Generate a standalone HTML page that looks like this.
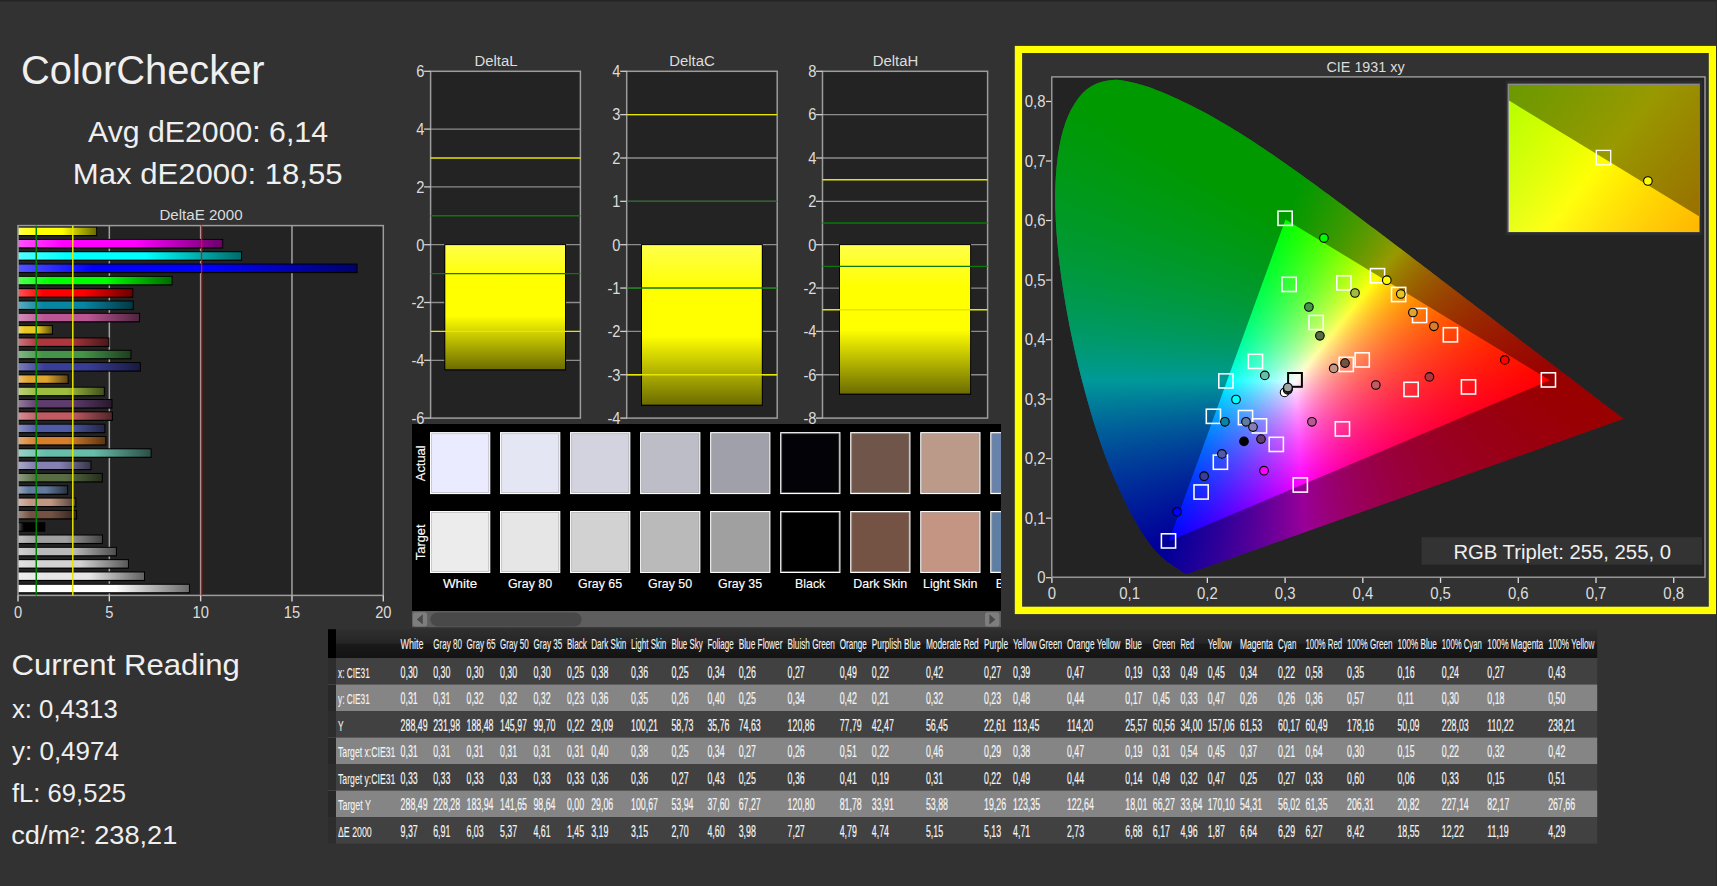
<!DOCTYPE html><html><head><meta charset="utf-8"><title>ColorChecker</title><style>
html,body{margin:0;padding:0;background:#323232;overflow:hidden}
body{width:1717px;height:886px;position:relative;font-family:"Liberation Sans",sans-serif}
svg{position:absolute;left:0;top:0;font-family:"Liberation Sans",sans-serif}
#cie{position:absolute;left:1052px;top:78px;width:653px;height:500px;clip-path:polygon(135.63px 495.82px,135.55px 495.82px,135.39px 495.88px,135.24px 495.88px,135.01px 495.94px,134.77px 495.94px,134.46px 495.94px,134.07px 495.94px,133.53px 495.76px,132.67px 495.35px,131.59px 494.69px,130.03px 493.68px,128.09px 492.31px,125.52px 490.58px,122.03px 488.26px,117.67px 485.28px,115.09px 483.39px,112.23px 481.11px,110.2px 479.4px,108.04px 477.47px,105.62px 475.04px,104.03px 473.3px,102.36px 471.42px,100.59px 469.33px,98.73px 467px,96.76px 464.37px,95.06px 461.99px,93.29px 459.48px,91.46px 456.78px,89.56px 453.85px,87.57px 450.64px,85.49px 447.1px,83.33px 443.28px,81.09px 439.22px,78.77px 434.88px,76.37px 430.22px,73.87px 425.2px,71.27px 419.76px,68.54px 413.96px,65.68px 407.82px,62.73px 401.32px,59.72px 394.41px,56.7px 387.07px,53.7px 379.26px,50.7px 370.97px,47.66px 362.22px,44.61px 353.03px,41.57px 343.43px,38.55px 333.45px,35.59px 323.1px,32.63px 312.28px,29.64px 300.94px,26.69px 289.22px,23.82px 277.23px,21.09px 265.12px,18.57px 253px,16.19px 240.73px,13.91px 228.19px,11.77px 215.51px,9.81px 202.85px,8.1px 190.34px,6.67px 178.13px,5.49px 166.11px,4.51px 154.15px,3.77px 142.34px,3.31px 130.78px,3.15px 119.57px,3.33px 108.8px,3.85px 98.38px,4.67px 88.19px,5.79px 78.36px,7.24px 68.98px,9.01px 60.15px,11.1px 51.98px,13.57px 44.41px,16.42px 37.35px,19.59px 30.84px,23.03px 24.94px,26.7px 19.7px,30.54px 15.17px,34.61px 11.43px,38.98px 8.43px,43.57px 6.1px,48.32px 4.34px,53.17px 3.06px,58.05px 2.19px,63.01px 1.84px,68.12px 2.12px,73.31px 2.88px,78.57px 4px,83.83px 5.32px,89.07px 6.72px,94.31px 8.27px,99.59px 10.1px,104.89px 12.14px,110.17px 14.32px,115.4px 16.57px,120.55px 18.81px,125.61px 21.06px,130.62px 23.39px,135.58px 25.78px,140.5px 28.23px,145.38px 30.74px,150.24px 33.28px,155.07px 35.87px,159.85px 38.51px,164.6px 41.2px,169.33px 43.93px,174.05px 46.72px,178.77px 49.54px,183.48px 52.41px,188.19px 55.33px,192.88px 58.3px,197.56px 61.3px,202.24px 64.34px,206.91px 67.41px,211.56px 70.5px,216.21px 73.64px,220.84px 76.81px,225.48px 80.01px,230.1px 83.23px,234.73px 86.47px,239.36px 89.73px,243.99px 93.01px,248.61px 96.32px,253.23px 99.65px,257.85px 103px,262.48px 106.36px,267.12px 109.74px,271.76px 113.13px,276.4px 116.55px,281.04px 119.97px,285.68px 123.41px,290.31px 126.85px,294.93px 130.29px,299.55px 133.75px,304.17px 137.22px,308.78px 140.69px,313.38px 144.17px,317.98px 147.63px,322.58px 151.1px,327.19px 154.57px,331.78px 158.04px,336.37px 161.51px,340.95px 164.97px,345.5px 168.42px,350.03px 171.87px,354.56px 175.31px,359.07px 178.74px,363.56px 182.17px,368.03px 185.58px,372.47px 188.97px,376.89px 192.34px,381.3px 195.71px,385.69px 199.06px,390.04px 202.39px,394.37px 205.7px,398.67px 208.98px,402.93px 212.24px,407.17px 215.48px,411.38px 218.7px,415.55px 221.89px,419.69px 225.04px,423.77px 228.16px,427.82px 231.24px,431.84px 234.3px,435.81px 237.32px,439.74px 240.31px,443.6px 243.25px,447.4px 246.15px,451.15px 249.01px,454.84px 251.84px,458.47px 254.63px,462.04px 257.36px,465.53px 260.04px,468.93px 262.64px,472.24px 265.17px,475.47px 267.64px,478.62px 270.04px,481.69px 272.38px,484.71px 274.68px,487.67px 276.94px,490.58px 279.16px,493.43px 281.34px,496.22px 283.47px,498.94px 285.54px,501.59px 287.56px,504.15px 289.51px,506.62px 291.38px,509.01px 293.19px,511.32px 294.94px,513.56px 296.63px,515.73px 298.27px,517.83px 299.87px,520.25px 301.72px,522.57px 303.49px,524.78px 305.19px,526.9px 306.82px,528.94px 308.39px,531.36px 310.24px,533.62px 311.98px,535.77px 313.62px,537.8px 315.18px,540.35px 317.11px,542.69px 318.88px,544.88px 320.54px,547.86px 322.82px,550.55px 324.88px,553.03px 326.79px,555.29px 328.52px,559.18px 331.5px,562.29px 333.82px,564.62px 335.61px,566.41px 336.98px,567.73px 337.99px,568.58px 338.64px,569.28px 339.18px,569.83px 339.6px,570.37px 340.01px,570.84px 340.37px,571.15px 340.61px,571.3px 340.73px,571.38px 340.79px)}#cie i{display:block;height:2px}#ins{position:absolute;left:1509px;top:85px;width:190px;height:147px;overflow:hidden}#ins i{display:block;height:3px}
</style></head><body>
<svg width="1717" height="886" viewBox="0 0 1717 886"><defs><linearGradient id="b0"><stop offset="0" stop-color="#ffff54"/><stop offset=".22" stop-color="#ffff00"/><stop offset=".57" stop-color="#ffff00"/><stop offset="1" stop-color="#6b6b00"/></linearGradient><linearGradient id="b1"><stop offset="0" stop-color="#ff54ff"/><stop offset=".22" stop-color="#ff00ff"/><stop offset=".57" stop-color="#ff00ff"/><stop offset="1" stop-color="#6b006b"/></linearGradient><linearGradient id="b2"><stop offset="0" stop-color="#54ffff"/><stop offset=".22" stop-color="#00ffff"/><stop offset=".57" stop-color="#00ffff"/><stop offset="1" stop-color="#006b6b"/></linearGradient><linearGradient id="b3"><stop offset="0" stop-color="#5454ff"/><stop offset=".22" stop-color="#0000ff"/><stop offset=".57" stop-color="#0000ff"/><stop offset="1" stop-color="#00006b"/></linearGradient><linearGradient id="b4"><stop offset="0" stop-color="#54ff54"/><stop offset=".22" stop-color="#00ff00"/><stop offset=".57" stop-color="#00ff00"/><stop offset="1" stop-color="#006b00"/></linearGradient><linearGradient id="b5"><stop offset="0" stop-color="#ff5454"/><stop offset=".22" stop-color="#ff0000"/><stop offset=".57" stop-color="#ff0000"/><stop offset="1" stop-color="#6b0000"/></linearGradient><linearGradient id="b6"><stop offset="0" stop-color="#5aadc0"/><stop offset=".22" stop-color="#0885a1"/><stop offset=".57" stop-color="#0885a1"/><stop offset="1" stop-color="#033844"/></linearGradient><linearGradient id="b7"><stop offset="0" stop-color="#d18eb8"/><stop offset=".22" stop-color="#bb5695"/><stop offset=".57" stop-color="#bb5695"/><stop offset="1" stop-color="#4f243f"/></linearGradient><linearGradient id="b8"><stop offset="0" stop-color="#efd969"/><stop offset=".22" stop-color="#e7c71f"/><stop offset=".57" stop-color="#e7c71f"/><stop offset="1" stop-color="#61540d"/></linearGradient><linearGradient id="b9"><stop offset="0" stop-color="#c9787c"/><stop offset=".22" stop-color="#af363c"/><stop offset=".57" stop-color="#af363c"/><stop offset="1" stop-color="#4a1719"/></linearGradient><linearGradient id="b10"><stop offset="0" stop-color="#83b785"/><stop offset=".22" stop-color="#469449"/><stop offset=".57" stop-color="#469449"/><stop offset="1" stop-color="#1d3e1f"/></linearGradient><linearGradient id="b11"><stop offset="0" stop-color="#7a7db9"/><stop offset=".22" stop-color="#383d96"/><stop offset=".57" stop-color="#383d96"/><stop offset="1" stop-color="#181a3f"/></linearGradient><linearGradient id="b12"><stop offset="0" stop-color="#eac173"/><stop offset=".22" stop-color="#e0a32e"/><stop offset=".57" stop-color="#e0a32e"/><stop offset="1" stop-color="#5e4413"/></linearGradient><linearGradient id="b13"><stop offset="0" stop-color="#bdd27f"/><stop offset=".22" stop-color="#9dbc40"/><stop offset=".57" stop-color="#9dbc40"/><stop offset="1" stop-color="#424f1b"/></linearGradient><linearGradient id="b14"><stop offset="0" stop-color="#937c9d"/><stop offset=".22" stop-color="#5e3c6c"/><stop offset=".57" stop-color="#5e3c6c"/><stop offset="1" stop-color="#27192d"/></linearGradient><linearGradient id="b15"><stop offset="0" stop-color="#d59096"/><stop offset=".22" stop-color="#c15a63"/><stop offset=".57" stop-color="#c15a63"/><stop offset="1" stop-color="#51262a"/></linearGradient><linearGradient id="b16"><stop offset="0" stop-color="#8a91c3"/><stop offset=".22" stop-color="#505ba6"/><stop offset=".57" stop-color="#505ba6"/><stop offset="1" stop-color="#222646"/></linearGradient><linearGradient id="b17"><stop offset="0" stop-color="#e4a972"/><stop offset=".22" stop-color="#d67e2c"/><stop offset=".57" stop-color="#d67e2c"/><stop offset="1" stop-color="#5a3512"/></linearGradient><linearGradient id="b18"><stop offset="0" stop-color="#99d3c6"/><stop offset=".22" stop-color="#67bdaa"/><stop offset=".57" stop-color="#67bdaa"/><stop offset="1" stop-color="#2b4f47"/></linearGradient><linearGradient id="b19"><stop offset="0" stop-color="#adaacb"/><stop offset=".22" stop-color="#8580b1"/><stop offset=".57" stop-color="#8580b1"/><stop offset="1" stop-color="#38364a"/></linearGradient><linearGradient id="b20"><stop offset="0" stop-color="#8e9d81"/><stop offset=".22" stop-color="#576c43"/><stop offset=".57" stop-color="#576c43"/><stop offset="1" stop-color="#252d1c"/></linearGradient><linearGradient id="b21"><stop offset="0" stop-color="#96a6bd"/><stop offset=".22" stop-color="#627a9d"/><stop offset=".57" stop-color="#627a9d"/><stop offset="1" stop-color="#293342"/></linearGradient><linearGradient id="b22"><stop offset="0" stop-color="#d6b9ab"/><stop offset=".22" stop-color="#c29682"/><stop offset=".57" stop-color="#c29682"/><stop offset="1" stop-color="#513f37"/></linearGradient><linearGradient id="b23"><stop offset="0" stop-color="#a18b82"/><stop offset=".22" stop-color="#735244"/><stop offset=".57" stop-color="#735244"/><stop offset="1" stop-color="#30221d"/></linearGradient><linearGradient id="b24"><stop offset="0" stop-color="#545454"/><stop offset=".22" stop-color="#000000"/><stop offset=".57" stop-color="#000000"/><stop offset="1" stop-color="#000000"/></linearGradient><linearGradient id="b25"><stop offset="0" stop-color="#bfbfbf"/><stop offset=".22" stop-color="#a0a0a0"/><stop offset=".57" stop-color="#a0a0a0"/><stop offset="1" stop-color="#434343"/></linearGradient><linearGradient id="b26"><stop offset="0" stop-color="#d1d1d1"/><stop offset=".22" stop-color="#bababa"/><stop offset=".57" stop-color="#bababa"/><stop offset="1" stop-color="#4e4e4e"/></linearGradient><linearGradient id="b27"><stop offset="0" stop-color="#e1e1e1"/><stop offset=".22" stop-color="#d2d2d2"/><stop offset=".57" stop-color="#d2d2d2"/><stop offset="1" stop-color="#585858"/></linearGradient><linearGradient id="b28"><stop offset="0" stop-color="#eeeeee"/><stop offset=".22" stop-color="#e6e6e6"/><stop offset=".57" stop-color="#e6e6e6"/><stop offset="1" stop-color="#616161"/></linearGradient><linearGradient id="b29"><stop offset="0" stop-color="#ffffff"/><stop offset=".22" stop-color="#ffffff"/><stop offset=".57" stop-color="#ffffff"/><stop offset="1" stop-color="#6b6b6b"/></linearGradient><linearGradient id="yb" x1="0" y1="0" x2="0" y2="1"><stop offset="0" stop-color="#ffff4a"/><stop offset=".28" stop-color="#ffff00"/><stop offset=".57" stop-color="#ffff00"/><stop offset="1" stop-color="#6c6c00"/></linearGradient><clipPath id="swc"><rect x="412" y="424" width="589" height="203.5"/></clipPath><linearGradient id="th" x1="0" y1="0" x2="0" y2="1"><stop offset="0" stop-color="#2f2f2f"/><stop offset=".48" stop-color="#252525"/><stop offset=".52" stop-color="#1a1a1a"/><stop offset="1" stop-color="#131313"/></linearGradient></defs>
<rect x="0" y="0" width="1717" height="1.5" fill="#242424"/>
<text x="21" y="84.1" font-size="40.12" fill="#efefef" textLength="243.6" lengthAdjust="spacingAndGlyphs">ColorChecker</text>
<text x="88" y="141.8" font-size="29.51" fill="#efefef" textLength="240" lengthAdjust="spacingAndGlyphs">Avg dE2000: 6,14</text>
<text x="72.8" y="183.8" font-size="29.51" fill="#efefef" textLength="269.8" lengthAdjust="spacingAndGlyphs">Max dE2000: 18,55</text>
<text x="159.4" y="219.9" font-size="15.12" fill="#dcdcdc" textLength="83.2" lengthAdjust="spacingAndGlyphs">DeltaE 2000</text>
<text x="11.6" y="674.8" font-size="29.94" fill="#efefef" textLength="228.2" lengthAdjust="spacingAndGlyphs">Current Reading</text>
<text x="12" y="718.2" font-size="25.29" fill="#efefef" textLength="105.7" lengthAdjust="spacingAndGlyphs">x: 0,4313</text>
<text x="12" y="760.2" font-size="25.29" fill="#efefef" textLength="106.9" lengthAdjust="spacingAndGlyphs">y: 0,4974</text>
<text x="12" y="802" font-size="25.29" fill="#efefef" textLength="114" lengthAdjust="spacingAndGlyphs">fL: 69,525</text>
<text x="11.2" y="844" font-size="25.29" fill="#efefef" textLength="166.1" lengthAdjust="spacingAndGlyphs">cd/m²: 238,21</text>
<rect x="18" y="225.6" width="365.3" height="369.8" fill="#232323"/>
<line x1="109.33" y1="225.6" x2="109.33" y2="595.4" stroke="#a2a2a2" stroke-width="1.5"/>
<line x1="200.65" y1="225.6" x2="200.65" y2="595.4" stroke="#a2a2a2" stroke-width="1.5"/>
<line x1="291.98" y1="225.6" x2="291.98" y2="595.4" stroke="#a2a2a2" stroke-width="1.5"/>
<rect x="18" y="226.6" width="79.16" height="9.6" fill="#000"/>
<rect x="18" y="227.6" width="78.16" height="7.4" fill="url(#b0)"/>
<rect x="18" y="238.92" width="205.19" height="9.6" fill="#000"/>
<rect x="18" y="239.92" width="204.19" height="7.4" fill="url(#b1)"/>
<rect x="18" y="251.23" width="224" height="9.6" fill="#000"/>
<rect x="18" y="252.23" width="223" height="7.4" fill="url(#b2)"/>
<rect x="18" y="263.55" width="339.62" height="9.6" fill="#000"/>
<rect x="18" y="264.55" width="338.62" height="7.4" fill="url(#b3)"/>
<rect x="18" y="275.87" width="154.59" height="9.6" fill="#000"/>
<rect x="18" y="276.87" width="153.59" height="7.4" fill="url(#b4)"/>
<rect x="18" y="288.19" width="115.32" height="9.6" fill="#000"/>
<rect x="18" y="289.19" width="114.32" height="7.4" fill="url(#b5)"/>
<rect x="18" y="300.5" width="115.69" height="9.6" fill="#000"/>
<rect x="18" y="301.5" width="114.69" height="7.4" fill="url(#b6)"/>
<rect x="18" y="312.82" width="122.08" height="9.6" fill="#000"/>
<rect x="18" y="313.82" width="121.08" height="7.4" fill="url(#b7)"/>
<rect x="18" y="325.14" width="34.96" height="9.6" fill="#000"/>
<rect x="18" y="326.14" width="33.96" height="7.4" fill="url(#b8)"/>
<rect x="18" y="337.45" width="91.39" height="9.6" fill="#000"/>
<rect x="18" y="338.45" width="90.39" height="7.4" fill="url(#b9)"/>
<rect x="18" y="349.77" width="113.5" height="9.6" fill="#000"/>
<rect x="18" y="350.77" width="112.5" height="7.4" fill="url(#b10)"/>
<rect x="18" y="362.09" width="122.81" height="9.6" fill="#000"/>
<rect x="18" y="363.09" width="121.81" height="7.4" fill="url(#b11)"/>
<rect x="18" y="374.4" width="50.66" height="9.6" fill="#000"/>
<rect x="18" y="375.4" width="49.66" height="7.4" fill="url(#b12)"/>
<rect x="18" y="386.72" width="86.83" height="9.6" fill="#000"/>
<rect x="18" y="387.72" width="85.83" height="7.4" fill="url(#b13)"/>
<rect x="18" y="399.04" width="94.5" height="9.6" fill="#000"/>
<rect x="18" y="400.04" width="93.5" height="7.4" fill="url(#b14)"/>
<rect x="18" y="411.36" width="94.86" height="9.6" fill="#000"/>
<rect x="18" y="412.36" width="93.86" height="7.4" fill="url(#b15)"/>
<rect x="18" y="423.67" width="87.38" height="9.6" fill="#000"/>
<rect x="18" y="424.67" width="86.38" height="7.4" fill="url(#b16)"/>
<rect x="18" y="435.99" width="88.29" height="9.6" fill="#000"/>
<rect x="18" y="436.99" width="87.29" height="7.4" fill="url(#b17)"/>
<rect x="18" y="448.31" width="133.59" height="9.6" fill="#000"/>
<rect x="18" y="449.31" width="132.59" height="7.4" fill="url(#b18)"/>
<rect x="18" y="460.62" width="73.49" height="9.6" fill="#000"/>
<rect x="18" y="461.62" width="72.49" height="7.4" fill="url(#b19)"/>
<rect x="18" y="472.94" width="84.82" height="9.6" fill="#000"/>
<rect x="18" y="473.94" width="83.82" height="7.4" fill="url(#b20)"/>
<rect x="18" y="485.26" width="50.12" height="9.6" fill="#000"/>
<rect x="18" y="486.26" width="49.12" height="7.4" fill="url(#b21)"/>
<rect x="18" y="497.57" width="58.33" height="9.6" fill="#000"/>
<rect x="18" y="498.57" width="57.33" height="7.4" fill="url(#b22)"/>
<rect x="18" y="509.89" width="59.07" height="9.6" fill="#000"/>
<rect x="18" y="510.89" width="58.07" height="7.4" fill="url(#b23)"/>
<rect x="18" y="522.21" width="27.28" height="9.6" fill="#000"/>
<rect x="18" y="523.21" width="26.28" height="7.4" fill="url(#b24)"/>
<rect x="18" y="534.52" width="85" height="9.6" fill="#000"/>
<rect x="18" y="535.52" width="84" height="7.4" fill="url(#b25)"/>
<rect x="18" y="546.84" width="98.88" height="9.6" fill="#000"/>
<rect x="18" y="547.84" width="97.88" height="7.4" fill="url(#b26)"/>
<rect x="18" y="559.16" width="110.94" height="9.6" fill="#000"/>
<rect x="18" y="560.16" width="109.94" height="7.4" fill="url(#b27)"/>
<rect x="18" y="571.48" width="127.01" height="9.6" fill="#000"/>
<rect x="18" y="572.48" width="126.01" height="7.4" fill="url(#b28)"/>
<rect x="18" y="583.79" width="171.94" height="9.6" fill="#000"/>
<rect x="18" y="584.79" width="170.94" height="7.4" fill="url(#b29)"/>
<rect x="18" y="225.6" width="365.3" height="369.8" fill="none" stroke="#9c9c9c" stroke-width="1.5"/>
<line x1="36.27" y1="225.6" x2="36.27" y2="595.4" stroke="#008000" stroke-width="1.5"/>
<line x1="72.8" y1="225.6" x2="72.8" y2="595.4" stroke="#e6e600" stroke-width="1.5"/>
<line x1="201.55" y1="225.6" x2="201.55" y2="595.4" stroke="#ff0000" stroke-width="1.3"/>
<line x1="18" y1="595.4" x2="18" y2="601.4" stroke="#d0d0d0" stroke-width="1.4"/>
<text x="18" y="618.2" font-size="15.8" fill="#dcdcdc" text-anchor="middle" textLength="8.17" lengthAdjust="spacingAndGlyphs">0</text>
<line x1="109.33" y1="595.4" x2="109.33" y2="601.4" stroke="#d0d0d0" stroke-width="1.4"/>
<text x="109.33" y="618.2" font-size="15.8" fill="#dcdcdc" text-anchor="middle" textLength="8.17" lengthAdjust="spacingAndGlyphs">5</text>
<line x1="200.65" y1="595.4" x2="200.65" y2="601.4" stroke="#d0d0d0" stroke-width="1.4"/>
<text x="200.65" y="618.2" font-size="15.8" fill="#dcdcdc" text-anchor="middle" textLength="16.34" lengthAdjust="spacingAndGlyphs">10</text>
<line x1="291.98" y1="595.4" x2="291.98" y2="601.4" stroke="#d0d0d0" stroke-width="1.4"/>
<text x="291.98" y="618.2" font-size="15.8" fill="#dcdcdc" text-anchor="middle" textLength="16.34" lengthAdjust="spacingAndGlyphs">15</text>
<line x1="383.3" y1="595.4" x2="383.3" y2="601.4" stroke="#d0d0d0" stroke-width="1.4"/>
<text x="383.3" y="618.2" font-size="15.8" fill="#dcdcdc" text-anchor="middle" textLength="16.34" lengthAdjust="spacingAndGlyphs">20</text>
<rect x="430.6" y="71.3" width="149.8" height="346.8" fill="#232323"/>
<line x1="430.6" y1="360.3" x2="580.4" y2="360.3" stroke="#8c8c8c" stroke-width="1.3"/>
<line x1="430.6" y1="302.5" x2="580.4" y2="302.5" stroke="#8c8c8c" stroke-width="1.3"/>
<line x1="430.6" y1="244.7" x2="580.4" y2="244.7" stroke="#8c8c8c" stroke-width="1.3"/>
<line x1="430.6" y1="186.9" x2="580.4" y2="186.9" stroke="#8c8c8c" stroke-width="1.3"/>
<line x1="430.6" y1="129.1" x2="580.4" y2="129.1" stroke="#8c8c8c" stroke-width="1.3"/>
<rect x="444.3" y="244.1" width="121.7" height="126.36" fill="#000"/>
<rect x="445.3" y="245.1" width="119.7" height="124.16" fill="url(#yb)"/>
<rect x="430.6" y="71.3" width="149.8" height="346.8" fill="none" stroke="#9c9c9c" stroke-width="1.5"/>
<line x1="430.6" y1="215.8" x2="580.4" y2="215.8" stroke="#0a7a0a" stroke-width="1.4"/>
<line x1="430.6" y1="273.6" x2="580.4" y2="273.6" stroke="#0a7a0a" stroke-width="1.4"/>
<line x1="430.6" y1="158" x2="580.4" y2="158" stroke="#e6e600" stroke-width="1.4"/>
<line x1="430.6" y1="331.4" x2="580.4" y2="331.4" stroke="#e6e600" stroke-width="1.4"/>
<line x1="424.1" y1="418.1" x2="430.6" y2="418.1" stroke="#d0d0d0" stroke-width="1.3"/>
<text x="424.5" y="423.9" font-size="15.8" fill="#dcdcdc" text-anchor="end" textLength="13.07" lengthAdjust="spacingAndGlyphs">-6</text>
<line x1="424.1" y1="360.3" x2="430.6" y2="360.3" stroke="#d0d0d0" stroke-width="1.3"/>
<text x="424.5" y="366.1" font-size="15.8" fill="#dcdcdc" text-anchor="end" textLength="13.07" lengthAdjust="spacingAndGlyphs">-4</text>
<line x1="424.1" y1="302.5" x2="430.6" y2="302.5" stroke="#d0d0d0" stroke-width="1.3"/>
<text x="424.5" y="308.3" font-size="15.8" fill="#dcdcdc" text-anchor="end" textLength="13.07" lengthAdjust="spacingAndGlyphs">-2</text>
<line x1="424.1" y1="244.7" x2="430.6" y2="244.7" stroke="#d0d0d0" stroke-width="1.3"/>
<text x="424.5" y="250.5" font-size="15.8" fill="#dcdcdc" text-anchor="end" textLength="8.17" lengthAdjust="spacingAndGlyphs">0</text>
<line x1="424.1" y1="186.9" x2="430.6" y2="186.9" stroke="#d0d0d0" stroke-width="1.3"/>
<text x="424.5" y="192.7" font-size="15.8" fill="#dcdcdc" text-anchor="end" textLength="8.17" lengthAdjust="spacingAndGlyphs">2</text>
<line x1="424.1" y1="129.1" x2="430.6" y2="129.1" stroke="#d0d0d0" stroke-width="1.3"/>
<text x="424.5" y="134.9" font-size="15.8" fill="#dcdcdc" text-anchor="end" textLength="8.17" lengthAdjust="spacingAndGlyphs">4</text>
<line x1="424.1" y1="71.3" x2="430.6" y2="71.3" stroke="#d0d0d0" stroke-width="1.3"/>
<text x="424.5" y="77.1" font-size="15.8" fill="#dcdcdc" text-anchor="end" textLength="8.17" lengthAdjust="spacingAndGlyphs">6</text>
<text x="496" y="66.2" font-size="14.9" fill="#dcdcdc" text-anchor="middle">DeltaL</text>
<rect x="626.7" y="71.3" width="150.5" height="346.8" fill="#232323"/>
<line x1="626.7" y1="374.75" x2="777.2" y2="374.75" stroke="#8c8c8c" stroke-width="1.3"/>
<line x1="626.7" y1="331.4" x2="777.2" y2="331.4" stroke="#8c8c8c" stroke-width="1.3"/>
<line x1="626.7" y1="288.05" x2="777.2" y2="288.05" stroke="#8c8c8c" stroke-width="1.3"/>
<line x1="626.7" y1="244.7" x2="777.2" y2="244.7" stroke="#8c8c8c" stroke-width="1.3"/>
<line x1="626.7" y1="201.35" x2="777.2" y2="201.35" stroke="#8c8c8c" stroke-width="1.3"/>
<line x1="626.7" y1="158" x2="777.2" y2="158" stroke="#8c8c8c" stroke-width="1.3"/>
<line x1="626.7" y1="114.65" x2="777.2" y2="114.65" stroke="#8c8c8c" stroke-width="1.3"/>
<rect x="641" y="244.1" width="121.8" height="161.76" fill="#000"/>
<rect x="642" y="245.1" width="119.8" height="159.56" fill="url(#yb)"/>
<rect x="626.7" y="71.3" width="150.5" height="346.8" fill="none" stroke="#9c9c9c" stroke-width="1.5"/>
<line x1="626.7" y1="201.35" x2="777.2" y2="201.35" stroke="#0a7a0a" stroke-width="1.4"/>
<line x1="626.7" y1="288.05" x2="777.2" y2="288.05" stroke="#0a7a0a" stroke-width="1.4"/>
<line x1="626.7" y1="114.65" x2="777.2" y2="114.65" stroke="#e6e600" stroke-width="1.4"/>
<line x1="626.7" y1="374.75" x2="777.2" y2="374.75" stroke="#e6e600" stroke-width="1.4"/>
<line x1="620.2" y1="418.1" x2="626.7" y2="418.1" stroke="#d0d0d0" stroke-width="1.3"/>
<text x="620.5" y="423.9" font-size="15.8" fill="#dcdcdc" text-anchor="end" textLength="13.07" lengthAdjust="spacingAndGlyphs">-4</text>
<line x1="620.2" y1="374.75" x2="626.7" y2="374.75" stroke="#d0d0d0" stroke-width="1.3"/>
<text x="620.5" y="380.55" font-size="15.8" fill="#dcdcdc" text-anchor="end" textLength="13.07" lengthAdjust="spacingAndGlyphs">-3</text>
<line x1="620.2" y1="331.4" x2="626.7" y2="331.4" stroke="#d0d0d0" stroke-width="1.3"/>
<text x="620.5" y="337.2" font-size="15.8" fill="#dcdcdc" text-anchor="end" textLength="13.07" lengthAdjust="spacingAndGlyphs">-2</text>
<line x1="620.2" y1="288.05" x2="626.7" y2="288.05" stroke="#d0d0d0" stroke-width="1.3"/>
<text x="620.5" y="293.85" font-size="15.8" fill="#dcdcdc" text-anchor="end" textLength="13.07" lengthAdjust="spacingAndGlyphs">-1</text>
<line x1="620.2" y1="244.7" x2="626.7" y2="244.7" stroke="#d0d0d0" stroke-width="1.3"/>
<text x="620.5" y="250.5" font-size="15.8" fill="#dcdcdc" text-anchor="end" textLength="8.17" lengthAdjust="spacingAndGlyphs">0</text>
<line x1="620.2" y1="201.35" x2="626.7" y2="201.35" stroke="#d0d0d0" stroke-width="1.3"/>
<text x="620.5" y="207.15" font-size="15.8" fill="#dcdcdc" text-anchor="end" textLength="8.17" lengthAdjust="spacingAndGlyphs">1</text>
<line x1="620.2" y1="158" x2="626.7" y2="158" stroke="#d0d0d0" stroke-width="1.3"/>
<text x="620.5" y="163.8" font-size="15.8" fill="#dcdcdc" text-anchor="end" textLength="8.17" lengthAdjust="spacingAndGlyphs">2</text>
<line x1="620.2" y1="114.65" x2="626.7" y2="114.65" stroke="#d0d0d0" stroke-width="1.3"/>
<text x="620.5" y="120.45" font-size="15.8" fill="#dcdcdc" text-anchor="end" textLength="8.17" lengthAdjust="spacingAndGlyphs">3</text>
<line x1="620.2" y1="71.3" x2="626.7" y2="71.3" stroke="#d0d0d0" stroke-width="1.3"/>
<text x="620.5" y="77.1" font-size="15.8" fill="#dcdcdc" text-anchor="end" textLength="8.17" lengthAdjust="spacingAndGlyphs">4</text>
<text x="692" y="66.2" font-size="14.9" fill="#dcdcdc" text-anchor="middle">DeltaC</text>
<rect x="822.5" y="71.3" width="165.1" height="346.8" fill="#232323"/>
<line x1="822.5" y1="374.75" x2="987.6" y2="374.75" stroke="#8c8c8c" stroke-width="1.3"/>
<line x1="822.5" y1="331.4" x2="987.6" y2="331.4" stroke="#8c8c8c" stroke-width="1.3"/>
<line x1="822.5" y1="288.05" x2="987.6" y2="288.05" stroke="#8c8c8c" stroke-width="1.3"/>
<line x1="822.5" y1="244.7" x2="987.6" y2="244.7" stroke="#8c8c8c" stroke-width="1.3"/>
<line x1="822.5" y1="201.35" x2="987.6" y2="201.35" stroke="#8c8c8c" stroke-width="1.3"/>
<line x1="822.5" y1="158" x2="987.6" y2="158" stroke="#8c8c8c" stroke-width="1.3"/>
<line x1="822.5" y1="114.65" x2="987.6" y2="114.65" stroke="#8c8c8c" stroke-width="1.3"/>
<rect x="839" y="244.1" width="132.1" height="150.71" fill="#000"/>
<rect x="840" y="245.1" width="130.1" height="148.51" fill="url(#yb)"/>
<rect x="822.5" y="71.3" width="165.1" height="346.8" fill="none" stroke="#9c9c9c" stroke-width="1.5"/>
<line x1="822.5" y1="223.03" x2="987.6" y2="223.03" stroke="#0a7a0a" stroke-width="1.4"/>
<line x1="822.5" y1="266.38" x2="987.6" y2="266.38" stroke="#0a7a0a" stroke-width="1.4"/>
<line x1="822.5" y1="179.68" x2="987.6" y2="179.68" stroke="#e6e600" stroke-width="1.4"/>
<line x1="822.5" y1="309.73" x2="987.6" y2="309.73" stroke="#e6e600" stroke-width="1.4"/>
<line x1="816" y1="418.1" x2="822.5" y2="418.1" stroke="#d0d0d0" stroke-width="1.3"/>
<text x="816.5" y="423.9" font-size="15.8" fill="#dcdcdc" text-anchor="end" textLength="13.07" lengthAdjust="spacingAndGlyphs">-8</text>
<line x1="816" y1="374.75" x2="822.5" y2="374.75" stroke="#d0d0d0" stroke-width="1.3"/>
<text x="816.5" y="380.55" font-size="15.8" fill="#dcdcdc" text-anchor="end" textLength="13.07" lengthAdjust="spacingAndGlyphs">-6</text>
<line x1="816" y1="331.4" x2="822.5" y2="331.4" stroke="#d0d0d0" stroke-width="1.3"/>
<text x="816.5" y="337.2" font-size="15.8" fill="#dcdcdc" text-anchor="end" textLength="13.07" lengthAdjust="spacingAndGlyphs">-4</text>
<line x1="816" y1="288.05" x2="822.5" y2="288.05" stroke="#d0d0d0" stroke-width="1.3"/>
<text x="816.5" y="293.85" font-size="15.8" fill="#dcdcdc" text-anchor="end" textLength="13.07" lengthAdjust="spacingAndGlyphs">-2</text>
<line x1="816" y1="244.7" x2="822.5" y2="244.7" stroke="#d0d0d0" stroke-width="1.3"/>
<text x="816.5" y="250.5" font-size="15.8" fill="#dcdcdc" text-anchor="end" textLength="8.17" lengthAdjust="spacingAndGlyphs">0</text>
<line x1="816" y1="201.35" x2="822.5" y2="201.35" stroke="#d0d0d0" stroke-width="1.3"/>
<text x="816.5" y="207.15" font-size="15.8" fill="#dcdcdc" text-anchor="end" textLength="8.17" lengthAdjust="spacingAndGlyphs">2</text>
<line x1="816" y1="158" x2="822.5" y2="158" stroke="#d0d0d0" stroke-width="1.3"/>
<text x="816.5" y="163.8" font-size="15.8" fill="#dcdcdc" text-anchor="end" textLength="8.17" lengthAdjust="spacingAndGlyphs">4</text>
<line x1="816" y1="114.65" x2="822.5" y2="114.65" stroke="#d0d0d0" stroke-width="1.3"/>
<text x="816.5" y="120.45" font-size="15.8" fill="#dcdcdc" text-anchor="end" textLength="8.17" lengthAdjust="spacingAndGlyphs">6</text>
<line x1="816" y1="71.3" x2="822.5" y2="71.3" stroke="#d0d0d0" stroke-width="1.3"/>
<text x="816.5" y="77.1" font-size="15.8" fill="#dcdcdc" text-anchor="end" textLength="8.17" lengthAdjust="spacingAndGlyphs">8</text>
<text x="895.5" y="66.2" font-size="14.9" fill="#dcdcdc" text-anchor="middle">DeltaH</text>
<rect x="412" y="424" width="589" height="203.5" fill="#000"/>
<g clip-path="url(#swc)">
<rect x="430.6" y="432.7" width="59.1" height="60.8" fill="#ebebff" stroke="#fff" stroke-width="1.2"/>
<rect x="431.6" y="433.7" width="57.1" height="58.8" fill="none" stroke="#9a9a9a" stroke-opacity=".55" stroke-width=".8"/>
<rect x="430.6" y="511.6" width="59.1" height="60.8" fill="#ececec" stroke="#fff" stroke-width="1.2"/>
<rect x="431.6" y="512.6" width="57.1" height="58.8" fill="none" stroke="#9a9a9a" stroke-opacity=".55" stroke-width=".8"/>
<text x="460" y="587.8" font-size="13.4" fill="#fff" text-anchor="middle" textLength="34.25" lengthAdjust="spacingAndGlyphs" stroke="#fff" stroke-width=".15">White</text>
<rect x="500.63" y="432.7" width="59.1" height="60.8" fill="#e5e6f4" stroke="#fff" stroke-width="1.2"/>
<rect x="501.63" y="433.7" width="57.1" height="58.8" fill="none" stroke="#9a9a9a" stroke-opacity=".55" stroke-width=".8"/>
<rect x="500.63" y="511.6" width="59.1" height="60.8" fill="#e6e6e6" stroke="#fff" stroke-width="1.2"/>
<rect x="501.63" y="512.6" width="57.1" height="58.8" fill="none" stroke="#9a9a9a" stroke-opacity=".55" stroke-width=".8"/>
<text x="530.03" y="587.8" font-size="13.4" fill="#fff" text-anchor="middle" textLength="44.09" lengthAdjust="spacingAndGlyphs" stroke="#fff" stroke-width=".15">Gray 80</text>
<rect x="570.66" y="432.7" width="59.1" height="60.8" fill="#d3d3e0" stroke="#fff" stroke-width="1.2"/>
<rect x="571.66" y="433.7" width="57.1" height="58.8" fill="none" stroke="#9a9a9a" stroke-opacity=".55" stroke-width=".8"/>
<rect x="570.66" y="511.6" width="59.1" height="60.8" fill="#d2d2d2" stroke="#fff" stroke-width="1.2"/>
<rect x="571.66" y="512.6" width="57.1" height="58.8" fill="none" stroke="#9a9a9a" stroke-opacity=".55" stroke-width=".8"/>
<text x="600.06" y="587.8" font-size="13.4" fill="#fff" text-anchor="middle" textLength="44.09" lengthAdjust="spacingAndGlyphs" stroke="#fff" stroke-width=".15">Gray 65</text>
<rect x="640.69" y="432.7" width="59.1" height="60.8" fill="#bdbdc8" stroke="#fff" stroke-width="1.2"/>
<rect x="641.69" y="433.7" width="57.1" height="58.8" fill="none" stroke="#9a9a9a" stroke-opacity=".55" stroke-width=".8"/>
<rect x="640.69" y="511.6" width="59.1" height="60.8" fill="#bababa" stroke="#fff" stroke-width="1.2"/>
<rect x="641.69" y="512.6" width="57.1" height="58.8" fill="none" stroke="#9a9a9a" stroke-opacity=".55" stroke-width=".8"/>
<text x="670.09" y="587.8" font-size="13.4" fill="#fff" text-anchor="middle" textLength="44.09" lengthAdjust="spacingAndGlyphs" stroke="#fff" stroke-width=".15">Gray 50</text>
<rect x="710.72" y="432.7" width="59.1" height="60.8" fill="#a0a0aa" stroke="#fff" stroke-width="1.2"/>
<rect x="711.72" y="433.7" width="57.1" height="58.8" fill="none" stroke="#9a9a9a" stroke-opacity=".55" stroke-width=".8"/>
<rect x="710.72" y="511.6" width="59.1" height="60.8" fill="#a0a0a0" stroke="#fff" stroke-width="1.2"/>
<rect x="711.72" y="512.6" width="57.1" height="58.8" fill="none" stroke="#9a9a9a" stroke-opacity=".55" stroke-width=".8"/>
<text x="740.12" y="587.8" font-size="13.4" fill="#fff" text-anchor="middle" textLength="44.09" lengthAdjust="spacingAndGlyphs" stroke="#fff" stroke-width=".15">Gray 35</text>
<rect x="780.75" y="432.7" width="59.1" height="60.8" fill="#030307" stroke="#fff" stroke-width="1.2"/>
<rect x="781.75" y="433.7" width="57.1" height="58.8" fill="none" stroke="#9a9a9a" stroke-opacity=".55" stroke-width=".8"/>
<rect x="780.75" y="511.6" width="59.1" height="60.8" fill="#000000" stroke="#fff" stroke-width="1.2"/>
<rect x="781.75" y="512.6" width="57.1" height="58.8" fill="none" stroke="#9a9a9a" stroke-opacity=".55" stroke-width=".8"/>
<text x="810.15" y="587.8" font-size="13.4" fill="#fff" text-anchor="middle" textLength="30.31" lengthAdjust="spacingAndGlyphs" stroke="#fff" stroke-width=".15">Black</text>
<rect x="850.78" y="432.7" width="59.1" height="60.8" fill="#70554a" stroke="#fff" stroke-width="1.2"/>
<rect x="851.78" y="433.7" width="57.1" height="58.8" fill="none" stroke="#9a9a9a" stroke-opacity=".55" stroke-width=".8"/>
<rect x="850.78" y="511.6" width="59.1" height="60.8" fill="#755344" stroke="#fff" stroke-width="1.2"/>
<rect x="851.78" y="512.6" width="57.1" height="58.8" fill="none" stroke="#9a9a9a" stroke-opacity=".55" stroke-width=".8"/>
<text x="880.18" y="587.8" font-size="13.4" fill="#fff" text-anchor="middle" textLength="53.73" lengthAdjust="spacingAndGlyphs" stroke="#fff" stroke-width=".15">Dark Skin</text>
<rect x="920.81" y="432.7" width="59.1" height="60.8" fill="#bc9a8a" stroke="#fff" stroke-width="1.2"/>
<rect x="921.81" y="433.7" width="57.1" height="58.8" fill="none" stroke="#9a9a9a" stroke-opacity=".55" stroke-width=".8"/>
<rect x="920.81" y="511.6" width="59.1" height="60.8" fill="#c49583" stroke="#fff" stroke-width="1.2"/>
<rect x="921.81" y="512.6" width="57.1" height="58.8" fill="none" stroke="#9a9a9a" stroke-opacity=".55" stroke-width=".8"/>
<text x="950.21" y="587.8" font-size="13.4" fill="#fff" text-anchor="middle" textLength="54.43" lengthAdjust="spacingAndGlyphs" stroke="#fff" stroke-width=".15">Light Skin</text>
<rect x="990.84" y="432.7" width="59.1" height="60.8" fill="#6982ab" stroke="#fff" stroke-width="1.2"/>
<rect x="991.84" y="433.7" width="57.1" height="58.8" fill="none" stroke="#9a9a9a" stroke-opacity=".55" stroke-width=".8"/>
<rect x="990.84" y="511.6" width="59.1" height="60.8" fill="#5f7ea3" stroke="#fff" stroke-width="1.2"/>
<rect x="991.84" y="512.6" width="57.1" height="58.8" fill="none" stroke="#9a9a9a" stroke-opacity=".55" stroke-width=".8"/>
<text x="1020.24" y="587.8" font-size="13.4" fill="#fff" text-anchor="middle" textLength="48.91" lengthAdjust="spacingAndGlyphs" stroke="#fff" stroke-width=".15">Blue Sky</text>
<text transform="translate(424.5,463.3) rotate(-90)" text-anchor="middle" font-size="12.9" fill="#fff" stroke="#fff" stroke-width=".15">Actual</text>
<text transform="translate(424.5,542.3) rotate(-90)" text-anchor="middle" font-size="12.9" fill="#fff" stroke="#fff" stroke-width=".15">Target</text>
</g>
<rect x="412" y="611" width="589" height="16.5" fill="#5e5e5e"/>
<rect x="430.4" y="612.4" width="151.2" height="14" fill="#494949" rx="7" ry="7"/>
<rect x="412.8" y="612.3" width="14.4" height="14.2" fill="#7e7e7e" rx="2.5" ry="2.5"/>
<path d="M416.8 619.4 L422.8 614.2 L422.8 624.6 Z" fill="#4a4a4a"/>
<rect x="985" y="612.3" width="14.4" height="14.2" fill="#7e7e7e" rx="2.5" ry="2.5"/>
<path d="M995.4 619.4 L989.4 614.2 L989.4 624.6 Z" fill="#4a4a4a"/>
<rect x="328" y="629.2" width="1269.2" height="28.8" fill="url(#th)"/>
<rect x="328" y="629.2" width="8" height="28.8" fill="#000"/>
<rect x="328" y="658" width="1269.2" height="26.57" fill="#414141"/>
<rect x="328" y="658" width="8" height="26.57" fill="#2d2d2d"/>
<rect x="328" y="684.52" width="1269.2" height="26.57" fill="#858585"/>
<rect x="328" y="684.52" width="8" height="26.57" fill="#282828"/>
<rect x="328" y="711.04" width="1269.2" height="26.57" fill="#414141"/>
<rect x="328" y="711.04" width="8" height="26.57" fill="#2d2d2d"/>
<rect x="328" y="737.56" width="1269.2" height="26.57" fill="#858585"/>
<rect x="328" y="737.56" width="8" height="26.57" fill="#282828"/>
<rect x="328" y="764.08" width="1269.2" height="26.57" fill="#414141"/>
<rect x="328" y="764.08" width="8" height="26.57" fill="#2d2d2d"/>
<rect x="328" y="790.6" width="1269.2" height="26.57" fill="#858585"/>
<rect x="328" y="790.6" width="8" height="26.57" fill="#282828"/>
<rect x="328" y="817.12" width="1269.2" height="26.57" fill="#414141"/>
<rect x="328" y="817.12" width="8" height="26.57" fill="#2d2d2d"/>
<g font-size="15" fill="#f4f4f4" stroke="#f4f4f4" stroke-width=".12"><text x="400.6" y="648.8" textLength="23" lengthAdjust="spacingAndGlyphs">White</text><text x="433.2" y="648.8" textLength="28.8" lengthAdjust="spacingAndGlyphs">Gray 80</text><text x="466.5" y="648.8" textLength="29" lengthAdjust="spacingAndGlyphs">Gray 65</text><text x="500" y="648.8" textLength="28.8" lengthAdjust="spacingAndGlyphs">Gray 50</text><text x="533.4" y="648.8" textLength="28.8" lengthAdjust="spacingAndGlyphs">Gray 35</text><text x="566.9" y="648.8" textLength="20" lengthAdjust="spacingAndGlyphs">Black</text><text x="591.2" y="648.8" textLength="35.1" lengthAdjust="spacingAndGlyphs">Dark Skin</text><text x="631" y="648.8" textLength="35.3" lengthAdjust="spacingAndGlyphs">Light Skin</text><text x="671.4" y="648.8" textLength="31.3" lengthAdjust="spacingAndGlyphs">Blue Sky</text><text x="707.4" y="648.8" textLength="26.3" lengthAdjust="spacingAndGlyphs">Foliage</text><text x="738.7" y="648.8" textLength="43.8" lengthAdjust="spacingAndGlyphs">Blue Flower</text><text x="787.6" y="648.8" textLength="47.3" lengthAdjust="spacingAndGlyphs">Bluish Green</text><text x="839.7" y="648.8" textLength="27" lengthAdjust="spacingAndGlyphs">Orange</text><text x="871.8" y="648.8" textLength="48.8" lengthAdjust="spacingAndGlyphs">Purplish Blue</text><text x="925.9" y="648.8" textLength="52.8" lengthAdjust="spacingAndGlyphs">Moderate Red</text><text x="984" y="648.8" textLength="24" lengthAdjust="spacingAndGlyphs">Purple</text><text x="1013.1" y="648.8" textLength="49.1" lengthAdjust="spacingAndGlyphs">Yellow Green</text><text x="1066.9" y="648.8" textLength="53.4" lengthAdjust="spacingAndGlyphs">Orange Yellow</text><text x="1125.3" y="648.8" textLength="16.5" lengthAdjust="spacingAndGlyphs">Blue</text><text x="1152.8" y="648.8" textLength="22.6" lengthAdjust="spacingAndGlyphs">Green</text><text x="1180.4" y="648.8" textLength="13.7" lengthAdjust="spacingAndGlyphs">Red</text><text x="1207.7" y="648.8" textLength="24" lengthAdjust="spacingAndGlyphs">Yellow</text><text x="1240" y="648.8" textLength="33" lengthAdjust="spacingAndGlyphs">Magenta</text><text x="1278" y="648.8" textLength="18.3" lengthAdjust="spacingAndGlyphs">Cyan</text><text x="1305.5" y="648.8" textLength="36.6" lengthAdjust="spacingAndGlyphs">100% Red</text><text x="1347" y="648.8" textLength="45.6" lengthAdjust="spacingAndGlyphs">100% Green</text><text x="1397.4" y="648.8" textLength="39.4" lengthAdjust="spacingAndGlyphs">100% Blue</text><text x="1441.8" y="648.8" textLength="40" lengthAdjust="spacingAndGlyphs">100% Cyan</text><text x="1487.3" y="648.8" textLength="55.9" lengthAdjust="spacingAndGlyphs">100% Magenta</text><text x="1548.2" y="648.8" textLength="46.3" lengthAdjust="spacingAndGlyphs">100% Yellow</text><text x="338" y="677.5" textLength="31.8" lengthAdjust="spacingAndGlyphs">x: CIE31</text><text x="338" y="704.02" textLength="31.8" lengthAdjust="spacingAndGlyphs">y: CIE31</text><text x="338" y="730.54" textLength="5.6" lengthAdjust="spacingAndGlyphs">Y</text><text x="338" y="757.06" textLength="57.4" lengthAdjust="spacingAndGlyphs">Target x:CIE31</text><text x="338" y="783.58" textLength="57.4" lengthAdjust="spacingAndGlyphs">Target y:CIE31</text><text x="338" y="810.1" textLength="32.9" lengthAdjust="spacingAndGlyphs">Target Y</text><text x="338" y="836.62" textLength="33.7" lengthAdjust="spacingAndGlyphs">ΔE 2000</text></g>
<g transform="translate(0,677.5) scale(0.5515,1)" font-size="16" fill="#f4f4f4" stroke="#f4f4f4" stroke-width=".22"><text x="726.38">0,30</text><text x="785.49">0,30</text><text x="845.87">0,30</text><text x="906.62">0,30</text><text x="967.18">0,30</text><text x="1027.92">0,25</text><text x="1071.99">0,38</text><text x="1144.15">0,36</text><text x="1217.41">0,25</text><text x="1282.68">0,34</text><text x="1339.44">0,26</text><text x="1428.11">0,27</text><text x="1522.57">0,49</text><text x="1580.78">0,22</text><text x="1678.88">0,42</text><text x="1784.22">0,27</text><text x="1836.99">0,39</text><text x="1934.54">0,47</text><text x="2040.44">0,19</text><text x="2090.3">0,33</text><text x="2140.34">0,49</text><text x="2189.85">0,45</text><text x="2248.41">0,34</text><text x="2317.32">0,22</text><text x="2367.18">0,58</text><text x="2442.43">0,35</text><text x="2533.82">0,16</text><text x="2614.32">0,24</text><text x="2696.83">0,27</text><text x="2807.25">0,43</text></g>
<g transform="translate(0,704.02) scale(0.5515,1)" font-size="16" fill="#f4f4f4" stroke="#f4f4f4" stroke-width=".22"><text x="726.38">0,31</text><text x="785.49">0,31</text><text x="845.87">0,32</text><text x="906.62">0,32</text><text x="967.18">0,32</text><text x="1027.92">0,23</text><text x="1071.99">0,36</text><text x="1144.15">0,35</text><text x="1217.41">0,26</text><text x="1282.68">0,40</text><text x="1339.44">0,25</text><text x="1428.11">0,34</text><text x="1522.57">0,42</text><text x="1580.78">0,21</text><text x="1678.88">0,32</text><text x="1784.22">0,23</text><text x="1836.99">0,48</text><text x="1934.54">0,44</text><text x="2040.44">0,17</text><text x="2090.3">0,45</text><text x="2140.34">0,33</text><text x="2189.85">0,47</text><text x="2248.41">0,26</text><text x="2317.32">0,26</text><text x="2367.18">0,36</text><text x="2442.43">0,57</text><text x="2533.82">0,11</text><text x="2614.32">0,30</text><text x="2696.83">0,18</text><text x="2807.25">0,50</text></g>
<g transform="translate(0,730.54) scale(0.5515,1)" font-size="16" fill="#f4f4f4" stroke="#f4f4f4" stroke-width=".22"><text x="726.38">288,49</text><text x="785.49">231,98</text><text x="845.87">188,48</text><text x="906.62">145,97</text><text x="967.18">99,70</text><text x="1027.92">0,22</text><text x="1071.99">29,09</text><text x="1144.15">100,21</text><text x="1217.41">58,73</text><text x="1282.68">35,76</text><text x="1339.44">74,63</text><text x="1428.11">120,86</text><text x="1522.57">77,79</text><text x="1580.78">42,47</text><text x="1678.88">56,45</text><text x="1784.22">22,61</text><text x="1836.99">113,45</text><text x="1934.54">114,20</text><text x="2040.44">25,57</text><text x="2090.3">60,56</text><text x="2140.34">34,00</text><text x="2189.85">157,06</text><text x="2248.41">61,53</text><text x="2317.32">60,17</text><text x="2367.18">60,49</text><text x="2442.43">178,16</text><text x="2533.82">50,09</text><text x="2614.32">228,03</text><text x="2696.83">110,22</text><text x="2807.25">238,21</text></g>
<g transform="translate(0,757.06) scale(0.5515,1)" font-size="16" fill="#f4f4f4" stroke="#f4f4f4" stroke-width=".22"><text x="726.38">0,31</text><text x="785.49">0,31</text><text x="845.87">0,31</text><text x="906.62">0,31</text><text x="967.18">0,31</text><text x="1027.92">0,31</text><text x="1071.99">0,40</text><text x="1144.15">0,38</text><text x="1217.41">0,25</text><text x="1282.68">0,34</text><text x="1339.44">0,27</text><text x="1428.11">0,26</text><text x="1522.57">0,51</text><text x="1580.78">0,22</text><text x="1678.88">0,46</text><text x="1784.22">0,29</text><text x="1836.99">0,38</text><text x="1934.54">0,47</text><text x="2040.44">0,19</text><text x="2090.3">0,31</text><text x="2140.34">0,54</text><text x="2189.85">0,45</text><text x="2248.41">0,37</text><text x="2317.32">0,21</text><text x="2367.18">0,64</text><text x="2442.43">0,30</text><text x="2533.82">0,15</text><text x="2614.32">0,22</text><text x="2696.83">0,32</text><text x="2807.25">0,42</text></g>
<g transform="translate(0,783.58) scale(0.5515,1)" font-size="16" fill="#f4f4f4" stroke="#f4f4f4" stroke-width=".22"><text x="726.38">0,33</text><text x="785.49">0,33</text><text x="845.87">0,33</text><text x="906.62">0,33</text><text x="967.18">0,33</text><text x="1027.92">0,33</text><text x="1071.99">0,36</text><text x="1144.15">0,36</text><text x="1217.41">0,27</text><text x="1282.68">0,43</text><text x="1339.44">0,25</text><text x="1428.11">0,36</text><text x="1522.57">0,41</text><text x="1580.78">0,19</text><text x="1678.88">0,31</text><text x="1784.22">0,22</text><text x="1836.99">0,49</text><text x="1934.54">0,44</text><text x="2040.44">0,14</text><text x="2090.3">0,49</text><text x="2140.34">0,32</text><text x="2189.85">0,47</text><text x="2248.41">0,25</text><text x="2317.32">0,27</text><text x="2367.18">0,33</text><text x="2442.43">0,60</text><text x="2533.82">0,06</text><text x="2614.32">0,33</text><text x="2696.83">0,15</text><text x="2807.25">0,51</text></g>
<g transform="translate(0,810.1) scale(0.5515,1)" font-size="16" fill="#f4f4f4" stroke="#f4f4f4" stroke-width=".22"><text x="726.38">288,49</text><text x="785.49">228,28</text><text x="845.87">183,94</text><text x="906.62">141,65</text><text x="967.18">98,64</text><text x="1027.92">0,00</text><text x="1071.99">29,06</text><text x="1144.15">100,67</text><text x="1217.41">53,94</text><text x="1282.68">37,60</text><text x="1339.44">67,27</text><text x="1428.11">120,80</text><text x="1522.57">81,78</text><text x="1580.78">33,91</text><text x="1678.88">53,88</text><text x="1784.22">19,26</text><text x="1836.99">123,35</text><text x="1934.54">122,64</text><text x="2040.44">18,01</text><text x="2090.3">66,27</text><text x="2140.34">33,64</text><text x="2189.85">170,10</text><text x="2248.41">54,31</text><text x="2317.32">56,02</text><text x="2367.18">61,35</text><text x="2442.43">206,31</text><text x="2533.82">20,82</text><text x="2614.32">227,14</text><text x="2696.83">82,17</text><text x="2807.25">267,66</text></g>
<g transform="translate(0,836.62) scale(0.5515,1)" font-size="16" fill="#f4f4f4" stroke="#f4f4f4" stroke-width=".22"><text x="726.38">9,37</text><text x="785.49">6,91</text><text x="845.87">6,03</text><text x="906.62">5,37</text><text x="967.18">4,61</text><text x="1027.92">1,45</text><text x="1071.99">3,19</text><text x="1144.15">3,15</text><text x="1217.41">2,70</text><text x="1282.68">4,60</text><text x="1339.44">3,98</text><text x="1428.11">7,27</text><text x="1522.57">4,79</text><text x="1580.78">4,74</text><text x="1678.88">5,15</text><text x="1784.22">5,13</text><text x="1836.99">4,71</text><text x="1934.54">2,73</text><text x="2040.44">6,68</text><text x="2090.3">6,17</text><text x="2140.34">4,96</text><text x="2189.85">1,87</text><text x="2248.41">6,64</text><text x="2317.32">6,29</text><text x="2367.18">6,27</text><text x="2442.43">8,42</text><text x="2533.82">18,55</text><text x="2614.32">12,22</text><text x="2696.83">11,19</text><text x="2807.25">4,29</text></g>
<rect x="1014.8" y="45.9" width="701.3" height="568.2" fill="#ffff00"/>
<rect x="1716.1" y="0" width="1" height="886" fill="#2c2c2c"/>
<rect x="1022.1" y="53" width="686.7" height="553.7" fill="#323232"/>
<rect x="1051.8" y="76.9" width="653.2" height="500.3" fill="#232323"/>
<rect x="1505.6" y="80.6" width="196.7" height="154.6" fill="#2c2c2c"/>
<rect x="1507.6" y="83.6" width="192.2" height="148.6" fill="#8a8a8a"/>
</svg>
<div id="cie"><i style="margin-left:58px;width:10px;background:linear-gradient(90deg,#0f0,#0f0,#0f0,#0f0)"></i><i style="margin-left:47px;width:34px;background:linear-gradient(90deg,#0f0,#0f0,#0f0,#0f0,#0f0,#0f0,#0f0,#0f0,#0f0,#0f0)"></i><i style="margin-left:41px;width:48px;background:linear-gradient(90deg,#0f0,#0f0,#0f0,#0f0,#0f0,#0f0,#0f0,#0f0,#0f0,#0f0,#0f0,#0f0,#0f0)"></i><i style="margin-left:37px;width:59px;background:linear-gradient(90deg,#0f0,#0f0,#0f0,#0f0,#0f0,#0f0,#0f0,#0f0,#0f0,#0f0,#0f0,#0f0,#0f0,#0f0,#0f0,#0f0)"></i><i style="margin-left:34px;width:68px;background:linear-gradient(90deg,#0f0,#0f0,#0f0,#0f0,#0f0,#0f0,#0f0,#0f0,#0f0,#0f0,#0f0,#0f0,#0f0,#0f0,#0f0,#0f0,#0f0,#0f0)"></i><i style="margin-left:31px;width:76px;background:linear-gradient(90deg,#0f0,#0f0,#0f0,#0f0,#0f0,#0f0,#0f0,#0f0,#0f0,#0f0,#0f0,#0f0,#0f0,#0f0,#0f0,#0f0,#0f0,#0f0,#0f0,#0f0)"></i><i style="margin-left:29px;width:83px;background:linear-gradient(90deg,#0f0,#0f0,#0f0,#0f0,#0f0,#0f0,#0f0,#0f0,#0f0,#0f0,#0f0,#0f0,#0f0,#0f0,#0f0,#0f0,#0f0,#0f0,#0f0,#0f0,#0f0,#0f0)"></i><i style="margin-left:27px;width:90px;background:linear-gradient(90deg,#0f0,#0f0,#0f0,#0f0,#0f0,#0f0,#0f0,#0f0,#0f0,#0f0,#0f0,#0f0,#0f0,#0f0,#0f0,#0f0,#0f0,#0f0,#0f0,#0f0,#0f0,#0f0,#0f0,#0f0)"></i><i style="margin-left:26px;width:95px;background:linear-gradient(90deg,#00ff01,#0f0,#0f0,#0f0,#0f0,#0f0,#0f0,#0f0,#0f0,#0f0,#0f0,#0f0,#0f0,#0f0,#0f0,#0f0,#0f0,#0f0,#0f0,#0f0,#0f0,#0f0,#0f0,#0f0,#0f0)"></i><i style="margin-left:24px;width:102px;background:linear-gradient(90deg,#00ff02,#00ff01,#0f0,#0f0,#0f0,#0f0,#0f0,#0f0,#0f0,#0f0,#0f0,#0f0,#0f0,#0f0,#0f0,#0f0,#0f0,#0f0,#0f0,#0f0,#0f0,#0f0,#0f0,#0f0,#0f0,#0f0,#0f0)"></i><i style="margin-left:23px;width:107px;background:linear-gradient(90deg,#00ff03,#00ff02,#00ff01,#0f0,#0f0,#0f0,#0f0,#0f0,#0f0,#0f0,#0f0,#0f0,#0f0,#0f0,#0f0,#0f0,#0f0,#0f0,#0f0,#0f0,#0f0,#0f0,#0f0,#0f0,#0f0,#0f0,#0f0,#0f0)"></i><i style="margin-left:21px;width:113px;background:linear-gradient(90deg,#00ff04,#00ff03,#00ff02,#00ff01,#00ff01,#0f0,#0f0,#0f0,#0f0,#0f0,#0f0,#0f0,#0f0,#0f0,#0f0,#0f0,#0f0,#0f0,#0f0,#0f0,#0f0,#0f0,#0f0,#0f0,#0f0,#0f0,#0f0,#0f0,#0f0,#0f0)"></i><i style="margin-left:20px;width:119px;background:linear-gradient(90deg,#00ff05,#00ff04,#00ff03,#00ff02,#00ff01,#00ff01,#0f0,#0f0,#0f0,#0f0,#0f0,#0f0,#0f0,#0f0,#0f0,#0f0,#0f0,#0f0,#0f0,#0f0,#0f0,#0f0,#0f0,#0f0,#0f0,#0f0,#0f0,#0f0,#0f0,#0f0,#0f0)"></i><i style="margin-left:19px;width:124px;background:linear-gradient(90deg,#00ff06,#00ff05,#00ff04,#00ff03,#00ff02,#00ff01,#00ff01,#0f0,#0f0,#0f0,#0f0,#0f0,#0f0,#0f0,#0f0,#0f0,#0f0,#0f0,#0f0,#0f0,#0f0,#0f0,#0f0,#0f0,#0f0,#0f0,#0f0,#0f0,#0f0,#0f0,#0f0,#0f0)"></i><i style="margin-left:18px;width:128px;background:linear-gradient(90deg,#00ff07,#00ff06,#00ff05,#00ff04,#00ff03,#00ff02,#00ff02,#00ff01,#0f0,#0f0,#0f0,#0f0,#0f0,#0f0,#0f0,#0f0,#0f0,#0f0,#0f0,#0f0,#0f0,#0f0,#0f0,#0f0,#0f0,#0f0,#0f0,#0f0,#0f0,#0f0,#0f0,#0f0,#0f0)"></i><i style="margin-left:17px;width:133px;background:linear-gradient(90deg,#00ff08,#00ff07,#00ff06,#00ff05,#00ff04,#00ff04,#00ff03,#00ff02,#00ff01,#0f0,#0f0,#0f0,#0f0,#0f0,#0f0,#0f0,#0f0,#0f0,#0f0,#0f0,#0f0,#0f0,#0f0,#0f0,#0f0,#0f0,#0f0,#0f0,#0f0,#0f0,#0f0,#0f0,#0f0,#0f0,#0f0)"></i><i style="margin-left:16px;width:138px;background:linear-gradient(90deg,#00ff09,#00ff08,#00ff07,#00ff06,#00ff05,#00ff04,#00ff04,#00ff03,#00ff02,#00ff01,#0f0,#0f0,#0f0,#0f0,#0f0,#0f0,#0f0,#0f0,#0f0,#0f0,#0f0,#0f0,#0f0,#0f0,#0f0,#0f0,#0f0,#0f0,#0f0,#0f0,#0f0,#0f0,#0f0,#0f0,#0f0,#0f0)"></i><i style="margin-left:15px;width:143px;background:linear-gradient(90deg,#00ff0a,#00ff09,#00ff08,#00ff07,#00ff06,#00ff05,#00ff05,#00ff04,#00ff03,#00ff02,#00ff01,#0f0,#0f0,#0f0,#0f0,#0f0,#0f0,#0f0,#0f0,#0f0,#0f0,#0f0,#0f0,#0f0,#0f0,#0f0,#0f0,#0f0,#0f0,#0f0,#0f0,#0f0,#0f0,#0f0,#0f0,#0f0,#0f0)"></i><i style="margin-left:14px;width:147px;background:linear-gradient(90deg,#00ff0b,#00ff0a,#00ff09,#00ff08,#00ff07,#00ff06,#00ff06,#00ff05,#00ff04,#00ff03,#00ff02,#00ff01,#0f0,#0f0,#0f0,#0f0,#0f0,#0f0,#0f0,#0f0,#0f0,#0f0,#0f0,#0f0,#0f0,#0f0,#0f0,#0f0,#0f0,#0f0,#0f0,#0f0,#0f0,#0f0,#0f0,#0f0,#0f0,#0f0)"></i><i style="margin-left:13px;width:152px;background:linear-gradient(90deg,#00ff0c,#00ff0b,#00ff0a,#00ff09,#00ff08,#00ff07,#00ff07,#00ff06,#00ff05,#00ff04,#00ff03,#00ff02,#00ff01,#0f0,#0f0,#0f0,#0f0,#0f0,#0f0,#0f0,#0f0,#0f0,#0f0,#0f0,#0f0,#0f0,#0f0,#0f0,#0f0,#0f0,#0f0,#0f0,#0f0,#0f0,#0f0,#0f0,#0f0,#0f0,#0f0)"></i><i style="margin-left:12px;width:156px;background:linear-gradient(90deg,#00ff0d,#00ff0c,#00ff0b,#00ff0a,#00ff09,#00ff08,#00ff08,#00ff07,#00ff06,#00ff05,#00ff04,#00ff03,#00ff02,#00ff01,#0f0,#0f0,#0f0,#0f0,#0f0,#0f0,#0f0,#0f0,#0f0,#0f0,#0f0,#0f0,#0f0,#0f0,#0f0,#0f0,#0f0,#0f0,#0f0,#0f0,#0f0,#0f0,#0f0,#0f0,#0f0,#0f0)"></i><i style="margin-left:11px;width:161px;background:linear-gradient(90deg,#00ff0e,#00ff0d,#00ff0c,#00ff0b,#00ff0a,#00ff0a,#00ff09,#00ff08,#00ff07,#00ff06,#00ff05,#00ff04,#00ff03,#00ff02,#00ff01,#0f0,#0f0,#0f0,#0f0,#0f0,#0f0,#0f0,#0f0,#0f0,#0f0,#0f0,#0f0,#0f0,#0f0,#0f0,#0f0,#0f0,#0f0,#0f0,#0f0,#0f0,#0f0,#0f0,#0f0,#0f0,#0f0,#0f0)"></i><i style="margin-left:11px;width:164px;background:linear-gradient(90deg,#00ff0f,#00ff0e,#00ff0d,#00ff0c,#00ff0b,#00ff0a,#00ff09,#00ff09,#00ff08,#00ff07,#00ff06,#00ff05,#00ff04,#00ff03,#00ff02,#00ff01,#0f0,#0f0,#0f0,#0f0,#0f0,#0f0,#0f0,#0f0,#0f0,#0f0,#0f0,#0f0,#0f0,#0f0,#0f0,#0f0,#0f0,#0f0,#0f0,#0f0,#0f0,#0f0,#0f0,#0f0,#0f0,#0f0)"></i><i style="margin-left:10px;width:169px;background:linear-gradient(90deg,#00ff10,#00ff0f,#00ff0e,#00ff0d,#00ff0c,#00ff0b,#00ff0b,#00ff0a,#00ff09,#00ff08,#00ff07,#00ff06,#00ff05,#00ff04,#00ff03,#00ff02,#00ff01,#0f0,#0f0,#0f0,#0f0,#0f0,#0f0,#0f0,#0f0,#0f0,#0f0,#0f0,#0f0,#0f0,#0f0,#0f0,#0f0,#0f0,#0f0,#0f0,#0f0,#0f0,#0f0,#0f0,#0f0,#0f0,#0f0,#0f0)"></i><i style="margin-left:9px;width:173px;background:linear-gradient(90deg,#0f1,#00ff10,#00ff0f,#00ff0e,#00ff0d,#00ff0d,#00ff0c,#00ff0b,#00ff0a,#00ff09,#00ff08,#00ff07,#00ff06,#00ff05,#00ff04,#00ff03,#00ff02,#00ff01,#0f0,#0f0,#0f0,#0f0,#0f0,#0f0,#0f0,#0f0,#0f0,#0f0,#0f0,#0f0,#0f0,#0f0,#0f0,#0f0,#0f0,#0f0,#0f0,#0f0,#0f0,#0f0,#0f0,#0f0,#0f0,#0f0,#0f0)"></i><i style="margin-left:9px;width:176px;background:linear-gradient(90deg,#00ff12,#0f1,#00ff10,#00ff0f,#00ff0e,#00ff0d,#00ff0c,#00ff0b,#00ff0b,#00ff0a,#00ff09,#00ff08,#00ff07,#00ff06,#00ff05,#00ff04,#00ff03,#00ff02,#00ff01,#0f0,#0f0,#0f0,#0f0,#0f0,#0f0,#0f0,#0f0,#0f0,#0f0,#0f0,#0f0,#0f0,#0f0,#0f0,#0f0,#0f0,#0f0,#0f0,#0f0,#0f0,#0f0,#0f0,#0f0,#0f0,#0f0)"></i><i style="margin-left:8px;width:181px;background:linear-gradient(90deg,#00ff13,#00ff12,#0f1,#00ff10,#00ff0f,#00ff0e,#00ff0e,#00ff0d,#00ff0c,#00ff0b,#00ff0a,#00ff09,#00ff08,#00ff07,#00ff06,#00ff05,#00ff04,#00ff03,#00ff02,#00ff01,#0f0,#0f0,#0f0,#0f0,#0f0,#0f0,#0f0,#0f0,#0f0,#0f0,#0f0,#0f0,#0f0,#0f0,#0f0,#0f0,#0f0,#0f0,#0f0,#0f0,#0f0,#0f0,#0f0,#0f0,#0f0,#0f0,#0f0)"></i><i style="margin-left:8px;width:184px;background:linear-gradient(90deg,#00ff14,#00ff13,#00ff12,#0f1,#00ff10,#00ff0f,#00ff0e,#00ff0d,#00ff0c,#00ff0c,#00ff0b,#00ff0a,#00ff09,#00ff08,#00ff07,#00ff06,#00ff05,#00ff04,#00ff03,#00ff02,#00ff01,#0f0,#0f0,#0f0,#0f0,#0f0,#0f0,#0f0,#0f0,#0f0,#0f0,#0f0,#0f0,#0f0,#0f0,#0f0,#0f0,#0f0,#0f0,#0f0,#0f0,#0f0,#0f0,#0f0,#0f0,#0f0,#0f0)"></i><i style="margin-left:7px;width:188px;background:linear-gradient(90deg,#00ff15,#00ff14,#00ff13,#00ff12,#0f1,#00ff10,#00ff0f,#00ff0e,#00ff0e,#00ff0d,#00ff0c,#00ff0b,#00ff0a,#00ff09,#00ff08,#00ff07,#00ff06,#00ff05,#00ff04,#00ff03,#00ff02,#00ff01,#0f0,#0f0,#0f0,#0f0,#0f0,#0f0,#0f0,#0f0,#0f0,#0f0,#0f0,#0f0,#0f0,#0f0,#0f0,#0f0,#0f0,#0f0,#0f0,#0f0,#0f0,#0f0,#0f0,#0f0,#0f0,#0f0)"></i><i style="margin-left:7px;width:191px;background:linear-gradient(90deg,#00ff16,#00ff15,#00ff14,#00ff13,#00ff12,#0f1,#00ff10,#00ff0f,#00ff0e,#00ff0e,#00ff0d,#00ff0c,#00ff0b,#00ff0a,#00ff09,#00ff08,#00ff07,#00ff06,#00ff05,#00ff04,#00ff03,#00ff02,#00ff01,#0f0,#0f0,#0f0,#0f0,#0f0,#0f0,#0f0,#0f0,#0f0,#0f0,#0f0,#0f0,#0f0,#0f0,#0f0,#0f0,#0f0,#0f0,#0f0,#0f0,#0f0,#0f0,#0f0,#0f0,#0f0,#0f0)"></i><i style="margin-left:6px;width:195px;background:linear-gradient(90deg,#00ff17,#00ff16,#00ff15,#00ff14,#00ff13,#00ff12,#0f1,#00ff10,#00ff10,#00ff0f,#00ff0e,#00ff0d,#00ff0c,#00ff0b,#00ff0a,#00ff09,#00ff08,#00ff07,#00ff06,#00ff05,#00ff04,#00ff03,#00ff02,#00ff01,#0f0,#0f0,#0f0,#0f0,#0f0,#0f0,#0f0,#0f0,#0f0,#0f0,#0f0,#0f0,#0f0,#0f0,#0f0,#0f0,#0f0,#0f0,#0f0,#0f0,#0f0,#0f0,#0f0,#0f0,#0f0,#0f0)"></i><i style="margin-left:6px;width:198px;background:linear-gradient(90deg,#00ff18,#00ff17,#00ff16,#00ff15,#00ff14,#00ff13,#00ff12,#0f1,#00ff10,#00ff10,#00ff0f,#00ff0e,#00ff0d,#00ff0c,#00ff0b,#00ff0a,#00ff09,#00ff08,#00ff07,#00ff06,#00ff05,#00ff04,#00ff03,#00ff02,#00ff01,#0f0,#0f0,#0f0,#0f0,#0f0,#0f0,#0f0,#0f0,#0f0,#0f0,#0f0,#0f0,#0f0,#0f0,#0f0,#0f0,#0f0,#0f0,#0f0,#0f0,#0f0,#0f0,#0f0,#0f0,#0f0,#0f0)"></i><i style="margin-left:5px;width:202px;background:linear-gradient(90deg,#00ff19,#00ff18,#00ff17,#00ff16,#00ff15,#00ff14,#00ff13,#00ff12,#00ff12,#0f1,#00ff10,#00ff0f,#00ff0e,#00ff0d,#00ff0c,#00ff0b,#00ff0a,#00ff09,#00ff08,#00ff07,#00ff06,#00ff05,#00ff04,#00ff03,#00ff02,#00ff01,#0f0,#0f0,#0f0,#0f0,#0f0,#0f0,#0f0,#0f0,#0f0,#0f0,#0f0,#0f0,#0f0,#0f0,#0f0,#0f0,#0f0,#0f0,#0f0,#0f0,#0f0,#0f0,#0f0,#0f0,#0f0,#0f0)"></i><i style="margin-left:5px;width:205px;background:linear-gradient(90deg,#00ff1a,#00ff19,#00ff18,#00ff17,#00ff16,#00ff15,#00ff14,#00ff13,#00ff13,#00ff12,#0f1,#00ff10,#00ff0f,#00ff0e,#00ff0d,#00ff0c,#00ff0b,#00ff0a,#00ff09,#00ff08,#00ff07,#00ff06,#00ff05,#00ff04,#00ff03,#00ff02,#00ff01,#0f0,#0f0,#0f0,#0f0,#0f0,#0f0,#0f0,#0f0,#0f0,#0f0,#0f0,#0f0,#0f0,#0f0,#0f0,#0f0,#0f0,#0f0,#0f0,#0f0,#0f0,#0f0,#0f0,#0f0,#0f0,#0f0)"></i><i style="margin-left:5px;width:208px;background:linear-gradient(90deg,#00ff1a,#00ff1a,#00ff19,#00ff18,#00ff17,#00ff16,#00ff15,#00ff14,#00ff13,#00ff12,#0f1,#0f1,#00ff10,#00ff0f,#00ff0e,#00ff0d,#00ff0c,#00ff0b,#00ff0a,#00ff09,#00ff08,#00ff07,#00ff06,#00ff05,#00ff04,#00ff03,#00ff01,#0f0,#0f0,#0f0,#0f0,#0f0,#0f0,#0f0,#0f0,#0f0,#0f0,#0f0,#0f0,#0f0,#0f0,#0f0,#0f0,#0f0,#0f0,#0f0,#0f0,#0f0,#0f0,#0f0,#0f0,#0f0,#0f0)"></i><i style="margin-left:4px;width:212px;background:linear-gradient(90deg,#00ff1c,#00ff1b,#00ff1a,#00ff19,#00ff18,#00ff17,#00ff16,#00ff15,#00ff14,#00ff14,#00ff13,#00ff12,#0f1,#00ff10,#00ff0f,#00ff0e,#00ff0d,#00ff0c,#00ff0b,#00ff0a,#00ff09,#00ff08,#00ff07,#00ff06,#00ff05,#00ff04,#00ff03,#00ff02,#0f0,#0f0,#0f0,#0f0,#0f0,#0f0,#0f0,#0f0,#0f0,#0f0,#0f0,#0f0,#0f0,#0f0,#0f0,#0f0,#0f0,#0f0,#0f0,#0f0,#0f0,#0f0,#0f0,#0f0,#0f0,#0f0)"></i><i style="margin-left:4px;width:215px;background:linear-gradient(90deg,#00ff1d,#00ff1c,#00ff1b,#00ff1a,#00ff19,#00ff18,#00ff17,#00ff16,#00ff15,#00ff14,#00ff14,#00ff13,#00ff12,#0f1,#00ff10,#00ff0f,#00ff0e,#00ff0d,#00ff0c,#00ff0b,#00ff0a,#00ff09,#00ff08,#00ff07,#00ff06,#00ff05,#00ff04,#00ff03,#00ff02,#0f0,#0f0,#0f0,#0f0,#0f0,#0f0,#0f0,#0f0,#0f0,#0f0,#0f0,#0f0,#0f0,#0f0,#0f0,#0f0,#0f0,#0f0,#0f0,#0f0,#0f0,#0f0,#0f0,#0f0,#0f0,#0f0)"></i><i style="margin-left:4px;width:218px;background:linear-gradient(90deg,#00ff1d,#00ff1d,#00ff1c,#00ff1b,#00ff1a,#00ff19,#00ff18,#00ff17,#00ff16,#00ff15,#00ff15,#00ff14,#00ff13,#00ff12,#0f1,#00ff10,#00ff0f,#00ff0e,#00ff0d,#00ff0c,#00ff0b,#00ff0a,#00ff09,#00ff08,#00ff07,#00ff06,#00ff05,#00ff04,#00ff03,#00ff01,#0f0,#0f0,#0f0,#0f0,#0f0,#0f0,#0f0,#0f0,#0f0,#0f0,#0f0,#0f0,#0f0,#0f0,#0f0,#0f0,#0f0,#0f0,#0f0,#0f0,#0f0,#0f0,#0f0,#0f0,#0f0,#0f0)"></i><i style="margin-left:3px;width:222px;background:linear-gradient(90deg,#00ff1f,#00ff1e,#00ff1d,#00ff1c,#00ff1b,#00ff1a,#00ff19,#00ff18,#00ff18,#00ff17,#00ff16,#00ff15,#00ff14,#00ff13,#00ff12,#0f1,#00ff10,#00ff0f,#00ff0e,#00ff0d,#00ff0c,#00ff0b,#00ff0a,#00ff09,#00ff08,#00ff07,#00ff06,#00ff05,#00ff04,#00ff03,#00ff02,#0f0,#0f0,#0f0,#0f0,#0f0,#0f0,#0f0,#0f0,#0f0,#0f0,#0f0,#0f0,#0f0,#0f0,#0f0,#0f0,#0f0,#0f0,#0f0,#0f0,#0f0,#0f0,#0f0,#0f0,#0f0,#0f0)"></i><i style="margin-left:3px;width:225px;background:linear-gradient(90deg,#00ff20,#00ff1f,#00ff1e,#00ff1d,#00ff1c,#00ff1b,#00ff1a,#00ff19,#00ff19,#00ff18,#00ff17,#00ff16,#00ff15,#00ff14,#00ff13,#00ff12,#0f1,#00ff10,#00ff0f,#00ff0e,#00ff0d,#00ff0c,#00ff0b,#00ff0a,#00ff09,#00ff08,#00ff07,#00ff06,#00ff05,#00ff04,#00ff03,#00ff02,#0f0,#0f0,#0f0,#0f0,#0f0,#0f0,#0f0,#0f0,#0f0,#0f0,#0f0,#0f0,#0f0,#0f0,#0f0,#0f0,#0f0,#0f0,#0f0,#0f0,#0f0,#0f0,#0f0,#0f0,#0f0,#0f0)"></i><i style="margin-left:3px;width:228px;background:linear-gradient(90deg,#00ff21,#00ff20,#00ff1f,#00ff1e,#00ff1d,#00ff1c,#00ff1b,#00ff1a,#00ff19,#00ff18,#00ff18,#00ff17,#00ff16,#00ff15,#00ff14,#00ff13,#00ff12,#0f1,#00ff10,#00ff0f,#00ff0e,#00ff0d,#00ff0c,#00ff0b,#00ff0a,#00ff09,#00ff08,#00ff06,#00ff05,#00ff04,#00ff03,#00ff02,#00ff01,#0f0,#0f0,#0f0,#0f0,#0f0,#0f0,#0f0,#0f0,#0f0,#0f0,#0f0,#0f0,#0f0,#0f0,#0f0,#0f0,#0f0,#0f0,#0f0,#0f0,#0f0,#0f0,#0f0,#0f0,#0f0)"></i><i style="margin-left:3px;width:231px;background:linear-gradient(90deg,#00ff21,#00ff21,#00ff20,#00ff1f,#00ff1e,#00ff1d,#00ff1c,#00ff1b,#00ff1a,#00ff19,#00ff19,#00ff18,#00ff17,#00ff16,#00ff15,#00ff14,#00ff13,#00ff12,#0f1,#00ff10,#00ff0f,#00ff0e,#00ff0d,#00ff0c,#00ff0b,#00ff0a,#00ff09,#00ff08,#00ff06,#00ff05,#00ff04,#00ff03,#00ff02,#00ff01,#0f0,#0f0,#0f0,#0f0,#0f0,#0f0,#0f0,#0f0,#0f0,#0f0,#0f0,#0f0,#0f0,#0f0,#0f0,#0f0,#0f0,#0f0,#0f0,#0f0,#0f0,#0f0,#0f0,#0f0,#0f0)"></i><i style="margin-left:2px;width:235px;background:linear-gradient(90deg,#00ff23,#0f2,#00ff21,#00ff20,#00ff1f,#00ff1e,#00ff1d,#00ff1d,#00ff1c,#00ff1b,#00ff1a,#00ff19,#00ff18,#00ff17,#00ff16,#00ff15,#00ff14,#00ff13,#00ff12,#0f1,#00ff10,#00ff0f,#00ff0e,#00ff0d,#00ff0c,#00ff0b,#00ff0a,#00ff09,#00ff08,#00ff07,#00ff05,#00ff04,#00ff03,#00ff02,#00ff01,#0f0,#0f0,#0f0,#0f0,#0f0,#0f0,#0f0,#0f0,#0f0,#0f0,#0f0,#0f0,#0f0,#0f0,#0f0,#0f0,#0f0,#0f0,#0f0,#0f0,#0f0,#0f0,#0f0,#0f0,#0f0)"></i><i style="margin-left:2px;width:237px;background:linear-gradient(90deg,#00ff24,#00ff23,#0f2,#00ff21,#00ff20,#00ff1f,#00ff1e,#00ff1e,#00ff1d,#00ff1c,#00ff1b,#00ff1a,#00ff19,#00ff18,#00ff17,#00ff16,#00ff15,#00ff14,#00ff13,#00ff12,#0f1,#00ff10,#00ff0f,#00ff0e,#00ff0d,#00ff0c,#00ff0b,#00ff0a,#00ff09,#00ff08,#00ff07,#00ff06,#00ff04,#00ff03,#00ff02,#00ff01,#0f0,#0f0,#0f0,#0f0,#0f0,#0f0,#0f0,#0f0,#0f0,#0f0,#0f0,#0f0,#0f0,#0f0,#0f0,#0f0,#0f0,#0f0,#0f0,#0f0,#0f0,#0f0,#0f0,#0f0,#0f0)"></i><i style="margin-left:2px;width:240px;background:linear-gradient(90deg,#00ff25,#00ff24,#00ff23,#0f2,#00ff21,#00ff20,#00ff1f,#00ff1e,#00ff1e,#00ff1d,#00ff1c,#00ff1b,#00ff1a,#00ff19,#00ff18,#00ff17,#00ff16,#00ff15,#00ff14,#00ff13,#00ff12,#0f1,#00ff10,#00ff0f,#00ff0e,#00ff0d,#00ff0c,#00ff0b,#00ff09,#00ff08,#00ff07,#00ff06,#00ff05,#00ff04,#00ff03,#00ff02,#0f0,#0f0,#0f0,#0f0,#0f0,#0f0,#0f0,#0f0,#0f0,#0f0,#0f0,#0f0,#0f0,#0f0,#0f0,#0f0,#0f0,#0f0,#0f0,#0f0,#0f0,#0f0,#0f0,#0f0,#0f0)"></i><i style="margin-left:2px;width:243px;background:linear-gradient(90deg,#00ff26,#00ff25,#00ff24,#00ff23,#0f2,#00ff21,#00ff20,#00ff1f,#00ff1f,#00ff1e,#00ff1d,#00ff1c,#00ff1b,#00ff1a,#00ff19,#00ff18,#00ff17,#00ff16,#00ff15,#00ff14,#00ff13,#00ff12,#0f1,#00ff10,#00ff0f,#00ff0e,#00ff0d,#00ff0c,#00ff0b,#00ff09,#00ff08,#00ff07,#00ff06,#00ff05,#00ff04,#00ff03,#00ff02,#0f0,#0f0,#0f0,#0f0,#0f0,#0f0,#0f0,#0f0,#0f0,#0f0,#0f0,#0f0,#0f0,#0f0,#0f0,#0f0,#0f0,#0f0,#0f0,#0f0,#0f0,#0f0,#0f0,#0f0,#0f0)"></i><i style="margin-left:2px;width:246px;background:linear-gradient(90deg,#00ff27,#00ff26,#00ff25,#00ff24,#00ff23,#0f2,#00ff21,#00ff21,#00ff20,#00ff1f,#00ff1e,#00ff1d,#00ff1c,#00ff1b,#00ff1a,#00ff19,#00ff18,#00ff17,#00ff16,#00ff15,#00ff14,#00ff13,#00ff12,#0f1,#00ff10,#00ff0f,#00ff0e,#00ff0d,#00ff0c,#00ff0b,#00ff0a,#00ff08,#00ff07,#00ff06,#00ff05,#00ff04,#00ff03,#00ff02,#0f0,#0f0,#0f0,#0f0,#0f0,#0f0,#0f0,#0f0,#0f0,#0f0,#0f0,#0f0,#0f0,#0f0,#0f0,#0f0,#0f0,#0f0,#0f0,#0f0,#0f0,#0f0,#0f0,#0f0,#0f0)"></i><i style="margin-left:2px;width:249px;background:linear-gradient(90deg,#00ff28,#00ff27,#00ff26,#00ff25,#00ff24,#00ff23,#0f2,#0f2,#00ff21,#00ff20,#00ff1f,#00ff1e,#00ff1d,#00ff1c,#00ff1b,#00ff1a,#00ff19,#00ff18,#00ff17,#00ff16,#00ff15,#00ff14,#00ff13,#00ff12,#0f1,#00ff10,#00ff0f,#00ff0e,#00ff0d,#00ff0c,#00ff0b,#00ff0a,#00ff08,#00ff07,#00ff06,#00ff05,#00ff04,#00ff03,#00ff02,#0f0,#0f0,#0f0,#0f0,#0f0,#0f0,#0f0,#0f0,#0f0,#0f0,#0f0,#0f0,#0f0,#0f0,#0f0,#0f0,#0f0,#0f0,#0f0,#0f0,#0f0,#0f0,#0f0,#0f0,#01ff00)"></i><i style="margin-left:1px;width:252px;background:linear-gradient(90deg,#00ff29,#00ff28,#00ff27,#00ff26,#00ff25,#00ff25,#00ff24,#00ff23,#0f2,#00ff21,#00ff20,#00ff1f,#00ff1e,#00ff1d,#00ff1c,#00ff1b,#00ff1a,#00ff19,#00ff18,#00ff17,#00ff16,#00ff15,#00ff14,#00ff13,#00ff12,#0f1,#00ff10,#00ff0f,#00ff0e,#00ff0d,#00ff0c,#00ff0a,#00ff09,#00ff08,#00ff07,#00ff06,#00ff05,#00ff03,#00ff02,#00ff01,#0f0,#0f0,#0f0,#0f0,#0f0,#0f0,#0f0,#0f0,#0f0,#0f0,#0f0,#0f0,#0f0,#0f0,#0f0,#0f0,#0f0,#0f0,#0f0,#0f0,#0f0,#0f0,#0f0,#04ff00)"></i><i style="margin-left:1px;width:255px;background:linear-gradient(90deg,#00ff2a,#00ff29,#00ff28,#00ff27,#00ff27,#00ff26,#00ff25,#00ff24,#00ff23,#0f2,#00ff21,#00ff20,#00ff1f,#00ff1e,#00ff1d,#00ff1c,#00ff1b,#00ff1a,#00ff19,#00ff18,#00ff17,#00ff16,#00ff15,#00ff14,#00ff13,#00ff12,#0f1,#00ff10,#00ff0f,#00ff0e,#00ff0d,#00ff0c,#00ff0a,#00ff09,#00ff08,#00ff07,#00ff06,#00ff05,#00ff03,#00ff02,#00ff01,#0f0,#0f0,#0f0,#0f0,#0f0,#0f0,#0f0,#0f0,#0f0,#0f0,#0f0,#0f0,#0f0,#0f0,#0f0,#0f0,#0f0,#0f0,#0f0,#0f0,#0f0,#0f0,#04ff00,#09ff00)"></i><i style="margin-left:1px;width:258px;background:linear-gradient(90deg,#00ff2b,#00ff2a,#00ff29,#00ff28,#00ff28,#00ff27,#00ff26,#00ff25,#00ff24,#00ff23,#0f2,#00ff21,#00ff20,#00ff1f,#00ff1e,#00ff1d,#00ff1c,#00ff1b,#00ff1a,#00ff19,#00ff18,#00ff17,#00ff16,#00ff15,#00ff14,#00ff13,#00ff12,#0f1,#00ff10,#00ff0f,#00ff0e,#00ff0d,#00ff0c,#00ff0b,#00ff09,#00ff08,#00ff07,#00ff06,#00ff05,#00ff03,#00ff02,#00ff01,#0f0,#0f0,#0f0,#0f0,#0f0,#0f0,#0f0,#0f0,#0f0,#0f0,#0f0,#0f0,#0f0,#0f0,#0f0,#0f0,#0f0,#0f0,#0f0,#0f0,#0f0,#04ff00,#09ff00,#0eff00)"></i><i style="margin-left:1px;width:261px;background:linear-gradient(90deg,#00ff2c,#00ff2b,#00ff2a,#00ff2a,#00ff29,#00ff28,#00ff27,#00ff26,#00ff25,#00ff24,#00ff23,#0f2,#00ff21,#00ff20,#00ff20,#00ff1f,#00ff1e,#00ff1d,#00ff1c,#00ff1b,#00ff1a,#00ff19,#00ff18,#00ff17,#00ff16,#00ff14,#00ff13,#00ff12,#0f1,#00ff10,#00ff0f,#00ff0e,#00ff0d,#00ff0c,#00ff0b,#00ff09,#00ff08,#00ff07,#00ff06,#00ff05,#00ff03,#00ff02,#00ff01,#0f0,#0f0,#0f0,#0f0,#0f0,#0f0,#0f0,#0f0,#0f0,#0f0,#0f0,#0f0,#0f0,#0f0,#0f0,#0f0,#0f0,#0f0,#0f0,#0f0,#04ff00,#09ff00,#0eff00,#13ff00)"></i><i style="margin-left:1px;width:263px;background:linear-gradient(90deg,#00ff2d,#00ff2c,#00ff2c,#00ff2b,#00ff2a,#00ff29,#00ff28,#00ff27,#00ff26,#00ff25,#00ff24,#00ff23,#0f2,#00ff21,#00ff20,#00ff20,#00ff1f,#00ff1e,#00ff1d,#00ff1c,#00ff1b,#00ff1a,#00ff18,#00ff17,#00ff16,#00ff15,#00ff14,#00ff13,#00ff12,#0f1,#00ff10,#00ff0f,#00ff0e,#00ff0c,#00ff0b,#00ff0a,#00ff09,#00ff08,#00ff07,#00ff05,#00ff04,#00ff03,#00ff02,#0f0,#0f0,#0f0,#0f0,#0f0,#0f0,#0f0,#0f0,#0f0,#0f0,#0f0,#0f0,#0f0,#0f0,#0f0,#0f0,#0f0,#0f0,#0f0,#02ff00,#07ff00,#0cff00,#12ff00,#17ff00)"></i><i style="margin-left:1px;width:266px;background:linear-gradient(90deg,#00ff2e,#00ff2d,#00ff2d,#00ff2c,#00ff2b,#00ff2a,#00ff29,#00ff28,#00ff27,#00ff26,#00ff25,#00ff24,#00ff24,#00ff23,#0f2,#00ff21,#00ff20,#00ff1f,#00ff1e,#00ff1d,#00ff1c,#00ff1b,#00ff1a,#00ff19,#00ff18,#00ff17,#00ff15,#00ff14,#00ff13,#00ff12,#0f1,#00ff10,#00ff0f,#00ff0e,#00ff0d,#00ff0b,#00ff0a,#00ff09,#00ff08,#00ff07,#00ff05,#00ff04,#00ff03,#00ff02,#0f0,#0f0,#0f0,#0f0,#0f0,#0f0,#0f0,#0f0,#0f0,#0f0,#0f0,#0f0,#0f0,#0f0,#0f0,#0f0,#0f0,#0f0,#02ff00,#07ff00,#0cff00,#12ff00,#17ff00,#1dff00)"></i><i style="margin-left:1px;width:269px;background:linear-gradient(90deg,#00ff2f,#00ff2f,#00ff2e,#00ff2d,#00ff2c,#00ff2b,#00ff2a,#00ff29,#00ff28,#00ff27,#00ff27,#00ff26,#00ff25,#00ff24,#00ff23,#0f2,#00ff21,#00ff20,#00ff1f,#00ff1e,#00ff1d,#00ff1c,#00ff1b,#00ff1a,#00ff19,#00ff18,#00ff17,#00ff16,#00ff14,#00ff13,#00ff12,#0f1,#00ff10,#00ff0f,#00ff0e,#00ff0d,#00ff0b,#00ff0a,#00ff09,#00ff08,#00ff07,#00ff05,#00ff04,#00ff03,#00ff02,#0f0,#0f0,#0f0,#0f0,#0f0,#0f0,#0f0,#0f0,#0f0,#0f0,#0f0,#0f0,#0f0,#0f0,#0f0,#0f0,#0f0,#01ff00,#07ff00,#0cff00,#1f0,#17ff00,#1cff00,#2f0)"></i><i style="margin-left:1px;width:272px;background:linear-gradient(90deg,#00ff31,#00ff30,#00ff2f,#00ff2e,#00ff2d,#00ff2c,#00ff2b,#00ff2a,#00ff29,#00ff28,#00ff28,#00ff27,#00ff26,#00ff25,#00ff24,#00ff23,#0f2,#00ff21,#00ff20,#00ff1f,#00ff1e,#00ff1d,#00ff1c,#00ff1b,#00ff1a,#00ff19,#00ff17,#00ff16,#00ff15,#00ff14,#00ff13,#00ff12,#0f1,#00ff10,#00ff0e,#00ff0d,#00ff0c,#00ff0b,#00ff0a,#00ff08,#00ff07,#00ff06,#00ff05,#00ff03,#00ff02,#00ff01,#0f0,#0f0,#0f0,#0f0,#0f0,#0f0,#0f0,#0f0,#0f0,#0f0,#0f0,#0f0,#0f0,#0f0,#0f0,#01ff00,#06ff00,#0bff00,#1f0,#17ff00,#1cff00,#2f0,#28ff00)"></i><i style="margin-left:1px;width:274px;background:linear-gradient(90deg,#00ff32,#00ff31,#00ff30,#00ff2f,#00ff2e,#00ff2d,#00ff2c,#00ff2c,#00ff2b,#00ff2a,#00ff29,#00ff28,#00ff27,#00ff26,#00ff25,#00ff24,#00ff23,#0f2,#00ff21,#00ff20,#00ff1f,#00ff1e,#00ff1d,#00ff1c,#00ff1b,#00ff1a,#00ff19,#00ff18,#00ff17,#00ff15,#00ff14,#00ff13,#00ff12,#0f1,#00ff10,#00ff0f,#00ff0d,#00ff0c,#00ff0b,#00ff0a,#00ff09,#00ff07,#00ff06,#00ff05,#00ff04,#00ff02,#00ff01,#0f0,#0f0,#0f0,#0f0,#0f0,#0f0,#0f0,#0f0,#0f0,#0f0,#0f0,#0f0,#0f0,#0f0,#0f0,#05ff00,#0aff00,#0fff00,#15ff00,#1bff00,#20ff00,#26ff00,#2cff00)"></i><i style="margin-left:1px;width:277px;background:linear-gradient(90deg,#0f3,#00ff32,#00ff31,#00ff30,#00ff2f,#00ff2e,#00ff2e,#00ff2d,#00ff2c,#00ff2b,#00ff2a,#00ff29,#00ff28,#00ff27,#00ff26,#00ff25,#00ff24,#00ff23,#0f2,#00ff21,#00ff20,#00ff1f,#00ff1e,#00ff1d,#00ff1c,#00ff1b,#00ff1a,#00ff19,#00ff18,#00ff17,#00ff16,#00ff15,#00ff13,#00ff12,#0f1,#00ff10,#00ff0f,#00ff0e,#00ff0c,#00ff0b,#00ff0a,#00ff09,#00ff07,#00ff06,#00ff05,#00ff04,#00ff02,#00ff01,#0f0,#0f0,#0f0,#0f0,#0f0,#0f0,#0f0,#0f0,#0f0,#0f0,#0f0,#0f0,#0f0,#0f0,#04ff00,#0aff00,#0fff00,#15ff00,#1bff00,#20ff00,#26ff00,#2cff00,#32ff00)"></i><i style="margin-left:1px;width:280px;background:linear-gradient(90deg,#00ff34,#0f3,#00ff32,#00ff31,#00ff30,#00ff30,#00ff2f,#00ff2e,#00ff2d,#00ff2c,#00ff2b,#00ff2a,#00ff29,#00ff28,#00ff27,#00ff26,#00ff25,#00ff24,#00ff23,#0f2,#00ff21,#00ff20,#00ff1f,#00ff1e,#00ff1d,#00ff1c,#00ff1b,#00ff1a,#00ff19,#00ff18,#00ff16,#00ff15,#00ff14,#00ff13,#00ff12,#0f1,#00ff0f,#00ff0e,#00ff0d,#00ff0c,#00ff0b,#00ff09,#00ff08,#00ff07,#00ff05,#00ff04,#00ff03,#00ff01,#0f0,#0f0,#0f0,#0f0,#0f0,#0f0,#0f0,#0f0,#0f0,#0f0,#0f0,#0f0,#0f0,#04ff00,#09ff00,#0fff00,#14ff00,#1aff00,#20ff00,#26ff00,#2cff00,#32ff00,#38ff00)"></i><i style="margin-left:1px;width:283px;background:linear-gradient(90deg,#00ff35,#00ff34,#0f3,#00ff32,#00ff32,#00ff31,#00ff30,#00ff2f,#00ff2e,#00ff2d,#00ff2c,#00ff2b,#00ff2a,#00ff29,#00ff28,#00ff27,#00ff26,#00ff25,#00ff24,#00ff23,#0f2,#00ff21,#00ff20,#00ff1f,#00ff1e,#00ff1d,#00ff1c,#00ff1b,#00ff1a,#00ff19,#00ff18,#00ff17,#00ff15,#00ff14,#00ff13,#00ff12,#0f1,#00ff10,#00ff0e,#00ff0d,#00ff0c,#00ff0b,#00ff09,#00ff08,#00ff07,#00ff05,#00ff04,#00ff03,#00ff01,#0f0,#0f0,#0f0,#0f0,#0f0,#0f0,#0f0,#0f0,#0f0,#0f0,#0f0,#0f0,#03ff00,#09ff00,#0fff00,#14ff00,#1aff00,#20ff00,#26ff00,#2bff00,#31ff00,#38ff00,#3eff00)"></i><i style="margin-left:1px;width:285px;background:linear-gradient(90deg,#00ff36,#00ff35,#00ff35,#00ff34,#0f3,#00ff32,#00ff31,#00ff30,#00ff2f,#00ff2e,#00ff2d,#00ff2c,#00ff2c,#00ff2b,#00ff2a,#00ff29,#00ff28,#00ff27,#00ff26,#00ff25,#00ff24,#00ff23,#0f2,#00ff21,#00ff20,#00ff1f,#00ff1d,#00ff1c,#00ff1b,#00ff1a,#00ff19,#00ff18,#00ff17,#00ff16,#00ff15,#00ff13,#00ff12,#0f1,#00ff10,#00ff0f,#00ff0d,#00ff0c,#00ff0b,#00ff0a,#00ff08,#00ff07,#00ff06,#00ff04,#00ff03,#00ff02,#0f0,#0f0,#0f0,#0f0,#0f0,#0f0,#0f0,#0f0,#0f0,#0f0,#0f0,#02ff00,#08ff00,#0dff00,#13ff00,#19ff00,#1eff00,#24ff00,#2aff00,#30ff00,#36ff00,#3cff00,#42ff00)"></i><i style="margin-left:1px;width:288px;background:linear-gradient(90deg,#00ff37,#00ff37,#00ff36,#00ff35,#00ff34,#0f3,#00ff32,#00ff31,#00ff30,#00ff2f,#00ff2e,#00ff2e,#00ff2d,#00ff2c,#00ff2b,#00ff2a,#00ff29,#00ff28,#00ff27,#00ff26,#00ff25,#00ff24,#00ff23,#0f2,#00ff21,#00ff1f,#00ff1e,#00ff1d,#00ff1c,#00ff1b,#00ff1a,#00ff19,#00ff18,#00ff16,#00ff15,#00ff14,#00ff13,#00ff12,#00ff10,#00ff0f,#00ff0e,#00ff0d,#00ff0b,#00ff0a,#00ff09,#00ff08,#00ff06,#00ff05,#00ff04,#00ff02,#00ff01,#0f0,#0f0,#0f0,#0f0,#0f0,#0f0,#0f0,#0f0,#0f0,#01ff00,#07ff00,#0cff00,#12ff00,#18ff00,#1eff00,#24ff00,#2aff00,#30ff00,#36ff00,#3cff00,#42ff00,#49ff00)"></i><i style="margin-left:1px;width:291px;background:linear-gradient(90deg,#00ff39,#00ff38,#00ff37,#00ff36,#00ff35,#00ff34,#0f3,#00ff32,#00ff32,#00ff31,#00ff30,#00ff2f,#00ff2e,#00ff2d,#00ff2c,#00ff2b,#00ff2a,#00ff29,#00ff28,#00ff27,#00ff26,#00ff25,#00ff24,#00ff23,#0f2,#00ff21,#00ff20,#00ff1f,#00ff1d,#00ff1c,#00ff1b,#00ff1a,#00ff19,#00ff18,#00ff17,#00ff15,#00ff14,#00ff13,#00ff12,#0f1,#00ff0f,#00ff0e,#00ff0d,#00ff0c,#00ff0a,#00ff09,#00ff08,#00ff06,#00ff05,#00ff04,#00ff02,#00ff01,#0f0,#0f0,#0f0,#0f0,#0f0,#0f0,#0f0,#0f0,#01ff00,#07ff00,#0cff00,#12ff00,#18ff00,#1eff00,#24ff00,#2aff00,#30ff00,#36ff00,#3cff00,#42ff00,#49ff00,#4fff00)"></i><i style="margin-left:1px;width:293px;background:linear-gradient(90deg,#00ff3a,#00ff39,#00ff38,#00ff37,#00ff36,#00ff36,#00ff35,#00ff34,#0f3,#00ff32,#00ff31,#00ff30,#00ff2f,#00ff2e,#00ff2d,#00ff2c,#00ff2b,#00ff2a,#00ff29,#00ff28,#00ff27,#00ff26,#00ff25,#00ff24,#00ff23,#0f2,#00ff21,#00ff20,#00ff1f,#00ff1e,#00ff1d,#00ff1c,#00ff1a,#00ff19,#00ff18,#00ff17,#00ff16,#00ff15,#00ff13,#00ff12,#0f1,#00ff10,#00ff0e,#00ff0d,#00ff0c,#00ff0b,#00ff09,#00ff08,#00ff07,#00ff05,#00ff04,#00ff02,#00ff01,#0f0,#0f0,#0f0,#0f0,#0f0,#0f0,#0f0,#0f0,#05ff00,#0bff00,#1f0,#16ff00,#1cff00,#2f0,#28ff00,#2eff00,#34ff00,#3bff00,#41ff00,#47ff00,#4eff00,#54ff00)"></i><i style="margin-left:1px;width:296px;background:linear-gradient(90deg,#00ff3b,#00ff3a,#00ff39,#00ff38,#00ff38,#00ff37,#00ff36,#00ff35,#00ff34,#0f3,#00ff32,#00ff31,#00ff30,#00ff2f,#00ff2e,#00ff2d,#00ff2c,#00ff2b,#00ff2a,#00ff29,#00ff28,#00ff27,#00ff26,#00ff25,#00ff24,#00ff23,#0f2,#00ff21,#00ff20,#00ff1f,#00ff1e,#00ff1c,#00ff1b,#00ff1a,#00ff19,#00ff18,#00ff17,#00ff15,#00ff14,#00ff13,#00ff12,#00ff10,#00ff0f,#00ff0e,#00ff0c,#00ff0b,#00ff0a,#00ff08,#00ff07,#00ff06,#00ff04,#00ff03,#00ff01,#0f0,#0f0,#0f0,#0f0,#0f0,#0f0,#0f0,#04ff00,#0aff00,#10ff00,#16ff00,#1cff00,#2f0,#28ff00,#2eff00,#34ff00,#3aff00,#41ff00,#47ff00,#4eff00,#54ff00,#5bff00)"></i><i style="margin-left:1px;width:299px;background:linear-gradient(90deg,#00ff3c,#00ff3b,#00ff3b,#00ff3a,#00ff39,#00ff38,#00ff37,#00ff36,#00ff35,#00ff34,#0f3,#00ff32,#00ff32,#00ff31,#00ff30,#00ff2f,#00ff2e,#00ff2d,#00ff2c,#00ff2b,#00ff2a,#00ff29,#00ff28,#00ff27,#00ff25,#00ff24,#00ff23,#0f2,#00ff21,#00ff20,#00ff1f,#00ff1e,#00ff1d,#00ff1b,#00ff1a,#00ff19,#00ff18,#00ff17,#00ff15,#00ff14,#00ff13,#00ff12,#00ff10,#00ff0f,#00ff0e,#00ff0d,#00ff0b,#00ff0a,#00ff09,#00ff07,#00ff06,#00ff04,#00ff03,#00ff01,#0f0,#0f0,#0f0,#0f0,#0f0,#0f0,#04ff00,#0aff00,#10ff00,#16ff00,#1cff00,#2f0,#28ff00,#2eff00,#34ff00,#3aff00,#41ff00,#47ff00,#4eff00,#54ff00,#5bff00,#62ff00)"></i><i style="margin-left:1px;width:301px;background:linear-gradient(90deg,#00ff3e,#00ff3d,#00ff3c,#00ff3b,#00ff3a,#00ff39,#00ff38,#00ff37,#00ff37,#00ff36,#00ff35,#00ff34,#0f3,#00ff32,#00ff31,#00ff30,#00ff2f,#00ff2e,#00ff2d,#00ff2c,#00ff2b,#00ff2a,#00ff29,#00ff28,#00ff27,#00ff26,#00ff25,#00ff24,#00ff23,#00ff21,#00ff20,#00ff1f,#00ff1e,#00ff1d,#00ff1c,#00ff1b,#00ff19,#00ff18,#00ff17,#00ff16,#00ff15,#00ff13,#00ff12,#0f1,#00ff0f,#00ff0e,#00ff0d,#00ff0c,#00ff0a,#00ff09,#00ff07,#00ff06,#00ff05,#00ff03,#00ff02,#0f0,#0f0,#0f0,#0f0,#0f0,#03ff00,#09ff00,#0eff00,#14ff00,#1aff00,#20ff00,#26ff00,#2cff00,#3f0,#39ff00,#3fff00,#46ff00,#4cff00,#53ff00,#5aff00,#61ff00,#67ff00)"></i><i style="margin-left:1px;width:304px;background:linear-gradient(90deg,#00ff3f,#00ff3e,#00ff3d,#00ff3c,#00ff3b,#00ff3a,#00ff3a,#00ff39,#00ff38,#00ff37,#00ff36,#00ff35,#00ff34,#0f3,#00ff32,#00ff31,#00ff30,#00ff2f,#00ff2e,#00ff2d,#00ff2c,#00ff2b,#00ff2a,#00ff29,#00ff28,#00ff27,#00ff26,#00ff25,#00ff24,#0f2,#00ff21,#00ff20,#00ff1f,#00ff1e,#00ff1d,#00ff1b,#00ff1a,#00ff19,#00ff18,#00ff17,#00ff15,#00ff14,#00ff13,#0f1,#00ff10,#00ff0f,#00ff0e,#00ff0c,#00ff0b,#00ff09,#00ff08,#00ff07,#00ff05,#00ff04,#00ff02,#00ff01,#0f0,#0f0,#0f0,#02ff00,#07ff00,#0dff00,#13ff00,#19ff00,#1fff00,#26ff00,#2cff00,#32ff00,#38ff00,#3fff00,#46ff00,#4cff00,#53ff00,#5aff00,#61ff00,#68ff00,#6fff00)"></i><i style="margin-left:1px;width:307px;background:linear-gradient(90deg,#00ff40,#00ff3f,#00ff3e,#00ff3d,#00ff3d,#00ff3c,#00ff3b,#00ff3a,#00ff39,#00ff38,#00ff37,#00ff36,#00ff35,#00ff34,#0f3,#00ff32,#00ff31,#00ff30,#00ff2f,#00ff2e,#00ff2d,#00ff2c,#00ff2b,#00ff2a,#00ff29,#00ff28,#00ff27,#00ff26,#00ff25,#00ff24,#00ff23,#0f2,#00ff20,#00ff1f,#00ff1e,#00ff1d,#00ff1c,#00ff1a,#00ff19,#00ff18,#00ff17,#00ff16,#00ff14,#00ff13,#00ff12,#00ff10,#00ff0f,#00ff0e,#00ff0c,#00ff0b,#00ff09,#00ff08,#00ff07,#00ff05,#00ff04,#00ff02,#00ff01,#0f0,#0f0,#02ff00,#07ff00,#0dff00,#13ff00,#19ff00,#1fff00,#26ff00,#2cff00,#32ff00,#39ff00,#3fff00,#46ff00,#4cff00,#53ff00,#5aff00,#61ff00,#68ff00,#6fff00,#76ff00)"></i><i style="margin-left:1px;width:309px;background:linear-gradient(90deg,#00ff41,#00ff40,#00ff40,#00ff3f,#00ff3e,#00ff3d,#00ff3c,#00ff3b,#00ff3a,#00ff39,#00ff39,#00ff38,#00ff37,#00ff36,#00ff35,#00ff34,#0f3,#00ff32,#00ff31,#00ff30,#00ff2f,#00ff2e,#00ff2d,#00ff2c,#00ff2b,#00ff2a,#00ff29,#00ff28,#00ff26,#00ff25,#00ff24,#00ff23,#0f2,#00ff21,#00ff20,#00ff1e,#00ff1d,#00ff1c,#00ff1b,#00ff1a,#00ff18,#00ff17,#00ff16,#00ff15,#00ff13,#00ff12,#0f1,#00ff0f,#00ff0e,#00ff0d,#00ff0b,#00ff0a,#00ff08,#00ff07,#00ff05,#00ff04,#00ff03,#00ff01,#0f0,#01ff00,#06ff00,#0cff00,#12ff00,#18ff00,#1eff00,#24ff00,#2bff00,#31ff00,#37ff00,#3eff00,#4f0,#4bff00,#52ff00,#59ff00,#60ff00,#67ff00,#6eff00,#75ff00,#7cff00)"></i><i style="margin-left:1px;width:312px;background:linear-gradient(90deg,#00ff43,#00ff42,#00ff41,#00ff40,#00ff3f,#00ff3e,#00ff3d,#00ff3d,#00ff3c,#00ff3b,#00ff3a,#00ff39,#00ff38,#00ff37,#00ff36,#00ff35,#00ff34,#0f3,#00ff32,#00ff31,#00ff30,#00ff2f,#00ff2e,#00ff2d,#00ff2c,#00ff2b,#00ff2a,#00ff29,#00ff27,#00ff26,#00ff25,#00ff24,#00ff23,#0f2,#00ff21,#00ff1f,#00ff1e,#00ff1d,#00ff1c,#00ff1a,#00ff19,#00ff18,#00ff17,#00ff15,#00ff14,#00ff13,#0f1,#00ff10,#00ff0f,#00ff0d,#00ff0c,#00ff0a,#00ff09,#00ff07,#00ff06,#00ff05,#00ff03,#00ff01,#0f0,#05ff00,#0bff00,#1f0,#17ff00,#1dff00,#23ff00,#2aff00,#30ff00,#37ff00,#3dff00,#4f0,#4bff00,#51ff00,#58ff00,#5fff00,#67ff00,#6eff00,#75ff00,#7dff00,#84ff00)"></i><i style="margin-left:1px;width:315px;background:linear-gradient(90deg,#0f4,#00ff43,#00ff42,#00ff41,#00ff41,#00ff40,#00ff3f,#00ff3e,#00ff3d,#00ff3c,#00ff3b,#00ff3a,#00ff39,#00ff38,#00ff37,#00ff36,#00ff35,#00ff34,#0f3,#00ff32,#00ff31,#00ff30,#00ff2f,#00ff2e,#00ff2d,#00ff2c,#00ff2b,#00ff2a,#00ff29,#00ff28,#00ff27,#00ff26,#00ff24,#00ff23,#0f2,#00ff21,#00ff20,#00ff1e,#00ff1d,#00ff1c,#00ff1b,#00ff19,#00ff18,#00ff17,#00ff16,#00ff14,#00ff13,#00ff12,#00ff10,#00ff0f,#00ff0d,#00ff0c,#00ff0b,#00ff09,#00ff08,#00ff06,#00ff05,#00ff03,#00ff01,#05ff00,#0bff00,#1f0,#17ff00,#1dff00,#23ff00,#2aff00,#30ff00,#37ff00,#3dff00,#4f0,#4bff00,#52ff00,#59ff00,#60ff00,#67ff00,#6eff00,#75ff00,#7dff00,#85ff00,#8cff00)"></i><i style="margin-left:1px;width:317px;background:linear-gradient(90deg,#00ff45,#0f4,#0f4,#00ff43,#00ff42,#00ff41,#00ff40,#00ff3f,#00ff3e,#00ff3d,#00ff3d,#00ff3c,#00ff3b,#00ff3a,#00ff39,#00ff38,#00ff37,#00ff36,#00ff35,#00ff34,#0f3,#00ff32,#00ff31,#00ff30,#00ff2f,#00ff2e,#00ff2d,#00ff2c,#00ff2a,#00ff29,#00ff28,#00ff27,#00ff26,#00ff25,#00ff24,#0f2,#00ff21,#00ff20,#00ff1f,#00ff1e,#00ff1c,#00ff1b,#00ff1a,#00ff19,#00ff17,#00ff16,#00ff15,#00ff13,#00ff12,#0f1,#00ff0f,#00ff0e,#00ff0c,#00ff0b,#00ff09,#00ff08,#00ff06,#00ff05,#00ff03,#04ff02,#0aff00,#10ff00,#16ff00,#1cff00,#2f0,#29ff00,#2fff00,#36ff00,#3cff00,#43ff00,#4aff00,#50ff00,#57ff00,#5eff00,#6f0,#6dff00,#74ff00,#7cff00,#83ff00,#8bff00,#93ff00)"></i><i style="margin-left:2px;width:319px;background:linear-gradient(90deg,#00ff46,#00ff46,#00ff45,#0f4,#00ff43,#00ff42,#00ff41,#00ff40,#00ff3f,#00ff3f,#00ff3e,#00ff3d,#00ff3c,#00ff3b,#00ff3a,#00ff39,#00ff38,#00ff37,#00ff36,#00ff35,#00ff34,#0f3,#00ff32,#00ff31,#00ff30,#00ff2f,#00ff2e,#00ff2c,#00ff2b,#00ff2a,#00ff29,#00ff28,#00ff27,#00ff26,#00ff24,#00ff23,#0f2,#00ff21,#00ff20,#00ff1e,#00ff1d,#00ff1c,#00ff1b,#00ff19,#00ff18,#00ff17,#00ff15,#00ff14,#00ff13,#0f1,#00ff10,#00ff0e,#00ff0d,#00ff0b,#00ff0a,#00ff08,#00ff07,#00ff05,#03ff04,#09ff02,#0fff01,#15ff00,#1bff00,#21ff00,#28ff00,#2eff00,#35ff00,#3cff00,#42ff00,#49ff00,#50ff00,#57ff00,#5eff00,#6f0,#6dff00,#74ff00,#7cff00,#83ff00,#8bff00,#93ff00,#9bff00)"></i><i style="margin-left:2px;width:322px;background:linear-gradient(90deg,#00ff48,#00ff47,#00ff46,#00ff45,#0f4,#00ff43,#00ff43,#00ff42,#00ff41,#00ff40,#00ff3f,#00ff3e,#00ff3d,#00ff3c,#00ff3b,#00ff3a,#00ff39,#00ff38,#00ff37,#00ff36,#00ff35,#00ff34,#0f3,#00ff32,#00ff31,#00ff30,#00ff2f,#00ff2e,#00ff2d,#00ff2c,#00ff2b,#00ff29,#00ff28,#00ff27,#00ff26,#00ff25,#00ff24,#0f2,#00ff21,#00ff20,#00ff1f,#00ff1d,#00ff1c,#00ff1b,#00ff19,#00ff18,#00ff17,#00ff15,#00ff14,#00ff13,#0f1,#00ff10,#00ff0e,#00ff0d,#00ff0b,#00ff0a,#00ff08,#00ff07,#03ff05,#09ff04,#0fff02,#15ff01,#1bff00,#2f0,#28ff00,#2fff00,#35ff00,#3cff00,#43ff00,#4aff00,#50ff00,#58ff00,#5fff00,#6f0,#6dff00,#75ff00,#7cff00,#84ff00,#8cff00,#94ff00,#9cff00,#a4ff00)"></i><i style="margin-left:2px;width:324px;background:linear-gradient(90deg,#00ff49,#00ff48,#00ff47,#00ff47,#00ff46,#00ff45,#0f4,#00ff43,#00ff42,#00ff41,#00ff40,#00ff3f,#00ff3e,#00ff3d,#00ff3d,#00ff3c,#00ff3b,#00ff3a,#00ff39,#00ff38,#00ff37,#00ff36,#00ff35,#0f3,#00ff32,#00ff31,#00ff30,#00ff2f,#00ff2e,#00ff2d,#00ff2c,#00ff2b,#00ff29,#00ff28,#00ff27,#00ff26,#00ff25,#00ff23,#0f2,#00ff21,#00ff20,#00ff1e,#00ff1d,#00ff1c,#00ff1b,#00ff19,#00ff18,#00ff16,#00ff15,#00ff14,#00ff12,#0f1,#00ff0f,#00ff0e,#00ff0c,#00ff0b,#00ff09,#00ff08,#06ff06,#0cff05,#12ff03,#19ff01,#1fff00,#26ff00,#2cff00,#3f0,#3aff00,#40ff00,#47ff00,#4eff00,#5f0,#5dff00,#64ff00,#6bff00,#73ff00,#7bff00,#82ff00,#8aff00,#92ff00,#9aff00,#a2ff00,#abff00)"></i><i style="margin-left:2px;width:327px;background:linear-gradient(90deg,#00ff4b,#00ff4a,#00ff49,#00ff48,#00ff47,#00ff46,#00ff45,#0f4,#0f4,#00ff43,#00ff42,#00ff41,#00ff40,#00ff3f,#00ff3e,#00ff3d,#00ff3c,#00ff3b,#00ff3a,#00ff39,#00ff38,#00ff37,#00ff36,#00ff35,#00ff34,#0f3,#00ff32,#00ff31,#00ff30,#00ff2e,#00ff2d,#00ff2c,#00ff2b,#00ff2a,#00ff29,#00ff27,#00ff26,#00ff25,#00ff24,#00ff23,#00ff21,#00ff20,#00ff1f,#00ff1d,#00ff1c,#00ff1b,#00ff19,#00ff18,#00ff17,#00ff15,#00ff14,#00ff12,#0f1,#00ff10,#00ff0e,#00ff0c,#00ff0b,#00ff09,#06ff08,#0cff06,#13ff05,#19ff03,#1fff01,#26ff00,#2cff00,#3f0,#3aff00,#41ff00,#48ff00,#4fff00,#56ff00,#5dff00,#64ff00,#6cff00,#73ff00,#7bff00,#83ff00,#8bff00,#93ff00,#9bff00,#a3ff00,#acff00,#b4ff00)"></i><i style="margin-left:2px;width:330px;background:linear-gradient(90deg,#00ff4c,#00ff4b,#00ff4a,#00ff49,#00ff49,#00ff48,#00ff47,#00ff46,#00ff45,#0f4,#00ff43,#00ff42,#00ff41,#00ff40,#00ff3f,#00ff3e,#00ff3e,#00ff3d,#00ff3c,#00ff3b,#00ff3a,#00ff39,#00ff37,#00ff36,#00ff35,#00ff34,#0f3,#00ff32,#00ff31,#00ff30,#00ff2f,#00ff2e,#00ff2d,#00ff2b,#00ff2a,#00ff29,#00ff28,#00ff27,#00ff25,#00ff24,#00ff23,#0f2,#00ff20,#00ff1f,#00ff1e,#00ff1c,#00ff1b,#00ff1a,#00ff18,#00ff17,#00ff16,#00ff14,#00ff13,#0f1,#00ff10,#00ff0e,#00ff0d,#00ff0b,#06ff0a,#0cff08,#13ff06,#19ff05,#1fff03,#26ff01,#2dff00,#3f0,#3aff00,#41ff00,#48ff00,#4fff00,#56ff00,#5dff00,#65ff00,#6cff00,#74ff00,#7cff00,#83ff00,#8bff00,#93ff00,#9cff00,#a4ff00,#acff00,#b5ff00,#beff00)"></i><i style="margin-left:2px;width:332px;background:linear-gradient(90deg,#00ff4d,#00ff4c,#00ff4c,#00ff4b,#00ff4a,#00ff49,#00ff48,#00ff47,#00ff46,#00ff45,#00ff45,#0f4,#00ff43,#00ff42,#00ff41,#00ff40,#00ff3f,#00ff3e,#00ff3d,#00ff3c,#00ff3b,#00ff3a,#00ff39,#00ff38,#00ff37,#00ff36,#00ff35,#0f3,#00ff32,#00ff31,#00ff30,#00ff2f,#00ff2e,#00ff2d,#00ff2b,#00ff2a,#00ff29,#00ff28,#00ff27,#00ff25,#00ff24,#00ff23,#00ff21,#00ff20,#00ff1f,#00ff1e,#00ff1c,#00ff1b,#00ff19,#00ff18,#00ff17,#00ff15,#00ff14,#00ff12,#0f1,#00ff0f,#00ff0e,#03ff0c,#0aff0a,#10ff09,#16ff07,#1dff06,#23ff04,#2aff02,#31ff00,#38ff00,#3eff00,#46ff00,#4dff00,#54ff00,#5bff00,#63ff00,#6aff00,#72ff00,#7aff00,#82ff00,#8aff00,#92ff00,#9aff00,#a2ff00,#abff00,#b3ff00,#bcff00,#c5ff00)"></i><i style="margin-left:2px;width:335px;background:linear-gradient(90deg,#00ff4f,#00ff4e,#00ff4d,#00ff4c,#00ff4b,#00ff4b,#00ff4a,#00ff49,#00ff48,#00ff47,#00ff46,#00ff45,#0f4,#00ff43,#00ff42,#00ff41,#00ff40,#00ff3f,#00ff3e,#00ff3d,#00ff3c,#00ff3b,#00ff3a,#00ff39,#00ff38,#00ff37,#00ff36,#00ff35,#00ff34,#0f3,#00ff32,#00ff31,#00ff2f,#00ff2e,#00ff2d,#00ff2c,#00ff2b,#00ff29,#00ff28,#00ff27,#00ff26,#00ff24,#00ff23,#0f2,#00ff21,#00ff1f,#00ff1e,#00ff1c,#00ff1b,#00ff1a,#00ff18,#00ff17,#00ff15,#00ff14,#00ff12,#0f1,#00ff0f,#03ff0e,#0aff0c,#10ff0b,#16ff09,#1dff07,#24ff06,#2aff04,#31ff02,#38ff00,#3fff00,#46ff00,#4dff00,#54ff00,#5cff00,#63ff00,#6bff00,#72ff00,#7aff00,#82ff00,#8aff00,#92ff00,#9bff00,#a3ff00,#acff00,#b4ff00,#bdff00,#c6ff00,#cfff00)"></i><i style="margin-left:2px;width:338px;background:linear-gradient(90deg,#00ff50,#00ff4f,#00ff4f,#00ff4e,#00ff4d,#00ff4c,#00ff4b,#00ff4a,#00ff49,#00ff48,#00ff48,#00ff47,#00ff46,#00ff45,#0f4,#00ff43,#00ff42,#00ff41,#00ff40,#00ff3f,#00ff3e,#00ff3d,#00ff3c,#00ff3b,#00ff3a,#00ff39,#00ff38,#00ff37,#00ff36,#00ff34,#0f3,#00ff32,#00ff31,#00ff30,#00ff2f,#00ff2d,#00ff2c,#00ff2b,#00ff2a,#00ff29,#00ff27,#00ff26,#00ff25,#00ff24,#0f2,#00ff21,#00ff1f,#00ff1e,#00ff1d,#00ff1b,#00ff1a,#00ff18,#00ff17,#00ff16,#00ff14,#00ff13,#0f1,#04ff0f,#0aff0e,#10ff0c,#17ff0b,#1dff09,#24ff07,#2aff06,#31ff04,#38ff02,#3fff01,#46ff00,#4dff00,#5f0,#5cff00,#64ff00,#6bff00,#73ff00,#7bff00,#83ff00,#8bff00,#93ff00,#9cff00,#a4ff00,#adff00,#b5ff00,#beff00,#c7ff00,#d0ff00,#daff00)"></i><i style="margin-left:3px;width:339px;background:linear-gradient(90deg,#00ff51,#00ff51,#00ff50,#00ff4f,#00ff4e,#00ff4d,#00ff4c,#00ff4b,#00ff4b,#00ff4a,#00ff49,#00ff48,#00ff47,#00ff46,#00ff45,#0f4,#00ff43,#00ff42,#00ff41,#00ff40,#00ff3f,#00ff3e,#00ff3d,#00ff3c,#00ff3b,#00ff3a,#00ff39,#00ff38,#00ff37,#00ff36,#00ff34,#0f3,#00ff32,#00ff31,#00ff30,#00ff2f,#00ff2d,#00ff2c,#00ff2b,#00ff2a,#00ff28,#00ff27,#00ff26,#00ff25,#00ff23,#0f2,#00ff20,#00ff1f,#00ff1e,#00ff1c,#00ff1b,#00ff19,#00ff18,#00ff16,#00ff15,#00ff13,#01ff12,#07ff10,#0eff0f,#14ff0d,#1bff0b,#21ff0a,#28ff08,#2fff06,#36ff05,#3dff03,#44ff01,#4bff00,#53ff00,#5aff00,#62ff00,#69ff00,#71ff00,#79ff00,#81ff00,#89ff00,#91ff00,#9aff00,#a2ff00,#abff00,#b4ff00,#bdff00,#c6ff00,#cfff00,#d8ff00,#e2ff00)"></i><i style="margin-left:3px;width:342px;background:linear-gradient(90deg,#00ff53,#00ff52,#00ff51,#00ff50,#00ff50,#00ff4f,#00ff4e,#00ff4d,#00ff4c,#00ff4b,#00ff4a,#00ff49,#00ff48,#00ff48,#00ff47,#00ff46,#00ff45,#0f4,#00ff43,#00ff42,#00ff41,#00ff40,#00ff3f,#00ff3e,#00ff3d,#00ff3c,#00ff3a,#00ff39,#00ff38,#00ff37,#00ff36,#00ff35,#00ff34,#0f3,#00ff31,#00ff30,#00ff2f,#00ff2e,#00ff2d,#00ff2b,#00ff2a,#00ff29,#00ff28,#00ff26,#00ff25,#00ff24,#0f2,#00ff21,#00ff1f,#00ff1e,#00ff1d,#00ff1b,#00ff1a,#00ff18,#00ff17,#00ff15,#01ff14,#08ff12,#0eff11,#14ff0f,#1bff0d,#22ff0c,#28ff0a,#2fff08,#36ff07,#3dff05,#45ff03,#4cff01,#53ff00,#5bff00,#62ff00,#6aff00,#72ff00,#7aff00,#82ff00,#8aff00,#92ff00,#9bff00,#a3ff00,#acff00,#b5ff00,#beff00,#c7ff00,#d0ff00,#daff00,#e3ff00,#edff00)"></i><i style="margin-left:3px;width:344px;background:linear-gradient(90deg,#00ff54,#00ff54,#00ff53,#00ff52,#00ff51,#00ff50,#00ff4f,#00ff4e,#00ff4e,#00ff4d,#00ff4c,#00ff4b,#00ff4a,#00ff49,#00ff48,#00ff47,#00ff46,#00ff45,#0f4,#00ff43,#00ff42,#00ff41,#00ff40,#00ff3f,#00ff3e,#00ff3d,#00ff3c,#00ff3b,#00ff3a,#00ff39,#00ff37,#00ff36,#00ff35,#00ff34,#0f3,#00ff32,#00ff30,#00ff2f,#00ff2e,#00ff2d,#00ff2b,#00ff2a,#00ff29,#00ff27,#00ff26,#00ff25,#00ff23,#0f2,#00ff21,#00ff1f,#00ff1e,#00ff1c,#00ff1b,#00ff19,#00ff18,#00ff16,#04ff15,#0bff13,#11ff12,#18ff10,#1fff0e,#26ff0d,#2dff0b,#34ff09,#3bff07,#42ff06,#49ff04,#51ff02,#58ff00,#60ff00,#68ff00,#6fff00,#7f0,#80ff00,#8f0,#90ff00,#9f0,#a1ff00,#af0,#b3ff00,#bcff00,#c5ff00,#cfff00,#d8ff00,#e2ff00,#ecff00,#f6ff00)"></i><i style="margin-left:3px;width:347px;background:linear-gradient(90deg,#00ff56,#0f5,#00ff54,#00ff53,#00ff53,#00ff52,#00ff51,#00ff50,#00ff4f,#00ff4e,#00ff4d,#00ff4c,#00ff4c,#00ff4b,#00ff4a,#00ff49,#00ff48,#00ff47,#00ff46,#00ff45,#0f4,#00ff43,#00ff42,#00ff41,#00ff40,#00ff3f,#00ff3e,#00ff3c,#00ff3b,#00ff3a,#00ff39,#00ff38,#00ff37,#00ff36,#00ff34,#0f3,#00ff32,#00ff31,#00ff30,#00ff2e,#00ff2d,#00ff2c,#00ff2b,#00ff29,#00ff28,#00ff27,#00ff25,#00ff24,#0f2,#00ff21,#00ff20,#00ff1e,#00ff1d,#00ff1b,#00ff1a,#00ff18,#05ff17,#0bff15,#12ff13,#18ff12,#1fff10,#26ff0e,#2dff0d,#34ff0b,#3bff09,#42ff08,#4aff06,#51ff04,#59ff02,#60ff00,#68ff00,#70ff00,#78ff00,#80ff00,#89ff00,#91ff00,#9aff00,#a2ff00,#abff00,#b4ff00,#bdff00,#c7ff00,#d0ff00,#daff00,#e3ff00,#edff00,#f7ff00,#fffd00)"></i><i style="margin-left:3px;width:350px;background:linear-gradient(90deg,#00ff58,#00ff57,#00ff56,#0f5,#00ff54,#00ff53,#00ff52,#00ff52,#00ff51,#00ff50,#00ff4f,#00ff4e,#00ff4d,#00ff4c,#00ff4b,#00ff4a,#00ff49,#00ff48,#00ff47,#00ff46,#00ff45,#0f4,#00ff43,#00ff42,#00ff41,#00ff40,#00ff3f,#00ff3e,#00ff3d,#00ff3c,#00ff3b,#00ff3a,#00ff39,#00ff37,#00ff36,#00ff35,#00ff34,#0f3,#00ff31,#00ff30,#00ff2f,#00ff2e,#00ff2c,#00ff2b,#00ff2a,#00ff28,#00ff27,#00ff26,#00ff24,#00ff23,#00ff21,#00ff20,#00ff1e,#00ff1d,#00ff1b,#00ff1a,#05ff18,#0bff17,#12ff15,#19ff14,#1fff12,#26ff10,#2dff0f,#34ff0d,#3cff0b,#43ff09,#4aff08,#52ff06,#59ff04,#61ff02,#69ff00,#71ff00,#79ff00,#81ff00,#8aff00,#92ff00,#9bff00,#a3ff00,#acff00,#b5ff00,#beff00,#c8ff00,#d1ff00,#dbff00,#e5ff00,#efff00,#f9ff00,#fffb00,#fff100)"></i><i style="margin-left:4px;width:351px;background:linear-gradient(90deg,#00ff59,#00ff58,#00ff57,#00ff56,#00ff56,#0f5,#00ff54,#00ff53,#00ff52,#00ff51,#00ff50,#00ff4f,#00ff4e,#00ff4e,#00ff4d,#00ff4c,#00ff4b,#00ff4a,#00ff49,#00ff48,#00ff47,#00ff46,#00ff45,#0f4,#00ff43,#00ff42,#00ff40,#00ff3f,#00ff3e,#00ff3d,#00ff3c,#00ff3b,#00ff3a,#00ff39,#00ff37,#00ff36,#00ff35,#00ff34,#0f3,#00ff31,#00ff30,#00ff2f,#00ff2d,#00ff2c,#00ff2b,#00ff29,#00ff28,#00ff27,#00ff25,#00ff24,#0f2,#00ff21,#00ff20,#00ff1e,#00ff1d,#02ff1b,#09ff19,#0fff18,#16ff16,#1dff15,#24ff13,#2bff11,#32ff10,#39ff0e,#40ff0c,#48ff0a,#4fff09,#57ff07,#5fff05,#67ff03,#6fff01,#7f0,#7fff00,#8f0,#90ff00,#9f0,#a2ff00,#abff00,#b4ff00,#bdff00,#c6ff00,#d0ff00,#d9ff00,#e3ff00,#edff00,#f8ff00,#fffc00,#fff200,#ffe900)"></i><i style="margin-left:4px;width:354px;background:linear-gradient(90deg,#00ff5a,#00ff5a,#00ff59,#00ff58,#00ff57,#00ff56,#0f5,#0f5,#00ff54,#00ff53,#00ff52,#00ff51,#00ff50,#00ff4f,#00ff4e,#00ff4d,#00ff4c,#00ff4b,#00ff4a,#00ff49,#00ff48,#00ff47,#00ff46,#00ff45,#0f4,#00ff43,#00ff42,#00ff41,#00ff40,#00ff3f,#00ff3e,#00ff3d,#00ff3c,#00ff3a,#00ff39,#00ff38,#00ff37,#00ff36,#00ff34,#0f3,#00ff32,#00ff31,#00ff2f,#00ff2e,#00ff2d,#00ff2b,#00ff2a,#00ff29,#00ff27,#00ff26,#00ff24,#00ff23,#00ff21,#00ff20,#00ff1e,#02ff1d,#09ff1b,#10ff1a,#16ff18,#1dff17,#24ff15,#2bff13,#32ff12,#3aff10,#41ff0e,#48ff0c,#50ff0a,#58ff09,#60ff07,#67ff05,#70ff03,#78ff01,#80ff00,#8f0,#91ff00,#9aff00,#a3ff00,#acff00,#b5ff00,#beff00,#c7ff00,#d1ff00,#dbff00,#e5ff00,#efff00,#f9ff00,#fffa00,#fff100,#ffe700,#ffdf00)"></i><i style="margin-left:4px;width:357px;background:linear-gradient(90deg,#00ff5c,#00ff5b,#00ff5a,#00ff5a,#00ff59,#00ff58,#00ff57,#00ff56,#0f5,#00ff54,#00ff54,#00ff53,#00ff52,#00ff51,#00ff50,#00ff4f,#00ff4e,#00ff4d,#00ff4c,#00ff4b,#00ff4a,#00ff49,#00ff48,#00ff47,#00ff46,#00ff45,#0f4,#00ff43,#00ff42,#00ff41,#00ff40,#00ff3e,#00ff3d,#00ff3c,#00ff3b,#00ff3a,#00ff39,#00ff37,#00ff36,#00ff35,#00ff34,#00ff32,#00ff31,#00ff30,#00ff2f,#00ff2d,#00ff2c,#00ff2a,#00ff29,#00ff28,#00ff26,#00ff25,#00ff23,#0f2,#00ff20,#03ff1f,#09ff1d,#10ff1c,#17ff1a,#1eff18,#25ff17,#2cff15,#33ff13,#3aff12,#42ff10,#49ff0e,#51ff0c,#58ff0b,#60ff09,#68ff07,#70ff05,#79ff03,#81ff01,#89ff00,#92ff00,#9bff00,#a4ff00,#adff00,#b6ff00,#bfff00,#c9ff00,#d3ff00,#dcff00,#e6ff00,#f1ff00,#fbff00,#fff900,#ffef00,#ffe600,#fd0,#ffd500)"></i><i style="margin-left:4px;width:359px;background:linear-gradient(90deg,#00ff5e,#00ff5d,#00ff5c,#00ff5b,#00ff5a,#00ff5a,#00ff59,#00ff58,#00ff57,#00ff56,#0f5,#00ff54,#00ff53,#00ff52,#00ff51,#00ff51,#00ff50,#00ff4f,#00ff4e,#00ff4d,#00ff4c,#00ff4b,#00ff4a,#00ff49,#00ff48,#00ff47,#00ff45,#0f4,#00ff43,#00ff42,#00ff41,#00ff40,#00ff3f,#00ff3e,#00ff3c,#00ff3b,#00ff3a,#00ff39,#00ff38,#00ff36,#00ff35,#00ff34,#0f3,#00ff31,#00ff30,#00ff2f,#00ff2d,#00ff2c,#00ff2a,#00ff29,#00ff28,#00ff26,#00ff25,#00ff23,#0f2,#06ff20,#0dff1e,#13ff1d,#1aff1b,#21ff1a,#29ff18,#30ff16,#37ff15,#3fff13,#46ff11,#4eff0f,#56ff0e,#5dff0c,#66ff0a,#6eff08,#76ff06,#7eff04,#87ff02,#90ff00,#98ff00,#a1ff00,#abff00,#b4ff00,#bdff00,#c7ff00,#d1ff00,#dbff00,#e5ff00,#efff00,#f9ff00,#fffa00,#fff000,#ffe700,#ffde00,#ffd500,#ffce00)"></i><i style="margin-left:4px;width:362px;background:linear-gradient(90deg,#00ff5f,#00ff5e,#00ff5e,#00ff5d,#00ff5c,#00ff5b,#00ff5a,#00ff59,#00ff59,#00ff58,#00ff57,#00ff56,#0f5,#00ff54,#00ff53,#00ff52,#00ff51,#00ff50,#00ff4f,#00ff4e,#00ff4d,#00ff4c,#00ff4b,#00ff4a,#00ff49,#00ff48,#00ff47,#00ff46,#00ff45,#0f4,#00ff43,#00ff42,#00ff41,#00ff3f,#00ff3e,#00ff3d,#00ff3c,#00ff3b,#00ff3a,#00ff38,#00ff37,#00ff36,#00ff34,#0f3,#00ff32,#00ff30,#00ff2f,#00ff2e,#00ff2c,#00ff2b,#00ff29,#00ff28,#00ff27,#00ff25,#00ff24,#06ff22,#0dff20,#14ff1f,#1bff1d,#22ff1c,#29ff1a,#30ff18,#38ff17,#3fff15,#47ff13,#4eff11,#56ff10,#5eff0e,#66ff0c,#6fff0a,#77ff08,#7fff06,#88ff04,#91ff02,#9aff00,#a3ff00,#acff00,#b5ff00,#bfff00,#c8ff00,#d2ff00,#dcff00,#e6ff00,#f1ff00,#fbff00,#fff800,#fe0,#ffe500,#ffdc00,#ffd400,#fc0,#ffc500)"></i><i style="margin-left:5px;width:363px;background:linear-gradient(90deg,#00ff61,#00ff60,#00ff5f,#00ff5e,#00ff5d,#00ff5d,#00ff5c,#00ff5b,#00ff5a,#00ff59,#00ff58,#00ff57,#00ff56,#00ff56,#0f5,#00ff54,#00ff53,#00ff52,#00ff51,#00ff50,#00ff4f,#00ff4e,#00ff4d,#00ff4c,#00ff4b,#00ff4a,#00ff49,#00ff48,#00ff46,#00ff45,#0f4,#00ff43,#00ff42,#00ff41,#00ff40,#00ff3e,#00ff3d,#00ff3c,#00ff3b,#00ff3a,#00ff38,#00ff37,#00ff36,#00ff34,#0f3,#00ff32,#00ff30,#00ff2f,#00ff2e,#00ff2c,#00ff2b,#00ff29,#00ff28,#00ff26,#03ff25,#0aff23,#1f2,#18ff20,#1fff1e,#26ff1d,#2eff1b,#35ff19,#3dff18,#44ff16,#4cff14,#54ff12,#5cff11,#64ff0f,#6cff0d,#75ff0b,#7dff09,#86ff07,#8fff05,#98ff03,#a1ff01,#af0,#b3ff00,#bdff00,#c7ff00,#d1ff00,#dbff00,#e5ff00,#efff00,#faff00,#fff900,#ffef00,#ffe600,#fd0,#ffd500,#ffcd00,#ffc500,#ffbe00)"></i><i style="margin-left:5px;width:366px;background:linear-gradient(90deg,#00ff62,#00ff62,#00ff61,#00ff60,#00ff5f,#00ff5e,#00ff5d,#00ff5d,#00ff5c,#00ff5b,#00ff5a,#00ff59,#00ff58,#00ff57,#00ff56,#0f5,#0f5,#00ff54,#00ff53,#00ff52,#00ff51,#00ff50,#00ff4f,#00ff4e,#00ff4d,#00ff4c,#00ff4a,#00ff49,#00ff48,#00ff47,#00ff46,#00ff45,#0f4,#00ff43,#00ff42,#00ff40,#00ff3f,#00ff3e,#00ff3d,#00ff3c,#00ff3a,#00ff39,#00ff38,#00ff36,#00ff35,#00ff34,#00ff32,#00ff31,#00ff30,#00ff2e,#00ff2d,#00ff2b,#00ff2a,#00ff28,#04ff27,#0aff25,#11ff24,#18ff22,#20ff20,#27ff1f,#2eff1d,#36ff1b,#3dff1a,#45ff18,#4dff16,#55ff14,#5dff13,#65ff11,#6dff0f,#76ff0d,#7eff0b,#87ff09,#90ff07,#99ff05,#a2ff03,#abff01,#b5ff00,#beff00,#c8ff00,#d2ff00,#dcff00,#e7ff00,#f1ff00,#fcff00,#fff800,#fe0,#ffe400,#ffdb00,#ffd300,#ffcb00,#ffc400,#ffbd00,#ffb600)"></i><i style="margin-left:5px;width:369px;background:linear-gradient(90deg,#00ff64,#00ff63,#00ff62,#00ff62,#00ff61,#00ff60,#00ff5f,#00ff5e,#00ff5d,#00ff5d,#00ff5c,#00ff5b,#00ff5a,#00ff59,#00ff58,#00ff57,#00ff56,#0f5,#00ff54,#00ff53,#00ff52,#00ff51,#00ff50,#00ff4f,#00ff4e,#00ff4d,#00ff4c,#00ff4b,#00ff4a,#00ff49,#00ff48,#00ff47,#00ff46,#00ff45,#00ff43,#00ff42,#00ff41,#00ff40,#00ff3f,#00ff3d,#00ff3c,#00ff3b,#00ff3a,#00ff38,#00ff37,#00ff36,#00ff34,#0f3,#00ff32,#00ff30,#00ff2f,#00ff2d,#00ff2c,#00ff2a,#04ff29,#0bff27,#12ff26,#19ff24,#20ff23,#27ff21,#2fff1f,#36ff1e,#3eff1c,#45ff1a,#4dff18,#55ff17,#5dff15,#66ff13,#6eff11,#76ff0f,#7fff0d,#88ff0b,#91ff09,#9aff07,#a3ff05,#acff03,#b6ff01,#c0ff00,#caff00,#d4ff00,#deff00,#e8ff00,#f3ff00,#feff00,#fff600,#ffec00,#ffe200,#ffda00,#ffd100,#ffca00,#ffc200,#fb0,#ffb400,#ffae00)"></i><i style="margin-left:5px;width:371px;background:linear-gradient(90deg,#0f6,#00ff65,#00ff64,#00ff63,#00ff63,#00ff62,#00ff61,#00ff60,#00ff5f,#00ff5e,#00ff5d,#00ff5d,#00ff5c,#00ff5b,#00ff5a,#00ff59,#00ff58,#00ff57,#00ff56,#0f5,#00ff54,#00ff53,#00ff52,#00ff51,#00ff50,#00ff4f,#00ff4e,#00ff4d,#00ff4c,#00ff4b,#00ff4a,#00ff49,#00ff47,#00ff46,#00ff45,#0f4,#00ff43,#00ff42,#00ff40,#00ff3f,#00ff3e,#00ff3d,#00ff3b,#00ff3a,#00ff39,#00ff37,#00ff36,#00ff34,#0f3,#00ff32,#00ff30,#00ff2f,#00ff2d,#00ff2c,#07ff2a,#0eff29,#15ff27,#1dff26,#24ff24,#2bff22,#33ff21,#3aff1f,#42ff1d,#4aff1b,#52ff1a,#5aff18,#63ff16,#6bff14,#74ff12,#7cff10,#85ff0e,#8eff0c,#97ff0a,#a1ff08,#aaff06,#b4ff04,#bdff02,#c7ff00,#d1ff00,#dcff00,#e6ff00,#f1ff00,#fcff00,#fff700,#ffed00,#ffe400,#ffdb00,#ffd200,#ffca00,#ffc300,#ffbc00,#ffb500,#ffae00,#ffa800)"></i><i style="margin-left:6px;width:373px;background:linear-gradient(90deg,#00ff67,#00ff67,#0f6,#00ff65,#00ff64,#00ff63,#00ff62,#00ff62,#00ff61,#00ff60,#00ff5f,#00ff5e,#00ff5d,#00ff5c,#00ff5b,#00ff5b,#00ff5a,#00ff59,#00ff58,#00ff57,#00ff56,#0f5,#00ff54,#00ff53,#00ff52,#00ff51,#00ff50,#00ff4f,#00ff4e,#00ff4d,#00ff4b,#00ff4a,#00ff49,#00ff48,#00ff47,#00ff46,#00ff45,#00ff43,#00ff42,#00ff41,#00ff40,#00ff3e,#00ff3d,#00ff3c,#00ff3a,#00ff39,#00ff38,#00ff36,#00ff35,#00ff34,#00ff32,#00ff31,#00ff2f,#01ff2e,#08ff2c,#0fff2b,#16ff29,#1eff28,#25ff26,#2dff24,#34ff23,#3cff21,#44ff1f,#4cff1d,#54ff1c,#5cff1a,#64ff18,#6dff16,#75ff14,#7eff12,#87ff10,#90ff0f,#99ff0d,#a2ff0a,#acff08,#b6ff06,#bfff04,#c9ff02,#d4ff00,#deff00,#e9ff00,#f3ff00,#feff00,#fff500,#ffeb00,#ffe200,#ffd900,#ffd000,#ffc800,#ffc100,#ffba00,#ffb300,#ffad00,#ffa700,#ffa100)"></i><i style="margin-left:6px;width:376px;background:linear-gradient(90deg,#00ff69,#00ff68,#00ff68,#00ff67,#0f6,#00ff65,#00ff64,#00ff63,#00ff63,#00ff62,#00ff61,#00ff60,#00ff5f,#00ff5e,#00ff5d,#00ff5c,#00ff5b,#00ff5a,#00ff59,#00ff58,#00ff57,#00ff57,#00ff56,#00ff54,#00ff53,#00ff52,#00ff51,#00ff50,#00ff4f,#00ff4e,#00ff4d,#00ff4c,#00ff4b,#00ff4a,#00ff48,#00ff47,#00ff46,#00ff45,#0f4,#00ff42,#00ff41,#00ff40,#00ff3f,#00ff3d,#00ff3c,#00ff3b,#00ff39,#00ff38,#00ff36,#00ff35,#00ff34,#00ff32,#00ff31,#06ff2f,#0dff2d,#14ff2c,#1bff2a,#23ff29,#2aff27,#32ff25,#3aff24,#42ff22,#4aff20,#52ff1f,#5aff1d,#62ff1b,#6bff19,#74ff17,#7dff15,#86ff13,#8fff11,#98ff0f,#a2ff0d,#abff0b,#b5ff09,#bfff07,#c9ff05,#d3ff02,#deff00,#e9ff00,#f4ff00,#ff0,#fff400,#ffea00,#ffe100,#ffd800,#ffcf00,#ffc700,#ffc000,#ffb900,#ffb200,#ffac00,#ffa600,#ffa000,#ff9a00)"></i><i style="margin-left:6px;width:378px;background:linear-gradient(90deg,#00ff6b,#00ff6a,#00ff69,#00ff69,#00ff68,#00ff67,#0f6,#00ff65,#00ff64,#00ff64,#00ff63,#00ff62,#00ff61,#00ff60,#00ff5f,#00ff5e,#00ff5d,#00ff5c,#00ff5b,#00ff5a,#00ff59,#00ff58,#00ff57,#00ff56,#0f5,#00ff54,#00ff53,#00ff52,#00ff51,#00ff50,#00ff4f,#00ff4e,#00ff4d,#00ff4c,#00ff4b,#00ff49,#00ff48,#00ff47,#00ff46,#00ff45,#00ff43,#00ff42,#00ff41,#00ff3f,#00ff3e,#00ff3d,#00ff3b,#00ff3a,#00ff39,#00ff37,#00ff36,#00ff34,#0f3,#05ff31,#0cff30,#13ff2e,#1bff2d,#22ff2b,#2aff2a,#31ff28,#39ff26,#41ff25,#49ff23,#51ff21,#59ff1f,#62ff1e,#6aff1c,#73ff1a,#7cff18,#85ff16,#8eff14,#98ff12,#a1ff10,#abff0e,#b4ff0c,#beff0a,#c9ff07,#d3ff05,#deff03,#e8ff01,#f3ff00,#feff00,#fff500,#ffea00,#ffe100,#ffd800,#ffcf00,#ffc800,#ffc000,#ffb900,#ffb200,#ffac00,#ffa600,#ffa000,#ff9a00,#ff9500)"></i><i style="margin-left:6px;width:381px;background:linear-gradient(90deg,#00ff6d,#00ff6c,#00ff6b,#00ff6a,#00ff6a,#00ff69,#00ff68,#00ff67,#0f6,#00ff65,#00ff65,#00ff64,#00ff63,#00ff62,#00ff61,#00ff60,#00ff5f,#00ff5e,#00ff5d,#00ff5c,#00ff5b,#00ff5a,#00ff59,#00ff58,#00ff57,#00ff56,#0f5,#00ff54,#00ff53,#00ff52,#00ff51,#00ff50,#00ff4f,#00ff4e,#00ff4d,#00ff4b,#00ff4a,#00ff49,#00ff48,#00ff47,#00ff45,#0f4,#00ff43,#00ff42,#00ff40,#00ff3f,#00ff3e,#00ff3c,#00ff3b,#00ff39,#00ff38,#00ff37,#00ff35,#05ff34,#0cff32,#14ff31,#1bff2f,#23ff2d,#2aff2c,#32ff2a,#3aff29,#42ff27,#4aff25,#52ff23,#5aff22,#63ff20,#6bff1e,#74ff1c,#7dff1a,#86ff18,#8fff16,#99ff14,#a2ff12,#acff10,#b6ff0e,#c0ff0c,#caff0a,#d5ff08,#dfff05,#eaff03,#f5ff01,#fffd00,#fff300,#ffe900,#ffdf00,#ffd600,#ffce00,#ffc600,#ffbe00,#ffb700,#ffb100,#fa0,#ffa400,#ff9f00,#f90,#ff9400,#ff8f00)"></i><i style="margin-left:7px;width:382px;background:linear-gradient(90deg,#00ff6e,#00ff6e,#00ff6d,#00ff6c,#00ff6b,#00ff6a,#00ff6a,#00ff69,#00ff68,#00ff67,#0f6,#00ff65,#00ff64,#00ff64,#00ff63,#00ff62,#00ff61,#00ff60,#00ff5f,#00ff5e,#00ff5d,#00ff5c,#00ff5b,#00ff5a,#00ff59,#00ff58,#00ff57,#00ff56,#0f5,#00ff54,#00ff53,#00ff52,#00ff51,#00ff4f,#00ff4e,#00ff4d,#00ff4c,#00ff4b,#00ff49,#00ff48,#00ff47,#00ff46,#0f4,#00ff43,#00ff42,#00ff41,#00ff3f,#00ff3e,#00ff3c,#00ff3b,#00ff3a,#00ff38,#02ff37,#09ff35,#11ff34,#18ff32,#20ff30,#27ff2f,#2fff2d,#37ff2c,#3fff2a,#47ff28,#4fff26,#58ff25,#60ff23,#69ff21,#72ff1f,#7bff1d,#84ff1b,#8dff1a,#97ff18,#a0ff16,#aaff13,#b4ff11,#beff0f,#c8ff0d,#d3ff0b,#deff09,#e9ff06,#f4ff04,#ffff02,#fff400,#ffea00,#ffe000,#ffd700,#ffce00,#ffc600,#ffbf00,#ffb800,#ffb100,#ffab00,#ffa400,#ff9f00,#f90,#ff9400,#ff8f00,#ff8a00)"></i><i style="margin-left:7px;width:385px;background:linear-gradient(90deg,#00ff70,#00ff6f,#00ff6f,#00ff6e,#00ff6d,#00ff6c,#00ff6b,#00ff6b,#00ff6a,#00ff69,#00ff68,#00ff67,#0f6,#00ff65,#00ff65,#00ff64,#00ff63,#00ff62,#00ff61,#00ff60,#00ff5f,#00ff5e,#00ff5d,#00ff5c,#00ff5b,#00ff5a,#00ff59,#00ff58,#00ff57,#00ff56,#0f5,#00ff54,#00ff53,#00ff51,#00ff50,#00ff4f,#00ff4e,#00ff4d,#00ff4c,#00ff4a,#00ff49,#00ff48,#00ff47,#00ff45,#0f4,#00ff43,#00ff41,#00ff40,#00ff3f,#00ff3d,#00ff3c,#00ff3a,#03ff39,#0aff37,#11ff36,#19ff34,#20ff33,#28ff31,#30ff30,#38ff2e,#40ff2c,#48ff2b,#50ff29,#59ff27,#61ff25,#6aff23,#73ff22,#7cff20,#85ff1e,#8eff1c,#98ff1a,#a2ff18,#abff16,#b6ff14,#c0ff12,#caff10,#d5ff0d,#e0ff0b,#ebff09,#f6ff07,#fffd04,#fff202,#ffe800,#ffde00,#ffd500,#ffcd00,#ffc500,#ffbd00,#ffb600,#ffaf00,#ffa900,#ffa300,#ff9d00,#ff9800,#ff9300,#ff8e00,#ff8900,#ff8400)"></i><i style="margin-left:7px;width:388px;background:linear-gradient(90deg,#00ff72,#00ff71,#00ff71,#00ff70,#00ff6f,#00ff6e,#00ff6d,#00ff6c,#00ff6c,#00ff6b,#00ff6a,#00ff69,#00ff68,#00ff67,#0f6,#0f6,#00ff65,#00ff64,#00ff63,#00ff62,#00ff61,#00ff60,#00ff5f,#00ff5e,#00ff5d,#00ff5c,#00ff5b,#00ff5a,#00ff59,#00ff58,#00ff57,#0f5,#00ff54,#00ff53,#00ff52,#00ff51,#00ff50,#00ff4f,#00ff4d,#00ff4c,#00ff4b,#00ff4a,#00ff48,#00ff47,#00ff46,#0f4,#00ff43,#00ff42,#00ff40,#00ff3f,#00ff3d,#00ff3c,#07ff3a,#0eff39,#16ff37,#1eff36,#25ff34,#2dff33,#35ff31,#3dff2f,#46ff2e,#4eff2c,#57ff2a,#5fff28,#68ff27,#71ff25,#7aff23,#83ff21,#8dff1f,#97ff1d,#a0ff1b,#aaff19,#b5ff17,#bfff15,#c9ff13,#d4ff10,#dfff0e,#eaff0c,#f6ff0a,#fffd07,#fff205,#ffe702,#ffde00,#ffd400,#fc0,#ffc400,#ffbc00,#ffb500,#ffae00,#ffa800,#ffa200,#ff9c00,#ff9700,#ff9100,#ff8c00,#f80,#ff8300,#ff7f00)"></i><i style="margin-left:7px;width:390px;background:linear-gradient(90deg,#00ff74,#00ff73,#00ff72,#00ff72,#00ff71,#00ff70,#00ff6f,#00ff6e,#00ff6e,#00ff6d,#00ff6c,#00ff6b,#00ff6a,#00ff69,#00ff69,#00ff68,#00ff67,#0f6,#00ff65,#00ff64,#00ff63,#00ff62,#00ff61,#00ff60,#00ff5f,#00ff5e,#00ff5d,#00ff5c,#00ff5b,#00ff5a,#00ff59,#00ff58,#00ff57,#00ff56,#00ff54,#00ff53,#00ff52,#00ff51,#00ff50,#00ff4e,#00ff4d,#00ff4c,#00ff4b,#00ff49,#00ff48,#00ff47,#00ff45,#0f4,#00ff43,#00ff41,#00ff40,#00ff3e,#06ff3d,#0eff3b,#15ff3a,#1dff38,#25ff37,#2dff35,#35ff34,#3dff32,#45ff30,#4eff2f,#56ff2d,#5fff2b,#68ff29,#71ff27,#7aff26,#83ff24,#8dff22,#96ff20,#a0ff1e,#aaff1c,#b4ff1a,#bfff18,#c9ff16,#d4ff13,#dfff11,#eaff0f,#f6ff0d,#fffd0a,#fff207,#ffe705,#ffdd03,#ffd400,#fc0,#ffc400,#ffbc00,#ffb500,#ffae00,#ffa800,#ffa200,#ff9c00,#ff9600,#ff9100,#ff8c00,#ff8700,#ff8300,#ff7f00,#ff7a00)"></i><i style="margin-left:8px;width:392px;background:linear-gradient(90deg,#00ff76,#00ff75,#00ff74,#00ff73,#00ff73,#00ff72,#00ff71,#00ff70,#00ff6f,#00ff6f,#00ff6e,#00ff6d,#00ff6c,#00ff6b,#00ff6a,#00ff69,#00ff68,#00ff68,#00ff67,#0f6,#00ff65,#00ff64,#00ff63,#00ff62,#00ff61,#00ff60,#00ff5f,#00ff5e,#00ff5d,#00ff5c,#00ff5a,#00ff59,#00ff58,#00ff57,#00ff56,#0f5,#00ff54,#00ff52,#00ff51,#00ff50,#00ff4f,#00ff4e,#00ff4c,#00ff4b,#00ff4a,#00ff48,#00ff47,#00ff46,#0f4,#00ff43,#00ff41,#04ff40,#0cff3e,#13ff3d,#1bff3b,#23ff3a,#2bff38,#33ff37,#3bff35,#43ff33,#4cff32,#55ff30,#5dff2e,#66ff2c,#6fff2a,#79ff29,#82ff27,#8cff25,#96ff23,#9fff21,#aaff1f,#b4ff1d,#beff1b,#c9ff19,#d4ff16,#dfff14,#ebff12,#f6ff10,#fffc0d,#fff10a,#ffe608,#ffdd05,#ffd303,#ffcb01,#ffc300,#fb0,#ffb400,#ffad00,#ffa700,#ffa100,#ff9b00,#ff9500,#ff9000,#ff8b00,#ff8600,#ff8200,#ff7d00,#ff7900,#ff7500)"></i><i style="margin-left:8px;width:394px;background:linear-gradient(90deg,#00ff78,#0f7,#00ff76,#00ff75,#00ff75,#00ff74,#00ff73,#00ff72,#00ff71,#00ff71,#00ff70,#00ff6f,#00ff6e,#00ff6d,#00ff6c,#00ff6b,#00ff6b,#00ff6a,#00ff69,#00ff68,#00ff67,#0f6,#00ff65,#00ff64,#00ff63,#00ff62,#00ff61,#00ff60,#00ff5f,#00ff5e,#00ff5d,#00ff5c,#00ff5b,#00ff59,#00ff58,#00ff57,#00ff56,#0f5,#00ff54,#00ff52,#00ff51,#00ff50,#00ff4f,#00ff4d,#00ff4c,#00ff4b,#00ff49,#00ff48,#00ff47,#00ff45,#0f4,#04ff42,#0bff41,#13ff3f,#1aff3e,#22ff3c,#2aff3b,#32ff39,#3bff38,#43ff36,#4cff34,#54ff33,#5dff31,#66ff2f,#6fff2d,#78ff2c,#82ff2a,#8bff28,#95ff26,#9fff24,#a9ff22,#b4ff20,#beff1e,#c9ff1c,#d4ff1a,#dfff17,#eaff15,#f6ff13,#fffc10,#fff10d,#ffe60b,#ffdd08,#ffd306,#ffcb03,#ffc301,#fb0,#ffb400,#ffad00,#ffa700,#ffa000,#ff9b00,#ff9500,#ff9000,#ff8b00,#ff8600,#ff8100,#ff7d00,#ff7900,#ff7500,#ff7100)"></i><i style="margin-left:8px;width:397px;background:linear-gradient(90deg,#00ff7a,#00ff79,#00ff78,#0f7,#0f7,#00ff76,#00ff75,#00ff74,#00ff73,#00ff73,#00ff72,#00ff71,#00ff70,#00ff6f,#00ff6e,#00ff6e,#00ff6d,#00ff6c,#00ff6b,#00ff6a,#00ff69,#00ff68,#00ff67,#0f6,#00ff65,#00ff64,#00ff63,#00ff62,#00ff61,#00ff60,#00ff5f,#00ff5e,#00ff5d,#00ff5c,#00ff5b,#00ff5a,#00ff58,#00ff57,#00ff56,#0f5,#00ff54,#00ff52,#00ff51,#00ff50,#00ff4f,#00ff4d,#00ff4c,#00ff4b,#00ff49,#00ff48,#00ff46,#04ff45,#0cff43,#13ff42,#1bff40,#23ff3f,#2bff3d,#33ff3c,#3bff3a,#44ff39,#4cff37,#55ff35,#5eff33,#67ff32,#70ff30,#7aff2e,#83ff2c,#8dff2a,#97ff28,#a1ff27,#abff25,#b6ff23,#c0ff20,#cbff1e,#d6ff1c,#e1ff1a,#edff18,#f8ff16,#fffa13,#ffef10,#ffe40d,#ffda0a,#ffd108,#ffc905,#ffc103,#ffb901,#ffb200,#ffab00,#ffa500,#ff9f00,#f90,#ff9400,#ff8e00,#ff8900,#ff8500,#ff8000,#ff7c00,#ff7800,#ff7400,#ff7000,#ff6c00)"></i><i style="margin-left:9px;width:399px;background:linear-gradient(90deg,#00ff7b,#00ff7b,#00ff7a,#00ff79,#00ff78,#00ff78,#0f7,#00ff76,#00ff75,#00ff74,#00ff74,#00ff73,#00ff72,#00ff71,#00ff70,#00ff6f,#00ff6e,#00ff6e,#00ff6d,#00ff6c,#00ff6b,#00ff6a,#00ff69,#00ff68,#00ff67,#0f6,#00ff65,#00ff64,#00ff63,#00ff62,#00ff61,#00ff60,#00ff5f,#00ff5e,#00ff5c,#00ff5b,#00ff5a,#00ff59,#00ff58,#00ff57,#0f5,#00ff54,#00ff53,#00ff52,#00ff50,#00ff4f,#00ff4e,#00ff4c,#00ff4b,#00ff49,#02ff48,#09ff47,#11ff45,#19ff44,#21ff42,#29ff40,#31ff3f,#3aff3d,#42ff3c,#4bff3a,#54ff38,#5dff37,#66ff35,#6fff33,#78ff31,#82ff2f,#8cff2e,#96ff2c,#a0ff2a,#aaff28,#b5ff26,#c0ff24,#cbff22,#d6ff1f,#e1ff1d,#edff1b,#f9ff19,#fff916,#ffee13,#ffe310,#ffda0d,#ffd10a,#ffc808,#ffc006,#ffb803,#ffb101,#fa0,#ffa400,#ff9e00,#ff9800,#ff9200,#ff8d00,#f80,#ff8400,#ff7f00,#ff7b00,#f70,#ff7300,#ff6f00,#ff6b00,#ff6800)"></i><i style="margin-left:9px;width:401px;background:linear-gradient(90deg,#00ff7d,#00ff7d,#00ff7c,#00ff7b,#00ff7b,#00ff7a,#00ff79,#00ff78,#0f7,#0f7,#00ff76,#00ff75,#00ff74,#00ff73,#00ff72,#00ff72,#00ff71,#00ff70,#00ff6f,#00ff6e,#00ff6d,#00ff6c,#00ff6b,#00ff6a,#00ff69,#00ff68,#00ff67,#0f6,#00ff65,#00ff64,#00ff63,#00ff62,#00ff61,#00ff60,#00ff5f,#00ff5e,#00ff5d,#00ff5b,#00ff5a,#00ff59,#00ff58,#00ff57,#0f5,#00ff54,#00ff53,#00ff52,#00ff50,#00ff4f,#00ff4d,#00ff4c,#01ff4b,#09ff49,#11ff48,#19ff46,#20ff45,#29ff43,#31ff42,#39ff40,#42ff3f,#4aff3d,#53ff3b,#5cff3a,#65ff38,#6fff36,#78ff34,#82ff32,#8cff31,#96ff2f,#a0ff2d,#aaff2b,#b5ff29,#c0ff27,#cbff25,#d6ff23,#e1ff20,#edff1e,#f9ff1c,#fff919,#ffee16,#ffe313,#ffd910,#ffd00d,#ffc80b,#ffc008,#ffb806,#ffb104,#ffaa02,#ffa300,#ff9d00,#ff9800,#ff9200,#ff8d00,#f80,#ff8300,#ff7f00,#ff7a00,#ff7600,#ff7200,#ff6e00,#ff6b00,#ff6700,#ff6400)"></i><i style="margin-left:9px;width:404px;background:linear-gradient(90deg,#00ff80,#00ff7f,#00ff7e,#00ff7d,#00ff7d,#00ff7c,#00ff7b,#00ff7a,#00ff79,#00ff79,#00ff78,#0f7,#00ff76,#00ff75,#00ff74,#00ff74,#00ff73,#00ff72,#00ff71,#00ff70,#00ff6f,#00ff6e,#00ff6d,#00ff6c,#00ff6b,#00ff6a,#00ff69,#00ff68,#00ff67,#0f6,#00ff65,#00ff64,#00ff63,#00ff62,#00ff61,#00ff60,#00ff5f,#00ff5d,#00ff5c,#00ff5b,#00ff5a,#00ff59,#00ff57,#00ff56,#0f5,#00ff53,#00ff52,#00ff51,#00ff4f,#00ff4e,#06ff4d,#0dff4b,#15ff4a,#1dff48,#26ff47,#2eff45,#36ff43,#3fff42,#48ff40,#51ff3f,#5aff3d,#63ff3b,#6cff39,#76ff38,#80ff36,#8aff34,#94ff32,#9eff30,#a9ff2e,#b3ff2c,#beff2a,#caff28,#d5ff26,#e1ff24,#ecff22,#f8ff1f,#fff91d,#ffee19,#ffe316,#ffd913,#ffd010,#ffc70d,#ffbf0b,#ffb708,#ffb006,#ffa904,#ffa302,#ff9d00,#ff9700,#ff9100,#ff8c00,#ff8700,#ff8200,#ff7e00,#ff7900,#ff7500,#ff7100,#ff6d00,#ff6a00,#f60,#ff6300,#ff6000)"></i><i style="margin-left:10px;width:406px;background:linear-gradient(90deg,#00ff81,#00ff81,#00ff80,#00ff7f,#00ff7f,#00ff7e,#00ff7d,#00ff7c,#00ff7b,#00ff7b,#00ff7a,#00ff79,#00ff78,#0f7,#0f7,#00ff76,#00ff75,#00ff74,#00ff73,#00ff72,#00ff71,#00ff70,#00ff6f,#00ff6e,#00ff6d,#00ff6d,#00ff6c,#00ff6b,#00ff6a,#00ff68,#00ff67,#0f6,#00ff65,#00ff64,#00ff63,#00ff62,#00ff61,#00ff60,#00ff5f,#00ff5d,#00ff5c,#00ff5b,#00ff5a,#00ff58,#00ff57,#00ff56,#00ff54,#00ff53,#00ff52,#00ff50,#07ff4f,#0fff4e,#17ff4c,#1fff4b,#27ff49,#30ff48,#38ff46,#41ff44,#4aff43,#53ff41,#5cff3f,#65ff3e,#6fff3c,#78ff3a,#82ff38,#8cff37,#96ff35,#a1ff33,#abff31,#b6ff2f,#c1ff2d,#cdff2b,#d8ff29,#e4ff27,#f0ff25,#fcff22,#fff61f,#ffeb1b,#ffe018,#ffd715,#ffcd12,#ffc50f,#ffbd0d,#ffb50a,#ffae08,#ffa706,#ffa104,#ff9b02,#ff9500,#ff9000,#ff8a00,#ff8500,#ff8100,#ff7c00,#ff7800,#ff7400,#ff7000,#ff6c00,#ff6800,#ff6500,#ff6200,#ff5e00,#ff5b00)"></i><i style="margin-left:10px;width:408px;background:linear-gradient(90deg,#00ff84,#00ff83,#00ff82,#00ff81,#00ff81,#00ff80,#00ff7f,#00ff7e,#00ff7e,#00ff7d,#00ff7c,#00ff7b,#00ff7a,#00ff7a,#00ff79,#00ff78,#0f7,#00ff76,#00ff75,#00ff74,#00ff73,#00ff73,#00ff72,#00ff71,#00ff70,#00ff6f,#00ff6e,#00ff6d,#00ff6c,#00ff6b,#00ff6a,#00ff69,#00ff68,#0f6,#00ff65,#00ff64,#00ff63,#00ff62,#00ff61,#00ff60,#00ff5e,#00ff5d,#00ff5c,#00ff5b,#00ff59,#00ff58,#00ff57,#0f5,#00ff54,#03ff53,#0bff51,#13ff50,#1bff4e,#23ff4d,#2bff4b,#34ff4a,#3dff48,#46ff47,#4fff45,#58ff43,#61ff42,#6bff40,#74ff3e,#7eff3c,#88ff3b,#93ff39,#9dff37,#a8ff35,#b3ff33,#beff31,#c9ff2f,#d5ff2d,#e0ff2b,#edff29,#f9ff26,#fff923,#ffed1f,#ffe21c,#ffd819,#ffcf16,#ffc613,#ffbe10,#ffb60d,#ffaf0b,#ffa809,#ffa107,#ff9b05,#ff9503,#ff9001,#ff8b00,#ff8600,#ff8100,#ff7c00,#ff7800,#ff7400,#ff7000,#ff6c00,#ff6800,#ff6500,#ff6100,#ff5e00,#ff5b00,#ff5800)"></i><i style="margin-left:10px;width:411px;background:linear-gradient(90deg,#00ff86,#00ff85,#00ff84,#00ff84,#00ff83,#00ff82,#00ff81,#00ff81,#00ff80,#00ff7f,#00ff7e,#00ff7d,#00ff7d,#00ff7c,#00ff7b,#00ff7a,#00ff79,#00ff78,#00ff78,#0f7,#00ff76,#00ff75,#00ff74,#00ff73,#00ff72,#00ff71,#00ff70,#00ff6f,#00ff6e,#00ff6d,#00ff6c,#00ff6b,#00ff6a,#00ff69,#00ff68,#00ff67,#0f6,#00ff64,#00ff63,#00ff62,#00ff61,#00ff60,#00ff5e,#00ff5d,#00ff5c,#00ff5b,#00ff59,#00ff58,#00ff57,#03ff55,#0bff54,#13ff52,#1bff51,#24ff50,#2cff4e,#35ff4c,#3eff4b,#47ff49,#50ff48,#59ff46,#62ff44,#6cff43,#76ff41,#80ff3f,#8aff3d,#94ff3c,#9fff3a,#aaff38,#b5ff36,#c0ff34,#cbff32,#d7ff30,#e3ff2e,#efff2c,#fbff29,#fff626,#ffeb22,#ffe01e,#ffd61b,#ffcd18,#ffc415,#ffbc12,#ffb410,#ffad0d,#ffa60b,#ffa009,#ff9a07,#ff9405,#ff8e03,#ff8901,#ff8400,#ff7f00,#ff7b00,#ff7600,#ff7200,#ff6e00,#ff6b00,#ff6700,#ff6300,#ff6000,#ff5d00,#ff5a00,#ff5700,#ff5400)"></i><i style="margin-left:11px;width:412px;background:linear-gradient(90deg,#0f8,#00ff87,#00ff86,#00ff86,#00ff85,#00ff84,#00ff83,#00ff83,#00ff82,#00ff81,#00ff80,#00ff80,#00ff7f,#00ff7e,#00ff7d,#00ff7c,#00ff7b,#00ff7b,#00ff7a,#00ff79,#00ff78,#0f7,#00ff76,#00ff75,#00ff74,#00ff73,#00ff72,#00ff71,#00ff70,#00ff6f,#00ff6e,#00ff6d,#00ff6c,#00ff6b,#00ff6a,#00ff69,#00ff68,#00ff67,#00ff65,#00ff64,#00ff63,#00ff62,#00ff61,#00ff5f,#00ff5e,#00ff5d,#00ff5b,#00ff5a,#00ff59,#08ff57,#10ff56,#18ff55,#20ff53,#29ff52,#31ff50,#3aff4f,#43ff4d,#4cff4b,#56ff4a,#5fff48,#69ff46,#73ff45,#7dff43,#87ff41,#91ff3f,#9cff3e,#a7ff3c,#b2ff3a,#bdff38,#c9ff36,#d4ff34,#e0ff32,#edff30,#f9ff2d,#fff82a,#ffec26,#ffe222,#ffd71f,#ffce1b,#ffc518,#ffbd15,#ffb513,#ffad10,#ffa70e,#ffa00b,#ff9a09,#ff9407,#ff8e05,#ff8903,#ff8402,#ff7f00,#ff7b00,#ff7600,#ff7200,#ff6e00,#ff6a00,#ff6700,#ff6300,#ff6000,#ff5d00,#ff5a00,#ff5700,#ff5400,#ff5100)"></i><i style="margin-left:11px;width:415px;background:linear-gradient(90deg,#00ff8a,#00ff89,#00ff89,#0f8,#00ff87,#00ff86,#00ff86,#00ff85,#00ff84,#00ff83,#00ff83,#00ff82,#00ff81,#00ff80,#00ff7f,#00ff7f,#00ff7e,#00ff7d,#00ff7c,#00ff7b,#00ff7a,#00ff79,#00ff79,#00ff78,#0f7,#00ff76,#00ff75,#00ff74,#00ff73,#00ff72,#00ff71,#00ff70,#00ff6f,#00ff6e,#00ff6d,#00ff6b,#00ff6a,#00ff69,#00ff68,#00ff67,#0f6,#00ff65,#00ff63,#00ff62,#00ff61,#00ff60,#00ff5e,#00ff5d,#00ff5c,#08ff5a,#10ff59,#19ff57,#21ff56,#2aff54,#32ff53,#3bff51,#44ff50,#4eff4e,#57ff4d,#61ff4b,#6aff49,#74ff48,#7eff46,#89ff44,#93ff42,#9eff41,#a9ff3f,#b4ff3d,#bfff3b,#cbff39,#d7ff37,#e3ff35,#efff33,#fcff31,#fff62d,#ffea28,#ffdf25,#ffd521,#ffcc1e,#ffc31a,#ffbb17,#ffb315,#ffac12,#ffa510,#ff9e0d,#ff980b,#ff9209,#ff8d07,#ff8805,#ff8303,#ff7e02,#ff7900,#ff7500,#ff7100,#ff6d00,#ff6900,#ff6500,#ff6200,#ff5f00,#ff5b00,#ff5800,#f50,#ff5300,#ff5000,#ff4d00)"></i><i style="margin-left:11px;width:418px;background:linear-gradient(90deg,#00ff8c,#00ff8c,#00ff8b,#00ff8a,#00ff89,#00ff89,#0f8,#00ff87,#00ff86,#00ff86,#00ff85,#00ff84,#00ff83,#00ff83,#00ff82,#00ff81,#00ff80,#00ff7f,#00ff7f,#00ff7e,#00ff7d,#00ff7c,#00ff7b,#00ff7a,#00ff79,#00ff78,#0f7,#00ff76,#00ff75,#00ff74,#00ff73,#00ff72,#00ff71,#00ff70,#00ff6f,#00ff6e,#00ff6d,#00ff6c,#00ff6b,#00ff6a,#00ff68,#00ff67,#0f6,#00ff65,#00ff64,#00ff62,#00ff61,#00ff60,#01ff5e,#09ff5d,#11ff5c,#19ff5a,#22ff59,#2aff57,#33ff56,#3cff54,#45ff53,#4fff51,#58ff50,#62ff4e,#6cff4c,#76ff4b,#80ff49,#8aff47,#95ff46,#a0ff44,#abff42,#b6ff40,#c2ff3e,#cdff3c,#d9ff3a,#e6ff38,#f2ff36,#ffff34,#fff32f,#ffe72b,#ffdd27,#ffd323,#ffc920,#ffc11d,#ffb81a,#ffb117,#ffaa14,#ffa312,#ff9c0f,#ff960d,#ff910b,#ff8b09,#ff8607,#ff8105,#ff7c03,#ff7802,#ff7400,#ff6f00,#ff6c00,#ff6800,#ff6400,#ff6100,#ff5d00,#ff5a00,#ff5700,#ff5400,#ff5100,#ff4f00,#ff4c00,#ff4a00)"></i><i style="margin-left:12px;width:419px;background:linear-gradient(90deg,#00ff8e,#00ff8e,#00ff8d,#00ff8c,#00ff8c,#00ff8b,#00ff8a,#00ff89,#00ff89,#0f8,#00ff87,#00ff86,#00ff86,#00ff85,#00ff84,#00ff83,#00ff82,#00ff82,#00ff81,#00ff80,#00ff7f,#00ff7e,#00ff7d,#00ff7c,#00ff7b,#00ff7a,#00ff7a,#00ff79,#00ff78,#0f7,#00ff76,#00ff75,#00ff74,#00ff73,#00ff71,#00ff70,#00ff6f,#00ff6e,#00ff6d,#00ff6c,#00ff6b,#00ff6a,#00ff68,#00ff67,#0f6,#00ff65,#00ff63,#00ff62,#05ff61,#0dff5f,#16ff5e,#1eff5d,#27ff5b,#30ff5a,#39ff58,#42ff57,#4bff55,#55ff54,#5fff52,#68ff50,#73ff4f,#7dff4d,#87ff4b,#92ff49,#9dff48,#a8ff46,#b3ff44,#bfff42,#cbff40,#d7ff3e,#e3ff3c,#f0ff3a,#fcff38,#fff534,#ffe92f,#ffde2b,#ffd427,#ffca23,#ffc220,#ffb91d,#ffb21a,#ffaa17,#ffa314,#ff9d12,#ff9710,#ff910d,#ff8b0b,#ff8609,#ff8107,#ff7c06,#ff7804,#ff7302,#ff6f01,#ff6b00,#ff6800,#ff6400,#ff6000,#ff5d00,#ff5a00,#ff5700,#ff5400,#ff5100,#ff4e00,#ff4c00,#ff4900,#ff4700)"></i><i style="margin-left:12px;width:422px;background:linear-gradient(90deg,#00ff91,#00ff90,#00ff8f,#00ff8f,#00ff8e,#00ff8d,#00ff8c,#00ff8c,#00ff8b,#00ff8a,#00ff8a,#00ff89,#0f8,#00ff87,#00ff86,#00ff86,#00ff85,#00ff84,#00ff83,#00ff82,#00ff82,#00ff81,#00ff80,#00ff7f,#00ff7e,#00ff7d,#00ff7c,#00ff7b,#00ff7a,#00ff79,#00ff78,#0f7,#00ff76,#00ff75,#00ff74,#00ff73,#00ff72,#00ff71,#00ff70,#00ff6f,#00ff6e,#00ff6c,#00ff6b,#00ff6a,#00ff69,#00ff67,#0f6,#00ff65,#06ff64,#0eff62,#17ff61,#1fff60,#28ff5e,#31ff5d,#3aff5b,#43ff5a,#4dff58,#56ff57,#60ff55,#6aff53,#74ff52,#7eff50,#89ff4e,#94ff4d,#9fff4b,#aaff49,#b5ff47,#c1ff45,#cdff43,#d9ff42,#e6ff40,#f2ff3d,#ffff3b,#fff236,#ffe632,#ffdc2d,#ffd129,#ffc826,#ffbf22,#ffb71f,#ffaf1c,#ffa819,#ffa117,#ff9b14,#ff9512,#ff8f0f,#ff8a0d,#ff840b,#ff7f09,#ff7b07,#ff7605,#ff7204,#ff6e02,#ff6a01,#f60,#ff6300,#ff5f00,#ff5c00,#ff5900,#ff5600,#ff5300,#ff5000,#ff4d00,#ff4b00,#ff4800,#ff4600,#ff4300)"></i><i style="margin-left:12px;width:425px;background:linear-gradient(90deg,#00ff93,#00ff92,#00ff92,#00ff91,#00ff90,#00ff90,#00ff8f,#00ff8e,#00ff8d,#00ff8d,#00ff8c,#00ff8b,#00ff8b,#00ff8a,#00ff89,#0f8,#00ff87,#00ff87,#00ff86,#00ff85,#00ff84,#00ff83,#00ff82,#00ff82,#00ff81,#00ff80,#00ff7f,#00ff7e,#00ff7d,#00ff7c,#00ff7b,#00ff7a,#00ff79,#00ff78,#0f7,#00ff76,#00ff75,#00ff74,#00ff73,#00ff72,#00ff70,#00ff6f,#00ff6e,#00ff6d,#00ff6c,#00ff6a,#00ff69,#00ff68,#06ff67,#0fff65,#17ff64,#20ff63,#29ff61,#32ff60,#3bff5e,#44ff5d,#4eff5b,#57ff5a,#61ff58,#6bff57,#76ff55,#80ff53,#8bff52,#96ff50,#a1ff4e,#acff4c,#b8ff4b,#c4ff49,#d0ff47,#dcff45,#e8ff43,#f5ff41,#fffc3e,#ffef39,#ffe434,#ffd930,#ffcf2c,#ffc628,#ffbd25,#ffb521,#ffad1e,#ffa61b,#ff9f19,#ff9916,#ff9313,#ff8d11,#ff880f,#ff830d,#ff7e0b,#ff7909,#ff7507,#ff7005,#ff6c04,#ff6902,#ff6501,#ff6100,#ff5e00,#ff5b00,#ff5700,#ff5400,#ff5200,#ff4f00,#ff4c00,#ff4900,#ff4700,#ff4500,#ff4200,#ff4000)"></i><i style="margin-left:13px;width:426px;background:linear-gradient(90deg,#00ff95,#00ff95,#00ff94,#00ff93,#00ff93,#00ff92,#00ff91,#00ff90,#00ff90,#00ff8f,#00ff8e,#00ff8e,#00ff8d,#00ff8c,#00ff8b,#00ff8b,#00ff8a,#00ff89,#0f8,#00ff87,#00ff86,#00ff86,#00ff85,#00ff84,#00ff83,#00ff82,#00ff81,#00ff80,#00ff7f,#00ff7e,#00ff7d,#00ff7c,#00ff7b,#00ff7a,#00ff79,#00ff78,#0f7,#00ff76,#00ff75,#00ff74,#00ff73,#00ff72,#00ff71,#00ff6f,#00ff6e,#00ff6d,#00ff6c,#03ff6a,#0bff69,#14ff68,#1cff66,#25ff65,#2eff64,#37ff62,#41ff61,#4aff5f,#54ff5e,#5eff5c,#68ff5b,#72ff59,#7dff57,#88ff56,#93ff54,#9eff52,#a9ff51,#b5ff4f,#c1ff4d,#cdff4b,#d9ff49,#e6ff47,#f3ff45,#fffe43,#fff13e,#ffe539,#ffda34,#ffd030,#ffc72c,#ffbe28,#ffb625,#ffae21,#ffa71e,#ffa01c,#ff9919,#ff9316,#ff8d14,#ff8812,#ff830f,#ff7e0d,#ff790b,#ff7509,#ff7008,#ff6c06,#ff6804,#ff6503,#ff6101,#ff5e00,#ff5a00,#ff5700,#ff5400,#ff5100,#ff4e00,#ff4c00,#ff4900,#ff4700,#f40,#ff4200,#ff3f00,#ff3d00)"></i><i style="margin-left:13px;width:429px;background:linear-gradient(90deg,#00ff98,#00ff97,#00ff96,#00ff96,#00ff95,#00ff94,#00ff94,#00ff93,#00ff92,#00ff92,#00ff91,#00ff90,#00ff8f,#00ff8f,#00ff8e,#00ff8d,#00ff8c,#00ff8c,#00ff8b,#00ff8a,#00ff89,#0f8,#00ff87,#00ff87,#00ff86,#00ff85,#00ff84,#00ff83,#00ff82,#00ff81,#00ff80,#00ff7f,#00ff7e,#00ff7d,#00ff7c,#00ff7b,#00ff7a,#00ff79,#00ff78,#0f7,#00ff76,#00ff75,#00ff74,#00ff72,#00ff71,#00ff70,#00ff6f,#03ff6d,#0cff6c,#14ff6b,#1dff6a,#26ff68,#2fff67,#39ff65,#42ff64,#4cff63,#55ff61,#5fff60,#6aff5e,#74ff5c,#7fff5b,#89ff59,#95ff58,#a0ff56,#abff54,#b7ff52,#c3ff50,#cfff4f,#dcff4d,#e9ff4b,#f6ff49,#fffb46,#ffee40,#ffe33b,#ffd837,#ffce32,#ffc42e,#ffbc2a,#ffb427,#ffac24,#ffa520,#ff9e1e,#ff971b,#ff9118,#ff8c16,#ff8613,#ff8111,#ff7c0f,#ff780d,#ff730b,#ff6f09,#ff6b08,#ff6706,#ff6304,#ff6003,#ff5c01,#ff5900,#ff5600,#ff5300,#ff5000,#ff4d00,#ff4a00,#ff4800,#ff4500,#ff4300,#ff4100,#ff3e00,#ff3c00,#ff3a00)"></i><i style="margin-left:14px;width:430px;background:linear-gradient(90deg,#00ff9a,#0f9,#0f9,#00ff98,#00ff97,#00ff97,#00ff96,#00ff95,#00ff95,#00ff94,#00ff93,#00ff93,#00ff92,#00ff91,#00ff90,#00ff90,#00ff8f,#00ff8e,#00ff8d,#00ff8c,#00ff8c,#00ff8b,#00ff8a,#00ff89,#0f8,#00ff87,#00ff86,#00ff86,#00ff85,#00ff84,#00ff83,#00ff82,#00ff81,#00ff80,#00ff7f,#00ff7e,#00ff7d,#00ff7c,#00ff7b,#00ff7a,#00ff78,#0f7,#00ff76,#00ff75,#00ff74,#00ff73,#00ff71,#08ff70,#11ff6f,#19ff6e,#22ff6c,#2cff6b,#35ff69,#3eff68,#48ff67,#52ff65,#5cff64,#66ff62,#71ff61,#7bff5f,#86ff5d,#91ff5c,#9dff5a,#a8ff58,#b4ff57,#c0ff55,#cdff53,#d9ff51,#e6ff4f,#f3ff4d,#fffd4b,#fff045,#ffe440,#ffd93b,#ffcf36,#ffc632,#ffbd2e,#ffb42a,#ffad27,#ffa524,#ff9e21,#ff981e,#ff921b,#ff8c18,#ff8616,#ff8114,#ff7c11,#ff770f,#ff730d,#ff6f0b,#ff6b0a,#ff6708,#ff6306,#ff5f05,#ff5c03,#ff5902,#ff5600,#ff5300,#ff5000,#ff4d00,#ff4a00,#ff4700,#ff4500,#ff4300,#ff4000,#ff3e00,#ff3c00,#ff3a00,#ff3800)"></i><i style="margin-left:14px;width:433px;background:linear-gradient(90deg,#00ff9c,#00ff9c,#00ff9b,#00ff9b,#00ff9a,#0f9,#0f9,#00ff98,#00ff97,#00ff97,#00ff96,#00ff95,#00ff94,#00ff94,#00ff93,#00ff92,#00ff92,#00ff91,#00ff90,#00ff8f,#00ff8e,#00ff8e,#00ff8d,#00ff8c,#00ff8b,#00ff8a,#00ff89,#0f8,#0f8,#00ff87,#00ff86,#00ff85,#00ff84,#00ff83,#00ff82,#00ff81,#00ff80,#00ff7f,#00ff7e,#00ff7d,#00ff7c,#00ff7a,#00ff79,#00ff78,#0f7,#00ff76,#00ff75,#09ff73,#11ff72,#1aff71,#23ff6f,#2dff6e,#36ff6d,#40ff6b,#49ff6a,#53ff69,#5dff67,#68ff66,#72ff64,#7dff63,#88ff61,#93ff5f,#9fff5e,#abff5c,#b7ff5a,#c3ff59,#cfff57,#dcff55,#e9ff53,#f6ff51,#fffa4e,#ffed48,#ffe242,#ffd73d,#ffcd39,#ffc334,#ffba30,#ffb22d,#ffaa29,#ffa326,#ff9c23,#ff9620,#ff901d,#ff8a1a,#ff8518,#ff7f15,#ff7b13,#ff7611,#ff710f,#ff6d0d,#ff690b,#ff650a,#ff6208,#ff5e06,#ff5b05,#ff5703,#ff5402,#ff5100,#ff4e00,#ff4c00,#ff4900,#ff4600,#f40,#ff4100,#ff3f00,#ff3d00,#ff3b00,#ff3900,#ff3700,#ff3500)"></i><i style="margin-left:14px;width:436px;background:linear-gradient(90deg,#00ff9f,#00ff9e,#00ff9e,#00ff9d,#00ff9c,#00ff9c,#00ff9b,#00ff9b,#00ff9a,#0f9,#00ff98,#00ff98,#00ff97,#00ff96,#00ff96,#00ff95,#00ff94,#00ff93,#00ff93,#00ff92,#00ff91,#00ff90,#00ff8f,#00ff8f,#00ff8e,#00ff8d,#00ff8c,#00ff8b,#00ff8a,#00ff89,#0f8,#00ff87,#00ff87,#00ff86,#00ff85,#00ff84,#00ff83,#00ff82,#00ff80,#00ff7f,#00ff7e,#00ff7d,#00ff7c,#00ff7b,#00ff7a,#00ff79,#04ff77,#0dff76,#16ff75,#1fff74,#29ff72,#32ff71,#3cff70,#46ff6e,#50ff6d,#5aff6b,#64ff6a,#6fff68,#7aff67,#85ff65,#90ff64,#9cff62,#a8ff60,#b4ff5f,#c0ff5d,#cdff5b,#daff59,#e7ff57,#f5ff56,#fffc53,#ffef4c,#ffe347,#ffd741,#ffcd3d,#ffc338,#ffbb34,#ffb230,#ffaa2c,#ffa329,#ff9c26,#ff9622,#ff8f20,#ff8a1d,#ff841a,#ff7f18,#ff7a15,#ff7513,#ff7111,#ff6c0f,#ff680d,#ff640b,#ff610a,#ff5d08,#ff5a06,#ff5605,#ff5303,#ff5002,#ff4d01,#ff4b00,#ff4800,#ff4500,#ff4300,#ff4000,#ff3e00,#ff3c00,#ff3a00,#ff3800,#ff3600,#ff3400,#ff3200)"></i><i style="margin-left:15px;width:437px;background:linear-gradient(90deg,#00ffa1,#00ffa1,#00ffa0,#00ffa0,#00ff9f,#00ff9e,#00ff9e,#00ff9d,#00ff9c,#00ff9c,#00ff9b,#00ff9a,#00ff9a,#0f9,#00ff98,#00ff98,#00ff97,#00ff96,#00ff95,#00ff95,#00ff94,#00ff93,#00ff92,#00ff91,#00ff91,#00ff90,#00ff8f,#00ff8e,#00ff8d,#00ff8c,#00ff8b,#00ff8a,#00ff8a,#00ff89,#0f8,#00ff87,#00ff86,#00ff85,#00ff84,#00ff83,#00ff81,#00ff80,#00ff7f,#00ff7e,#00ff7d,#00ff7c,#06ff7b,#0eff79,#17ff78,#21ff77,#2aff76,#33ff74,#3dff73,#47ff72,#51ff70,#5bff6f,#66ff6d,#71ff6c,#7cff6a,#87ff69,#92ff67,#9eff66,#aaff64,#b6ff63,#c2ff61,#cfff5f,#dcff5d,#e9ff5b,#f7ff5a,#fff956,#ffec4f,#ffe04a,#ffd544,#ffcb3f,#ffc23b,#ffb937,#ffb133,#ffa92f,#ffa22b,#ff9b28,#ff9425,#ff8e22,#ff881f,#ff831c,#ff7e1a,#ff7918,#ff7415,#ff7013,#ff6b11,#ff670f,#ff640d,#ff600b,#ff5c0a,#ff5908,#ff5607,#ff5305,#ff5004,#ff4d02,#ff4a01,#ff4700,#ff4500,#ff4200,#ff4000,#ff3e00,#ff3b00,#ff3900,#ff3700,#ff3500,#f30,#ff3100,#ff2f00)"></i><i style="margin-left:15px;width:440px;background:linear-gradient(90deg,#00ffa4,#00ffa3,#00ffa3,#00ffa2,#00ffa2,#00ffa1,#00ffa0,#00ffa0,#00ff9f,#00ff9e,#00ff9e,#00ff9d,#00ff9c,#00ff9c,#00ff9b,#00ff9a,#00ff9a,#0f9,#00ff98,#00ff97,#00ff97,#00ff96,#00ff95,#00ff94,#00ff93,#00ff93,#00ff92,#00ff91,#00ff90,#00ff8f,#00ff8e,#00ff8d,#00ff8c,#00ff8b,#00ff8b,#00ff8a,#00ff89,#0f8,#00ff87,#00ff85,#00ff84,#00ff83,#00ff82,#00ff81,#00ff80,#01ff7f,#0aff7e,#13ff7c,#1cff7b,#26ff7a,#2fff79,#39ff77,#43ff76,#4dff75,#58ff73,#62ff72,#6dff70,#78ff6f,#83ff6d,#8fff6c,#9bff6a,#a7ff69,#b3ff67,#c0ff65,#ccff64,#daff62,#e7ff60,#f5ff5e,#fffb5b,#ffee54,#ffe24e,#ffd649,#fc4,#ffc23f,#ffb93a,#ffb136,#ffa932,#ffa12e,#ff9a2b,#ff9428,#ff8e25,#f82,#ff821f,#ff7d1c,#ff781a,#ff7418,#ff6f15,#ff6b13,#ff6711,#ff630f,#ff5f0d,#ff5c0c,#ff580a,#ff5508,#ff5207,#ff4f05,#ff4c04,#ff4902,#ff4601,#f40,#ff4100,#ff3f00,#ff3d00,#ff3a00,#ff3800,#ff3600,#ff3400,#ff3200,#ff3000,#ff2e00,#ff2d00)"></i><i style="margin-left:15px;width:443px;background:linear-gradient(90deg,#00ffa7,#00ffa6,#00ffa6,#00ffa5,#00ffa4,#00ffa4,#00ffa3,#00ffa2,#00ffa2,#00ffa1,#00ffa1,#00ffa0,#00ff9f,#00ff9f,#00ff9e,#00ff9d,#00ff9c,#00ff9c,#00ff9b,#00ff9a,#00ff9a,#0f9,#00ff98,#00ff97,#00ff96,#00ff96,#00ff95,#00ff94,#00ff93,#00ff92,#00ff91,#00ff91,#00ff90,#00ff8f,#00ff8e,#00ff8d,#00ff8c,#00ff8b,#00ff8a,#00ff89,#0f8,#00ff87,#00ff86,#00ff85,#00ff83,#02ff82,#0bff81,#14ff80,#1dff7f,#27ff7e,#30ff7c,#3aff7b,#44ff7a,#4fff78,#59ff77,#64ff76,#6fff74,#7aff73,#85ff71,#91ff70,#9dff6e,#a9ff6d,#b6ff6b,#c2ff69,#cfff68,#df6,#eaff64,#f8ff62,#fff85e,#ffeb57,#ffdf51,#ffd34b,#ffc946,#ffc041,#ffb73c,#ffae38,#ffa734,#ff9f30,#ff982d,#ff922a,#ff8c27,#ff8624,#ff8121,#ff7b1e,#ff761c,#ff7219,#ff6d17,#ff6915,#ff6513,#ff6111,#ff5e0f,#ff5a0d,#ff570b,#ff540a,#ff5008,#ff4d07,#ff4b05,#ff4804,#ff4502,#ff4301,#ff4000,#ff3e00,#ff3c00,#ff3900,#ff3700,#ff3500,#f30,#ff3100,#ff2f00,#ff2e00,#ff2c00,#ff2a00)"></i><i style="margin-left:16px;width:444px;background:linear-gradient(90deg,#00ffa9,#00ffa9,#00ffa8,#00ffa8,#00ffa7,#00ffa6,#00ffa6,#00ffa5,#00ffa5,#00ffa4,#00ffa3,#00ffa3,#00ffa2,#00ffa1,#00ffa1,#00ffa0,#00ff9f,#00ff9f,#00ff9e,#00ff9d,#00ff9c,#00ff9c,#00ff9b,#00ff9a,#0f9,#00ff98,#00ff98,#00ff97,#00ff96,#00ff95,#00ff94,#00ff93,#00ff93,#00ff92,#00ff91,#00ff90,#00ff8f,#00ff8e,#00ff8d,#00ff8c,#00ff8b,#00ff8a,#00ff89,#0f8,#00ff86,#07ff85,#10ff84,#19ff83,#23ff82,#2cff81,#36ff7f,#40ff7e,#4bff7d,#55ff7b,#60ff7a,#6bff79,#76ff77,#82ff76,#8dff74,#99ff73,#a6ff71,#b2ff70,#bfff6e,#ccff6d,#d9ff6b,#e7ff69,#f5ff67,#fffa64,#ffed5d,#ffe156,#ffd550,#ffcb4b,#ffc145,#ffb841,#ffaf3c,#ffa738,#ffa034,#ff9930,#ff922d,#ff8c2a,#ff8627,#ff8124,#ff7c21,#ff771e,#ff721c,#ff6d1a,#ff6917,#ff6515,#ff6113,#ff5d11,#ff5a0f,#ff560d,#ff530c,#ff500a,#ff4d09,#ff4a07,#ff4706,#ff4504,#ff4203,#ff4002,#ff3d00,#ff3b00,#ff3900,#ff3700,#ff3500,#f30,#ff3100,#ff2f00,#ff2d00,#ff2b00,#ff2a00,#ff2800)"></i><i style="margin-left:16px;width:447px;background:linear-gradient(90deg,#00ffac,#00ffab,#00ffab,#0fa,#0fa,#00ffa9,#00ffa9,#00ffa8,#00ffa7,#00ffa7,#00ffa6,#00ffa6,#00ffa5,#00ffa4,#00ffa4,#00ffa3,#00ffa2,#00ffa2,#00ffa1,#00ffa0,#00ff9f,#00ff9f,#00ff9e,#00ff9d,#00ff9c,#00ff9c,#00ff9b,#00ff9a,#0f9,#00ff98,#00ff98,#00ff97,#00ff96,#00ff95,#00ff94,#00ff93,#00ff92,#00ff91,#00ff90,#00ff8f,#00ff8e,#00ff8d,#00ff8c,#00ff8b,#00ff8a,#07ff89,#1f8,#1aff87,#24ff86,#2eff84,#38ff83,#42ff82,#4cff81,#57ff7f,#62ff7e,#6dff7d,#78ff7b,#84ff7a,#90ff78,#9cff77,#a8ff75,#b5ff74,#c2ff72,#cfff71,#ddff6f,#eaff6d,#f9ff6c,#fff767,#ffea5f,#ffde59,#ffd253,#ffc84d,#ffbe48,#ffb543,#ffad3e,#ffa53a,#ff9e36,#ff9732,#ff902f,#ff8a2c,#ff8429,#ff7f26,#ff7a23,#ff7520,#ff701e,#ff6c1b,#ff6719,#ff6317,#ff6015,#ff5c13,#ff5811,#ff550f,#ff520d,#ff4f0c,#ff4c0a,#ff4908,#ff4607,#ff4406,#ff4104,#ff3f03,#ff3c02,#ff3a00,#ff3800,#ff3600,#ff3400,#ff3200,#ff3000,#ff2e00,#ff2c00,#ff2a00,#ff2900,#ff2700,#ff2500)"></i><i style="margin-left:17px;width:448px;background:linear-gradient(90deg,#00ffaf,#00ffae,#00ffae,#00ffad,#00ffac,#00ffac,#00ffab,#00ffab,#0fa,#0fa,#00ffa9,#00ffa8,#00ffa8,#00ffa7,#00ffa6,#00ffa6,#00ffa5,#00ffa4,#00ffa4,#00ffa3,#00ffa2,#00ffa2,#00ffa1,#00ffa0,#00ff9f,#00ff9f,#00ff9e,#00ff9d,#00ff9c,#00ff9b,#00ff9b,#00ff9a,#0f9,#00ff98,#00ff97,#00ff96,#00ff95,#00ff94,#00ff93,#00ff92,#00ff91,#00ff90,#00ff8f,#00ff8e,#03ff8d,#0cff8c,#16ff8b,#20ff8a,#29ff89,#34ff88,#3eff86,#48ff85,#53ff84,#5eff83,#69ff81,#74ff80,#80ff7f,#8cff7d,#98ff7c,#a5ff7a,#b1ff79,#beff77,#ccff76,#d9ff74,#e7ff72,#f6ff71,#fffa6d,#ffec65,#ffe05e,#ffd458,#ffc952,#ffc04c,#ffb647,#ffae43,#ffa63e,#ff9e3a,#ff9736,#ff9132,#ff8a2f,#ff852c,#ff7f29,#ff7a26,#ff7523,#ff7020,#ff6c1e,#ff671b,#ff6319,#ff5f17,#ff5c15,#ff5813,#f51,#ff520f,#ff4e0e,#ff4b0c,#ff490a,#ff4609,#ff4307,#ff4106,#ff3e05,#ff3c03,#ff3a02,#ff3701,#ff3500,#f30,#ff3100,#ff2f00,#ff2d00,#ff2c00,#ff2a00,#ff2800,#ff2600,#ff2500,#ff2300)"></i><i style="margin-left:17px;width:451px;background:linear-gradient(90deg,#00ffb1,#00ffb1,#00ffb0,#00ffb0,#00ffaf,#00ffaf,#00ffae,#00ffae,#00ffad,#00ffad,#00ffac,#00ffab,#00ffab,#0fa,#0fa,#00ffa9,#00ffa8,#00ffa8,#00ffa7,#00ffa6,#00ffa6,#00ffa5,#00ffa4,#00ffa3,#00ffa3,#00ffa2,#00ffa1,#00ffa0,#00ffa0,#00ff9f,#00ff9e,#00ff9d,#00ff9c,#00ff9c,#00ff9b,#00ff9a,#0f9,#00ff98,#00ff97,#00ff96,#00ff95,#00ff94,#00ff93,#00ff92,#04ff91,#0dff90,#17ff8f,#21ff8e,#2bff8d,#35ff8c,#3fff8a,#4aff89,#5f8,#60ff87,#6bff85,#76ff84,#82ff83,#8eff81,#9bff80,#a7ff7f,#b4ff7d,#c1ff7c,#cfff7a,#ddff78,#ebff77,#f9ff75,#fff670,#ffe968,#ffdc61,#ffd15a,#ffc754,#ffbd4f,#ffb44a,#ffab45,#ffa340,#ff9c3c,#ff9538,#ff8f34,#ff8831,#ff832e,#ff7d2a,#ff7828,#ff7325,#ff6e22,#ff6a20,#ff661d,#ff621b,#ff5e19,#ff5a17,#ff5715,#ff5313,#ff5011,#ff4d0f,#ff4a0d,#ff470c,#ff450a,#ff4209,#ff3f07,#ff3d06,#ff3b05,#ff3803,#ff3602,#ff3401,#ff3200,#ff3000,#ff2e00,#ff2c00,#ff2b00,#ff2900,#ff2700,#ff2600,#ff2400,#f20,#ff2100)"></i><i style="margin-left:18px;width:453px;background:linear-gradient(90deg,#00ffb4,#00ffb4,#00ffb3,#00ffb3,#00ffb2,#00ffb2,#00ffb1,#00ffb1,#00ffb0,#00ffaf,#00ffaf,#00ffae,#00ffae,#00ffad,#00ffad,#00ffac,#00ffab,#00ffab,#0fa,#00ffa9,#00ffa9,#00ffa8,#00ffa7,#00ffa7,#00ffa6,#00ffa5,#00ffa4,#00ffa4,#00ffa3,#00ffa2,#00ffa1,#00ffa1,#00ffa0,#00ff9f,#00ff9e,#00ff9d,#00ff9c,#00ff9c,#00ff9b,#00ff9a,#0f9,#00ff98,#00ff97,#00ff96,#06ff95,#10ff94,#19ff93,#23ff92,#2dff91,#38ff8f,#42ff8e,#4dff8d,#58ff8c,#63ff8b,#6eff89,#7aff88,#86ff87,#92ff86,#9fff84,#abff83,#b8ff81,#c6ff80,#d3ff7e,#e1ff7d,#f0ff7b,#ffff7a,#fff171,#ffe46a,#ffd863,#ffcd5c,#ffc356,#ffb951,#ffb04b,#ffa847,#ffa042,#ff993e,#ff923a,#ff8c36,#ff8633,#ff802f,#ff7b2c,#ff7629,#ff7126,#ff6c24,#ff6821,#ff641f,#ff601c,#ff5c1a,#ff5818,#ff5516,#ff5214,#ff4f12,#ff4c10,#ff490f,#ff460d,#ff430b,#ff410a,#ff3e09,#ff3c07,#ff3906,#ff3704,#ff3503,#ff3302,#ff3101,#ff2f00,#ff2d00,#ff2b00,#ff2a00,#ff2800,#ff2600,#ff2500,#ff2300,#ff2100,#ff2000,#ff1f00)"></i><i style="margin-left:18px;width:455px;background:linear-gradient(90deg,#00ffb7,#00ffb7,#00ffb6,#00ffb6,#00ffb5,#00ffb5,#00ffb4,#00ffb4,#00ffb3,#00ffb3,#00ffb2,#00ffb1,#00ffb1,#00ffb0,#00ffb0,#00ffaf,#00ffae,#00ffae,#00ffad,#00ffad,#00ffac,#00ffab,#00ffab,#0fa,#00ffa9,#00ffa9,#00ffa8,#00ffa7,#00ffa6,#00ffa6,#00ffa5,#00ffa4,#00ffa3,#00ffa2,#00ffa2,#00ffa1,#00ffa0,#00ff9f,#00ff9e,#00ff9d,#00ff9c,#00ff9b,#00ff9a,#0f9,#0aff98,#14ff97,#1eff96,#28ff95,#32ff94,#3cff93,#47ff92,#52ff91,#5dff90,#69ff8e,#74ff8d,#80ff8c,#8dff8b,#99ff89,#a6ff88,#b3ff87,#c1ff85,#ceff84,#dcff82,#ebff81,#faff7f,#fff579,#ffe871,#ffdb69,#ffd062,#ffc55c,#ffbb56,#ffb250,#ffaa4b,#ffa247,#ff9a42,#ff933e,#ff8d3a,#ff8736,#ff8133,#ff7b2f,#ff762c,#ff7129,#ff6d27,#ff6824,#ff6421,#ff601f,#ff5c1d,#ff581a,#ff5518,#ff5216,#ff4e14,#ff4b13,#ff4811,#ff460f,#ff430d,#ff400c,#ff3e0a,#ff3b09,#ff3908,#ff3706,#ff3505,#ff3204,#ff3002,#ff2f01,#ff2d00,#ff2b00,#ff2900,#ff2700,#ff2600,#ff2400,#f20,#ff2100,#ff1f00,#ff1e00,#ff1d00)"></i><i style="margin-left:18px;width:458px;background:linear-gradient(90deg,#00ffba,#00ffba,#00ffb9,#00ffb9,#00ffb8,#00ffb8,#00ffb7,#00ffb7,#00ffb6,#00ffb6,#00ffb5,#00ffb5,#00ffb4,#00ffb4,#00ffb3,#00ffb2,#00ffb2,#00ffb1,#00ffb1,#00ffb0,#00ffaf,#00ffaf,#00ffae,#00ffad,#00ffad,#00ffac,#00ffab,#00ffab,#0fa,#00ffa9,#00ffa8,#00ffa8,#00ffa7,#00ffa6,#00ffa5,#00ffa5,#00ffa4,#00ffa3,#00ffa2,#00ffa1,#00ffa0,#00ff9f,#00ff9e,#01ff9d,#0bff9d,#15ff9c,#1fff9b,#29ff99,#33ff98,#3eff97,#49ff96,#54ff95,#5fff94,#6bff93,#77ff92,#83ff90,#8fff8f,#9cff8e,#a9ff8d,#b6ff8b,#c4ff8a,#d2ff88,#e0ff87,#efff86,#feff84,#fff27c,#ffe473,#ffd86c,#ffcd65,#ffc25e,#ffb858,#ffaf53,#ffa74e,#ff9f49,#ff9844,#ff9140,#ff8b3c,#ff8538,#ff7f35,#ff7931,#ff742e,#ff6f2b,#ff6b28,#ff6626,#ff6223,#ff5e21,#ff5b1e,#ff571c,#ff531a,#ff5018,#ff4d16,#ff4a14,#ff4712,#ff4410,#ff420f,#ff3f0d,#ff3d0c,#ff3a0a,#ff3809,#ff3607,#ff3306,#ff3105,#ff2f04,#ff2d02,#ff2c01,#ff2a00,#ff2800,#ff2600,#ff2500,#ff2300,#f20,#ff2000,#ff1f00,#ff1d00,#ff1c00,#ff1a00)"></i><i style="margin-left:19px;width:459px;background:linear-gradient(90deg,#00ffbd,#00ffbd,#00ffbc,#00ffbc,#0fb,#0fb,#00ffba,#00ffba,#00ffb9,#00ffb9,#00ffb8,#00ffb8,#00ffb7,#00ffb7,#00ffb6,#00ffb6,#00ffb5,#00ffb4,#00ffb4,#00ffb3,#00ffb3,#00ffb2,#00ffb1,#00ffb1,#00ffb0,#00ffaf,#00ffaf,#00ffae,#00ffad,#00ffad,#00ffac,#00ffab,#0fa,#0fa,#00ffa9,#00ffa8,#00ffa7,#00ffa6,#00ffa6,#00ffa5,#00ffa4,#00ffa3,#00ffa2,#06ffa1,#10ffa0,#1aff9f,#24ff9e,#2fff9d,#3aff9c,#44ff9b,#50ff9a,#5bff99,#67ff98,#72ff97,#7fff96,#8bff94,#98ff93,#a5ff92,#b2ff91,#c0ff8f,#ceff8e,#dcff8d,#ebff8b,#faff8a,#fff583,#ffe77a,#ffda72,#ffce6a,#ffc464,#ffba5d,#ffb157,#ffa852,#ffa04d,#ff9948,#ff9244,#ff8b40,#ff853c,#ff7f38,#ff7a35,#ff7431,#ff6f2e,#ff6b2b,#ff6628,#ff6226,#ff5e23,#ff5a21,#ff571e,#ff531c,#ff501a,#ff4d18,#ff4a16,#ff4714,#ff4412,#ff4111,#ff3f0f,#ff3c0e,#ff3a0c,#ff370b,#ff3509,#ff3308,#ff3106,#ff2f05,#ff2d04,#ff2b03,#ff2902,#ff2700,#ff2600,#ff2400,#ff2300,#ff2100,#ff1f00,#ff1e00,#ff1d00,#ff1b00,#ff1a00,#ff1900)"></i><i style="margin-left:19px;width:462px;background:linear-gradient(90deg,#00ffc0,#00ffc0,#00ffbf,#00ffbf,#00ffbe,#00ffbe,#00ffbd,#00ffbd,#00ffbd,#00ffbc,#00ffbc,#0fb,#0fb,#00ffba,#00ffb9,#00ffb9,#00ffb8,#00ffb8,#00ffb7,#00ffb7,#00ffb6,#00ffb6,#00ffb5,#00ffb4,#00ffb4,#00ffb3,#00ffb2,#00ffb2,#00ffb1,#00ffb0,#00ffb0,#00ffaf,#00ffae,#00ffae,#00ffad,#00ffac,#00ffab,#0fa,#0fa,#00ffa9,#00ffa8,#00ffa7,#00ffa6,#07ffa5,#11ffa4,#1bffa4,#26ffa3,#30ffa2,#3bffa1,#46ffa0,#51ff9f,#5dff9e,#69ff9c,#75ff9b,#81ff9a,#8eff99,#9aff98,#a8ff97,#b5ff95,#c3ff94,#d1ff93,#e0ff91,#efff90,#feff8f,#fff185,#ffe37d,#ffd774,#ffcb6d,#ffc166,#ffb760,#ffae5a,#ffa554,#ff9e4f,#ff964a,#ff8f46,#ff8942,#ff833e,#ff7d3a,#ff7836,#ff7233,#ff6e30,#ff692d,#ff652a,#ff6027,#ff5c25,#ff5922,#ff5520,#ff521e,#ff4e1c,#ff4b1a,#ff4818,#ff4516,#ff4314,#ff4012,#ff3d10,#ff3b0f,#ff380d,#ff360c,#ff340a,#ff3209,#ff3008,#ff2e06,#ff2c05,#ff2a04,#ff2803,#ff2602,#ff2501,#ff2300,#f20,#ff2000,#ff1f00,#ff1d00,#ff1c00,#ff1a00,#ff1900,#ff1800,#ff1600)"></i><i style="margin-left:20px;width:464px;background:linear-gradient(90deg,#00ffc3,#00ffc3,#00ffc2,#00ffc2,#00ffc2,#00ffc1,#00ffc1,#00ffc0,#00ffc0,#00ffbf,#00ffbf,#00ffbe,#00ffbe,#00ffbd,#00ffbd,#00ffbc,#00ffbc,#0fb,#0fb,#00ffba,#00ffba,#00ffb9,#00ffb8,#00ffb8,#00ffb7,#00ffb7,#00ffb6,#00ffb5,#00ffb5,#00ffb4,#00ffb3,#00ffb3,#00ffb2,#00ffb1,#00ffb0,#00ffb0,#00ffaf,#00ffae,#00ffad,#00ffad,#00ffac,#00ffab,#04ffaa,#0effa9,#18ffa8,#22ffa7,#2dffa7,#38ffa6,#43ffa5,#4effa4,#5affa3,#66ffa2,#72ffa0,#7eff9f,#8bff9e,#98ff9d,#a5ff9c,#b3ff9b,#c1ff9a,#d0ff98,#deff97,#edff96,#fdff94,#fff28b,#ffe482,#ffd77a,#ffcc72,#ffc16b,#ffb764,#ffae5e,#ffa558,#ff9d53,#ff964e,#ff8f49,#ff8845,#ff8241,#ff7c3d,#ff7739,#ff7236,#ff6d32,#ff682f,#ff642c,#ff602a,#ff5c27,#ff5824,#ff5422,#ff5120,#ff4d1e,#ff4a1b,#ff4719,#ff4417,#ff4216,#ff3f14,#ff3c12,#ff3a10,#ff370f,#ff350d,#ff330c,#ff310a,#ff2f09,#ff2d08,#ff2b06,#ff2905,#ff2704,#ff2603,#ff2402,#ff2201,#ff2100,#ff1f00,#ff1e00,#ff1c00,#ff1b00,#ff1900,#ff1800,#ff1700,#ff1600,#ff1400)"></i><i style="margin-left:20px;width:466px;background:linear-gradient(90deg,#00ffc6,#00ffc6,#00ffc6,#00ffc5,#00ffc5,#00ffc4,#00ffc4,#00ffc4,#00ffc3,#00ffc3,#00ffc2,#00ffc2,#00ffc1,#00ffc1,#00ffc0,#00ffc0,#00ffbf,#00ffbf,#00ffbe,#00ffbe,#00ffbd,#00ffbd,#00ffbc,#00ffbc,#0fb,#00ffba,#00ffba,#00ffb9,#00ffb9,#00ffb8,#00ffb7,#00ffb7,#00ffb6,#00ffb5,#00ffb5,#00ffb4,#00ffb3,#00ffb2,#00ffb2,#00ffb1,#00ffb0,#00ffaf,#04ffaf,#0effae,#18ffad,#22ffac,#2dffab,#38ffaa,#43ffa9,#4fffa8,#5affa7,#66ffa6,#73ffa5,#7fffa4,#8cffa3,#99ffa2,#a7ffa1,#b4ffa0,#c3ff9f,#d1ff9e,#e0ff9c,#efff9b,#ffff9a,#fff08f,#ffe286,#ffd57d,#ffca75,#ffbf6e,#ffb567,#ffac61,#ffa45b,#ff9c56,#ff9451,#ff8d4c,#ff8747,#ff8143,#ff7b3f,#ff763c,#ff7138,#ff6c35,#ff6732,#ff632f,#ff5f2c,#ff5b29,#ff5727,#ff5324,#ff5022,#ff4d1f,#ff491d,#ff461b,#ff4419,#ff4117,#ff3e16,#ff3c14,#ff3912,#ff3710,#ff340f,#ff320d,#ff300c,#ff2e0b,#ff2c09,#ff2a08,#ff2807,#ff2705,#ff2504,#ff2303,#ff2202,#ff2001,#ff1f00,#ff1d00,#ff1c00,#ff1a00,#ff1900,#ff1800,#ff1600,#ff1500,#ff1400,#ff1300)"></i><i style="margin-left:21px;width:468px;background:linear-gradient(90deg,#00ffca,#00ffc9,#00ffc9,#00ffc8,#00ffc8,#00ffc8,#00ffc7,#00ffc7,#00ffc6,#00ffc6,#00ffc6,#00ffc5,#00ffc5,#00ffc4,#00ffc4,#00ffc3,#00ffc3,#00ffc2,#00ffc2,#00ffc1,#00ffc1,#00ffc0,#00ffc0,#00ffbf,#00ffbf,#00ffbe,#00ffbd,#00ffbd,#00ffbc,#00ffbc,#0fb,#00ffba,#00ffba,#00ffb9,#00ffb8,#00ffb8,#00ffb7,#00ffb6,#00ffb6,#00ffb5,#00ffb4,#00ffb3,#0affb3,#14ffb2,#1fffb1,#2affb0,#35ffaf,#40ffae,#4bffae,#57ffad,#63ffac,#70ffab,#7cffaa,#89ffa9,#97ffa8,#a4ffa7,#b2ffa6,#c0ffa4,#cfffa3,#deffa2,#eeffa1,#feffa0,#fff196,#ffe38c,#ffd683,#ffca7a,#ffbf73,#ffb56c,#ffac65,#ffa35f,#ff9b5a,#ff9454,#ff8d4f,#ff864b,#ff8046,#ff7a42,#ff753e,#ff703b,#ff6b37,#ff6634,#ff6231,#ff5e2e,#ff5a2b,#ff5629,#ff5226,#ff4f24,#ff4c21,#ff481f,#ff451d,#ff431b,#ff4019,#ff3d17,#ff3b15,#ff3814,#ff3612,#ff3410,#ff310f,#ff2f0d,#ff2d0c,#ff2b0b,#ff2909,#ff2708,#ff2607,#ff2406,#ff2204,#ff2103,#ff1f02,#ff1e01,#ff1c00,#ff1b00,#ff1900,#ff1800,#ff1700,#ff1500,#ff1400,#ff1300,#ff1200,#f10)"></i><i style="margin-left:21px;width:471px;background:linear-gradient(90deg,#00ffcd,#00ffcd,#0fc,#0fc,#00ffcb,#00ffcb,#00ffcb,#00ffca,#00ffca,#00ffca,#00ffc9,#00ffc9,#00ffc8,#00ffc8,#00ffc7,#00ffc7,#00ffc6,#00ffc6,#00ffc6,#00ffc5,#00ffc5,#00ffc4,#00ffc4,#00ffc3,#00ffc3,#00ffc2,#00ffc2,#00ffc1,#00ffc0,#00ffc0,#00ffbf,#00ffbf,#00ffbe,#00ffbd,#00ffbd,#00ffbc,#0fb,#0fb,#00ffba,#00ffb9,#00ffb9,#01ffb8,#0bffb7,#15ffb6,#20ffb6,#2bffb5,#36ffb4,#42ffb3,#4dffb2,#59ffb2,#65ffb1,#72ffb0,#7fffaf,#8cffae,#99ffad,#a7ffac,#b5ffab,#c4ffaa,#d3ffa9,#e2ffa8,#f2ffa6,#fffca3,#ffed98,#ffdf8e,#ffd285,#ffc77d,#ffbc75,#ffb26e,#ffa968,#ffa161,#ff995c,#ff9156,#ff8b51,#ff844d,#ff7e48,#ff7844,#ff7340,#ff6e3d,#ff6939,#ff6436,#ff6033,#ff5c30,#ff582d,#ff542a,#ff5128,#ff4d25,#ff4a23,#ff4721,#ff441f,#ff411c,#ff3e1b,#ff3c19,#ff3917,#ff3715,#ff3513,#ff3212,#ff3010,#ff2e0f,#ff2c0d,#ff2a0c,#ff280a,#ff2609,#ff2508,#ff2307,#ff2105,#ff2004,#ff1e03,#ff1d02,#ff1b01,#ff1a00,#ff1800,#ff1700,#ff1600,#ff1500,#ff1300,#ff1200,#f10,#ff1000,#ff0f00)"></i><i style="margin-left:22px;width:472px;background:linear-gradient(90deg,#00ffd0,#00ffd0,#00ffd0,#00ffcf,#00ffcf,#00ffcf,#00ffce,#00ffce,#00ffcd,#00ffcd,#00ffcd,#0fc,#0fc,#00ffcb,#00ffcb,#00ffcb,#00ffca,#00ffca,#00ffc9,#00ffc9,#00ffc8,#00ffc8,#00ffc7,#00ffc7,#00ffc6,#00ffc6,#00ffc5,#00ffc5,#00ffc4,#00ffc4,#00ffc3,#00ffc3,#00ffc2,#00ffc2,#00ffc1,#00ffc0,#00ffc0,#00ffbf,#00ffbe,#00ffbe,#00ffbd,#06ffbc,#11ffbc,#1bffbb,#26ffba,#31ffb9,#3dffb9,#49ffb8,#55ffb7,#61ffb6,#6dffb5,#7affb5,#87ffb4,#95ffb3,#a3ffb2,#b1ffb1,#c0ffb0,#cfffaf,#deffae,#eeffad,#feffac,#fff0a0,#ffe296,#ffd58c,#ffc983,#ffbe7b,#ffb474,#ffaa6d,#ffa266,#ff9a60,#ff925b,#ff8b56,#ff8451,#ff7e4c,#ff7848,#ff7344,#ff6e40,#ff693c,#ff6439,#ff6036,#ff5c33,#ff5830,#ff542d,#ff502a,#ff4d28,#ff4a25,#ff4723,#ff4421,#ff411f,#ff3e1d,#ff3b1b,#ff3919,#ff3617,#ff3415,#ff3214,#ff3012,#ff2e10,#ff2c0f,#ff2a0e,#ff280c,#ff260b,#ff2409,#ff2208,#ff2107,#ff1f06,#ff1e05,#ff1c04,#ff1b02,#ff1901,#ff1800,#ff1700,#ff1500,#ff1400,#ff1300,#ff1200,#ff1000,#ff0f00,#ff0e00,#ff0d00)"></i><i style="margin-left:22px;width:475px;background:linear-gradient(90deg,#00ffd4,#00ffd3,#00ffd3,#00ffd3,#00ffd2,#00ffd2,#00ffd2,#00ffd1,#00ffd1,#00ffd1,#00ffd0,#00ffd0,#00ffd0,#00ffcf,#00ffcf,#00ffce,#00ffce,#00ffce,#00ffcd,#00ffcd,#0fc,#0fc,#00ffcb,#00ffcb,#00ffcb,#00ffca,#00ffca,#00ffc9,#00ffc9,#00ffc8,#00ffc8,#00ffc7,#00ffc7,#00ffc6,#00ffc5,#00ffc5,#00ffc4,#00ffc4,#00ffc3,#00ffc2,#00ffc2,#07ffc1,#12ffc1,#1dffc0,#28ffbf,#33ffbe,#3fffbe,#4affbd,#57ffbc,#63ffbb,#70ffbb,#7dffba,#8affb9,#98ffb8,#a6ffb7,#b4ffb6,#c3ffb5,#d2ffb4,#e2ffb4,#f2ffb2,#fffbaf,#ffeca3,#ffde99,#ffd18f,#ffc586,#ffbb7e,#ffb176,#ffa76f,#ff9f69,#ff9763,#ff905d,#ff8958,#ff8253,#ff7c4e,#ff764a,#ff7146,#ff6c42,#ff673e,#ff623b,#ff5e38,#ff5a34,#ff5631,#ff522f,#ff4f2c,#ff4b29,#ff4827,#ff4525,#ff4222,#ff3f20,#ff3d1e,#ff3a1c,#ff381a,#ff3518,#ff3317,#ff3115,#ff2e13,#ff2c12,#ff2a10,#ff280f,#ff270d,#ff250c,#ff230b,#ff2109,#ff2008,#ff1e07,#ff1d06,#ff1b05,#ff1a04,#ff1802,#ff1701,#ff1600,#ff1400,#ff1300,#ff1200,#f10,#ff1000,#ff0e00,#ff0d00,#ff0c00,#ff0b00)"></i><i style="margin-left:22px;width:477px;background:linear-gradient(90deg,#00ffd7,#00ffd7,#00ffd7,#00ffd6,#00ffd6,#00ffd6,#00ffd5,#00ffd5,#00ffd5,#00ffd4,#00ffd4,#00ffd4,#00ffd3,#00ffd3,#00ffd3,#00ffd2,#00ffd2,#00ffd2,#00ffd1,#00ffd1,#00ffd0,#00ffd0,#00ffd0,#00ffcf,#00ffcf,#00ffce,#00ffce,#00ffce,#00ffcd,#00ffcd,#0fc,#0fc,#00ffcb,#00ffcb,#00ffca,#00ffca,#00ffc9,#00ffc9,#00ffc8,#00ffc7,#00ffc7,#07ffc6,#12ffc6,#1dffc5,#28ffc4,#34ffc4,#3fffc3,#4bffc2,#57ffc2,#64ffc1,#71ffc0,#7effbf,#8bffbf,#99ffbe,#a8ffbd,#b6ffbc,#c5ffbb,#d4ffba,#e4ffba,#f4ffb9,#fff9b3,#ffeaa7,#ffdc9c,#ffcf93,#ffc38a,#ffb981,#ffaf7a,#ffa672,#ff9d6c,#ff9566,#ff8e60,#ff875b,#ff8156,#ff7b51,#ff754c,#ff7048,#ff6b44,#ff6641,#ff613d,#ff5d3a,#ff5937,#ff5534,#ff5131,#ff4e2e,#ff4a2b,#ff4729,#ff4426,#ff4124,#ff3e22,#ff3c20,#ff391e,#ff371c,#ff341a,#ff3218,#ff3017,#ff2e15,#ff2c13,#ff2a12,#ff2810,#ff260f,#ff240d,#ff220c,#ff210b,#ff1f0a,#ff1d08,#ff1c07,#ff1a06,#ff1905,#ff1804,#ff1603,#ff1502,#ff1401,#ff1200,#f10,#ff1000,#ff0f00,#ff0e00,#ff0d00,#ff0c00,#ff0b00,#ff0a00)"></i><i style="margin-left:23px;width:479px;background:linear-gradient(90deg,#00ffdb,#00ffda,#00ffda,#00ffda,#00ffda,#00ffd9,#00ffd9,#00ffd9,#00ffd8,#00ffd8,#00ffd8,#00ffd8,#00ffd7,#00ffd7,#00ffd7,#00ffd6,#00ffd6,#00ffd6,#00ffd5,#00ffd5,#00ffd5,#00ffd4,#00ffd4,#00ffd3,#00ffd3,#00ffd3,#00ffd2,#00ffd2,#00ffd1,#00ffd1,#00ffd0,#00ffd0,#00ffd0,#00ffcf,#00ffcf,#00ffce,#00ffce,#00ffcd,#00ffcd,#0fc,#03ffcc,#0effcb,#19ffca,#24ffca,#30ffc9,#3bffc9,#48ffc8,#54ffc7,#61ffc7,#6dffc6,#7bffc5,#88ffc5,#96ffc4,#a5ffc3,#b3ffc2,#c3ffc2,#d2ffc1,#e2ffc0,#f3ffbf,#fffbbb,#ffebae,#ffdda3,#ffd099,#ffc48f,#ffb986,#ffaf7e,#ffa677,#ff9d70,#ff956a,#ff8e64,#ff875e,#ff8059,#ff7a54,#ff7450,#ff6f4b,#ff6a47,#ff6543,#ff6040,#ff5c3c,#ff5839,#ff5436,#ff5033,#ff4d30,#ff4a2d,#ff462b,#ff4328,#ff4026,#ff3d24,#ff3b22,#ff3820,#ff361e,#ff331c,#ff311a,#ff2f18,#ff2d16,#ff2b15,#ff2913,#ff2712,#ff2510,#ff230f,#ff210d,#ff200c,#ff1e0b,#ff1d0a,#ff1b08,#ff1a07,#ff1806,#ff1705,#ff1504,#ff1403,#ff1302,#ff1201,#ff1000,#ff0f00,#ff0e00,#ff0d00,#ff0c00,#ff0b00,#ff0a00,#ff0900,#ff0800)"></i><i style="margin-left:23px;width:482px;background:linear-gradient(90deg,#00ffde,#00ffde,#00ffde,#00ffde,#0fd,#0fd,#0fd,#0fd,#00ffdc,#00ffdc,#00ffdc,#00ffdc,#00ffdb,#00ffdb,#00ffdb,#00ffda,#00ffda,#00ffda,#00ffd9,#00ffd9,#00ffd9,#00ffd8,#00ffd8,#00ffd8,#00ffd7,#00ffd7,#00ffd7,#00ffd6,#00ffd6,#00ffd6,#00ffd5,#00ffd5,#00ffd4,#00ffd4,#00ffd3,#00ffd3,#00ffd3,#00ffd2,#00ffd2,#00ffd1,#04ffd1,#0fffd0,#1affd0,#26ffcf,#31ffcf,#3dffce,#49ffcd,#56ffcd,#63ffcc,#70ffcc,#7dffcb,#8bffca,#99ffca,#a8ffc9,#b7ffc8,#c6ffc8,#d6ffc7,#e6ffc6,#f7ffc5,#fff6be,#ffe7b1,#ffd9a6,#ffcc9b,#ffc092,#ffb689,#ffac81,#ffa379,#ff9a72,#ff926c,#ff8b66,#ff8460,#ff7e5b,#ff7856,#ff7252,#ff6d4d,#ff6849,#ff6345,#ff5e42,#ff5a3e,#ff563b,#ff5238,#ff4f35,#ff4b32,#ff482f,#ff452c,#ff422a,#ff3f28,#ff3c25,#ff3923,#ff3721,#ff341f,#ff321d,#ff301b,#ff2e19,#ff2b18,#ff2916,#ff2714,#ff2613,#ff2411,#ff2210,#ff200f,#ff1f0d,#ff1d0c,#ff1b0b,#ff1a09,#ff1908,#ff1707,#ff1606,#ff1405,#ff1304,#ff1203,#ff1102,#ff1001,#ff0e00,#ff0d00,#ff0c00,#ff0b00,#ff0a00,#ff0900,#ff0800,#ff0700,#ff0600)"></i><i style="margin-left:24px;width:483px;background:linear-gradient(90deg,#00ffe2,#00ffe2,#00ffe2,#00ffe1,#00ffe1,#00ffe1,#00ffe1,#00ffe1,#00ffe0,#00ffe0,#00ffe0,#00ffe0,#00ffdf,#00ffdf,#00ffdf,#00ffde,#00ffde,#00ffde,#00ffde,#0fd,#0fd,#0fd,#00ffdc,#00ffdc,#00ffdc,#00ffdc,#00ffdb,#00ffdb,#00ffda,#00ffda,#00ffda,#00ffd9,#00ffd9,#00ffd9,#00ffd8,#00ffd8,#00ffd7,#00ffd7,#00ffd7,#00ffd6,#0affd6,#15ffd5,#21ffd5,#2cffd4,#38ffd4,#44ffd3,#51ffd3,#5effd2,#6bffd2,#79ffd1,#87ffd1,#95ffd0,#a3ffcf,#b3ffcf,#c2ffce,#d2ffce,#e2ffcd,#f3ffcc,#fffac7,#ffeaba,#ffdbae,#ffcea3,#ffc299,#ffb78f,#ffad87,#ffa47f,#ff9b78,#ff9371,#ff8c6b,#ff8565,#ff7e5f,#ff785a,#ff7256,#ff6d51,#ff684d,#ff6349,#ff5e45,#ff5a41,#ff563e,#ff523b,#ff4e37,#ff4b35,#ff4832,#ff442f,#ff412c,#ff3e2a,#ff3c28,#ff3925,#ff3623,#ff3421,#ff321f,#ff2f1d,#ff2d1b,#ff2b1a,#ff2918,#ff2716,#ff2515,#ff2313,#ff2112,#ff2010,#ff1e0f,#ff1c0d,#ff1b0c,#ff190b,#ff180a,#ff1709,#ff1507,#ff1406,#ff1305,#ff1104,#ff1003,#ff0f02,#ff0e01,#ff0d00,#ff0c00,#ff0b00,#ff0900,#ff0800,#ff0700,#ff0700,#ff0600,#ff0500)"></i><i style="margin-left:24px;width:486px;background:linear-gradient(90deg,#00ffe6,#00ffe6,#00ffe5,#00ffe5,#00ffe5,#00ffe5,#00ffe5,#00ffe5,#00ffe4,#00ffe4,#00ffe4,#00ffe4,#00ffe3,#00ffe3,#00ffe3,#00ffe3,#00ffe3,#00ffe2,#00ffe2,#00ffe2,#00ffe2,#00ffe1,#00ffe1,#00ffe1,#00ffe0,#00ffe0,#00ffe0,#00ffe0,#00ffdf,#00ffdf,#00ffdf,#00ffde,#00ffde,#00ffde,#0fd,#0fd,#0fd,#00ffdc,#00ffdc,#00ffdc,#0bffdb,#17ffdb,#22ffda,#2effda,#3affda,#46ffd9,#53ffd9,#60ffd8,#6effd8,#7bffd7,#89ffd7,#98ffd6,#a7ffd6,#b6ffd5,#c6ffd5,#d6ffd4,#e7ffd3,#f8ffd3,#fff5ca,#ffe5bd,#ffd7b0,#ffcaa5,#ffbf9b,#ffb492,#ffaa89,#ffa181,#ff987a,#ff9073,#ff896d,#ff8267,#ff7c62,#ff765c,#ff7057,#ff6b53,#ff664f,#ff614a,#ff5c47,#ff5843,#ff5440,#ff503c,#ff4d39,#ff4936,#ff4633,#ff4331,#ff402e,#ff3d2b,#ff3a29,#ff3727,#ff3525,#ff3223,#ff3021,#ff2e1f,#ff2c1d,#ff2a1b,#ff2819,#ff2618,#ff2416,#ff2214,#ff2013,#ff1f11,#ff1d10,#ff1b0f,#ff1a0d,#ff180c,#ff170b,#ff160a,#ff1408,#ff1307,#ff1206,#ff1005,#ff0f04,#ff0e03,#ff0d02,#ff0c01,#ff0b00,#ff0a00,#ff0900,#ff0800,#ff0700,#ff0600,#ff0500,#ff0400,#ff0300)"></i><i style="margin-left:25px;width:488px;background:linear-gradient(90deg,#00ffea,#00ffea,#00ffe9,#00ffe9,#00ffe9,#00ffe9,#00ffe9,#00ffe9,#00ffe8,#00ffe8,#00ffe8,#00ffe8,#00ffe8,#00ffe7,#00ffe7,#00ffe7,#00ffe7,#00ffe7,#00ffe6,#00ffe6,#00ffe6,#00ffe6,#00ffe6,#00ffe5,#00ffe5,#00ffe5,#00ffe5,#00ffe4,#00ffe4,#00ffe4,#00ffe4,#00ffe3,#00ffe3,#00ffe3,#00ffe2,#00ffe2,#00ffe2,#00ffe2,#00ffe1,#07ffe1,#12ffe1,#1effe0,#2affe0,#36ffe0,#42ffdf,#4fffdf,#5cffde,#6affde,#78ffde,#86ffdd,#95ffdd,#a4ffdc,#b3ffdc,#c3ffdb,#d3ffdb,#e4ffda,#f5ffda,#fff7d3,#ffe7c4,#ffd8b8,#ffcbac,#ffbfa1,#ffb498,#ffaa8f,#ffa186,#ff987f,#ff9078,#ff8971,#ff826b,#ff7b65,#ff7560,#ff6f5b,#ff6a56,#ff6552,#ff604d,#ff5c49,#ff5746,#ff5342,#ff503f,#ff4c3c,#ff4838,#ff4536,#ff4233,#ff3f30,#ff3c2e,#ff392b,#ff3729,#ff3426,#ff3224,#ff2f22,#ff2d20,#ff2b1e,#ff291d,#ff271b,#ff2519,#ff2317,#ff2116,#ff1f14,#ff1e13,#ff1c11,#ff1b10,#ff190f,#ff180d,#ff160c,#ff150b,#ff130a,#ff1208,#ff1107,#ff1006,#ff0e05,#ff0d04,#ff0c03,#ff0b02,#ff0a01,#ff0900,#ff0800,#ff0700,#ff0600,#ff0500,#ff0400,#ff0300,#ff0200,#ff0100)"></i><i style="margin-left:25px;width:490px;background:linear-gradient(90deg,#0fe,#0fe,#00ffed,#00ffed,#00ffed,#00ffed,#00ffed,#00ffed,#00ffed,#00ffec,#00ffec,#00ffec,#00ffec,#00ffec,#00ffec,#00ffec,#00ffeb,#00ffeb,#00ffeb,#00ffeb,#00ffeb,#00ffeb,#00ffea,#00ffea,#00ffea,#00ffea,#00ffea,#00ffe9,#00ffe9,#00ffe9,#00ffe9,#00ffe9,#00ffe8,#00ffe8,#00ffe8,#00ffe8,#00ffe7,#00ffe7,#00ffe7,#07ffe7,#13ffe6,#1effe6,#2affe6,#37ffe6,#43ffe5,#50ffe5,#5effe5,#6bffe4,#79ffe4,#88ffe4,#96ffe3,#a6ffe3,#b5ffe3,#c5ffe2,#d6ffe2,#e7ffe1,#f8ffe1,#fff4d7,#ffe4c9,#ffd6bc,#ffc9b0,#ffbda5,#ffb29b,#ffa892,#ff9f8a,#ff9682,#ff8e7b,#ff8774,#ff806e,#ff7968,#ff7363,#ff6e5e,#ff6959,#ff6454,#ff5f50,#ff5a4c,#ff5648,#ff5244,#ff4e41,#ff4b3e,#ff473b,#ff4438,#ff4135,#ff3e32,#ff3b2f,#ff382d,#ff362b,#ff3328,#ff3126,#ff2e24,#ff2c22,#ff2a20,#ff281e,#ff261c,#ff241b,#ff2219,#ff2017,#ff1f16,#ff1d14,#ff1b13,#ff1a11,#ff1810,#ff170f,#ff150d,#ff140c,#ff130b,#ff110a,#ff1009,#ff0f08,#ff0e06,#ff0d05,#ff0b04,#ff0a03,#ff0902,#ff0802,#ff0701,#ff0600,#ff0500,#ff0400,#ff0300,#ff0300,#ff0200,#ff0100,#f00)"></i><i style="margin-left:26px;width:492px;background:linear-gradient(90deg,#00fff2,#00fff2,#00fff1,#00fff1,#00fff1,#00fff1,#00fff1,#00fff1,#00fff1,#00fff1,#00fff1,#00fff1,#00fff0,#00fff0,#00fff0,#00fff0,#00fff0,#00fff0,#00fff0,#00fff0,#00ffef,#00ffef,#00ffef,#00ffef,#00ffef,#00ffef,#00ffef,#0fe,#0fe,#0fe,#0fe,#0fe,#0fe,#0fe,#00ffed,#00ffed,#00ffed,#00ffed,#03ffed,#0effec,#1affec,#26ffec,#32ffec,#3fffec,#4cffeb,#5affeb,#67ffeb,#76ffeb,#84ffea,#93ffea,#a2ffea,#b2ffea,#c2ffe9,#d3ffe9,#e4ffe9,#f6ffe8,#fff6e0,#ffe6d1,#ffd7c3,#ffcab7,#ffbdab,#ffb2a1,#ffa898,#ff9f8f,#ff9687,#ff8e7f,#ff8678,#ff8072,#ff796c,#ff7366,#ff6d61,#ff685c,#ff6357,#ff5e53,#ff5a4f,#ff554b,#ff5147,#ff4d44,#ff4a40,#ff463d,#ff433a,#ff4037,#ff3d34,#ff3a32,#ff372f,#ff352d,#ff322a,#ff3028,#ff2d26,#ff2b24,#ff2922,#ff2720,#ff251e,#ff231c,#ff211a,#ff1f19,#ff1e17,#ff1c16,#ff1a14,#ff1913,#ff1711,#ff1610,#ff140f,#ff130d,#ff120c,#ff100b,#ff0f0a,#ff0e09,#ff0d08,#ff0c07,#ff0b05,#ff0904,#ff0803,#ff0703,#ff0602,#ff0501,#ff0400,#ff0400,#ff0300,#ff0200,#ff0100,#f00,#f00,#f00)"></i><i style="margin-left:26px;width:494px;background:linear-gradient(90deg,#00fff6,#00fff6,#00fff6,#00fff6,#00fff6,#00fff5,#00fff5,#00fff5,#00fff5,#00fff5,#00fff5,#00fff5,#00fff5,#00fff5,#00fff5,#00fff5,#00fff5,#00fff5,#00fff5,#00fff4,#00fff4,#00fff4,#00fff4,#00fff4,#00fff4,#00fff4,#00fff4,#00fff4,#00fff4,#00fff4,#00fff3,#00fff3,#00fff3,#00fff3,#00fff3,#00fff3,#00fff3,#00fff3,#03fff3,#0ffff2,#1afff2,#27fff2,#33fff2,#40fff2,#4dfff2,#5bfff2,#69fff1,#77fff1,#86fff1,#95fff1,#a4fff1,#b4fff1,#c5fff1,#d6fff0,#e7fff0,#f9fff0,#fff3e5,#ffe3d5,#ffd4c7,#ffc7bb,#ffbbaf,#ffb0a5,#ffa69b,#ff9d92,#ff948a,#ff8c83,#ff857b,#ff7e75,#ff776f,#ff7169,#ff6c64,#ff665f,#ff615a,#ff5d55,#ff5851,#ff544d,#ff5049,#ff4c46,#ff4942,#ff453f,#ff423c,#ff3f39,#ff3c36,#ff3933,#ff3631,#ff342e,#ff312c,#ff2f2a,#ff2c28,#ff2a25,#ff2823,#ff2621,#ff2420,#ff221e,#ff201c,#ff1f1a,#ff1d19,#ff1b17,#ff1a16,#ff1814,#ff1713,#ff1511,#ff1410,#ff120f,#ff110d,#ff100c,#ff0f0b,#ff0d0a,#ff0c09,#ff0b08,#ff0a07,#ff0906,#ff0805,#ff0704,#ff0603,#ff0502,#ff0401,#ff0300,#ff0200,#ff0100,#f00,#f00,#f00,#f00,#f00)"></i><i style="margin-left:27px;width:496px;background:linear-gradient(90deg,#00fffa,#00fffa,#00fffa,#00fffa,#00fffa,#00fffa,#00fffa,#00fffa,#00fffa,#00fffa,#00fffa,#00fffa,#00fffa,#00fffa,#00fffa,#00fffa,#00fffa,#00fffa,#00fff9,#00fff9,#00fff9,#00fff9,#00fff9,#00fff9,#00fff9,#00fff9,#00fff9,#00fff9,#00fff9,#00fff9,#00fff9,#00fff9,#00fff9,#00fff9,#00fff9,#00fff9,#00fff9,#00fff9,#0afff9,#16fff9,#22fff9,#2ffff9,#3cfff8,#49fff8,#57fff8,#65fff8,#73fff8,#82fff8,#91fff8,#a1fff8,#b1fff8,#c2fff8,#d3fff8,#e4fff8,#f6fff8,#fff5ee,#ffe4de,#ffd6cf,#ffc8c2,#ffbcb6,#ffb0ab,#ffa6a1,#ff9d98,#ff948f,#ff8c87,#ff8480,#ff7d79,#ff7773,#ff716d,#ff6b67,#ff6662,#ff615d,#ff5c59,#ff5754,#ff5350,#ff4f4c,#ff4b48,#ff4845,#ff4442,#ff413e,#ff3e3b,#ff3b38,#ff3836,#ff3533,#ff3330,#ff302e,#ff2e2c,#ff2c29,#ff2927,#ff2725,#ff2523,#ff2321,#ff211f,#ff1f1e,#ff1e1c,#ff1c1a,#ff1a19,#ff1917,#ff1716,#ff1614,#ff1413,#ff1311,#ff1110,#ff100f,#ff0f0d,#ff0e0c,#ff0c0b,#ff0b0a,#ff0a09,#ff0908,#ff0807,#ff0706,#ff0605,#ff0504,#ff0403,#ff0302,#ff0201,#ff0100,#f00,#f00,#f00,#f00,#f00,#f00,#f00)"></i><i style="margin-left:27px;width:499px;background:linear-gradient(90deg,#00fffe,#00fffe,#00fffe,#00fffe,#00fffe,#00fffe,#00fffe,#00fffe,#00fffe,#00fffe,#00fffe,#00fffe,#00fffe,#00fffe,#00fffe,#00fffe,#0ff,#0ff,#0ff,#0ff,#0ff,#0ff,#0ff,#0ff,#0ff,#0ff,#0ff,#0ff,#0ff,#0ff,#0ff,#0ff,#0ff,#0ff,#0ff,#0ff,#0ff,#0ff,#0bffff,#17ffff,#24ffff,#31ffff,#3effff,#4bffff,#59ffff,#67ffff,#76ffff,#85ffff,#94ffff,#a4ffff,#b5ffff,#c5ffff,#d7feff,#e9feff,#fbfeff,#fff0f1,#ffe0e0,#ffd1d2,#ffc4c4,#ffb8b8,#ffadad,#ffa3a3,#ff999a,#ff9191,#ff8989,#ff8182,#ff7b7b,#ff7475,#ff6e6f,#ff6969,#ff6364,#ff5e5f,#ff5a5a,#ff5556,#ff5152,#ff4d4e,#ff494a,#ff4647,#ff4343,#ff3f40,#ff3c3d,#ff393a,#ff3637,#ff3434,#ff3132,#ff2f2f,#ff2c2d,#ff2a2b,#ff2829,#ff2626,#ff2424,#f22,#ff2021,#ff1e1f,#ff1c1d,#ff1b1b,#ff191a,#ff1818,#ff1617,#ff1515,#ff1314,#ff1212,#ff1011,#ff0f10,#ff0e0f,#ff0d0d,#ff0c0c,#ff0a0b,#ff090a,#ff0809,#ff0708,#ff0607,#ff0506,#ff0405,#ff0304,#ff0203,#ff0102,#ff0001,#f00,#f00,#f00,#f00,#f00,#f00,#f00,#f00)"></i><i style="margin-left:28px;width:500px;background:linear-gradient(90deg,#00fbff,#00fbff,#00fbff,#00fbff,#00fbff,#00fbff,#00fbff,#00fbff,#00fbff,#00fbff,#00fbff,#00fbff,#00fbff,#00fbff,#00fbff,#00fbff,#00faff,#00faff,#00faff,#00faff,#00faff,#00faff,#00faff,#00faff,#00faff,#00faff,#00faff,#00faff,#00faff,#00f9ff,#00f9ff,#00f9ff,#00f9ff,#00f9ff,#00f9ff,#00f9ff,#00f9ff,#05f9ff,#11f9ff,#1df8ff,#2af8ff,#37f8ff,#44f8ff,#51f8ff,#5ff8ff,#6df8ff,#7cf8ff,#8bf7ff,#9af7ff,#aaf7ff,#bbf7ff,#ccf7ff,#ddf7ff,#eff7ff,#fff4fd,#ffe3eb,#ffd4dc,#ffc6ce,#ffbac1,#ffaeb5,#ffa4ab,#ff9ba1,#ff9298,#ff8a8f,#ff8288,#ff7b81,#ff757a,#ff6f74,#ff696e,#ff6368,#ff5e63,#ff5a5e,#ff555a,#ff5155,#ff4d51,#ff494d,#ff464a,#ff4246,#ff3f43,#ff3c40,#ff393d,#ff363a,#ff3337,#ff3134,#ff2e32,#ff2c2f,#ff2a2d,#ff272b,#ff2529,#ff2327,#ff2125,#ff1f23,#ff1e21,#ff1c1f,#ff1a1d,#ff191c,#ff171a,#ff1518,#ff1417,#ff1315,#ff1114,#ff1013,#ff0f11,#ff0d10,#ff0c0f,#ff0b0e,#ff0a0c,#ff090b,#ff080a,#ff0709,#ff0508,#ff0407,#ff0406,#ff0305,#ff0204,#ff0103,#ff0002,#ff0001,#f00,#f00,#f00,#f00,#f00,#f00,#f00,#f00)"></i><i style="margin-left:28px;width:503px;background:linear-gradient(90deg,#00f7ff,#00f7ff,#00f7ff,#00f7ff,#00f7ff,#00f7ff,#00f7ff,#00f6ff,#00f6ff,#00f6ff,#00f6ff,#00f6ff,#00f6ff,#00f6ff,#00f6ff,#00f6ff,#00f6ff,#00f5ff,#00f5ff,#00f5ff,#00f5ff,#00f5ff,#00f5ff,#00f5ff,#00f5ff,#00f4ff,#00f4ff,#00f4ff,#00f4ff,#00f4ff,#00f4ff,#00f4ff,#00f3ff,#00f3ff,#00f3ff,#00f3ff,#00f3ff,#06f3ff,#12f2ff,#1ef2ff,#2bf2ff,#37f2ff,#44f2ff,#51f1ff,#5ff1ff,#6df1ff,#7cf1ff,#8af0ff,#9af0ff,#a9f0ff,#b9f0ff,#caf0ff,#dbefff,#edefff,#ffefff,#ffdeee,#ffcfde,#ffc2d0,#ffb6c3,#ffabb8,#ffa1ad,#ff97a3,#ff8f9a,#ff8792,#ff7f8a,#ff7883,#ff727c,#ff6c76,#ff6670,#ff616a,#ff5c65,#ff5860,#ff535b,#ff4f57,#ff4b53,#ff474f,#ff444b,#ff4048,#ff3d44,#ff3a41,#ff373e,#ff343b,#ff3238,#ff2f36,#ff2d33,#ff2a31,#ff282e,#ff262c,#ff242a,#ff2228,#ff2026,#ff1e24,#ff1c22,#ff1b20,#ff191e,#ff171d,#ff161b,#ff141a,#ff1318,#ff1217,#ff1015,#ff0f14,#ff0e12,#ff0c11,#ff0b10,#ff0a0f,#ff090d,#ff080c,#ff070b,#ff060a,#ff0509,#ff0408,#ff0307,#ff0206,#ff0105,#ff0004,#ff0003,#ff0002,#ff0001,#ff0001,#f00,#f00,#f00,#f00,#f00,#f00,#f00)"></i><i style="margin-left:29px;width:505px;background:linear-gradient(90deg,#00f3ff,#00f3ff,#00f3ff,#00f2ff,#00f2ff,#00f2ff,#00f2ff,#00f2ff,#00f2ff,#00f2ff,#00f2ff,#00f1ff,#00f1ff,#00f1ff,#00f1ff,#00f1ff,#00f1ff,#00f0ff,#00f0ff,#00f0ff,#00f0ff,#00f0ff,#00f0ff,#00efff,#00efff,#00efff,#00efff,#00efff,#0ef,#0ef,#0ef,#0ef,#0ef,#00edff,#00edff,#00edff,#00edff,#0aecff,#15ecff,#21ecff,#2decff,#3aebff,#47ebff,#54ebff,#61ebff,#6feaff,#7eeaff,#8ceaff,#9be9ff,#abe9ff,#bbe9ff,#cbe8ff,#dce8ff,#ede8ff,#ffe7ff,#ffd7ee,#ffc9df,#ffbcd1,#ffb0c4,#ffa6b8,#ff9cae,#ff93a4,#ff8a9b,#ff8393,#ff7b8b,#ff7584,#ff6f7d,#ff6977,#ff6371,#ff5e6b,#ff5966,#ff5561,#ff515d,#ff4c58,#ff4954,#ff4550,#ff424d,#ff3e49,#ff3b46,#ff3842,#ff353f,#ff333c,#ff303a,#ff2d37,#ff2b34,#ff2932,#ff2730,#ff242d,#ff222b,#ff2029,#ff1f27,#ff1d25,#ff1b23,#ff1921,#ff181f,#ff161e,#ff151c,#ff131b,#ff1219,#ff1018,#ff0f16,#ff0e15,#ff0c13,#ff0b12,#ff0a11,#ff0910,#ff080e,#ff070d,#ff060c,#ff050b,#ff040a,#ff0309,#ff0208,#ff0107,#ff0006,#ff0005,#ff0004,#ff0003,#ff0002,#ff0001,#ff0001,#f00,#f00,#f00,#f00,#f00,#f00,#f00)"></i><i style="margin-left:30px;width:506px;background:linear-gradient(90deg,#00efff,#0ef,#0ef,#0ef,#0ef,#0ef,#0ef,#00edff,#00edff,#00edff,#00edff,#00edff,#00edff,#00ecff,#00ecff,#00ecff,#00ecff,#00ecff,#00ebff,#00ebff,#00ebff,#00ebff,#00eaff,#00eaff,#00eaff,#00eaff,#00eaff,#00e9ff,#00e9ff,#00e9ff,#00e8ff,#00e8ff,#00e8ff,#00e8ff,#00e7ff,#00e7ff,#04e7ff,#0fe6ff,#1be6ff,#27e6ff,#33e5ff,#40e5ff,#4de5ff,#5ae4ff,#67e4ff,#75e4ff,#83e3ff,#92e3ff,#a1e2ff,#b1e2ff,#c0e1ff,#d1e1ff,#e2e1ff,#f3e0ff,#ffdbf9,#ffcce9,#ffbeda,#ffb2cd,#ffa7c1,#ff9db5,#ff94ab,#ff8ba2,#ff8399,#ff7c91,#ff7589,#ff6f82,#ff697c,#ff6376,#ff5e70,#ff596b,#ff5565,#ff5061,#ff4c5c,#ff4858,#ff4554,#ff4150,#ff3e4c,#ff3b49,#ff3845,#ff3542,#ff323f,#ff2f3c,#ff2d39,#ff2b37,#ff2834,#ff2632,#ff242f,#ff222d,#ff202b,#ff1e29,#ff1c27,#ff1a25,#ff1923,#ff1721,#ff1620,#ff141e,#ff131c,#ff111b,#ff1019,#ff0e18,#ff0d16,#ff0c15,#ff0b14,#ff0912,#ff0811,#ff0710,#ff060f,#ff050d,#ff040c,#ff030b,#ff020a,#ff0109,#ff0008,#ff0007,#ff0006,#ff0005,#ff0004,#ff0003,#ff0003,#ff0002,#ff0001,#f00,#f00,#f00,#f00,#f00,#f00,#f00)"></i><i style="margin-left:30px;width:509px;background:linear-gradient(90deg,#00ebff,#00eaff,#00eaff,#00eaff,#00eaff,#00eaff,#00e9ff,#00e9ff,#00e9ff,#00e9ff,#00e8ff,#00e8ff,#00e8ff,#00e8ff,#00e8ff,#00e7ff,#00e7ff,#00e7ff,#00e7ff,#00e6ff,#00e6ff,#00e6ff,#00e5ff,#00e5ff,#00e5ff,#00e5ff,#00e4ff,#00e4ff,#00e4ff,#00e3ff,#00e3ff,#00e3ff,#00e2ff,#00e2ff,#00e2ff,#00e1ff,#05e1ff,#10e1ff,#1ce0ff,#28e0ff,#34dfff,#40dfff,#4ddfff,#5adeff,#67deff,#75ddff,#83ddff,#91dcff,#a0dcff,#afdbff,#bfdbff,#cfdaff,#e0daff,#f1d9ff,#ffd6fc,#ffc7eb,#ffbadc,#ffaecf,#ffa3c3,#ff99b8,#ff90ad,#ff88a4,#ff809b,#ff7993,#ff728b,#ff6c84,#ff667e,#ff6178,#ff5c72,#ff576c,#ff5267,#ff4e62,#ff4a5e,#ff4659,#ff4355,#ff3f51,#ff3c4e,#ff394a,#ff3647,#f34,#ff3041,#ff2e3e,#ff2b3b,#ff2938,#ff2736,#ff2533,#ff2231,#ff202f,#ff1f2c,#ff1d2a,#ff1b28,#ff1926,#ff1824,#ff1623,#ff1421,#ff131f,#ff111d,#ff101c,#ff0f1a,#ff0d19,#ff0c17,#ff0b16,#ff0a15,#ff0813,#ff0712,#ff0611,#ff0510,#ff040e,#ff030d,#ff020c,#ff010b,#ff000a,#ff0009,#ff0008,#ff0007,#ff0006,#ff0005,#ff0004,#ff0003,#ff0003,#ff0002,#ff0001,#f00,#f00,#f00,#f00,#f00,#f00,#f00)"></i><i style="margin-left:31px;width:510px;background:linear-gradient(90deg,#00e6ff,#00e6ff,#00e6ff,#00e6ff,#00e5ff,#00e5ff,#00e5ff,#00e5ff,#00e4ff,#00e4ff,#00e4ff,#00e4ff,#00e3ff,#00e3ff,#00e3ff,#00e3ff,#00e2ff,#00e2ff,#00e2ff,#00e1ff,#00e1ff,#00e1ff,#00e0ff,#00e0ff,#00e0ff,#00dfff,#00dfff,#00dfff,#00deff,#00deff,#00deff,#0df,#0df,#00dcff,#00dcff,#00dcff,#0bdbff,#16dbff,#21daff,#2ddaff,#39d9ff,#46d9ff,#53d8ff,#60d8ff,#6dd7ff,#7bd7ff,#89d6ff,#97d6ff,#a6d5ff,#b5d4ff,#c5d4ff,#d5d3ff,#e5d2ff,#f7d2ff,#ffcaf6,#ffbce7,#ffb0d8,#ffa5cb,#ff9bc0,#ff91b5,#ff89ab,#ff81a1,#ff7a99,#ff7391,#ff6c8a,#ff6783,#ff617c,#ff5c76,#ff5771,#ff526b,#ff4e66,#ff4a62,#ff465d,#ff4259,#ff3f55,#ff3c51,#ff394d,#ff364a,#ff3347,#ff3043,#ff2d40,#ff2b3e,#ff283b,#ff2638,#ff2436,#f23,#ff2031,#ff1e2f,#ff1c2c,#ff1a2a,#ff1928,#ff1726,#ff1524,#ff1423,#ff1221,#ff111f,#ff0f1e,#ff0e1c,#ff0d1a,#ff0b19,#ff0a18,#ff0916,#ff0815,#ff0714,#ff0612,#ff0511,#ff0310,#ff020f,#ff020d,#ff010c,#ff000b,#ff000a,#ff0009,#ff0008,#ff0007,#ff0006,#ff0005,#ff0005,#ff0004,#ff0003,#ff0002,#ff0001,#f00,#f00,#f00,#f00,#f00,#f00,#f00)"></i><i style="margin-left:31px;width:513px;background:linear-gradient(90deg,#00e2ff,#00e2ff,#00e2ff,#00e2ff,#00e1ff,#00e1ff,#00e1ff,#00e0ff,#00e0ff,#00e0ff,#00e0ff,#00dfff,#00dfff,#00dfff,#00deff,#00deff,#00deff,#0df,#0df,#0df,#00dcff,#00dcff,#00dcff,#00dbff,#00dbff,#00daff,#00daff,#00daff,#00d9ff,#00d9ff,#00d8ff,#00d8ff,#00d8ff,#00d7ff,#00d7ff,#01d6ff,#0cd6ff,#17d5ff,#22d5ff,#2ed4ff,#3ad4ff,#46d3ff,#53d2ff,#60d2ff,#6dd1ff,#7ad1ff,#88d0ff,#96cfff,#a5cfff,#b4ceff,#c3cdff,#d3cdff,#e4ccff,#f4cbff,#ffc5f9,#ffb8e9,#ffacdb,#ffa1ce,#ff97c2,#ff8eb7,#ff86ad,#ff7ea4,#ff779b,#ff7093,#ff6a8c,#ff6485,#ff5e7e,#ff5978,#ff5573,#ff506d,#ff4c68,#ff4863,#ff445f,#ff405b,#ff3d56,#ff3a53,#ff374f,#ff344b,#ff3148,#ff2e45,#ff2c42,#ff293f,#ff273c,#ff2539,#ff2337,#ff2034,#ff1f32,#ff1d30,#ff1b2e,#ff192c,#ff172a,#ff1628,#ff1426,#ff1324,#f12,#ff1020,#ff0e1f,#ff0d1d,#ff0c1c,#ff0a1a,#ff0919,#ff0817,#ff0716,#ff0615,#ff0513,#ff0412,#ff0311,#ff0210,#ff010e,#ff000d,#ff000c,#ff000b,#ff000a,#ff0009,#ff0008,#ff0007,#ff0006,#ff0005,#ff0005,#ff0004,#ff0003,#ff0002,#ff0001,#f00,#f00,#f00,#f00,#f00,#f00,#f00)"></i><i style="margin-left:32px;width:515px;background:linear-gradient(90deg,#00deff,#00deff,#00deff,#0df,#0df,#0df,#0df,#00dcff,#00dcff,#00dcff,#00dbff,#00dbff,#00dbff,#00daff,#00daff,#00d9ff,#00d9ff,#00d9ff,#00d8ff,#00d8ff,#00d8ff,#00d7ff,#00d7ff,#00d6ff,#00d6ff,#00d5ff,#00d5ff,#00d5ff,#00d4ff,#00d4ff,#00d3ff,#00d3ff,#00d2ff,#00d2ff,#00d1ff,#07d0ff,#12d0ff,#1dcfff,#29cfff,#34ceff,#40ceff,#4dcdff,#59ccff,#6cf,#74cbff,#81caff,#8fcaff,#9dc9ff,#acc8ff,#bbc7ff,#cbc7ff,#dbc6ff,#ebc5ff,#fcc4ff,#ffb9f2,#ffade3,#ffa2d5,#ff97c9,#ff8ebd,#ff85b3,#ff7ea9,#ff76a0,#ff7098,#ff6990,#ff6389,#ff5e82,#ff597c,#ff5476,#ff4f71,#ff4b6c,#ff4767,#ff4362,#ff405e,#ff3c59,#ff3955,#ff3652,#ff334e,#ff304b,#ff2d47,#ff2b44,#ff2841,#ff263e,#ff243c,#ff2239,#ff2036,#ff1e34,#ff1c32,#ff1a2f,#ff182d,#ff162b,#ff1529,#ff1327,#ff1225,#ff1024,#ff0f22,#ff0d20,#ff0c1f,#ff0b1d,#ff091b,#ff081a,#ff0719,#ff0617,#ff0516,#ff0414,#ff0313,#ff0212,#ff0111,#ff0010,#ff000e,#ff000d,#ff000c,#ff000b,#ff000a,#ff0009,#ff0008,#ff0007,#ff0006,#ff0005,#ff0005,#ff0004,#ff0003,#ff0002,#ff0001,#f00,#f00,#f00,#f00,#f00,#f00,#f00)"></i><i style="margin-left:32px;width:517px;background:linear-gradient(90deg,#00daff,#00daff,#00daff,#00d9ff,#00d9ff,#00d9ff,#00d8ff,#00d8ff,#00d8ff,#00d7ff,#00d7ff,#00d7ff,#00d6ff,#00d6ff,#00d5ff,#00d5ff,#00d5ff,#00d4ff,#00d4ff,#00d3ff,#00d3ff,#00d3ff,#00d2ff,#00d2ff,#00d1ff,#00d1ff,#00d0ff,#00d0ff,#00cfff,#00cfff,#00ceff,#00ceff,#00cdff,#0cf,#0cf,#07cbff,#12cbff,#1dcaff,#29c9ff,#34c9ff,#40c8ff,#4cc7ff,#59c7ff,#65c6ff,#72c5ff,#80c4ff,#8dc4ff,#9bc3ff,#aac2ff,#b9c1ff,#c8c0ff,#d7c0ff,#e7bfff,#f8beff,#ffb6f6,#ffaae6,#ff9fd9,#ff95cc,#ff8bc1,#ff83b6,#ff7bac,#ff74a3,#ff6d9b,#ff6793,#ff618c,#ff5c85,#ff577f,#ff5279,#ff4e73,#ff496e,#ff4569,#ff4264,#ff3e60,#ff3b5c,#ff3858,#ff3454,#ff3250,#ff2f4d,#ff2c49,#ff2a46,#ff2743,#ff2540,#ff233d,#ff213b,#ff1e38,#ff1d36,#ff1b33,#ff1931,#ff172f,#ff152d,#ff142b,#ff1229,#ff1127,#ff0f25,#ff0e23,#ff0c22,#ff0b20,#ff0a1e,#ff091d,#ff071b,#ff061a,#ff0518,#ff0417,#ff0316,#ff0214,#ff0113,#ff0012,#f01,#ff0010,#ff000f,#ff000d,#ff000c,#ff000b,#ff000a,#ff0009,#ff0008,#ff0007,#ff0007,#ff0006,#ff0005,#ff0004,#ff0003,#ff0002,#ff0001,#ff0001,#f00,#f00,#f00,#f00,#f00,#f00)"></i><i style="margin-left:33px;width:519px;background:linear-gradient(90deg,#00d6ff,#00d6ff,#00d6ff,#00d5ff,#00d5ff,#00d5ff,#00d4ff,#00d4ff,#00d3ff,#00d3ff,#00d3ff,#00d2ff,#00d2ff,#00d1ff,#00d1ff,#00d1ff,#00d0ff,#00d0ff,#00cfff,#00cfff,#00ceff,#00ceff,#00cdff,#00cdff,#0cf,#0cf,#00cbff,#00cbff,#00caff,#00c9ff,#00c9ff,#00c8ff,#00c8ff,#00c7ff,#03c6ff,#0dc6ff,#18c5ff,#23c4ff,#2fc4ff,#3ac3ff,#46c2ff,#52c1ff,#5fc1ff,#6cc0ff,#79bfff,#86beff,#94bdff,#a2bdff,#b1bcff,#bfbbff,#cfbaff,#deb9ff,#eeb8ff,#ffb7ff,#ffaaef,#ff9fe1,#ff95d4,#ff8cc7,#ff83bc,#ff7bb2,#ff74a9,#ff6da0,#ff6798,#ff6191,#ff5b8a,#ff5683,#ff517d,#ff4d77,#ff4972,#ff456c,#ff4167,#ff3d63,#ff3a5f,#ff375a,#ff3456,#ff3153,#ff2e4f,#ff2b4c,#ff2948,#ff2645,#ff2442,#ff2240,#ff203d,#ff1e3a,#ff1c38,#ff1a35,#ff1833,#ff1631,#ff142f,#ff132c,#ff112a,#ff1029,#ff0e27,#ff0d25,#ff0c23,#ff0a21,#ff0920,#ff081e,#ff071d,#ff051b,#ff041a,#ff0318,#ff0217,#ff0116,#ff0014,#ff0013,#ff0012,#f01,#ff0010,#ff000e,#ff000d,#ff000c,#ff000b,#ff000a,#ff0009,#ff0008,#ff0007,#ff0007,#ff0006,#ff0005,#ff0004,#ff0003,#ff0002,#ff0002,#ff0001,#f00,#f00,#f00,#f00,#f00,#f00)"></i><i style="margin-left:33px;width:522px;background:linear-gradient(90deg,#00d3ff,#00d2ff,#00d2ff,#00d1ff,#00d1ff,#00d1ff,#00d0ff,#00d0ff,#00cfff,#00cfff,#00cfff,#00ceff,#00ceff,#00cdff,#00cdff,#0cf,#0cf,#00cbff,#00cbff,#00caff,#00caff,#00c9ff,#00c9ff,#00c8ff,#00c8ff,#00c7ff,#00c6ff,#00c6ff,#00c5ff,#00c5ff,#00c4ff,#00c3ff,#00c3ff,#00c2ff,#04c1ff,#0ec1ff,#19c0ff,#24bfff,#2fbeff,#3bbeff,#47bdff,#53bcff,#5fbbff,#6cbaff,#79baff,#86b9ff,#93b8ff,#a1b7ff,#b0b6ff,#beb5ff,#cdb4ff,#ddb3ff,#ecb2ff,#fdb1ff,#ffa6f1,#ff9be3,#ff91d6,#ff88ca,#ff80bf,#ff78b4,#ff71ab,#ff6aa2,#ff649a,#ff5e92,#ff598b,#ff5485,#ff4f7f,#ff4b79,#ff4673,#ff426e,#ff3f69,#ff3b65,#ff3860,#ff355c,#ff3258,#ff2f54,#ff2c51,#ff2a4d,#ff274a,#ff2547,#f24,#ff2041,#ff1e3e,#ff1c3b,#ff1a39,#ff1837,#ff1734,#ff1532,#ff1330,#ff122e,#ff102c,#ff0f2a,#ff0d28,#ff0c26,#ff0a24,#ff0923,#ff0821,#ff071f,#ff061e,#ff041c,#ff031b,#ff0219,#ff0118,#ff0017,#ff0015,#ff0014,#ff0013,#ff0012,#f01,#ff000f,#ff000e,#ff000d,#ff000c,#ff000b,#ff000a,#ff0009,#ff0008,#ff0007,#ff0006,#ff0006,#ff0005,#ff0004,#ff0003,#ff0002,#ff0002,#ff0001,#f00,#f00,#f00,#f00,#f00,#f00)"></i><i style="margin-left:34px;width:523px;background:linear-gradient(90deg,#00cfff,#00ceff,#00ceff,#00cdff,#00cdff,#00cdff,#0cf,#0cf,#00cbff,#00cbff,#00caff,#00caff,#00c9ff,#00c9ff,#00c8ff,#00c8ff,#00c7ff,#00c7ff,#00c6ff,#00c6ff,#00c5ff,#00c5ff,#00c4ff,#00c3ff,#00c3ff,#00c2ff,#00c2ff,#00c1ff,#00c0ff,#00c0ff,#00bfff,#00beff,#00beff,#00bdff,#09bcff,#14bbff,#1ebbff,#29baff,#35b9ff,#40b8ff,#4cb7ff,#58b6ff,#64b6ff,#71b5ff,#7eb4ff,#8bb3ff,#99b2ff,#a7b1ff,#b5b0ff,#c3afff,#d3aeff,#e2acff,#f2abff,#ffa8fc,#ff9ded,#ff92df,#ff89d2,#ff80c6,#ff78bc,#ff71b2,#ff6aa9,#ff64a0,#ff5e98,#ff5991,#ff548a,#ff4f83,#ff4a7d,#ff4678,#ff4272,#ff3e6d,#ff3b68,#ff3764,#ff345f,#ff315b,#ff2e57,#ff2c54,#ff2950,#ff264d,#ff244a,#ff2246,#ff2044,#ff1e41,#ff1c3e,#ff1a3b,#ff1839,#ff1636,#ff1434,#ff1332,#ff1130,#ff0f2e,#ff0e2c,#ff0d2a,#ff0b28,#ff0a26,#ff0824,#ff0723,#ff0621,#ff051f,#ff041e,#ff031c,#ff021b,#ff011a,#ff0018,#ff0017,#ff0016,#ff0014,#ff0013,#ff0012,#f01,#ff0010,#ff000f,#ff000d,#ff000c,#ff000b,#ff000a,#ff0009,#ff0009,#ff0008,#ff0007,#ff0006,#ff0005,#ff0004,#ff0003,#ff0003,#ff0002,#ff0001,#f00,#f00,#f00,#f00,#f00,#f00)"></i><i style="margin-left:34px;width:526px;background:linear-gradient(90deg,#00cbff,#00cbff,#00caff,#00caff,#00c9ff,#00c9ff,#00c8ff,#00c8ff,#00c7ff,#00c7ff,#00c6ff,#00c6ff,#00c5ff,#00c5ff,#00c4ff,#00c4ff,#00c3ff,#00c3ff,#00c2ff,#00c1ff,#00c1ff,#00c0ff,#00c0ff,#00bfff,#00beff,#00beff,#00bdff,#00bcff,#00bcff,#0bf,#00baff,#00baff,#00b9ff,#00b8ff,#0ab7ff,#15b6ff,#1fb6ff,#2ab5ff,#35b4ff,#41b3ff,#4cb2ff,#58b1ff,#64b0ff,#71afff,#7eaeff,#8badff,#98acff,#a6abff,#b4aaff,#c2a9ff,#d1a8ff,#e0a7ff,#f0a6ff,#ffa4fe,#ff99ef,#ff8fe1,#ff85d4,#ff7dc8,#ff75be,#ff6eb4,#ff67ab,#ff61a2,#ff5c9a,#ff5693,#ff518c,#ff4c85,#ff487f,#ff4479,#ff4074,#ff3c6f,#ff396a,#ff3665,#ff3261,#ff2f5d,#ff2d59,#ff2a55,#ff2752,#ff254e,#ff224b,#ff2048,#ff1e45,#ff1c42,#ff1a3f,#ff183d,#ff163a,#ff1538,#ff1335,#f13,#ff1031,#ff0e2f,#ff0d2d,#ff0b2b,#ff0a29,#ff0927,#ff0725,#ff0624,#ff0522,#ff0420,#ff031f,#ff021d,#ff011c,#ff001b,#ff0019,#ff0018,#ff0017,#ff0015,#ff0014,#ff0013,#ff0012,#f01,#ff000f,#ff000e,#ff000d,#ff000c,#ff000b,#ff000a,#ff0009,#ff0008,#ff0008,#ff0007,#ff0006,#ff0005,#ff0004,#ff0003,#ff0003,#ff0002,#ff0001,#f00,#f00,#f00,#f00,#f00,#f00)"></i><i style="margin-left:35px;width:527px;background:linear-gradient(90deg,#00c7ff,#00c7ff,#00c6ff,#00c6ff,#00c5ff,#00c5ff,#00c4ff,#00c4ff,#00c3ff,#00c3ff,#00c2ff,#00c2ff,#00c1ff,#00c1ff,#00c0ff,#00bfff,#00bfff,#00beff,#00beff,#00bdff,#00bcff,#00bcff,#0bf,#00baff,#00baff,#00b9ff,#00b8ff,#00b8ff,#00b7ff,#00b6ff,#00b5ff,#00b5ff,#00b4ff,#05b3ff,#0fb2ff,#1ab1ff,#24b0ff,#2fafff,#3aafff,#46aeff,#51adff,#5dacff,#69abff,#76aaff,#83a9ff,#90a8ff,#9da6ff,#aba5ff,#b9a4ff,#c7a3ff,#d6a2ff,#e5a1ff,#f59fff,#ff9af9,#ff90ea,#ff86dd,#ff7ed1,#ff76c5,#ff6ebb,#ff68b1,#ff61a8,#ff5ca0,#ff5698,#ff5191,#ff4c8a,#ff4884,#ff447e,#ff4078,#ff3c73,#ff386e,#ff3569,#ff3265,#ff2f60,#ff2c5c,#ff2958,#ff2755,#ff2451,#ff224e,#ff204b,#ff1d48,#ff1b45,#ff1942,#ff183f,#ff163d,#ff143a,#ff1238,#ff1135,#ff0f33,#ff0e31,#ff0c2f,#ff0b2d,#ff092b,#ff0829,#ff0727,#ff0525,#ff0424,#ff0322,#ff0221,#ff011f,#ff001e,#ff001c,#ff001b,#ff0019,#ff0018,#ff0017,#ff0015,#ff0014,#ff0013,#ff0012,#f01,#ff0010,#ff000f,#ff000e,#ff000d,#ff000c,#ff000b,#ff000a,#ff0009,#ff0008,#ff0007,#ff0006,#ff0005,#ff0004,#ff0004,#ff0003,#ff0002,#ff0001,#ff0001,#f00,#f00,#f00,#f00,#f00)"></i><i style="margin-left:36px;width:529px;background:linear-gradient(90deg,#00c3ff,#00c3ff,#00c2ff,#00c2ff,#00c1ff,#00c1ff,#00c0ff,#00c0ff,#00bfff,#00bfff,#00beff,#00beff,#00bdff,#00bcff,#00bcff,#0bf,#0bf,#00baff,#00b9ff,#00b9ff,#00b8ff,#00b7ff,#00b7ff,#00b6ff,#00b5ff,#00b4ff,#00b4ff,#00b3ff,#00b2ff,#00b1ff,#00b1ff,#00b0ff,#00afff,#08aeff,#12adff,#1cacff,#27abff,#32aaff,#3da9ff,#48a9ff,#54a8ff,#5fa6ff,#6ca5ff,#78a4ff,#85a3ff,#92a2ff,#9fa1ff,#aca0ff,#ba9fff,#c99dff,#d79cff,#e69bff,#f699ff,#ff94f9,#ff8aea,#ff81dd,#ff79d1,#ff71c6,#ff6abb,#ff64b2,#ff5ea9,#ff58a1,#ff5399,#ff4e92,#ff498b,#ff4585,#ff417f,#ff3d79,#ff3974,#ff366f,#ff336a,#ff3066,#ff2d61,#ff2a5d,#ff275a,#ff2556,#ff2252,#ff204f,#ff1e4c,#ff1c49,#ff1a46,#ff1843,#ff1640,#ff143e,#ff123b,#ff1139,#ff0f36,#ff0e34,#ff0c32,#ff0b30,#ff092e,#ff082c,#ff072a,#ff0528,#ff0426,#ff0325,#ff0223,#ff0122,#ff0020,#ff001e,#ff001d,#ff001c,#ff001a,#ff0019,#ff0018,#ff0016,#ff0015,#ff0014,#ff0013,#ff0012,#f01,#ff000f,#ff000e,#ff000d,#ff000c,#ff000b,#ff000a,#ff000a,#ff0009,#ff0008,#ff0007,#ff0006,#ff0005,#ff0004,#ff0004,#ff0003,#ff0002,#ff0001,#ff0001,#f00,#f00,#f00,#f00,#f00)"></i><i style="margin-left:36px;width:532px;background:linear-gradient(90deg,#00c0ff,#00bfff,#00bfff,#00beff,#00beff,#00bdff,#00bdff,#00bcff,#0bf,#0bf,#00baff,#00baff,#00b9ff,#00b8ff,#00b8ff,#00b7ff,#00b6ff,#00b6ff,#00b5ff,#00b4ff,#00b4ff,#00b3ff,#00b2ff,#00b2ff,#00b1ff,#00b0ff,#00afff,#00aeff,#00aeff,#00adff,#00acff,#00abff,#02aaff,#0ca9ff,#16a8ff,#20a7ff,#2ba6ff,#36a5ff,#41a4ff,#4ca3ff,#57a2ff,#63a1ff,#6fa0ff,#7c9fff,#889eff,#959dff,#a39bff,#b09aff,#be99ff,#cd98ff,#db96ff,#ea95ff,#fa93ff,#ff8cf5,#ff83e7,#ff7ada,#ff72ce,#ff6bc3,#ff64b9,#ff5eb0,#ff58a7,#ff539f,#ff4e97,#ff4990,#ff458a,#ff4184,#ff3d7e,#ff3978,#ff3573,#ff326e,#ff2f69,#ff2c65,#ff2961,#ff275d,#ff2459,#f25,#ff1f52,#ff1d4e,#ff1b4b,#ff1948,#ff1745,#ff1543,#ff1340,#ff123d,#ff103b,#ff0e38,#ff0d36,#ff0b34,#ff0a32,#ff0930,#ff072e,#ff062c,#ff052a,#ff0328,#ff0226,#ff0125,#ff0023,#ff0021,#ff0020,#ff001e,#ff001d,#ff001c,#ff001a,#ff0019,#ff0018,#ff0016,#ff0015,#ff0014,#ff0013,#ff0012,#f01,#ff000f,#ff000e,#ff000d,#ff000c,#ff000b,#ff000a,#ff000a,#ff0009,#ff0008,#ff0007,#ff0006,#ff0005,#ff0004,#ff0004,#ff0003,#ff0002,#ff0001,#ff0001,#f00,#f00,#f00,#f00,#f00)"></i><i style="margin-left:37px;width:533px;background:linear-gradient(90deg,#00bcff,#00bcff,#0bf,#00baff,#00baff,#00b9ff,#00b9ff,#00b8ff,#00b8ff,#00b7ff,#00b6ff,#00b6ff,#00b5ff,#00b4ff,#00b4ff,#00b3ff,#00b2ff,#00b2ff,#00b1ff,#00b0ff,#00b0ff,#00afff,#00aeff,#00adff,#00acff,#00acff,#00abff,#0af,#00a9ff,#00a8ff,#00a7ff,#00a6ff,#04a6ff,#0ea5ff,#18a4ff,#22a3ff,#2da2ff,#37a1ff,#42a0ff,#4e9eff,#599dff,#659cff,#719bff,#7d9aff,#8999ff,#9698ff,#a396ff,#b195ff,#be94ff,#cc92ff,#db91ff,#ea90ff,#f98eff,#ff88f6,#ff7fe8,#ff76db,#ff6fcf,#ff67c5,#ff61bb,#ff5bb1,#ff55a9,#ff50a1,#ff4b99,#ff4792,#ff428b,#ff3e85,#ff3a7f,#ff377a,#ff3375,#ff3070,#ff2d6b,#ff2a67,#ff2862,#ff255e,#ff225a,#ff2057,#ff1e53,#ff1c50,#ff194d,#ff184a,#ff1647,#ff1444,#ff1241,#ff103f,#ff0f3c,#ff0d3a,#ff0c37,#ff0a35,#ff0933,#ff0731,#ff062f,#ff052d,#ff042b,#ff0229,#ff0128,#ff0026,#ff0024,#ff0023,#ff0021,#ff0020,#ff001e,#ff001d,#ff001b,#ff001a,#ff0019,#ff0017,#ff0016,#ff0015,#ff0014,#ff0013,#ff0012,#f01,#ff000f,#ff000e,#ff000d,#ff000c,#ff000b,#ff000b,#ff000a,#ff0009,#ff0008,#ff0007,#ff0006,#ff0005,#ff0005,#ff0004,#ff0003,#ff0002,#ff0002,#ff0001,#f00,#f00,#f00,#f00,#f00)"></i><i style="margin-left:37px;width:536px;background:linear-gradient(90deg,#00b9ff,#00b8ff,#00b7ff,#00b7ff,#00b6ff,#00b6ff,#00b5ff,#00b4ff,#00b4ff,#00b3ff,#00b3ff,#00b2ff,#00b1ff,#00b0ff,#00b0ff,#00afff,#00aeff,#00aeff,#00adff,#00acff,#00abff,#00abff,#0af,#00a9ff,#00a8ff,#00a7ff,#00a6ff,#00a6ff,#00a5ff,#00a4ff,#00a3ff,#00a2ff,#08a1ff,#11a0ff,#1c9fff,#269eff,#309dff,#3b9cff,#469bff,#5199ff,#5d98ff,#6897ff,#7496ff,#8195ff,#8d93ff,#9a92ff,#a791ff,#b490ff,#c28eff,#d08dff,#df8bff,#ee8aff,#fd88ff,#ff80f2,#ff77e5,#ff6fd8,#ff68cd,#ff61c2,#ff5bb8,#ff55af,#ff50a7,#ff4b9f,#ff4698,#ff4291,#ff3e8a,#ff3a84,#ff367e,#ff3379,#ff3074,#ff2d6f,#ff2a6a,#ff2766,#ff2462,#ff225e,#ff1f5a,#ff1d56,#ff1b53,#ff194f,#ff174c,#ff1549,#ff1346,#f14,#ff1041,#ff0e3e,#ff0c3c,#ff0b3a,#ff0937,#ff0835,#ff0733,#ff0531,#ff042f,#ff032d,#ff022b,#ff0129,#ff0027,#ff0026,#ff0024,#ff0023,#ff0021,#ff0020,#ff001e,#ff001d,#ff001b,#ff001a,#ff0019,#ff0017,#ff0016,#ff0015,#ff0014,#ff0013,#ff0012,#f01,#ff000f,#ff000e,#ff000d,#ff000c,#ff000c,#ff000b,#ff000a,#ff0009,#ff0008,#ff0007,#ff0006,#ff0005,#ff0005,#ff0004,#ff0003,#ff0002,#ff0002,#ff0001,#f00,#f00,#f00,#f00,#f00)"></i><i style="margin-left:38px;width:536px;background:linear-gradient(90deg,#00b5ff,#00b4ff,#00b4ff,#00b3ff,#00b3ff,#00b2ff,#00b1ff,#00b1ff,#00b0ff,#00afff,#00afff,#00aeff,#00adff,#00adff,#00acff,#00abff,#0af,#0af,#00a9ff,#00a8ff,#00a7ff,#00a6ff,#00a6ff,#00a5ff,#00a4ff,#00a3ff,#00a2ff,#00a1ff,#00a0ff,#009fff,#009eff,#029dff,#0c9cff,#169bff,#209aff,#2a99ff,#3498ff,#3f97ff,#4a96ff,#5595ff,#6193ff,#6c92ff,#7891ff,#8490ff,#918eff,#9e8dff,#ab8cff,#b88aff,#c689ff,#d487ff,#e286ff,#f184ff,#ff82fe,#ff79ef,#ff71e2,#ff69d6,#ff62cb,#ff5cc0,#ff56b7,#ff51ae,#ff4ca6,#ff479e,#ff4297,#ff3e90,#ff3a89,#ff3683,#ff337e,#ff3078,#ff2c73,#ff2a6f,#ff276a,#ff2466,#ff2162,#ff1f5e,#ff1d5a,#ff1b56,#ff1853,#ff1650,#ff144c,#ff1349,#ff1147,#ff0f44,#ff0d41,#ff0c3f,#ff0a3c,#ff093a,#ff0837,#ff0635,#ff0533,#ff0431,#ff022f,#ff012d,#ff002b,#ff002a,#ff0028,#ff0026,#ff0025,#ff0023,#ff0021,#ff0020,#ff001e,#ff001d,#ff001c,#ff001a,#ff0019,#ff0018,#ff0017,#ff0015,#ff0014,#ff0013,#ff0012,#f01,#ff0010,#ff000f,#ff000e,#ff000d,#ff000c,#ff000b,#ff000a,#ff0009,#ff0008,#ff0007,#ff0007,#ff0006,#ff0005,#ff0004,#ff0003,#ff0003,#ff0002,#ff0001,#ff0001,#f00,#f00,#f00,#f00)"></i><i style="margin-left:39px;width:531px;background:linear-gradient(90deg,#00b1ff,#00b1ff,#00b0ff,#00afff,#00afff,#00aeff,#00aeff,#00adff,#00acff,#00abff,#00abff,#0af,#00a9ff,#00a9ff,#00a8ff,#00a7ff,#00a6ff,#00a5ff,#00a5ff,#00a4ff,#00a3ff,#00a2ff,#00a1ff,#00a0ff,#00a0ff,#009fff,#009eff,#009dff,#009cff,#009bff,#009aff,#0699ff,#0f98ff,#1997ff,#2396ff,#2d94ff,#3893ff,#4292ff,#4d91ff,#5890ff,#648eff,#6f8dff,#7b8cff,#878bff,#9489ff,#a088ff,#ad86ff,#ba85ff,#c883ff,#d682ff,#e480ff,#f37fff,#ff7cfc,#ff73ee,#ff6be1,#ff64d5,#ff5eca,#ff57c0,#ff52b6,#ff4dae,#ff48a5,#ff439e,#ff3f97,#ff3b90,#ff378a,#ff3384,#ff307e,#ff2d79,#ff2a74,#ff276f,#ff246a,#f26,#ff1f62,#ff1d5e,#ff1a5a,#ff1857,#ff1653,#ff1450,#ff124d,#ff114a,#ff0f47,#ff0d44,#ff0c42,#ff0a3f,#ff093d,#ff073a,#ff0638,#ff0536,#ff0334,#ff0232,#ff0130,#ff002e,#ff002c,#ff002a,#ff0028,#ff0027,#ff0025,#ff0024,#f02,#ff0021,#ff001f,#ff001e,#ff001c,#ff001b,#ff001a,#ff0018,#ff0017,#ff0016,#ff0015,#ff0014,#ff0013,#ff0012,#ff0010,#ff000f,#ff000e,#ff000d,#ff000d,#ff000c,#ff000b,#ff000a,#ff0009,#ff0008,#ff0007,#ff0006,#ff0006,#ff0005,#ff0004,#ff0003,#ff0003,#ff0002,#ff0001,#f00,#f00,#f00)"></i><i style="margin-left:39px;width:526px;background:linear-gradient(90deg,#00aeff,#00adff,#00adff,#00acff,#00abff,#00abff,#0af,#00a9ff,#00a9ff,#00a8ff,#00a7ff,#00a6ff,#00a6ff,#00a5ff,#00a4ff,#00a3ff,#00a3ff,#00a2ff,#00a1ff,#00a0ff,#009fff,#009eff,#009dff,#009cff,#009cff,#009bff,#009aff,#09f,#0098ff,#0097ff,#0096ff,#0795ff,#1093ff,#1a92ff,#2491ff,#2e90ff,#388fff,#438eff,#4d8cff,#588bff,#648aff,#6f89ff,#7b87ff,#8786ff,#9385ff,#a083ff,#ac82ff,#ba80ff,#c77fff,#d57dff,#e37cff,#f17aff,#ff78fe,#ff6ff0,#ff68e3,#ff61d7,#ff5acc,#ff54c2,#ff4fb8,#ff4aaf,#ff45a7,#ff40a0,#ff3c98,#ff3892,#ff358b,#ff3185,#ff2e80,#ff2b7a,#ff2875,#ff2570,#ff226c,#ff2068,#ff1d63,#ff1b60,#ff195c,#ff1758,#ff1555,#ff1352,#ff114e,#ff0f4b,#ff0e48,#ff0c46,#ff0a43,#ff0940,#ff073e,#ff063c,#ff0539,#ff0337,#ff0235,#ff0133,#ff0031,#ff002f,#ff002d,#ff002b,#ff002a,#ff0028,#ff0026,#ff0025,#ff0023,#f02,#ff0020,#ff001f,#ff001d,#ff001c,#ff001b,#ff0019,#ff0018,#ff0017,#ff0016,#ff0015,#ff0014,#ff0012,#f01,#ff0010,#ff000f,#ff000e,#ff000d,#ff000c,#ff000b,#ff000b,#ff000a,#ff0009,#ff0008,#ff0007,#ff0006,#ff0006,#ff0005,#ff0004,#ff0003,#ff0003,#ff0002,#ff0001,#ff0001)"></i><i style="margin-left:40px;width:519px;background:linear-gradient(90deg,#0af,#0af,#00a9ff,#00a8ff,#00a8ff,#00a7ff,#00a6ff,#00a6ff,#00a5ff,#00a4ff,#00a3ff,#00a3ff,#00a2ff,#00a1ff,#00a0ff,#009fff,#009fff,#009eff,#009dff,#009cff,#009bff,#009aff,#09f,#0098ff,#0097ff,#0096ff,#0095ff,#0094ff,#0093ff,#0092ff,#0291ff,#0b90ff,#158fff,#1e8eff,#288dff,#328bff,#3d8aff,#4789ff,#5288ff,#5d86ff,#6885ff,#7484ff,#8082ff,#8c81ff,#987fff,#a47eff,#b17dff,#be7bff,#cc79ff,#d978ff,#e776ff,#f674ff,#ff70f9,#ff68ec,#ff61df,#ff5bd4,#ff55c9,#ff4fbf,#ff4ab6,#ff45ad,#ff40a5,#ff3c9e,#ff3897,#ff3490,#ff318a,#ff2d84,#ff2a7f,#ff2779,#ff2474,#ff2270,#ff1f6b,#ff1d67,#ff1a63,#ff185f,#ff165b,#ff1458,#ff1254,#ff1051,#ff0e4e,#ff0d4b,#ff0b48,#ff0a45,#ff0843,#ff0740,#ff053e,#ff043b,#ff0339,#ff0137,#ff0035,#f03,#ff0031,#ff002f,#ff002d,#ff002b,#ff002a,#ff0028,#ff0026,#ff0025,#ff0023,#f02,#ff0020,#ff001f,#ff001d,#ff001c,#ff001b,#ff001a,#ff0018,#ff0017,#ff0016,#ff0015,#ff0014,#ff0013,#ff0012,#ff0010,#ff000f,#ff000f,#ff000e,#ff000d,#ff000c,#ff000b,#ff000a,#ff0009,#ff0008,#ff0007,#ff0007,#ff0006,#ff0005,#ff0004,#ff0004,#ff0003,#ff0002)"></i><i style="margin-left:41px;width:513px;background:linear-gradient(90deg,#00a7ff,#00a6ff,#00a6ff,#00a5ff,#00a4ff,#00a3ff,#00a3ff,#00a2ff,#00a1ff,#00a0ff,#00a0ff,#009fff,#009eff,#009dff,#009cff,#009cff,#009bff,#009aff,#09f,#0098ff,#0097ff,#0096ff,#0095ff,#0094ff,#0093ff,#0092ff,#0091ff,#0090ff,#008fff,#008eff,#058dff,#0e8cff,#178bff,#2189ff,#2b88ff,#3587ff,#3f86ff,#4a84ff,#5483ff,#5f82ff,#6a81ff,#767fff,#817eff,#8d7cff,#997bff,#a679ff,#b278ff,#bf76ff,#cd75ff,#da73ff,#e871ff,#f66fff,#ff6bf9,#ff64ec,#ff5ddf,#ff57d4,#ff51c9,#ff4bc0,#ff46b6,#ff41ae,#ff3da6,#ff399f,#ff3598,#ff3191,#ff2e8b,#ff2b85,#ff2880,#ff257a,#ff2275,#ff1f71,#ff1d6c,#ff1b68,#ff1864,#ff1660,#ff145c,#ff1259,#ff1055,#ff0f52,#ff0d4f,#ff0b4c,#ff0a49,#ff0847,#ff0744,#ff0541,#ff043f,#ff033d,#ff013a,#ff0038,#ff0036,#ff0034,#ff0032,#ff0030,#ff002e,#ff002c,#ff002b,#ff0029,#ff0027,#ff0026,#ff0024,#ff0023,#ff0021,#ff0020,#ff001e,#ff001d,#ff001c,#ff001a,#ff0019,#ff0018,#ff0017,#ff0016,#ff0015,#ff0013,#ff0012,#f01,#ff0010,#ff000f,#ff000e,#ff000d,#ff000c,#ff000c,#ff000b,#ff000a,#ff0009,#ff0008,#ff0007,#ff0007,#ff0006,#ff0005,#ff0004,#ff0004)"></i><i style="margin-left:41px;width:507px;background:linear-gradient(90deg,#00a4ff,#00a3ff,#00a2ff,#00a1ff,#00a1ff,#00a0ff,#009fff,#009eff,#009eff,#009dff,#009cff,#009bff,#009aff,#009aff,#09f,#0098ff,#0097ff,#0096ff,#0095ff,#0094ff,#0093ff,#0092ff,#0091ff,#0090ff,#008fff,#008eff,#008dff,#008cff,#008bff,#008aff,#0789ff,#18f,#1a86ff,#2485ff,#2e84ff,#3883ff,#4281ff,#4c80ff,#577fff,#627dff,#6d7cff,#787bff,#8479ff,#9078ff,#9c76ff,#a874ff,#b573ff,#c271ff,#cf70ff,#dd6eff,#eb6cff,#f96aff,#ff65f7,#ff5eea,#ff58de,#ff51d2,#ff4cc8,#ff47be,#ff42b5,#ff3dad,#ff39a5,#ff359e,#ff3197,#ff2e90,#ff2b8a,#ff2785,#ff257f,#ff227a,#ff1f75,#ff1d70,#ff1a6c,#ff1868,#ff1664,#ff1460,#ff125c,#ff1059,#ff0e55,#ff0c52,#ff0b4f,#ff094c,#ff0749,#ff0647,#ff0544,#ff0341,#ff023f,#ff013d,#ff003a,#ff0038,#ff0036,#ff0034,#ff0032,#ff0030,#ff002e,#ff002c,#ff002b,#ff0029,#ff0027,#ff0026,#ff0024,#ff0023,#ff0021,#ff0020,#ff001e,#ff001d,#ff001c,#ff001b,#ff0019,#ff0018,#ff0017,#ff0016,#ff0015,#ff0014,#ff0013,#ff0012,#f01,#ff0010,#ff000f,#ff000e,#ff000d,#ff000c,#ff000b,#ff000a,#ff0009,#ff0008,#ff0008,#ff0007,#ff0006,#ff0005)"></i><i style="margin-left:42px;width:500px;background:linear-gradient(90deg,#00a0ff,#009fff,#009fff,#009eff,#009dff,#009cff,#009cff,#009bff,#009aff,#09f,#0098ff,#0098ff,#0097ff,#0096ff,#0095ff,#0094ff,#0093ff,#0092ff,#0091ff,#0090ff,#008fff,#008eff,#008dff,#008cff,#008bff,#008aff,#0089ff,#08f,#0087ff,#0386ff,#0c84ff,#1583ff,#1f82ff,#2881ff,#327fff,#3c7eff,#467dff,#517bff,#5b7aff,#6679ff,#7277ff,#7d76ff,#8874ff,#9473ff,#a071ff,#ad70ff,#ba6eff,#c66cff,#d46aff,#e169ff,#ef67ff,#fd65ff,#ff5ef3,#ff58e6,#ff51da,#ff4ccf,#ff46c5,#ff42bc,#ff3db3,#ff39ab,#ff35a3,#ff319c,#ff2d95,#ff2a8f,#ff2789,#ff2483,#ff217e,#ff1e79,#ff1c74,#ff1a6f,#ff176b,#ff1567,#ff1363,#ff115f,#ff0f5c,#ff0d58,#ff0c55,#ff0a52,#ff084f,#ff074c,#ff0549,#ff0446,#ff0244,#ff0141,#ff003f,#ff003c,#ff003a,#ff0038,#ff0036,#ff0034,#ff0032,#ff0030,#ff002e,#ff002c,#ff002b,#ff0029,#ff0027,#ff0026,#ff0024,#ff0023,#ff0021,#ff0020,#ff001f,#ff001d,#ff001c,#ff001b,#ff0019,#ff0018,#ff0017,#ff0016,#ff0015,#ff0014,#ff0013,#ff0012,#f01,#ff0010,#ff000f,#ff000e,#ff000d,#ff000c,#ff000b,#ff000a,#ff0009,#ff0009,#ff0008,#ff0007)"></i><i style="margin-left:42px;width:495px;background:linear-gradient(90deg,#009dff,#009cff,#009bff,#009bff,#009aff,#09f,#0098ff,#0098ff,#0097ff,#0096ff,#0095ff,#0094ff,#0093ff,#0092ff,#0091ff,#0091ff,#0090ff,#008fff,#008eff,#008dff,#008cff,#008bff,#008aff,#0089ff,#0087ff,#0086ff,#0085ff,#0084ff,#0083ff,#0482ff,#0d81ff,#167fff,#1f7eff,#297dff,#337bff,#3d7aff,#4779ff,#5177ff,#5c76ff,#6675ff,#7173ff,#7d72ff,#8870ff,#946fff,#a06dff,#ac6bff,#b96aff,#c568ff,#d266ff,#e064ff,#ed63ff,#fc61ff,#ff5bf5,#ff54e8,#ff4edc,#ff49d1,#ff44c7,#ff3fbe,#ff3ab5,#ff36ad,#ff32a5,#ff2f9e,#ff2b97,#ff2891,#ff258b,#ff2285,#ff1f80,#ff1d7a,#ff1a76,#ff1871,#ff156d,#ff1368,#ff1164,#ff0f61,#ff0d5d,#ff0c5a,#ff0a56,#ff0853,#ff0750,#ff054d,#ff044a,#ff0248,#ff0145,#ff0042,#ff0040,#ff003e,#ff003b,#ff0039,#ff0037,#ff0035,#f03,#ff0031,#ff002f,#ff002d,#ff002c,#ff002a,#ff0028,#ff0027,#ff0025,#ff0024,#f02,#ff0021,#ff0020,#ff001e,#ff001d,#ff001c,#ff001a,#ff0019,#ff0018,#ff0017,#ff0016,#ff0015,#ff0014,#ff0013,#ff0012,#f01,#ff0010,#ff000f,#ff000e,#ff000d,#ff000c,#ff000b,#ff000a,#ff0009,#ff0009)"></i><i style="margin-left:43px;width:488px;background:linear-gradient(90deg,#009aff,#09f,#0098ff,#0097ff,#0096ff,#0096ff,#0095ff,#0094ff,#0093ff,#0092ff,#0091ff,#0090ff,#0090ff,#008fff,#008eff,#008dff,#008cff,#008bff,#008aff,#0089ff,#08f,#0087ff,#0086ff,#0085ff,#0083ff,#0082ff,#0081ff,#0080ff,#007fff,#087eff,#117cff,#1a7bff,#247aff,#2d78ff,#3777ff,#4176ff,#4b74ff,#5673ff,#6071ff,#6b70ff,#766eff,#816dff,#8d6bff,#986aff,#a468ff,#b166ff,#bd65ff,#ca63ff,#d761ff,#e45fff,#f25dff,#ff5bfe,#ff54f0,#ff4ee4,#ff49d9,#ff43ce,#ff3ec4,#ff3abb,#ff36b3,#ff32ab,#ff2ea3,#ff2a9c,#ff2795,#ff248f,#ff2189,#ff1e84,#ff1c7e,#ff1979,#ff1775,#ff1570,#ff136c,#ff1168,#ff0f64,#ff0d60,#ff0b5d,#ff0959,#ff0856,#ff0653,#ff0550,#ff034d,#ff024a,#ff0047,#ff0045,#ff0042,#ff0040,#ff003d,#ff003b,#ff0039,#ff0037,#ff0035,#f03,#ff0031,#ff002f,#ff002d,#ff002c,#ff002a,#ff0028,#ff0027,#ff0025,#ff0024,#f02,#ff0021,#ff0020,#ff001e,#ff001d,#ff001c,#ff001a,#ff0019,#ff0018,#ff0017,#ff0016,#ff0015,#ff0014,#ff0013,#ff0012,#f01,#ff0010,#ff000f,#ff000e,#ff000d,#ff000c,#ff000b,#ff000a)"></i><i style="margin-left:44px;width:482px;background:linear-gradient(90deg,#0096ff,#0095ff,#0095ff,#0094ff,#0093ff,#0092ff,#0091ff,#0091ff,#0090ff,#008fff,#008eff,#008dff,#008cff,#008bff,#008aff,#0089ff,#08f,#0087ff,#0086ff,#0085ff,#0084ff,#0083ff,#0082ff,#0081ff,#0080ff,#007eff,#007dff,#007cff,#027bff,#0b7aff,#1478ff,#1d77ff,#2676ff,#3074ff,#3973ff,#4372ff,#4d70ff,#586fff,#626dff,#6d6cff,#786aff,#8369ff,#8e67ff,#9a65ff,#a664ff,#b262ff,#be60ff,#cb5fff,#d85dff,#e55bff,#f259ff,#ff57fe,#ff50f1,#ff4ae4,#ff45d9,#ff40ce,#ff3bc5,#ff37bc,#ff33b3,#ff2fab,#ff2ba4,#ff289d,#ff2596,#ff2290,#ff1f8a,#ff1c85,#ff1a7f,#ff177a,#ff1576,#ff1371,#ff116d,#ff0f69,#ff0d65,#ff0b61,#ff095e,#ff085a,#ff0657,#ff0454,#ff0351,#ff024e,#ff004b,#ff0048,#ff0046,#ff0043,#ff0041,#ff003e,#ff003c,#ff003a,#ff0038,#ff0036,#ff0034,#ff0032,#ff0030,#ff002e,#ff002d,#ff002b,#ff0029,#ff0028,#ff0026,#ff0025,#ff0023,#f02,#ff0021,#ff001f,#ff001e,#ff001d,#ff001b,#ff001a,#ff0019,#ff0018,#ff0017,#ff0016,#ff0015,#ff0013,#ff0012,#f01,#f01,#ff0010,#ff000f,#ff000e,#ff000d,#ff000c)"></i><i style="margin-left:44px;width:476px;background:linear-gradient(90deg,#0093ff,#0092ff,#0092ff,#0091ff,#0090ff,#008fff,#008eff,#008dff,#008cff,#008bff,#008bff,#008aff,#0089ff,#08f,#0087ff,#0086ff,#0085ff,#0084ff,#0083ff,#0081ff,#0080ff,#007fff,#007eff,#007dff,#007cff,#007bff,#0079ff,#0078ff,#0577ff,#0d76ff,#1674ff,#1f73ff,#2972ff,#3270ff,#3c6fff,#466eff,#506cff,#5a6bff,#6569ff,#6f68ff,#7a66ff,#8564ff,#9163ff,#9c61ff,#a85fff,#b45eff,#c15cff,#cd5aff,#da58ff,#e756ff,#f554ff,#ff51fb,#ff4bee,#ff45e2,#ff40d7,#ff3bcd,#ff37c3,#ff33ba,#ff2fb2,#ff2baa,#ff28a3,#ff249c,#ff2196,#ff1e8f,#ff1c8a,#ff1984,#ff177f,#ff147a,#ff1275,#ff1071,#ff0e6d,#ff0c68,#ff0a65,#ff0961,#ff075d,#ff055a,#ff0457,#ff0254,#ff0151,#ff004e,#ff004b,#ff0048,#ff0046,#ff0043,#ff0041,#ff003e,#ff003c,#ff003a,#ff0038,#ff0036,#ff0034,#ff0032,#ff0030,#ff002e,#ff002d,#ff002b,#ff0029,#ff0028,#ff0026,#ff0025,#ff0023,#f02,#ff0021,#ff001f,#ff001e,#ff001d,#ff001b,#ff001a,#ff0019,#ff0018,#ff0017,#ff0016,#ff0015,#ff0014,#ff0013,#ff0012,#f01,#ff0010,#ff000f,#ff000e)"></i><i style="margin-left:45px;width:469px;background:linear-gradient(90deg,#0090ff,#008fff,#008eff,#008dff,#008cff,#008cff,#008bff,#008aff,#0089ff,#08f,#0087ff,#0086ff,#0085ff,#0084ff,#0083ff,#0082ff,#0081ff,#0080ff,#007fff,#007eff,#007dff,#007cff,#007bff,#0079ff,#0078ff,#07f,#0076ff,#0075ff,#0773ff,#0f72ff,#1871ff,#216fff,#2b6eff,#346dff,#3d6bff,#476aff,#5168ff,#5b67ff,#6665ff,#7064ff,#7b62ff,#8660ff,#915fff,#9c5dff,#a85bff,#b45aff,#c058ff,#cd56ff,#d954ff,#e652ff,#f450ff,#ff4dfd,#ff48f0,#ff42e4,#ff3dd9,#ff38cf,#ff34c5,#ff30bc,#ff2cb4,#ff29ac,#ff25a5,#ff229e,#ff1f97,#ff1c91,#ff1a8b,#ff1786,#ff1581,#ff137c,#ff1077,#ff0e72,#ff0c6e,#ff0b6a,#ff0966,#ff0763,#ff065f,#ff045c,#ff0258,#ff0155,#ff0052,#ff004f,#ff004c,#ff004a,#ff0047,#ff0045,#ff0042,#ff0040,#ff003e,#ff003b,#ff0039,#ff0037,#ff0035,#f03,#ff0032,#ff0030,#ff002e,#ff002c,#ff002b,#ff0029,#ff0028,#ff0026,#ff0025,#ff0023,#f02,#ff0020,#ff001f,#ff001e,#ff001d,#ff001b,#ff001a,#ff0019,#ff0018,#ff0017,#ff0016,#ff0015,#ff0014,#ff0013,#ff0012,#f01,#ff0010)"></i><i style="margin-left:46px;width:463px;background:linear-gradient(90deg,#008dff,#008cff,#008bff,#008aff,#0089ff,#08f,#0087ff,#0086ff,#0085ff,#0085ff,#0084ff,#0083ff,#0082ff,#0081ff,#0080ff,#007eff,#007dff,#007cff,#007bff,#007aff,#0079ff,#0078ff,#07f,#0075ff,#0074ff,#0073ff,#0072ff,#0370ff,#0b6fff,#146eff,#1d6cff,#266bff,#2f6aff,#3968ff,#4267ff,#4c65ff,#5664ff,#6062ff,#6b61ff,#755fff,#805dff,#8b5cff,#965aff,#a258ff,#ae57ff,#ba55ff,#c653ff,#d251ff,#df4fff,#ec4dff,#fa4bff,#ff47f7,#ff41eb,#ff3cdf,#ff37d4,#ff33cb,#ff2fc1,#ff2bb9,#ff28b1,#ff24a9,#ff21a2,#ff1e9b,#ff1b95,#ff198f,#ff1689,#ff1484,#ff117f,#ff0f7a,#ff0d75,#ff0b71,#ff096d,#ff0869,#ff0665,#ff0461,#ff035e,#ff015a,#ff0057,#ff0054,#ff0051,#ff004e,#ff004c,#ff0049,#ff0046,#f04,#ff0042,#ff003f,#ff003d,#ff003b,#ff0039,#ff0037,#ff0035,#f03,#ff0031,#ff002f,#ff002e,#ff002c,#ff002a,#ff0029,#ff0027,#ff0026,#ff0024,#ff0023,#f02,#ff0020,#ff001f,#ff001e,#ff001c,#ff001b,#ff001a,#ff0019,#ff0018,#ff0017,#ff0016,#ff0015,#ff0014,#ff0013,#ff0012)"></i><i style="margin-left:46px;width:457px;background:linear-gradient(90deg,#008aff,#0089ff,#08f,#0087ff,#0086ff,#0085ff,#0084ff,#0083ff,#0082ff,#0081ff,#0080ff,#007fff,#007eff,#007dff,#007cff,#007bff,#007aff,#0079ff,#0078ff,#07f,#0076ff,#0075ff,#0073ff,#0072ff,#0071ff,#0070ff,#006eff,#036dff,#0c6cff,#146aff,#1d69ff,#2668ff,#2f66ff,#3965ff,#4263ff,#4c62ff,#5660ff,#605fff,#6a5dff,#745cff,#7f5aff,#8a58ff,#9557ff,#a055ff,#ac53ff,#b751ff,#c44fff,#d04dff,#dc4bff,#e949ff,#f647ff,#ff44fa,#ff3fee,#ff3ae2,#ff35d8,#ff31ce,#ff2dc4,#ff29bc,#ff26b3,#ff22ac,#ff1fa5,#ff1c9e,#ff1a97,#ff1791,#ff148c,#ff1286,#ff1081,#ff0e7c,#ff0c78,#ff0a73,#ff086f,#ff066b,#ff0567,#ff0363,#ff0260,#ff005c,#ff0059,#ff0056,#ff0053,#ff0050,#ff004d,#ff004b,#ff0048,#ff0046,#ff0043,#ff0041,#ff003f,#ff003c,#ff003a,#ff0038,#ff0036,#ff0034,#f03,#ff0031,#ff002f,#ff002d,#ff002c,#ff002a,#ff0029,#ff0027,#ff0026,#ff0024,#ff0023,#ff0021,#ff0020,#ff001f,#ff001e,#ff001c,#ff001b,#ff001a,#ff0019,#ff0018,#ff0017,#ff0016,#ff0015,#ff0014)"></i><i style="margin-left:47px;width:450px;background:linear-gradient(90deg,#0086ff,#0086ff,#0085ff,#0084ff,#0083ff,#0082ff,#0081ff,#0080ff,#007fff,#007eff,#007dff,#007cff,#007bff,#007aff,#0079ff,#0078ff,#07f,#0076ff,#0074ff,#0073ff,#0072ff,#0071ff,#0070ff,#006eff,#006dff,#006cff,#006bff,#0769ff,#1068ff,#1966ff,#2165ff,#2a64ff,#3462ff,#3d61ff,#465fff,#505eff,#5a5cff,#645bff,#6e59ff,#7957ff,#8356ff,#8e54ff,#9952ff,#a450ff,#b04eff,#bc4dff,#c84bff,#d449ff,#e147ff,#ee45ff,#fb43ff,#ff3ef6,#ff39ea,#ff35df,#ff30d4,#ff2ccb,#ff28c2,#ff25b9,#ff22b1,#ff1eaa,#ff1ba3,#ff199c,#ff1696,#ff1490,#ff118a,#ff0f85,#ff0d80,#ff0b7b,#ff0977,#ff0772,#ff066e,#ff046a,#ff0266,#ff0163,#ff005f,#ff005c,#ff0059,#ff0056,#ff0053,#ff0050,#ff004d,#ff004a,#ff0048,#ff0045,#ff0043,#ff0041,#ff003e,#ff003c,#ff003a,#ff0038,#ff0036,#ff0034,#f03,#ff0031,#ff002f,#ff002d,#ff002c,#ff002a,#ff0029,#ff0027,#ff0026,#ff0024,#ff0023,#f02,#ff0020,#ff001f,#ff001e,#ff001c,#ff001b,#ff001a,#ff0019,#ff0018,#ff0017,#ff0016)"></i><i style="margin-left:48px;width:444px;background:linear-gradient(90deg,#0083ff,#0082ff,#0081ff,#0080ff,#0080ff,#007fff,#007eff,#007dff,#007cff,#007bff,#007aff,#0079ff,#07f,#0076ff,#0075ff,#0074ff,#0073ff,#0072ff,#0071ff,#0070ff,#006eff,#006dff,#006cff,#006bff,#0069ff,#0068ff,#0467ff,#0c65ff,#1564ff,#1d62ff,#2661ff,#2f60ff,#385eff,#425dff,#4b5bff,#5559ff,#5f58ff,#6956ff,#7355ff,#7e53ff,#8851ff,#934fff,#9f4eff,#aa4cff,#b64aff,#c148ff,#cd46ff,#da44ff,#e642ff,#f340ff,#ff3dfe,#ff38f1,#ff33e5,#ff2fda,#ff2bd0,#ff27c7,#ff24be,#ff20b6,#ff1dae,#ff1aa7,#ff18a0,#ff159a,#ff1294,#ff108e,#ff0e88,#ff0c83,#ff0a7e,#ff0879,#ff0675,#ff0471,#ff036d,#ff0169,#ff0065,#ff0061,#ff005e,#ff005b,#ff0058,#f05,#ff0052,#ff004f,#ff004c,#ff004a,#ff0047,#ff0045,#ff0042,#ff0040,#ff003e,#ff003c,#ff003a,#ff0038,#ff0036,#ff0034,#ff0032,#ff0030,#ff002f,#ff002d,#ff002b,#ff002a,#ff0028,#ff0027,#ff0025,#ff0024,#ff0023,#ff0021,#ff0020,#ff001f,#ff001d,#ff001c,#ff001b,#ff001a,#ff0019,#ff0018)"></i><i style="margin-left:49px;width:437px;background:linear-gradient(90deg,#0080ff,#007fff,#007eff,#007dff,#007cff,#007bff,#007aff,#0079ff,#0078ff,#07f,#0076ff,#0075ff,#0074ff,#0073ff,#0072ff,#0071ff,#0070ff,#006fff,#006dff,#006cff,#006bff,#006aff,#0068ff,#0067ff,#06f,#0065ff,#0663ff,#0e62ff,#1660ff,#1f5fff,#285eff,#315cff,#3a5bff,#4359ff,#4c57ff,#5656ff,#6054ff,#6a53ff,#7451ff,#7e4fff,#894eff,#944cff,#9f4aff,#aa48ff,#b546ff,#c144ff,#cd42ff,#d940ff,#e53eff,#f23cff,#ff3aff,#ff35f3,#ff31e7,#ff2cdc,#ff28d2,#ff25c9,#ff21c0,#ff1eb8,#ff1bb0,#ff18a9,#ff15a2,#ff139b,#ff1195,#ff0e90,#ff0c8a,#ff0a85,#ff0880,#ff067b,#ff0577,#ff0372,#ff016e,#ff006a,#ff0067,#ff0063,#ff0060,#ff005c,#ff0059,#ff0056,#ff0053,#ff0050,#ff004e,#ff004b,#ff0049,#ff0046,#f04,#ff0041,#ff003f,#ff003d,#ff003b,#ff0039,#ff0037,#ff0035,#f03,#ff0032,#ff0030,#ff002e,#ff002d,#ff002b,#ff002a,#ff0028,#ff0027,#ff0025,#ff0024,#f02,#ff0021,#ff0020,#ff001f,#ff001d,#ff001c,#ff001b,#ff001a)"></i><i style="margin-left:49px;width:432px;background:linear-gradient(90deg,#007dff,#007cff,#007bff,#007aff,#0079ff,#0078ff,#07f,#0076ff,#0075ff,#0074ff,#0073ff,#0072ff,#0071ff,#0070ff,#006fff,#006eff,#006cff,#006bff,#006aff,#0069ff,#0068ff,#06f,#0065ff,#0064ff,#0062ff,#0061ff,#0960ff,#115eff,#195dff,#225bff,#2b5aff,#3458ff,#3d57ff,#4655ff,#5054ff,#5952ff,#6350ff,#6d4fff,#774dff,#824bff,#8c49ff,#9748ff,#a246ff,#ad44ff,#b942ff,#c540ff,#d13eff,#dd3cff,#e93aff,#f638ff,#ff35fb,#ff30ef,#ff2ce3,#ff28d9,#ff24cf,#ff20c6,#ff1dbd,#ff1ab5,#ff17ae,#ff15a7,#ff12a0,#ff109a,#ff0d94,#ff0b8e,#ff0989,#ff0783,#ff057f,#ff037a,#ff0276,#ff0071,#ff006d,#ff0069,#f06,#ff0062,#ff005f,#ff005c,#ff0058,#f05,#ff0053,#ff0050,#ff004d,#ff004a,#ff0048,#ff0046,#ff0043,#ff0041,#ff003f,#ff003d,#ff003b,#ff0039,#ff0037,#ff0035,#f03,#ff0031,#ff0030,#ff002e,#ff002c,#ff002b,#ff0029,#ff0028,#ff0026,#ff0025,#ff0024,#f02,#ff0021,#ff0020,#ff001e,#ff001d,#ff001c)"></i><i style="margin-left:50px;width:425px;background:linear-gradient(90deg,#007aff,#0079ff,#0078ff,#07f,#0076ff,#0075ff,#0074ff,#0073ff,#0072ff,#0071ff,#0070ff,#006fff,#006eff,#006dff,#006cff,#006aff,#0069ff,#0068ff,#0067ff,#06f,#0064ff,#0063ff,#0062ff,#0060ff,#005fff,#025eff,#0b5cff,#135bff,#1b59ff,#2458ff,#2c56ff,#3555ff,#3e53ff,#4752ff,#5150ff,#5a4fff,#644dff,#6e4bff,#7849ff,#8248ff,#8d46ff,#9744ff,#a242ff,#ad40ff,#b83eff,#c43cff,#d03aff,#dc38ff,#e836ff,#f434ff,#ff32fd,#ff2df1,#ff29e5,#ff25db,#ff21d1,#ff1ec8,#ff1bbf,#ff18b7,#ff15b0,#ff12a9,#ff10a2,#ff0e9c,#ff0b96,#ff0990,#ff078a,#ff0585,#ff0480,#ff027c,#f07,#ff0073,#ff006f,#ff006b,#ff0067,#ff0064,#ff0060,#ff005d,#ff005a,#ff0057,#ff0054,#ff0051,#ff004f,#ff004c,#ff0049,#ff0047,#ff0045,#ff0042,#ff0040,#ff003e,#ff003c,#ff003a,#ff0038,#ff0036,#ff0034,#f03,#ff0031,#ff002f,#ff002e,#ff002c,#ff002b,#ff0029,#ff0028,#ff0026,#ff0025,#ff0023,#f02,#ff0021,#ff0020,#ff001e)"></i><i style="margin-left:51px;width:418px;background:linear-gradient(90deg,#07f,#0076ff,#0075ff,#0074ff,#0073ff,#0072ff,#0071ff,#0070ff,#006fff,#006eff,#006dff,#006cff,#006aff,#0069ff,#0068ff,#0067ff,#06f,#0065ff,#0063ff,#0062ff,#0061ff,#005fff,#005eff,#005dff,#005bff,#065aff,#0e59ff,#1757ff,#1f56ff,#2854ff,#3053ff,#3951ff,#4250ff,#4b4eff,#554cff,#5e4bff,#6849ff,#7247ff,#7c45ff,#8644ff,#9142ff,#9b40ff,#a63eff,#b13cff,#bd3aff,#c838ff,#d436ff,#e034ff,#ec32ff,#f930ff,#ff2cf9,#ff28ed,#ff24e2,#ff21d8,#ff1dce,#ff1ac5,#ff17bd,#ff14b5,#ff12ae,#ff0fa7,#ff0da0,#ff0a9a,#ff0894,#ff068e,#ff0489,#ff0384,#ff017f,#ff007b,#ff0076,#ff0072,#ff006e,#ff006a,#ff0067,#ff0063,#ff0060,#ff005d,#ff005a,#ff0057,#ff0054,#ff0051,#ff004e,#ff004c,#ff0049,#ff0047,#f04,#ff0042,#ff0040,#ff003e,#ff003c,#ff003a,#ff0038,#ff0036,#ff0034,#f03,#ff0031,#ff002f,#ff002e,#ff002c,#ff002a,#ff0029,#ff0028,#ff0026,#ff0025,#ff0023,#f02,#ff0021)"></i><i style="margin-left:51px;width:413px;background:linear-gradient(90deg,#0074ff,#0073ff,#0072ff,#0071ff,#0070ff,#006fff,#006eff,#006dff,#006cff,#006bff,#006aff,#0069ff,#0068ff,#06f,#0065ff,#0064ff,#0063ff,#0062ff,#0060ff,#005fff,#005eff,#005cff,#005bff,#005aff,#0058ff,#0757ff,#0f55ff,#1754ff,#2053ff,#2851ff,#314fff,#3a4eff,#434cff,#4c4bff,#5549ff,#5e47ff,#6846ff,#7244ff,#7c42ff,#8640ff,#903fff,#9b3dff,#a53bff,#b039ff,#bc37ff,#c735ff,#d333ff,#de31ff,#eb2fff,#f72cff,#ff29fb,#ff25ef,#ff21e4,#ff1eda,#ff1bd0,#ff18c7,#ff15bf,#ff12b7,#ff0faf,#ff0da8,#ff0ba2,#ff099c,#ff0696,#ff0590,#ff038b,#ff0186,#ff0081,#ff007c,#ff0078,#ff0074,#ff0070,#ff006c,#ff0068,#ff0065,#ff0061,#ff005e,#ff005b,#ff0058,#f05,#ff0052,#ff0050,#ff004d,#ff004a,#ff0048,#ff0046,#ff0043,#ff0041,#ff003f,#ff003d,#ff003b,#ff0039,#ff0037,#ff0035,#ff0034,#ff0032,#ff0030,#ff002f,#ff002d,#ff002c,#ff002a,#ff0029,#ff0027,#ff0026,#ff0024,#ff0023)"></i><i style="margin-left:52px;width:406px;background:linear-gradient(90deg,#0071ff,#0070ff,#006fff,#006eff,#006dff,#006cff,#006bff,#006aff,#0069ff,#0068ff,#0067ff,#0065ff,#0064ff,#0063ff,#0062ff,#0061ff,#005fff,#005eff,#005dff,#005cff,#005aff,#0059ff,#0058ff,#0056ff,#0355ff,#0b53ff,#1352ff,#1b50ff,#244fff,#2c4dff,#354cff,#3e4aff,#4749ff,#5047ff,#5945ff,#6244ff,#6c42ff,#7640ff,#803eff,#8a3cff,#943bff,#9f39ff,#aa37ff,#b535ff,#c033ff,#cb31ff,#d72fff,#e32cff,#ef2aff,#fb28ff,#ff24f7,#ff21eb,#ff1de0,#ff1ad6,#ff17cd,#ff14c4,#ff11bc,#ff0eb5,#ff0cad,#ff0aa7,#ff07a0,#ff059a,#ff0494,#ff028f,#ff0089,#ff0085,#ff0080,#ff007b,#f07,#ff0073,#ff006f,#ff006b,#ff0067,#ff0064,#ff0061,#ff005d,#ff005a,#ff0057,#f05,#ff0052,#ff004f,#ff004d,#ff004a,#ff0048,#ff0045,#ff0043,#ff0041,#ff003f,#ff003d,#ff003b,#ff0039,#ff0037,#ff0035,#f03,#ff0032,#ff0030,#ff002f,#ff002d,#ff002b,#ff002a,#ff0029,#ff0027,#ff0026)"></i><i style="margin-left:53px;width:399px;background:linear-gradient(90deg,#006eff,#006dff,#006cff,#006bff,#006aff,#0069ff,#0068ff,#0067ff,#06f,#0065ff,#0063ff,#0062ff,#0061ff,#0060ff,#005fff,#005dff,#005cff,#005bff,#0059ff,#0058ff,#0057ff,#05f,#0054ff,#0053ff,#0751ff,#0f50ff,#174eff,#1f4dff,#284bff,#304aff,#3948ff,#4246ff,#4b45ff,#5443ff,#5d41ff,#6640ff,#703eff,#7a3cff,#843aff,#8e38ff,#9837ff,#a335ff,#ae33ff,#b931ff,#c42fff,#cf2cff,#db2aff,#e728ff,#f326ff,#ff24ff,#ff20f3,#ff1ce8,#ff19dd,#ff16d3,#ff13ca,#ff10c2,#ff0dba,#ff0bb2,#ff09ab,#ff06a5,#ff049e,#ff0298,#ff0193,#ff008d,#f08,#ff0083,#ff007f,#ff007a,#ff0076,#ff0072,#ff006e,#ff006a,#ff0067,#ff0063,#ff0060,#ff005d,#ff005a,#ff0057,#ff0054,#ff0051,#ff004f,#ff004c,#ff004a,#ff0047,#ff0045,#ff0043,#ff0041,#ff003f,#ff003d,#ff003b,#ff0039,#ff0037,#ff0035,#f03,#ff0032,#ff0030,#ff002e,#ff002d,#ff002b,#ff002a,#ff0028)"></i><i style="margin-left:54px;width:393px;background:linear-gradient(90deg,#006bff,#006aff,#0069ff,#0068ff,#0067ff,#06f,#0065ff,#0064ff,#0063ff,#0061ff,#0060ff,#005fff,#005eff,#005dff,#005bff,#005aff,#0059ff,#0058ff,#0056ff,#05f,#0054ff,#0052ff,#0051ff,#024fff,#094eff,#114dff,#194bff,#2149ff,#2a48ff,#3246ff,#3b45ff,#4343ff,#4c41ff,#5540ff,#5f3eff,#683cff,#713bff,#7b39ff,#8537ff,#8f35ff,#93f,#a431ff,#ae2fff,#b92dff,#c42bff,#d029ff,#db27ff,#e725ff,#f322ff,#ff20ff,#ff1cf3,#ff19e8,#ff16de,#ff13d4,#ff10cb,#ff0dc3,#ff0bbb,#ff09b3,#ff06ac,#ff04a6,#ff029f,#f09,#ff0094,#ff008e,#ff0089,#ff0084,#ff0080,#ff007b,#f07,#ff0073,#ff006f,#ff006b,#ff0068,#ff0064,#ff0061,#ff005e,#ff005b,#ff0058,#f05,#ff0052,#ff0050,#ff004d,#ff004b,#ff0048,#ff0046,#f04,#ff0042,#ff0040,#ff003e,#ff003c,#ff003a,#ff0038,#ff0036,#ff0034,#f03,#ff0031,#ff002f,#ff002e,#ff002c,#ff002b)"></i><i style="margin-left:55px;width:386px;background:linear-gradient(90deg,#0068ff,#0067ff,#06f,#0065ff,#0064ff,#0063ff,#0062ff,#0061ff,#0060ff,#005eff,#005dff,#005cff,#005bff,#005aff,#0058ff,#0057ff,#0056ff,#0054ff,#0053ff,#0052ff,#0050ff,#004fff,#004dff,#054cff,#0d4bff,#1549ff,#1d47ff,#2546ff,#2e44ff,#3643ff,#3f41ff,#473fff,#503eff,#593cff,#623aff,#6c39ff,#7537ff,#7f35ff,#8933ff,#9331ff,#9d2fff,#a82dff,#b22bff,#bd29ff,#c827ff,#d425ff,#df23ff,#eb21ff,#f71eff,#ff1bfb,#ff18ef,#ff15e5,#ff12db,#ff0fd1,#ff0cc9,#ff0ac0,#ff07b9,#ff05b1,#ff03aa,#ff01a4,#ff009e,#ff0098,#ff0092,#ff008d,#f08,#ff0083,#ff007f,#ff007a,#ff0076,#ff0072,#ff006e,#ff006b,#ff0067,#ff0064,#ff0061,#ff005d,#ff005a,#ff0058,#f05,#ff0052,#ff004f,#ff004d,#ff004a,#ff0048,#ff0046,#f04,#ff0042,#ff003f,#ff003d,#ff003b,#ff003a,#ff0038,#ff0036,#ff0034,#f03,#ff0031,#ff002f,#ff002e)"></i><i style="margin-left:55px;width:381px;background:linear-gradient(90deg,#06f,#0065ff,#0064ff,#0062ff,#0061ff,#0060ff,#005fff,#005eff,#005dff,#005cff,#005aff,#0059ff,#0058ff,#0057ff,#05f,#0054ff,#0053ff,#0052ff,#0050ff,#004fff,#004dff,#004cff,#004bff,#0649ff,#0e48ff,#1646ff,#1e45ff,#2643ff,#2e41ff,#3640ff,#3f3eff,#483dff,#503bff,#5939ff,#6237ff,#6c36ff,#7534ff,#7f32ff,#8930ff,#932eff,#9d2cff,#a72aff,#b228ff,#bc26ff,#c724ff,#d222ff,#de20ff,#e91dff,#f51bff,#ff19fd,#ff15f1,#ff12e7,#ff0fdd,#ff0dd3,#ff0aca,#ff08c2,#ff05ba,#ff03b3,#ff01ac,#ff00a6,#ff009f,#ff009a,#ff0094,#ff008f,#ff008a,#ff0085,#ff0080,#ff007c,#ff0078,#ff0074,#ff0070,#ff006c,#ff0069,#ff0065,#ff0062,#ff005f,#ff005c,#ff0059,#ff0056,#ff0053,#ff0051,#ff004e,#ff004c,#ff0049,#ff0047,#ff0045,#ff0043,#ff0041,#ff003f,#ff003d,#ff003b,#ff0039,#ff0037,#ff0035,#ff0034,#ff0032,#ff0030)"></i><i style="margin-left:56px;width:374px;background:linear-gradient(90deg,#0063ff,#0062ff,#0061ff,#0060ff,#005eff,#005dff,#005cff,#005bff,#005aff,#0059ff,#0057ff,#0056ff,#05f,#0054ff,#0052ff,#0051ff,#0050ff,#004eff,#004dff,#004cff,#004aff,#0049ff,#0247ff,#0a46ff,#1244ff,#1a43ff,#2141ff,#2a40ff,#323eff,#3a3cff,#433bff,#4b39ff,#5437ff,#5d36ff,#6634ff,#7032ff,#7930ff,#832eff,#8d2cff,#962aff,#a128ff,#ab26ff,#b624ff,#c022ff,#cb20ff,#d61eff,#e21cff,#ed19ff,#f917ff,#ff14f9,#f1e,#ff0ee3,#ff0bd9,#ff09d0,#ff06c8,#ff04c0,#ff02b8,#ff00b1,#f0a,#ff00a4,#ff009e,#ff0098,#ff0093,#ff008d,#f08,#ff0084,#ff007f,#ff007b,#f07,#ff0073,#ff006f,#ff006b,#ff0068,#ff0065,#ff0061,#ff005e,#ff005b,#ff0058,#ff0056,#ff0053,#ff0050,#ff004e,#ff004b,#ff0049,#ff0047,#ff0045,#ff0042,#ff0040,#ff003e,#ff003c,#ff003b,#ff0039,#ff0037,#ff0035,#f03)"></i><i style="margin-left:57px;width:367px;background:linear-gradient(90deg,#0060ff,#005fff,#005eff,#005dff,#005bff,#005aff,#0059ff,#0058ff,#0057ff,#0056ff,#0054ff,#0053ff,#0052ff,#0050ff,#004fff,#004eff,#004cff,#004bff,#004aff,#0048ff,#0047ff,#0045ff,#0644ff,#0e42ff,#1541ff,#1d3fff,#253eff,#2d3cff,#363aff,#3e39ff,#4737ff,#4f35ff,#5834ff,#6132ff,#6a30ff,#742eff,#7d2cff,#872aff,#9029ff,#9a27ff,#a525ff,#af22ff,#ba20ff,#c41eff,#cf1cff,#db1aff,#e618ff,#f215ff,#fd13ff,#ff10f5,#ff0dea,#ff0ae0,#ff08d6,#ff05ce,#ff03c5,#ff01bd,#ff00b6,#ff00af,#ff00a8,#ff00a2,#ff009c,#ff0096,#ff0091,#ff008c,#ff0087,#ff0083,#ff007e,#ff007a,#ff0076,#ff0072,#ff006e,#ff006b,#ff0067,#ff0064,#ff0061,#ff005e,#ff005b,#ff0058,#f05,#ff0052,#ff0050,#ff004d,#ff004b,#ff0049,#ff0046,#f04,#ff0042,#ff0040,#ff003e,#ff003c,#ff003a,#ff0038,#ff0037)"></i><i style="margin-left:58px;width:361px;background:linear-gradient(90deg,#005dff,#005cff,#005bff,#005aff,#0059ff,#0057ff,#0056ff,#05f,#0054ff,#0053ff,#0051ff,#0050ff,#004fff,#004eff,#004cff,#004bff,#0049ff,#0048ff,#0047ff,#0045ff,#04f,#0142ff,#0841ff,#103fff,#183eff,#1f3cff,#273bff,#2f39ff,#3737ff,#4036ff,#4834ff,#5132ff,#5a31ff,#632fff,#6c2dff,#752bff,#7e29ff,#8827ff,#9125ff,#9b23ff,#a521ff,#b01fff,#ba1dff,#c51bff,#cf19ff,#da17ff,#e615ff,#f112ff,#fd10ff,#ff0df6,#ff0aeb,#ff08e1,#ff05d7,#ff03ce,#ff01c6,#ff00be,#ff00b7,#ff00b0,#ff00a9,#ff00a3,#ff009d,#ff0098,#ff0092,#ff008d,#f08,#ff0084,#ff007f,#ff007b,#f07,#ff0073,#ff006f,#ff006c,#ff0068,#ff0065,#ff0062,#ff005f,#ff005c,#ff0059,#ff0056,#ff0054,#ff0051,#ff004f,#ff004c,#ff004a,#ff0048,#ff0045,#ff0043,#ff0041,#ff003f,#ff003d,#ff003b,#ff003a)"></i><i style="margin-left:59px;width:354px;background:linear-gradient(90deg,#005aff,#0059ff,#0058ff,#0057ff,#0056ff,#05f,#0053ff,#0052ff,#0051ff,#0050ff,#004eff,#004dff,#004cff,#004aff,#0049ff,#0048ff,#0046ff,#0045ff,#04f,#0042ff,#0041ff,#043fff,#0c3eff,#133cff,#1b3bff,#2339ff,#2b37ff,#3336ff,#3b34ff,#4432ff,#4c31ff,#552fff,#5d2dff,#662bff,#6f29ff,#7928ff,#8226ff,#8c24ff,#9522ff,#9f20ff,#a91eff,#b41cff,#be19ff,#c917ff,#d315ff,#df13ff,#ea11ff,#f50eff,#ff0cfd,#ff09f2,#ff06e7,#ff04de,#ff02d4,#f0c,#ff00c4,#ff00bc,#ff00b5,#ff00ae,#ff00a8,#ff00a1,#ff009c,#ff0096,#ff0091,#ff008c,#ff0087,#ff0083,#ff007e,#ff007a,#ff0076,#ff0072,#ff006f,#ff006b,#ff0068,#ff0064,#ff0061,#ff005e,#ff005b,#ff0058,#ff0056,#ff0053,#ff0051,#ff004e,#ff004c,#ff0049,#ff0047,#ff0045,#ff0043,#ff0041,#ff003f,#ff003d)"></i><i style="margin-left:60px;width:347px;background:linear-gradient(90deg,#0057ff,#0056ff,#05f,#0054ff,#0053ff,#0052ff,#0050ff,#004fff,#004eff,#004dff,#004bff,#004aff,#0049ff,#0047ff,#0046ff,#0045ff,#0043ff,#0042ff,#0040ff,#003fff,#013dff,#083cff,#103aff,#1739ff,#1f37ff,#2736ff,#2f34ff,#3732ff,#3f31ff,#472fff,#502dff,#582bff,#612aff,#6a28ff,#7326ff,#7c24ff,#8622ff,#8f20ff,#991eff,#a31cff,#ad1aff,#b818ff,#c216ff,#cd13ff,#d811ff,#e30fff,#ee0dff,#f90aff,#ff08f9,#ff05ee,#ff03e4,#ff00da,#ff00d1,#ff00c9,#ff00c1,#ff00ba,#ff00b3,#ff00ac,#ff00a6,#ff00a0,#ff009a,#ff0095,#ff0090,#ff008b,#ff0086,#ff0081,#ff007d,#ff0079,#ff0075,#ff0071,#ff006e,#ff006a,#ff0067,#ff0064,#ff0061,#ff005e,#ff005b,#ff0058,#f05,#ff0053,#ff0050,#ff004e,#ff004b,#ff0049,#ff0047,#ff0045,#ff0043,#ff0041)"></i><i style="margin-left:61px;width:341px;background:linear-gradient(90deg,#05f,#0054ff,#0052ff,#0051ff,#0050ff,#004fff,#004eff,#004cff,#004bff,#004aff,#0048ff,#0047ff,#0046ff,#0045ff,#0043ff,#0042ff,#0040ff,#003fff,#003dff,#003cff,#033aff,#0a39ff,#1237ff,#1936ff,#2134ff,#2933ff,#3031ff,#382fff,#412eff,#492cff,#512aff,#5a28ff,#6327ff,#6b25ff,#7423ff,#7e21ff,#871fff,#901dff,#9a1bff,#a419ff,#ae17ff,#b815ff,#c213ff,#cd11ff,#d70eff,#e20cff,#ed0aff,#f907ff,#ff05fa,#ff02ef,#ff00e5,#ff00db,#ff00d3,#ff00ca,#ff00c2,#f0b,#ff00b4,#ff00ad,#ff00a7,#ff00a1,#ff009b,#ff0096,#ff0091,#ff008c,#ff0087,#ff0083,#ff007e,#ff007a,#ff0076,#ff0073,#ff006f,#ff006b,#ff0068,#ff0065,#ff0062,#ff005f,#ff005c,#ff0059,#ff0056,#ff0054,#ff0051,#ff004f,#ff004d,#ff004a,#ff0048,#ff0046,#f04)"></i><i style="margin-left:61px;width:335px;background:linear-gradient(90deg,#0052ff,#0051ff,#0050ff,#004fff,#004dff,#004cff,#004bff,#004aff,#0048ff,#0047ff,#0046ff,#0045ff,#0043ff,#0042ff,#0040ff,#003fff,#003eff,#003cff,#003bff,#0039ff,#0538ff,#0c36ff,#1435ff,#1b33ff,#2331ff,#2b30ff,#332eff,#3b2cff,#432bff,#4b29ff,#5427ff,#5c25ff,#6523ff,#6e22ff,#7720ff,#801eff,#891cff,#931aff,#9c18ff,#a616ff,#b014ff,#ba11ff,#c50fff,#cf0dff,#da0bff,#e508ff,#f006ff,#fc04ff,#ff01f7,#ff00ec,#ff00e3,#ff00d9,#ff00d1,#ff00c8,#ff00c1,#ff00b9,#ff00b2,#ff00ac,#ff00a6,#ff00a0,#ff009a,#ff0095,#ff0090,#ff008b,#ff0086,#ff0082,#ff007e,#ff0079,#ff0076,#ff0072,#ff006e,#ff006b,#ff0067,#ff0064,#ff0061,#ff005e,#ff005b,#ff0059,#ff0056,#ff0053,#ff0051,#ff004e,#ff004c,#ff004a,#ff0048)"></i><i style="margin-left:62px;width:329px;background:linear-gradient(90deg,#004fff,#004eff,#004dff,#004cff,#004bff,#0049ff,#0048ff,#0047ff,#0046ff,#04f,#0043ff,#0042ff,#0040ff,#003fff,#003eff,#003cff,#003bff,#0039ff,#0038ff,#0036ff,#0735ff,#0f33ff,#1632ff,#1d30ff,#252eff,#2d2dff,#342bff,#3c29ff,#4528ff,#4d26ff,#5524ff,#5e22ff,#6621ff,#6f1fff,#781dff,#811bff,#8a19ff,#9317ff,#9d15ff,#a713ff,#b111ff,#bb0fff,#c50cff,#cf0aff,#da08ff,#e506ff,#f003ff,#fb01ff,#ff00f8,#ff00ed,#ff00e4,#ff00da,#ff00d2,#ff00c9,#ff00c2,#ff00ba,#ff00b4,#ff00ad,#ff00a7,#ff00a1,#ff009b,#ff0096,#ff0091,#ff008c,#f08,#ff0083,#ff007f,#ff007b,#f07,#ff0073,#ff0070,#ff006c,#ff0069,#f06,#ff0063,#ff0060,#ff005d,#ff005a,#ff0057,#f05,#ff0052,#ff0050,#ff004d,#ff004b)"></i><i style="margin-left:63px;width:322px;background:linear-gradient(90deg,#004dff,#004cff,#004aff,#0049ff,#0048ff,#0047ff,#0045ff,#04f,#0043ff,#0041ff,#0040ff,#003fff,#003dff,#003cff,#003bff,#0039ff,#0038ff,#0036ff,#0035ff,#0433ff,#0b32ff,#1230ff,#192fff,#212dff,#292bff,#302aff,#3828ff,#4026ff,#4824ff,#5023ff,#5921ff,#611fff,#6a1dff,#731bff,#7c19ff,#8517ff,#8e15ff,#9713ff,#a111ff,#ab0fff,#b40dff,#bf0bff,#c909ff,#d306ff,#de04ff,#e902ff,#f400ff,#f0f,#ff00f4,#ff00ea,#ff00e0,#ff00d7,#ff00cf,#ff00c7,#ff00bf,#ff00b8,#ff00b2,#ff00ab,#ff00a5,#ff009f,#ff009a,#ff0095,#ff0090,#ff008b,#ff0086,#ff0082,#ff007e,#ff007a,#ff0076,#ff0072,#ff006f,#ff006b,#ff0068,#ff0065,#ff0062,#ff005f,#ff005c,#ff0059,#ff0057,#ff0054,#ff0052,#ff004f)"></i><i style="margin-left:64px;width:315px;background:linear-gradient(90deg,#004aff,#0049ff,#0048ff,#0046ff,#0045ff,#04f,#0043ff,#0041ff,#0040ff,#003fff,#003dff,#003cff,#003bff,#0039ff,#0038ff,#0036ff,#0035ff,#03f,#0032ff,#0730ff,#0e2fff,#162dff,#1d2bff,#242aff,#2c28ff,#3426ff,#3c25ff,#4423ff,#4c21ff,#541fff,#5c1eff,#651cff,#6e1aff,#7618ff,#7f16ff,#8814ff,#9212ff,#9b10ff,#a50eff,#ae0cff,#b80aff,#c207ff,#cd05ff,#d703ff,#e200ff,#ed00ff,#f800ff,#ff00fb,#ff00f0,#ff00e6,#f0d,#ff00d4,#f0c,#ff00c4,#ff00bd,#ff00b6,#ff00af,#ff00a9,#ff00a3,#ff009e,#ff0098,#ff0093,#ff008e,#ff008a,#ff0085,#ff0081,#ff007d,#ff0079,#ff0075,#ff0071,#ff006e,#ff006a,#ff0067,#ff0064,#ff0061,#ff005e,#ff005b,#ff0059,#ff0056,#ff0054)"></i><i style="margin-left:65px;width:309px;background:linear-gradient(90deg,#0047ff,#0046ff,#0045ff,#04f,#0042ff,#0041ff,#0040ff,#003fff,#003dff,#003cff,#003bff,#0039ff,#0038ff,#0036ff,#0035ff,#03f,#0032ff,#0030ff,#022fff,#092dff,#102cff,#182aff,#1f29ff,#2627ff,#2e25ff,#3624ff,#3d22ff,#4520ff,#4d1eff,#551dff,#5e1bff,#6619ff,#6f17ff,#7715ff,#8013ff,#8911ff,#920fff,#9c0dff,#a50bff,#af09ff,#b807ff,#c205ff,#cd02ff,#d700ff,#e100ff,#ec00ff,#f700ff,#ff00fc,#ff00f1,#ff00e8,#ff00de,#ff00d6,#ff00cd,#ff00c6,#ff00be,#ff00b7,#ff00b1,#ff00ab,#ff00a5,#ff009f,#ff009a,#ff0094,#ff0090,#ff008b,#ff0086,#ff0082,#ff007e,#ff007a,#ff0076,#ff0073,#ff006f,#ff006c,#ff0069,#ff0065,#ff0062,#ff0060,#ff005d,#ff005a,#ff0057)"></i><i style="margin-left:66px;width:302px;background:linear-gradient(90deg,#0045ff,#0043ff,#0042ff,#0041ff,#0040ff,#003eff,#003dff,#003cff,#003aff,#0039ff,#0038ff,#0036ff,#0035ff,#03f,#0032ff,#0031ff,#002fff,#002eff,#062cff,#0d2aff,#1429ff,#1b27ff,#2226ff,#2a24ff,#3122ff,#3921ff,#411fff,#491dff,#511bff,#5919ff,#6118ff,#6a16ff,#7214ff,#7b12ff,#8410ff,#8d0eff,#960cff,#9f0aff,#a908ff,#b305ff,#bc03ff,#c601ff,#d000ff,#db00ff,#e500ff,#f000ff,#fb00ff,#ff00f8,#f0e,#ff00e4,#ff00db,#ff00d3,#ff00cb,#ff00c3,#ff00bc,#ff00b5,#ff00af,#ff00a9,#ff00a3,#ff009d,#ff0098,#ff0093,#ff008e,#ff008a,#ff0085,#ff0081,#ff007d,#ff0079,#ff0075,#ff0072,#ff006e,#ff006b,#ff0068,#ff0065,#ff0062,#ff005f,#ff005c)"></i><i style="margin-left:67px;width:295px;background:linear-gradient(90deg,#0042ff,#0041ff,#0040ff,#003eff,#003dff,#003cff,#003aff,#0039ff,#0038ff,#0036ff,#0035ff,#03f,#0032ff,#0031ff,#002fff,#002eff,#002cff,#022bff,#0929ff,#1027ff,#1726ff,#1e24ff,#2623ff,#2d21ff,#351fff,#3d1dff,#441cff,#4c1aff,#5418ff,#5d16ff,#6514ff,#6d12ff,#7610ff,#7f0eff,#880cff,#910aff,#9a08ff,#a306ff,#ad04ff,#b602ff,#c000ff,#ca00ff,#d400ff,#df00ff,#e900ff,#f400ff,#f0f,#ff00f4,#ff00ea,#ff00e1,#ff00d8,#ff00d0,#ff00c8,#ff00c1,#ff00ba,#ff00b3,#ff00ad,#ff00a7,#ff00a1,#ff009c,#ff0096,#ff0091,#ff008d,#f08,#ff0084,#ff0080,#ff007c,#ff0078,#ff0074,#ff0071,#ff006d,#ff006a,#ff0067,#ff0064,#ff0061)"></i><i style="margin-left:68px;width:289px;background:linear-gradient(90deg,#003fff,#003eff,#003dff,#003cff,#003aff,#0039ff,#0038ff,#0036ff,#0035ff,#0034ff,#0032ff,#0031ff,#002fff,#002eff,#002cff,#002bff,#0029ff,#0428ff,#0b26ff,#1225ff,#1923ff,#2022ff,#2820ff,#2f1eff,#361cff,#3e1bff,#4619ff,#4e17ff,#5615ff,#5e14ff,#6612ff,#6e10ff,#770eff,#800cff,#880aff,#9108ff,#9a06ff,#a404ff,#ad02ff,#b600ff,#c000ff,#ca00ff,#d400ff,#de00ff,#e900ff,#f300ff,#fe00ff,#ff00f5,#ff00ec,#ff00e2,#ff00d9,#ff00d1,#ff00c9,#ff00c2,#f0b,#ff00b4,#ff00ae,#ff00a8,#ff00a3,#ff009d,#ff0098,#ff0093,#ff008e,#ff008a,#ff0085,#ff0081,#ff007d,#ff0079,#ff0076,#ff0072,#ff006f,#ff006c,#ff0068,#ff0065)"></i><i style="margin-left:69px;width:282px;background:linear-gradient(90deg,#003dff,#003cff,#003aff,#0039ff,#0038ff,#0036ff,#0035ff,#0034ff,#0032ff,#0031ff,#002fff,#002eff,#002dff,#002bff,#002aff,#0028ff,#0127ff,#0725ff,#0e23ff,#1522ff,#1c20ff,#241fff,#2b1dff,#321bff,#3a19ff,#4218ff,#4916ff,#5114ff,#5912ff,#6110ff,#6a0eff,#720dff,#7b0bff,#8309ff,#8c07ff,#9505ff,#9e02ff,#a700ff,#b100ff,#ba00ff,#c400ff,#ce00ff,#d800ff,#e200ff,#ed00ff,#f700ff,#ff00fc,#ff00f2,#ff00e8,#ff00df,#ff00d6,#ff00ce,#ff00c7,#ff00c0,#ff00b9,#ff00b2,#ff00ac,#ff00a6,#ff00a1,#ff009b,#ff0096,#ff0092,#ff008d,#f08,#ff0084,#ff0080,#ff007c,#ff0078,#ff0075,#ff0071,#ff006e,#ff006b)"></i><i style="margin-left:70px;width:276px;background:linear-gradient(90deg,#003aff,#0039ff,#0038ff,#0036ff,#0035ff,#0034ff,#0032ff,#0031ff,#0030ff,#002eff,#002dff,#002bff,#002aff,#0028ff,#0027ff,#0025ff,#0424ff,#0b22ff,#1220ff,#191fff,#201dff,#281bff,#2f1aff,#3618ff,#3e16ff,#4614ff,#4e13ff,#5611ff,#5e0fff,#660dff,#6e0bff,#7709ff,#7f07ff,#8805ff,#9103ff,#9a01ff,#a300ff,#ac00ff,#b600ff,#c000ff,#c900ff,#d300ff,#d0f,#e800ff,#f200ff,#fd00ff,#ff00f6,#ff00ec,#ff00e3,#ff00da,#ff00d2,#ff00ca,#ff00c3,#ff00bc,#ff00b5,#ff00af,#ff00a9,#ff00a3,#ff009e,#f09,#ff0094,#ff008f,#ff008a,#ff0086,#ff0082,#ff007e,#ff007a,#ff0076,#ff0073,#ff006f)"></i><i style="margin-left:71px;width:269px;background:linear-gradient(90deg,#0038ff,#0036ff,#0035ff,#0034ff,#03f,#0031ff,#0030ff,#002eff,#002dff,#002cff,#002aff,#0029ff,#0027ff,#0026ff,#0024ff,#0023ff,#0621ff,#0d20ff,#141eff,#1b1cff,#221bff,#2919ff,#3017ff,#3716ff,#3f14ff,#4612ff,#4e10ff,#560eff,#5e0dff,#660bff,#6e09ff,#7607ff,#7f05ff,#8703ff,#9001ff,#90f,#a200ff,#ab00ff,#b400ff,#be00ff,#c800ff,#d100ff,#db00ff,#e500ff,#f000ff,#fa00ff,#ff00f9,#ff00ef,#ff00e6,#f0d,#ff00d5,#ff00cd,#ff00c6,#ff00bf,#ff00b8,#ff00b2,#ff00ac,#ff00a6,#ff00a1,#ff009b,#ff0096,#ff0092,#ff008d,#ff0089,#ff0084,#ff0080,#ff007d,#ff0079,#ff0075)"></i><i style="margin-left:72px;width:262px;background:linear-gradient(90deg,#0035ff,#0034ff,#03f,#0031ff,#0030ff,#002fff,#002dff,#002cff,#002aff,#0029ff,#0027ff,#0026ff,#0024ff,#0023ff,#0021ff,#0320ff,#091eff,#101dff,#171bff,#1e19ff,#2518ff,#2c16ff,#3314ff,#3b13ff,#4211ff,#4a0fff,#520dff,#590bff,#610aff,#6a08ff,#7206ff,#7a04ff,#8302ff,#8b00ff,#9400ff,#9d00ff,#a600ff,#af00ff,#b800ff,#c200ff,#cb00ff,#d500ff,#df00ff,#e900ff,#f400ff,#fe00ff,#ff00f6,#ff00ec,#ff00e3,#ff00da,#ff00d2,#ff00ca,#ff00c3,#ff00bc,#ff00b6,#ff00b0,#f0a,#ff00a4,#ff009f,#ff009a,#ff0095,#ff0090,#ff008c,#ff0087,#ff0083,#ff007f,#ff007b)"></i><i style="margin-left:73px;width:256px;background:linear-gradient(90deg,#03f,#0031ff,#0030ff,#002fff,#002dff,#002cff,#002aff,#0029ff,#0028ff,#0026ff,#0025ff,#0023ff,#02f,#0020ff,#001fff,#061dff,#0d1bff,#141aff,#1b18ff,#2216ff,#2915ff,#3013ff,#3711ff,#3f10ff,#460eff,#4e0cff,#560aff,#5e08ff,#6606ff,#6e04ff,#7602ff,#7f00ff,#8700ff,#9000ff,#90f,#a200ff,#ab00ff,#b400ff,#be00ff,#c700ff,#d100ff,#db00ff,#e500ff,#ef00ff,#f900ff,#ff00fa,#ff00f0,#ff00e7,#ff00de,#ff00d6,#ff00ce,#ff00c6,#ff00bf,#ff00b9,#ff00b2,#ff00ac,#ff00a7,#ff00a1,#ff009c,#ff0097,#ff0092,#ff008e,#ff0089,#ff0085,#ff0081)"></i><i style="margin-left:74px;width:249px;background:linear-gradient(90deg,#0030ff,#002fff,#002dff,#002cff,#002bff,#0029ff,#0028ff,#0027ff,#0025ff,#0024ff,#02f,#0021ff,#001fff,#001eff,#011cff,#081bff,#0f19ff,#1517ff,#1c16ff,#2314ff,#2a12ff,#3111ff,#380fff,#400dff,#470bff,#4f0aff,#5608ff,#5e06ff,#6604ff,#6e02ff,#7600ff,#7e00ff,#8700ff,#8f00ff,#9800ff,#a100ff,#a900ff,#b300ff,#bc00ff,#c500ff,#cf00ff,#d800ff,#e200ff,#ec00ff,#f600ff,#ff00fd,#ff00f3,#ff00ea,#ff00e1,#ff00d9,#ff00d1,#ff00c9,#ff00c2,#ff00bc,#ff00b5,#ff00af,#f0a,#ff00a4,#ff009f,#ff009a,#ff0095,#ff0090,#ff008c,#f08)"></i><i style="margin-left:75px;width:243px;background:linear-gradient(90deg,#002eff,#002cff,#002bff,#002aff,#0028ff,#0027ff,#0025ff,#0024ff,#0023ff,#0021ff,#0020ff,#001eff,#001cff,#001bff,#0519ff,#0b18ff,#1216ff,#1914ff,#2013ff,#2711ff,#2e0fff,#350eff,#3c0cff,#440aff,#4b08ff,#5306ff,#5b05ff,#6203ff,#6a01ff,#7200ff,#7b00ff,#8300ff,#8b00ff,#9400ff,#9d00ff,#a600ff,#af00ff,#b800ff,#c100ff,#ca00ff,#d400ff,#de00ff,#e800ff,#f200ff,#fc00ff,#ff00f8,#f0e,#ff00e5,#ff00dc,#ff00d4,#ff00cd,#ff00c5,#ff00be,#ff00b8,#ff00b2,#ff00ac,#ff00a6,#ff00a1,#ff009c,#ff0097,#ff0092,#ff008e)"></i><i style="margin-left:76px;width:236px;background:linear-gradient(90deg,#002bff,#002aff,#0028ff,#0027ff,#0026ff,#0024ff,#0023ff,#0021ff,#0020ff,#001eff,#001dff,#001bff,#001aff,#0118ff,#0817ff,#0f15ff,#1513ff,#1c12ff,#2310ff,#2a0eff,#310dff,#380bff,#4009ff,#4707ff,#4f05ff,#5604ff,#5e02ff,#60f,#6e00ff,#7600ff,#7e00ff,#8700ff,#8f00ff,#9800ff,#a000ff,#a900ff,#b200ff,#bc00ff,#c500ff,#ce00ff,#d800ff,#e200ff,#ec00ff,#f600ff,#ff00fe,#ff00f4,#ff00ea,#ff00e1,#ff00d9,#ff00d1,#ff00ca,#ff00c3,#ff00bc,#ff00b6,#ff00b0,#f0a,#ff00a4,#ff009f,#ff009a,#ff0095)"></i><i style="margin-left:77px;width:229px;background:linear-gradient(90deg,#0029ff,#0027ff,#0026ff,#0025ff,#0023ff,#02f,#0020ff,#001fff,#001eff,#001cff,#001bff,#0019ff,#0017ff,#0316ff,#0a14ff,#1013ff,#1711ff,#1d0fff,#240eff,#2b0cff,#320aff,#3909ff,#4007ff,#4805ff,#4f03ff,#5601ff,#5e00ff,#60f,#6e00ff,#7600ff,#7e00ff,#8600ff,#8e00ff,#9700ff,#9f00ff,#a800ff,#b100ff,#ba00ff,#c300ff,#c0f,#d500ff,#df00ff,#e900ff,#f300ff,#fd00ff,#ff00f7,#f0e,#ff00e5,#f0d,#ff00d5,#ff00cd,#ff00c6,#ff00bf,#ff00b9,#ff00b3,#ff00ad,#ff00a7,#ff00a2,#ff009d)"></i><i style="margin-left:78px;width:223px;background:linear-gradient(90deg,#0026ff,#0025ff,#0024ff,#02f,#0021ff,#001fff,#001eff,#001cff,#001bff,#0019ff,#0018ff,#0016ff,#0015ff,#0713ff,#0d12ff,#1410ff,#1a0eff,#210dff,#280bff,#2f09ff,#3607ff,#3d06ff,#4404ff,#4c02ff,#5300ff,#5b00ff,#6200ff,#6a00ff,#7200ff,#7a00ff,#8200ff,#8b00ff,#9300ff,#9b00ff,#a400ff,#ad00ff,#b600ff,#bf00ff,#c800ff,#d200ff,#db00ff,#e500ff,#ef00ff,#f900ff,#ff00fb,#ff00f2,#ff00e8,#ff00e0,#ff00d8,#ff00d0,#ff00c9,#ff00c2,#f0b,#ff00b5,#ff00af,#f0a,#ff00a4)"></i><i style="margin-left:79px;width:216px;background:linear-gradient(90deg,#0024ff,#02f,#0021ff,#0020ff,#001eff,#001dff,#001bff,#001aff,#0018ff,#0017ff,#0015ff,#0014ff,#0312ff,#0a11ff,#100fff,#170dff,#1e0cff,#240aff,#2b08ff,#3206ff,#3905ff,#4003ff,#4801ff,#4f00ff,#5700ff,#5e00ff,#60f,#6e00ff,#7600ff,#7e00ff,#8600ff,#8e00ff,#9700ff,#9f00ff,#a800ff,#b100ff,#ba00ff,#c300ff,#c0f,#d600ff,#df00ff,#e900ff,#f300ff,#fd00ff,#ff00f7,#f0e,#ff00e5,#ff00dc,#ff00d5,#ff00cd,#ff00c6,#ff00bf,#ff00b9,#ff00b3,#ff00ad)"></i><i style="margin-left:80px;width:209px;background:linear-gradient(90deg,#0021ff,#0020ff,#001fff,#001dff,#001cff,#001aff,#0019ff,#0018ff,#0016ff,#0015ff,#0013ff,#01f,#0510ff,#0b0eff,#120dff,#180bff,#1f09ff,#2508ff,#2c06ff,#3304ff,#3a03ff,#4101ff,#4800ff,#4f00ff,#5700ff,#5e00ff,#60f,#6d00ff,#7500ff,#7d00ff,#8500ff,#8d00ff,#9500ff,#9e00ff,#a600ff,#af00ff,#b800ff,#c100ff,#ca00ff,#d300ff,#dc00ff,#e600ff,#ef00ff,#f900ff,#ff00fb,#ff00f2,#ff00e9,#ff00e0,#ff00d8,#ff00d1,#ff00ca,#ff00c3,#ff00bc,#ff00b6)"></i><i style="margin-left:81px;width:203px;background:linear-gradient(90deg,#001fff,#001eff,#001cff,#001bff,#0019ff,#0018ff,#0016ff,#0015ff,#0013ff,#0012ff,#0010ff,#020fff,#080dff,#0f0cff,#150aff,#1c08ff,#2207ff,#2905ff,#3003ff,#3701ff,#3e00ff,#4500ff,#4c00ff,#5400ff,#5b00ff,#6200ff,#6a00ff,#7200ff,#7a00ff,#8200ff,#8a00ff,#9200ff,#9a00ff,#a300ff,#ab00ff,#b400ff,#bd00ff,#c600ff,#cf00ff,#d800ff,#e200ff,#ec00ff,#f500ff,#f0f,#ff00f5,#ff00ec,#ff00e3,#ff00db,#ff00d4,#f0c,#ff00c5,#ff00bf)"></i><i style="margin-left:82px;width:196px;background:linear-gradient(90deg,#001dff,#001bff,#001aff,#0018ff,#0017ff,#0016ff,#0014ff,#0012ff,#01f,#000fff,#000eff,#050cff,#0b0bff,#1209ff,#1807ff,#1f06ff,#2604ff,#2c02ff,#30f,#3a00ff,#4100ff,#4800ff,#5000ff,#5700ff,#5e00ff,#60f,#6e00ff,#7500ff,#7d00ff,#8500ff,#8d00ff,#9600ff,#9e00ff,#a700ff,#af00ff,#b800ff,#c100ff,#ca00ff,#d300ff,#d0f,#e600ff,#f000ff,#fa00ff,#ff00fb,#ff00f1,#ff00e8,#ff00e0,#ff00d8,#ff00d0,#ff00c9)"></i><i style="margin-left:84px;width:189px;background:linear-gradient(90deg,#001aff,#0019ff,#0017ff,#0016ff,#0014ff,#0013ff,#01f,#0010ff,#000eff,#000dff,#020bff,#080aff,#0e08ff,#1506ff,#1b05ff,#2203ff,#2801ff,#2f00ff,#3600ff,#3c00ff,#4300ff,#4a00ff,#5100ff,#5900ff,#6000ff,#6700ff,#6f00ff,#70f,#7e00ff,#8600ff,#8e00ff,#9600ff,#9e00ff,#a700ff,#af00ff,#b800ff,#c000ff,#c900ff,#d200ff,#db00ff,#e500ff,#e0f,#f800ff,#ff00fd,#ff00f3,#ff00ea,#ff00e2,#ff00da,#ff00d3)"></i><i style="margin-left:85px;width:182px;background:linear-gradient(90deg,#0018ff,#0016ff,#0015ff,#0013ff,#0012ff,#0010ff,#000fff,#000dff,#000cff,#000aff,#0509ff,#0b07ff,#1105ff,#1804ff,#1e02ff,#2500ff,#2b00ff,#3200ff,#3900ff,#4000ff,#4700ff,#4e00ff,#50f,#5c00ff,#6300ff,#6b00ff,#7200ff,#7a00ff,#8200ff,#8a00ff,#9200ff,#9a00ff,#a200ff,#a0f,#b300ff,#bc00ff,#c400ff,#cd00ff,#d600ff,#df00ff,#e900ff,#f200ff,#fc00ff,#ff00f9,#ff00ef,#ff00e7,#ff00df)"></i><i style="margin-left:86px;width:175px;background:linear-gradient(90deg,#0015ff,#0014ff,#0012ff,#01f,#0010ff,#000eff,#000cff,#000bff,#0009ff,#0208ff,#0806ff,#0e05ff,#1503ff,#1b01ff,#2100ff,#2800ff,#2e00ff,#3500ff,#3c00ff,#4300ff,#4a00ff,#5100ff,#5800ff,#5f00ff,#6700ff,#6e00ff,#7600ff,#7e00ff,#8500ff,#8d00ff,#9500ff,#9e00ff,#a600ff,#ae00ff,#b700ff,#c000ff,#c800ff,#d100ff,#da00ff,#e400ff,#ed00ff,#f600ff,#ff00fe,#ff00f4,#ff00ec)"></i><i style="margin-left:87px;width:169px;background:linear-gradient(90deg,#0013ff,#0012ff,#0010ff,#000fff,#000dff,#000cff,#000aff,#0009ff,#0007ff,#0406ff,#0a04ff,#1002ff,#1601ff,#1c00ff,#2300ff,#2900ff,#3000ff,#3600ff,#3d00ff,#40f,#4b00ff,#5200ff,#5900ff,#6000ff,#6700ff,#6f00ff,#7600ff,#7e00ff,#8500ff,#8d00ff,#9500ff,#9d00ff,#a500ff,#ad00ff,#b600ff,#be00ff,#c700ff,#d000ff,#d900ff,#e200ff,#eb00ff,#f400ff,#fd00ff,#ff00f7)"></i><i style="margin-left:88px;width:162px;background:linear-gradient(90deg,#01f,#000fff,#000eff,#000cff,#000bff,#0009ff,#0008ff,#0006ff,#0105ff,#0703ff,#0d02ff,#1300ff,#1900ff,#1f00ff,#2600ff,#2c00ff,#30f,#3a00ff,#4000ff,#4700ff,#4e00ff,#50f,#5c00ff,#6300ff,#6b00ff,#7200ff,#7a00ff,#8100ff,#8900ff,#9100ff,#90f,#a100ff,#a900ff,#b100ff,#ba00ff,#c200ff,#cb00ff,#d400ff,#d0f,#e600ff,#ef00ff,#f800ff)"></i><i style="margin-left:90px;width:154px;background:linear-gradient(90deg,#000eff,#000dff,#000bff,#000aff,#0008ff,#0007ff,#0005ff,#0004ff,#0502ff,#0b00ff,#10f,#1700ff,#1d00ff,#2400ff,#2a00ff,#3000ff,#3700ff,#3e00ff,#40f,#4b00ff,#5200ff,#5900ff,#6000ff,#6700ff,#6f00ff,#7600ff,#7e00ff,#8500ff,#8d00ff,#9500ff,#9d00ff,#a500ff,#ad00ff,#b500ff,#be00ff,#c600ff,#cf00ff,#d800ff,#e100ff,#ea00ff)"></i><i style="margin-left:91px;width:148px;background:linear-gradient(90deg,#000cff,#000aff,#0009ff,#0007ff,#0006ff,#0004ff,#0003ff,#0201ff,#0800ff,#0e00ff,#1400ff,#1a00ff,#2100ff,#2700ff,#2e00ff,#3400ff,#3b00ff,#4200ff,#4800ff,#4f00ff,#5600ff,#5e00ff,#6500ff,#6c00ff,#7400ff,#7b00ff,#8300ff,#8a00ff,#9200ff,#9a00ff,#a200ff,#a0f,#b300ff,#b0f,#c400ff,#cd00ff,#d500ff,#de00ff)"></i><i style="margin-left:93px;width:140px;background:linear-gradient(90deg,#0009ff,#0008ff,#0006ff,#0005ff,#0003ff,#0002ff,#00f,#0600ff,#0c00ff,#1200ff,#1800ff,#1f00ff,#2500ff,#2b00ff,#3200ff,#3800ff,#3f00ff,#4600ff,#4d00ff,#5400ff,#5b00ff,#6200ff,#6900ff,#7000ff,#7800ff,#7f00ff,#8700ff,#8f00ff,#9700ff,#9f00ff,#a700ff,#af00ff,#b700ff,#c000ff,#c800ff,#d100ff)"></i><i style="margin-left:94px;width:134px;background:linear-gradient(90deg,#0007ff,#0006ff,#0004ff,#0003ff,#0001ff,#00f,#0200ff,#0800ff,#0e00ff,#1400ff,#1a00ff,#2000ff,#2600ff,#2d00ff,#30f,#3900ff,#4000ff,#4700ff,#4d00ff,#5400ff,#5b00ff,#6200ff,#6900ff,#7000ff,#7800ff,#7f00ff,#8600ff,#8e00ff,#9600ff,#9d00ff,#a500ff,#ad00ff,#b600ff,#be00ff,#c600ff)"></i><i style="margin-left:95px;width:127px;background:linear-gradient(90deg,#0005ff,#0003ff,#0002ff,#00f,#00f,#00f,#0500ff,#0b00ff,#10f,#1700ff,#1d00ff,#2300ff,#2900ff,#3000ff,#3600ff,#3d00ff,#4300ff,#4a00ff,#5100ff,#5700ff,#5e00ff,#6500ff,#6d00ff,#7400ff,#7b00ff,#8300ff,#8a00ff,#9200ff,#90f,#a100ff,#a900ff,#b100ff,#ba00ff)"></i><i style="margin-left:97px;width:119px;background:linear-gradient(90deg,#0002ff,#0001ff,#00f,#00f,#00f,#0300ff,#0900ff,#0f00ff,#1500ff,#1b00ff,#2100ff,#2700ff,#2d00ff,#3400ff,#3a00ff,#4100ff,#4700ff,#4e00ff,#50f,#5c00ff,#6200ff,#6a00ff,#7100ff,#7800ff,#7f00ff,#8700ff,#8e00ff,#9600ff,#9e00ff,#a500ff,#ad00ff)"></i><i style="margin-left:99px;width:112px;background:linear-gradient(90deg,#00f,#00f,#00f,#00f,#0100ff,#0700ff,#0d00ff,#1300ff,#1900ff,#1f00ff,#2500ff,#2c00ff,#3200ff,#3800ff,#3f00ff,#4600ff,#4c00ff,#5300ff,#5a00ff,#6100ff,#6800ff,#6f00ff,#7600ff,#7d00ff,#8500ff,#8c00ff,#9400ff,#9c00ff,#a400ff)"></i><i style="margin-left:100px;width:105px;background:linear-gradient(90deg,#00f,#00f,#00f,#00f,#0300ff,#0900ff,#0f00ff,#1400ff,#1a00ff,#2000ff,#2600ff,#2c00ff,#3200ff,#3900ff,#3f00ff,#4500ff,#4c00ff,#5200ff,#5900ff,#5f00ff,#60f,#6d00ff,#7400ff,#7b00ff,#8200ff,#8900ff,#9100ff,#9800ff)"></i><i style="margin-left:102px;width:97px;background:linear-gradient(90deg,#00f,#00f,#00f,#0200ff,#0700ff,#0d00ff,#1200ff,#1800ff,#1e00ff,#2400ff,#2a00ff,#3000ff,#3600ff,#3c00ff,#4300ff,#4900ff,#4f00ff,#5600ff,#5d00ff,#6300ff,#6a00ff,#7100ff,#7800ff,#7f00ff,#8600ff,#8d00ff)"></i><i style="margin-left:104px;width:90px;background:linear-gradient(90deg,#00f,#00f,#00f,#0600ff,#0b00ff,#10f,#1700ff,#1c00ff,#20f,#2800ff,#2e00ff,#3500ff,#3b00ff,#4100ff,#4700ff,#4e00ff,#5400ff,#5b00ff,#6200ff,#6800ff,#6f00ff,#7600ff,#7d00ff,#8400ff)"></i><i style="margin-left:106px;width:82px;background:linear-gradient(90deg,#00f,#00f,#0400ff,#0900ff,#0f00ff,#1500ff,#1a00ff,#2000ff,#2600ff,#2c00ff,#3200ff,#3800ff,#3f00ff,#4500ff,#4b00ff,#5200ff,#5800ff,#5f00ff,#6500ff,#6c00ff,#7300ff,#7a00ff)"></i><i style="margin-left:108px;width:75px;background:linear-gradient(90deg,#00f,#0200ff,#0800ff,#0d00ff,#1300ff,#1900ff,#1f00ff,#2500ff,#2b00ff,#3100ff,#3700ff,#3d00ff,#4300ff,#4a00ff,#5000ff,#5700ff,#5d00ff,#6400ff,#6b00ff,#7200ff)"></i><i style="margin-left:111px;width:66px;background:linear-gradient(90deg,#0200ff,#0700ff,#0d00ff,#1200ff,#1800ff,#1e00ff,#2300ff,#2900ff,#2f00ff,#3500ff,#3b00ff,#4100ff,#4800ff,#4e00ff,#5400ff,#5b00ff,#6100ff,#6800ff)"></i><i style="margin-left:113px;width:58px;background:linear-gradient(90deg,#0600ff,#0b00ff,#10f,#1600ff,#1c00ff,#2100ff,#2700ff,#2d00ff,#30f,#3900ff,#3f00ff,#4500ff,#4b00ff,#5100ff,#5800ff,#5e00ff)"></i><i style="margin-left:116px;width:50px;background:linear-gradient(90deg,#0b00ff,#1000ff,#1600ff,#1b00ff,#2100ff,#2700ff,#2c00ff,#3200ff,#3800ff,#3e00ff,#40f,#4a00ff,#5000ff,#5700ff)"></i><i style="margin-left:119px;width:41px;background:linear-gradient(90deg,#1000ff,#1500ff,#1b00ff,#2000ff,#2500ff,#2b00ff,#3100ff,#3600ff,#3c00ff,#4200ff,#4800ff,#4e00ff)"></i><i style="margin-left:122px;width:32px;background:linear-gradient(90deg,#1500ff,#1b00ff,#2100ff,#2600ff,#2c00ff,#3200ff,#3800ff,#3f00ff,#4500ff)"></i><i style="margin-left:125px;width:24px;background:linear-gradient(90deg,#1a00ff,#2000ff,#2600ff,#2c00ff,#3200ff,#3800ff,#3e00ff)"></i><i style="margin-left:128px;width:15px;background:linear-gradient(90deg,#1f00ff,#2500ff,#2a00ff,#3000ff,#3500ff)"></i><i></i><i></i></div>
<div id="ins"><i style="background:linear-gradient(90deg,#b2ff00,#b7ff00,#bcff00,#c1ff00,#c6ff00,#caff00,#cfff00,#d5ff00,#daff00,#dfff00,#e4ff00,#e9ff00,#ef0,#f4ff00,#f9ff00,#feff00,#fffa00,#fff500,#fff000,#ffeb00)"></i><i style="background:linear-gradient(90deg,#b3ff00,#b8ff00,#bdff00,#c2ff00,#c7ff00,#cf0,#d1ff00,#d6ff00,#dbff00,#e0ff00,#e5ff00,#eaff00,#f0ff00,#f5ff00,#faff00,#fffe00,#fff900,#fff400,#ffef00,#ffea00)"></i><i style="background:linear-gradient(90deg,#b4ff00,#b9ff00,#beff00,#c3ff00,#c8ff00,#cdff00,#d2ff00,#d7ff00,#dcff00,#e1ff00,#e6ff00,#ebff00,#f1ff00,#f6ff00,#fcff00,#fffd00,#fff800,#fff300,#fe0,#ffe900)"></i><i style="background:linear-gradient(90deg,#b5ff00,#baff00,#bfff00,#c4ff00,#c9ff00,#ceff00,#d3ff00,#d8ff00,#df0,#e2ff00,#e7ff00,#edff00,#f2ff00,#f7ff00,#fdff00,#fffc00,#fff700,#fff100,#ffec00,#ffe800)"></i><i style="background:linear-gradient(90deg,#b6ff00,#bf0,#c0ff00,#c5ff00,#caff00,#cfff00,#d4ff00,#d9ff00,#deff00,#e3ff00,#e9ff00,#ef0,#f3ff00,#f9ff00,#feff00,#fffb00,#fff500,#fff000,#ffeb00,#ffe700)"></i><i style="background:linear-gradient(90deg,#b7ff00,#bcff00,#c1ff00,#c6ff00,#cbff00,#d0ff00,#d5ff00,#daff00,#dfff00,#e5ff00,#eaff00,#efff00,#f4ff00,#faff00,#ff0,#fff900,#fff400,#ffef00,#ffea00,#ffe500)"></i><i style="background:linear-gradient(90deg,#b8ff01,#bdff00,#c2ff00,#c7ff00,#cf0,#d1ff00,#d6ff00,#dbff00,#e0ff00,#e6ff00,#ebff00,#f0ff00,#f6ff00,#fbff00,#fffd00,#fff800,#fff300,#fe0,#ffe900,#ffe400)"></i><i style="background:linear-gradient(90deg,#b9ff01,#beff00,#c3ff00,#c8ff00,#cdff00,#d2ff00,#d7ff00,#dcff00,#e2ff00,#e7ff00,#ecff00,#f2ff00,#f7ff00,#fcff00,#fffc00,#fff700,#fff200,#ffed00,#ffe800,#ffe300)"></i><i style="background:linear-gradient(90deg,#baff02,#bfff01,#c4ff00,#c9ff00,#ceff00,#d3ff00,#d8ff00,#deff00,#e3ff00,#e8ff00,#edff00,#f3ff00,#f8ff00,#feff00,#fffb00,#fff500,#fff000,#ffeb00,#ffe700,#ffe200)"></i><i style="background:linear-gradient(90deg,#bbff02,#c0ff01,#c5ff00,#caff00,#cfff00,#d4ff00,#daff00,#dfff00,#e4ff00,#e9ff00,#efff00,#f4ff00,#faff00,#ff0,#fff900,#fff400,#ffef00,#ffea00,#ffe500,#ffe100)"></i><i style="background:linear-gradient(90deg,#bcff03,#c1ff02,#c6ff01,#cbff00,#d0ff00,#d6ff00,#dbff00,#e0ff00,#e5ff00,#ebff00,#f0ff00,#f5ff00,#fbff00,#fffe00,#fff800,#fff300,#fe0,#ffe900,#ffe400,#ffe000)"></i><i style="background:linear-gradient(90deg,#bdff03,#c2ff02,#c7ff01,#cf0,#d1ff00,#d7ff00,#dcff00,#e1ff00,#e6ff00,#ecff00,#f1ff00,#f7ff00,#fcff00,#fffc00,#fff700,#fff200,#ffed00,#ffe800,#ffe300,#ffdf00)"></i><i style="background:linear-gradient(90deg,#beff04,#c3ff03,#c8ff02,#cdff01,#d3ff00,#d8ff00,#df0,#e2ff00,#e8ff00,#edff00,#f2ff00,#f8ff00,#fdff00,#fffb00,#fff600,#fff000,#ffeb00,#ffe700,#ffe200,#fd0)"></i><i style="background:linear-gradient(90deg,#bfff05,#c4ff03,#c9ff02,#cfff01,#d4ff00,#d9ff00,#deff00,#e4ff00,#e9ff00,#ef0,#f4ff00,#f9ff00,#ff0,#fffa00,#fff400,#ffef00,#ffea00,#ffe500,#ffe100,#ffdc00)"></i><i style="background:linear-gradient(90deg,#c0ff05,#c5ff04,#cbff03,#d0ff02,#d5ff01,#daff00,#dfff00,#e5ff00,#eaff00,#f0ff00,#f5ff00,#fbff00,#fffe00,#fff800,#fff300,#fe0,#ffe900,#ffe400,#ffe000,#ffdb00)"></i><i style="background:linear-gradient(90deg,#c1ff06,#c7ff05,#ccff03,#d1ff02,#d6ff01,#dbff00,#e1ff00,#e6ff00,#ebff00,#f1ff00,#f6ff00,#fcff00,#fffd00,#fff700,#fff200,#ffed00,#ffe800,#ffe300,#ffdf00,#ffda00)"></i><i style="background:linear-gradient(90deg,#c3ff06,#c8ff05,#cdff04,#d2ff03,#d7ff02,#dcff01,#e2ff00,#e7ff00,#edff00,#f2ff00,#f8ff00,#fdff00,#fffb00,#fff600,#fff100,#ffec00,#ffe700,#ffe200,#fd0,#ffd900)"></i><i style="background:linear-gradient(90deg,#c4ff07,#c9ff06,#ceff05,#d3ff04,#d8ff02,#deff01,#e3ff00,#e8ff00,#ef0,#f3ff00,#f9ff00,#feff00,#fffa00,#fff500,#ffef00,#ffea00,#ffe600,#ffe100,#ffdc00,#ffd800)"></i><i style="background:linear-gradient(90deg,#c5ff07,#caff06,#cfff05,#d4ff04,#daff03,#dfff02,#e4ff01,#eaff00,#efff00,#f5ff00,#faff00,#fffe00,#fff900,#fff300,#fe0,#ffe900,#ffe400,#ffe000,#ffdb00,#ffd700)"></i><i style="background:linear-gradient(90deg,#c6ff08,#cbff07,#d0ff06,#d5ff05,#dbff04,#e0ff02,#e5ff01,#ebff00,#f0ff00,#f6ff00,#fcff00,#fffd00,#fff700,#fff200,#ffed00,#ffe800,#ffe300,#ffde00,#ffda00,#ffd600)"></i><i style="background:linear-gradient(90deg,#c7ff09,#ccff07,#d1ff06,#d7ff05,#dcff04,#e1ff03,#e7ff02,#ecff01,#f2ff00,#f7ff00,#fdff00,#fffc00,#fff600,#fff100,#ffec00,#ffe700,#ffe200,#fd0,#ffd900,#ffd500)"></i><i style="background:linear-gradient(90deg,#c8ff09,#cdff08,#d2ff07,#d8ff06,#ddff05,#e2ff04,#e8ff02,#edff01,#f3ff00,#f9ff00,#feff00,#fffa00,#fff500,#fff000,#ffea00,#ffe600,#ffe100,#ffdc00,#ffd800,#ffd300)"></i><i style="background:linear-gradient(90deg,#c9ff0a,#ceff09,#d4ff08,#d9ff06,#deff05,#e4ff04,#e9ff03,#efff02,#f4ff01,#faff00,#fffe00,#fff900,#fff300,#fe0,#ffe900,#ffe400,#ffe000,#ffdb00,#ffd700,#ffd200)"></i><i style="background:linear-gradient(90deg,#caff0a,#cfff09,#d5ff08,#daff07,#dfff06,#e5ff05,#eaff04,#f0ff02,#f6ff01,#fbff00,#fffd00,#fff800,#fff200,#ffed00,#ffe800,#ffe300,#ffde00,#ffda00,#ffd600,#ffd100)"></i><i style="background:linear-gradient(90deg,#cbff0b,#d1ff0a,#d6ff09,#dbff08,#e1ff06,#e6ff05,#ecff04,#f1ff03,#f7ff02,#fdff01,#fffc00,#fff600,#fff100,#ffec00,#ffe700,#ffe200,#fd0,#ffd900,#ffd400,#ffd000)"></i><i style="background:linear-gradient(90deg,#ccff0c,#d2ff0a,#d7ff09,#dcff08,#e2ff07,#e7ff06,#edff05,#f3ff04,#f8ff02,#feff01,#fffa00,#fff500,#fff000,#ffeb00,#ffe600,#ffe100,#ffdc00,#ffd800,#ffd300,#ffcf00)"></i><i style="background:linear-gradient(90deg,#ceff0c,#d3ff0b,#d8ff0a,#deff09,#e3ff08,#e9ff07,#eeff05,#f4ff04,#faff03,#ffff02,#fff901,#fff400,#fe0,#ffe900,#ffe400,#ffe000,#ffdb00,#ffd700,#ffd200,#ffce00)"></i><i style="background:linear-gradient(90deg,#cfff0d,#d4ff0c,#d9ff0b,#dfff09,#e4ff08,#eaff07,#f0ff06,#f5ff05,#fbff04,#fffd02,#fff801,#fff200,#ffed00,#ffe800,#ffe300,#ffde00,#ffda00,#ffd500,#ffd100,#ffcd00)"></i><i style="background:linear-gradient(90deg,#d0ff0d,#d5ff0c,#dbff0b,#e0ff0a,#e6ff09,#ebff08,#f1ff07,#f6ff05,#fcff04,#fffc03,#fff602,#fff101,#ffec00,#ffe700,#ffe200,#fd0,#ffd900,#ffd400,#ffd000,#fc0)"></i><i style="background:linear-gradient(90deg,#d1ff0e,#d6ff0d,#dcff0c,#e1ff0b,#e7ff0a,#ecff08,#f2ff07,#f8ff06,#feff05,#fffb04,#fff502,#fff001,#ffeb00,#ffe600,#ffe100,#ffdc00,#ffd800,#ffd300,#ffcf00,#ffcb00)"></i><i style="background:linear-gradient(90deg,#d2ff0f,#d8ff0e,#ddff0c,#e3ff0b,#e8ff0a,#eeff09,#f3ff08,#f9ff07,#ffff05,#fff904,#fff403,#ffef02,#ffe901,#ffe400,#ffe000,#ffdb00,#ffd600,#ffd200,#ffce00,#ffca00)"></i><i style="background:linear-gradient(90deg,#d3ff0f,#d9ff0e,#deff0d,#e4ff0c,#e9ff0b,#efff0a,#f5ff08,#fbff07,#fffe06,#fff805,#fff304,#ffed02,#ffe801,#ffe300,#ffde00,#ffda00,#ffd500,#ffd100,#ffcd00,#ffc900)"></i><i style="background:linear-gradient(90deg,#d5ff10,#daff0f,#e0ff0e,#e5ff0d,#ebff0b,#f0ff0a,#f6ff09,#fcff08,#fffc07,#fff705,#fff104,#ffec03,#ffe702,#ffe201,#fd0,#ffd900,#ffd400,#ffd000,#fc0,#ffc800)"></i><i style="background:linear-gradient(90deg,#d6ff11,#dbff0f,#e1ff0e,#e6ff0d,#ecff0c,#f2ff0b,#f7ff0a,#fdff09,#fffb07,#fff506,#fff005,#ffeb03,#ffe602,#ffe101,#ffdc00,#ffd800,#ffd300,#ffcf00,#ffcb00,#ffc700)"></i><i style="background:linear-gradient(90deg,#d7ff11,#ddff10,#e2ff0f,#e8ff0e,#edff0d,#f3ff0c,#f9ff0a,#ffff09,#fffa08,#fff407,#ffef05,#ffe904,#ffe403,#ffe002,#ffdb00,#ffd600,#ffd200,#ffce00,#ffca00,#ffc600)"></i><i style="background:linear-gradient(90deg,#d8ff12,#deff11,#e3ff10,#e9ff0f,#efff0d,#f4ff0c,#faff0b,#fffe0a,#fff808,#fff307,#ffed06,#ffe805,#ffe303,#ffde02,#ffda01,#ffd500,#ffd100,#ffcd00,#ffc800,#ffc400)"></i><i style="background:linear-gradient(90deg,#d9ff13,#dfff11,#e5ff10,#eaff0f,#f0ff0e,#f6ff0d,#fcff0c,#fffd0a,#fff709,#fff108,#ffec06,#ffe705,#ffe204,#ffdd03,#ffd902,#ffd400,#ffd000,#ffcb00,#ffc700,#ffc300)"></i><i style="background:linear-gradient(90deg,#dbff13,#e0ff12,#e6ff11,#ecff10,#f1ff0f,#f7ff0e,#fdff0c,#fffb0b,#fff60a,#fff008,#ffeb07,#ffe606,#ffe104,#ffdc03,#ffd702,#ffd301,#ffcf00,#ffca00,#ffc600,#ffc200)"></i><i style="background:linear-gradient(90deg,#dcff14,#e1ff13,#e7ff12,#edff10,#f3ff0f,#f8ff0e,#feff0d,#fffa0c,#fff40a,#ffef09,#ffea07,#ffe406,#ffe005,#ffdb04,#ffd603,#ffd202,#ffce00,#ffc900,#ffc500,#ffc100)"></i><i style="background:linear-gradient(90deg,#ddff15,#e3ff13,#e8ff12,#ef1,#f4ff10,#faff0f,#fffe0e,#fff80c,#fff30b,#ffee09,#ffe808,#ffe307,#ffde06,#ffda04,#ffd503,#ffd102,#ffcc01,#ffc800,#ffc400,#ffc000)"></i><i style="background:linear-gradient(90deg,#deff15,#e4ff14,#eaff13,#f0ff12,#f5ff11,#fbff0f,#fffd0e,#fff70d,#fff20b,#ffec0a,#ffe709,#ffe207,#ffdd06,#ffd905,#ffd404,#ffd003,#ffcb01,#ffc700,#ffc300,#ffbf00)"></i><i style="background:linear-gradient(90deg,#e0ff16,#e5ff15,#ebff14,#f1ff12,#f7ff11,#fdff10,#fffc0f,#fff60d,#fff00c,#ffeb0a,#ffe609,#ffe108,#ffdc07,#ffd705,#ffd304,#ffce03,#ffca02,#ffc601,#ffc200,#ffbe00)"></i><i style="background:linear-gradient(90deg,#e1ff17,#e7ff15,#ecff14,#f2ff13,#f8ff12,#feff11,#fffa0f,#fff40e,#ffef0c,#ffea0b,#ffe50a,#ffe008,#ffdb07,#ffd606,#ffd205,#ffcd04,#ffc903,#ffc501,#ffc100,#ffbd00)"></i><i style="background:linear-gradient(90deg,#e2ff17,#e8ff16,#eeff15,#f4ff14,#f9ff13,#ff1,#fff910,#fff30e,#ffee0d,#ffe80c,#ffe30a,#ffde09,#ffda08,#ffd506,#ffd105,#ffcc04,#ffc803,#ffc402,#ffc001,#ffbc00)"></i><i style="background:linear-gradient(90deg,#e3ff18,#e9ff17,#efff16,#f5ff15,#fbff13,#fffd12,#fff711,#fff20f,#ffec0e,#ffe70c,#ffe20b,#ffdd09,#ffd808,#ffd407,#ffcf06,#ffcb05,#ffc704,#ffc302,#ffbf01,#fb0)"></i><i style="background:linear-gradient(90deg,#e5ff19,#ebff18,#f0ff16,#f6ff15,#fcff14,#fffc13,#fff611,#fff010,#ffeb0e,#ffe60d,#ffe10b,#ffdc0a,#ffd709,#ffd308,#ffce06,#ffca05,#ffc604,#ffc203,#ffbe02,#ffba01)"></i><i style="background:linear-gradient(90deg,#e6ff19,#ecff18,#f2ff17,#f8ff16,#feff15,#fffa13,#fff512,#ffef10,#ffea0f,#ffe50d,#ffe00c,#ffdb0b,#ffd609,#ffd208,#ffcd07,#ffc906,#ffc505,#ffc103,#ffbd02,#ffb901)"></i><i style="background:linear-gradient(90deg,#e7ff1a,#edff19,#f3ff18,#f9ff17,#ffff15,#fff914,#fff312,#fe1,#ffe80f,#ffe30e,#ffde0c,#ffda0b,#ffd50a,#ffd009,#ffcc07,#ffc806,#ffc405,#ffc004,#ffbc03,#ffb802)"></i><i style="background:linear-gradient(90deg,#e9ff1b,#efff1a,#f5ff18,#faff17,#fffd16,#fff814,#fff213,#ffec11,#ffe710,#ffe20e,#ffdd0d,#ffd80c,#ffd40a,#ffcf09,#ffcb08,#ffc707,#ffc306,#ffbf04,#ffbb03,#ffb702)"></i></div>
<svg width="1717" height="886" viewBox="0 0 1717 886">
<path d="M1187.63 573.82 L1187.55 573.82 L1187.39 573.88 L1187.24 573.88 L1187.01 573.94 L1186.77 573.94 L1186.46 573.94 L1186.07 573.94 L1185.53 573.76 L1184.67 573.35 L1183.59 572.69 L1182.03 571.68 L1180.09 570.31 L1177.52 568.58 L1174.03 566.26 L1169.67 563.28 L1167.09 561.39 L1164.23 559.11 L1162.2 557.4 L1160.04 555.47 L1157.62 553.04 L1156.03 551.3 L1154.36 549.42 L1152.59 547.33 L1150.73 545 L1148.76 542.37 L1147.06 539.99 L1145.29 537.48 L1143.46 534.78 L1141.56 531.85 L1139.57 528.64 L1137.49 525.1 L1135.33 521.28 L1133.09 517.22 L1130.77 512.88 L1128.37 508.22 L1125.87 503.2 L1123.27 497.76 L1120.54 491.96 L1117.68 485.82 L1114.73 479.32 L1111.72 472.41 L1108.7 465.07 L1105.7 457.26 L1102.7 448.97 L1099.66 440.22 L1096.61 431.03 L1093.57 421.43 L1090.55 411.45 L1087.59 401.1 L1084.63 390.28 L1081.64 378.94 L1078.69 367.22 L1075.82 355.23 L1073.09 343.12 L1070.57 331 L1068.19 318.73 L1065.91 306.19 L1063.77 293.51 L1061.81 280.85 L1060.1 268.34 L1058.67 256.13 L1057.49 244.11 L1056.51 232.15 L1055.77 220.34 L1055.31 208.78 L1055.15 197.57 L1055.33 186.8 L1055.85 176.38 L1056.67 166.19 L1057.79 156.36 L1059.24 146.98 L1061.01 138.15 L1063.1 129.98 L1065.57 122.41 L1068.42 115.35 L1071.59 108.84 L1075.03 102.94 L1078.7 97.7 L1082.54 93.17 L1086.61 89.43 L1090.98 86.43 L1095.57 84.1 L1100.32 82.34 L1105.17 81.06 L1110.05 80.19 L1115.01 79.84 L1120.12 80.12 L1125.31 80.88 L1130.57 82 L1135.83 83.32 L1141.07 84.72 L1146.31 86.27 L1151.59 88.1 L1156.89 90.14 L1162.17 92.32 L1167.4 94.57 L1172.55 96.81 L1177.61 99.06 L1182.62 101.39 L1187.58 103.78 L1192.5 106.23 L1197.38 108.74 L1202.24 111.28 L1207.07 113.87 L1211.85 116.51 L1216.6 119.2 L1221.33 121.93 L1226.05 124.72 L1230.77 127.54 L1235.48 130.41 L1240.19 133.33 L1244.88 136.3 L1249.56 139.3 L1254.24 142.34 L1258.91 145.41 L1263.56 148.5 L1268.21 151.64 L1272.84 154.81 L1277.48 158.01 L1282.1 161.23 L1286.73 164.47 L1291.36 167.73 L1295.99 171.01 L1300.61 174.32 L1305.23 177.65 L1309.85 181 L1314.48 184.36 L1319.12 187.74 L1323.76 191.13 L1328.4 194.55 L1333.04 197.97 L1337.68 201.41 L1342.31 204.85 L1346.93 208.29 L1351.55 211.75 L1356.17 215.22 L1360.78 218.69 L1365.38 222.17 L1369.98 225.63 L1374.58 229.1 L1379.19 232.57 L1383.78 236.04 L1388.37 239.51 L1392.95 242.97 L1397.5 246.42 L1402.03 249.87 L1406.56 253.31 L1411.07 256.74 L1415.56 260.17 L1420.03 263.58 L1424.47 266.97 L1428.89 270.34 L1433.3 273.71 L1437.69 277.06 L1442.04 280.39 L1446.37 283.7 L1450.67 286.98 L1454.93 290.24 L1459.17 293.48 L1463.38 296.7 L1467.55 299.89 L1471.69 303.04 L1475.77 306.16 L1479.82 309.24 L1483.84 312.3 L1487.81 315.32 L1491.74 318.31 L1495.6 321.25 L1499.4 324.15 L1503.15 327.01 L1506.84 329.84 L1510.47 332.63 L1514.04 335.36 L1517.53 338.04 L1520.93 340.64 L1524.24 343.17 L1527.47 345.64 L1530.62 348.04 L1533.69 350.38 L1536.71 352.68 L1539.67 354.94 L1542.58 357.16 L1545.43 359.34 L1548.22 361.47 L1550.94 363.54 L1553.59 365.56 L1556.15 367.51 L1558.62 369.38 L1561.01 371.19 L1563.32 372.94 L1565.56 374.63 L1567.73 376.27 L1569.83 377.87 L1572.25 379.72 L1574.57 381.49 L1576.78 383.19 L1578.9 384.82 L1580.94 386.39 L1583.36 388.24 L1585.62 389.98 L1587.77 391.62 L1589.8 393.18 L1592.35 395.11 L1594.69 396.88 L1596.88 398.54 L1599.86 400.82 L1602.55 402.88 L1605.03 404.79 L1607.29 406.52 L1611.18 409.5 L1614.29 411.82 L1616.62 413.61 L1618.41 414.98 L1619.73 415.99 L1620.58 416.64 L1621.28 417.18 L1621.83 417.6 L1622.37 418.01 L1622.84 418.37 L1623.15 418.61 L1623.3 418.73 L1623.38 418.79 Z M1549.77 380.25 L1285.49 219.44 L1168.89 541.06 Z" fill="#000" fill-opacity=".4" fill-rule="evenodd"/>
<defs><clipPath id="inc"><rect x="1509" y="85" width="190" height="147"/></clipPath></defs>
<g clip-path="url(#inc)"><path d="M1139.84 -124.02 L2461.25 680.04 L2461.25 -2124.02 L1139.84 -2124.02 Z" fill="#000" fill-opacity=".4"/></g>
<rect x="1596.3" y="150.4" width="14.4" height="14.4" fill="none" stroke="#fff" stroke-width="1.3"/>
<circle cx="1647.9" cy="181" r="4.3" fill="#ffff00" stroke="#000" stroke-width="1.1"/>
<rect x="1051.8" y="76.9" width="653.2" height="500.3" fill="none" stroke="#a6a6a6" stroke-width="1.3"/>
<line x1="1051.9" y1="577.8" x2="1051.9" y2="582.9" stroke="#e0e0e0" stroke-width="1.3"/>
<text x="1051.9" y="599" font-size="15.8" fill="#dcdcdc" text-anchor="middle" textLength="8.3" lengthAdjust="spacingAndGlyphs">0</text>
<line x1="1046" y1="577.7" x2="1051.2" y2="577.7" stroke="#e0e0e0" stroke-width="1.2"/>
<text x="1045.5" y="583.4" font-size="15.8" fill="#dcdcdc" text-anchor="end" textLength="8.3" lengthAdjust="spacingAndGlyphs">0</text>
<line x1="1129.63" y1="577.8" x2="1129.63" y2="582.9" stroke="#e0e0e0" stroke-width="1.3"/>
<text x="1129.63" y="599" font-size="15.8" fill="#dcdcdc" text-anchor="middle" textLength="20.76" lengthAdjust="spacingAndGlyphs">0,1</text>
<line x1="1046" y1="518.17" x2="1051.2" y2="518.17" stroke="#e0e0e0" stroke-width="1.2"/>
<text x="1045.5" y="523.87" font-size="15.8" fill="#dcdcdc" text-anchor="end" textLength="20.76" lengthAdjust="spacingAndGlyphs">0,1</text>
<line x1="1207.36" y1="577.8" x2="1207.36" y2="582.9" stroke="#e0e0e0" stroke-width="1.3"/>
<text x="1207.36" y="599" font-size="15.8" fill="#dcdcdc" text-anchor="middle" textLength="20.76" lengthAdjust="spacingAndGlyphs">0,2</text>
<line x1="1046" y1="458.64" x2="1051.2" y2="458.64" stroke="#e0e0e0" stroke-width="1.2"/>
<text x="1045.5" y="464.34" font-size="15.8" fill="#dcdcdc" text-anchor="end" textLength="20.76" lengthAdjust="spacingAndGlyphs">0,2</text>
<line x1="1285.09" y1="577.8" x2="1285.09" y2="582.9" stroke="#e0e0e0" stroke-width="1.3"/>
<text x="1285.09" y="599" font-size="15.8" fill="#dcdcdc" text-anchor="middle" textLength="20.76" lengthAdjust="spacingAndGlyphs">0,3</text>
<line x1="1046" y1="399.11" x2="1051.2" y2="399.11" stroke="#e0e0e0" stroke-width="1.2"/>
<text x="1045.5" y="404.81" font-size="15.8" fill="#dcdcdc" text-anchor="end" textLength="20.76" lengthAdjust="spacingAndGlyphs">0,3</text>
<line x1="1362.82" y1="577.8" x2="1362.82" y2="582.9" stroke="#e0e0e0" stroke-width="1.3"/>
<text x="1362.82" y="599" font-size="15.8" fill="#dcdcdc" text-anchor="middle" textLength="20.76" lengthAdjust="spacingAndGlyphs">0,4</text>
<line x1="1046" y1="339.58" x2="1051.2" y2="339.58" stroke="#e0e0e0" stroke-width="1.2"/>
<text x="1045.5" y="345.28" font-size="15.8" fill="#dcdcdc" text-anchor="end" textLength="20.76" lengthAdjust="spacingAndGlyphs">0,4</text>
<line x1="1440.55" y1="577.8" x2="1440.55" y2="582.9" stroke="#e0e0e0" stroke-width="1.3"/>
<text x="1440.55" y="599" font-size="15.8" fill="#dcdcdc" text-anchor="middle" textLength="20.76" lengthAdjust="spacingAndGlyphs">0,5</text>
<line x1="1046" y1="280.05" x2="1051.2" y2="280.05" stroke="#e0e0e0" stroke-width="1.2"/>
<text x="1045.5" y="285.75" font-size="15.8" fill="#dcdcdc" text-anchor="end" textLength="20.76" lengthAdjust="spacingAndGlyphs">0,5</text>
<line x1="1518.28" y1="577.8" x2="1518.28" y2="582.9" stroke="#e0e0e0" stroke-width="1.3"/>
<text x="1518.28" y="599" font-size="15.8" fill="#dcdcdc" text-anchor="middle" textLength="20.76" lengthAdjust="spacingAndGlyphs">0,6</text>
<line x1="1046" y1="220.52" x2="1051.2" y2="220.52" stroke="#e0e0e0" stroke-width="1.2"/>
<text x="1045.5" y="226.22" font-size="15.8" fill="#dcdcdc" text-anchor="end" textLength="20.76" lengthAdjust="spacingAndGlyphs">0,6</text>
<line x1="1596.01" y1="577.8" x2="1596.01" y2="582.9" stroke="#e0e0e0" stroke-width="1.3"/>
<text x="1596.01" y="599" font-size="15.8" fill="#dcdcdc" text-anchor="middle" textLength="20.76" lengthAdjust="spacingAndGlyphs">0,7</text>
<line x1="1046" y1="160.99" x2="1051.2" y2="160.99" stroke="#e0e0e0" stroke-width="1.2"/>
<text x="1045.5" y="166.69" font-size="15.8" fill="#dcdcdc" text-anchor="end" textLength="20.76" lengthAdjust="spacingAndGlyphs">0,7</text>
<line x1="1673.74" y1="577.8" x2="1673.74" y2="582.9" stroke="#e0e0e0" stroke-width="1.3"/>
<text x="1673.74" y="599" font-size="15.8" fill="#dcdcdc" text-anchor="middle" textLength="20.76" lengthAdjust="spacingAndGlyphs">0,8</text>
<line x1="1046" y1="101.46" x2="1051.2" y2="101.46" stroke="#e0e0e0" stroke-width="1.2"/>
<text x="1045.5" y="107.16" font-size="15.8" fill="#dcdcdc" text-anchor="end" textLength="20.76" lengthAdjust="spacingAndGlyphs">0,8</text>
<text x="1326.5" y="71.9" font-size="15.26" fill="#dcdcdc" textLength="78.1" lengthAdjust="spacingAndGlyphs">CIE 1931 xy</text>
<rect x="1421.6" y="537.2" width="280.4" height="27.5" fill="#333"/>
<text x="1453.4" y="558.6" font-size="20.78" fill="#efefef" textLength="217.6" lengthAdjust="spacingAndGlyphs">RGB Triplet: 255, 255, 0</text>
<rect x="1278" y="211.2" width="14.2" height="14.2" fill="none" stroke="#fff" stroke-width="1.55"/>
<rect x="1282" y="277.3" width="14.2" height="14.2" fill="none" stroke="#fff" stroke-width="1.55"/>
<rect x="1336.8" y="275.8" width="14.2" height="14.2" fill="none" stroke="#fff" stroke-width="1.55"/>
<rect x="1370.4" y="268.6" width="14.2" height="14.2" fill="none" stroke="#fff" stroke-width="1.55"/>
<rect x="1391.5" y="287.4" width="14.2" height="14.2" fill="none" stroke="#fff" stroke-width="1.55"/>
<rect x="1412.5" y="308.4" width="14.2" height="14.2" fill="none" stroke="#fff" stroke-width="1.55"/>
<rect x="1443.3" y="327.7" width="14.2" height="14.2" fill="none" stroke="#fff" stroke-width="1.55"/>
<rect x="1309" y="315.4" width="14.2" height="14.2" fill="none" stroke="#fff" stroke-width="1.55"/>
<rect x="1248.4" y="354.3" width="14.2" height="14.2" fill="none" stroke="#fff" stroke-width="1.55"/>
<rect x="1218.8" y="373.8" width="14.2" height="14.2" fill="none" stroke="#fff" stroke-width="1.55"/>
<rect x="1339.1" y="357.3" width="14.2" height="14.2" fill="none" stroke="#fff" stroke-width="1.55"/>
<rect x="1355.1" y="352.8" width="14.2" height="14.2" fill="none" stroke="#fff" stroke-width="1.55"/>
<rect x="1404" y="382.3" width="14.2" height="14.2" fill="none" stroke="#fff" stroke-width="1.55"/>
<rect x="1461.4" y="379.8" width="14.2" height="14.2" fill="none" stroke="#fff" stroke-width="1.55"/>
<rect x="1541.3" y="372.8" width="14.2" height="14.2" fill="none" stroke="#fff" stroke-width="1.55"/>
<rect x="1206.3" y="409.2" width="14.2" height="14.2" fill="none" stroke="#fff" stroke-width="1.55"/>
<rect x="1238.4" y="410.5" width="14.2" height="14.2" fill="none" stroke="#fff" stroke-width="1.55"/>
<rect x="1252.4" y="418.8" width="14.2" height="14.2" fill="none" stroke="#fff" stroke-width="1.55"/>
<rect x="1269.2" y="437.3" width="14.2" height="14.2" fill="none" stroke="#fff" stroke-width="1.55"/>
<rect x="1335.3" y="421.8" width="14.2" height="14.2" fill="none" stroke="#fff" stroke-width="1.55"/>
<rect x="1213.3" y="455.1" width="14.2" height="14.2" fill="none" stroke="#fff" stroke-width="1.55"/>
<rect x="1194" y="484.9" width="14.2" height="14.2" fill="none" stroke="#fff" stroke-width="1.55"/>
<rect x="1293.2" y="477.9" width="14.2" height="14.2" fill="none" stroke="#fff" stroke-width="1.55"/>
<rect x="1161.4" y="533.8" width="14.2" height="14.2" fill="none" stroke="#fff" stroke-width="1.55"/>
<rect x="1287.9" y="372.8" width="14.2" height="14.2" fill="none" stroke="#fff" stroke-width="1.55"/>
<rect x="1288.1" y="373" width="13.8" height="13.8" fill="none" stroke="#000" stroke-width="2"/>
<circle cx="1284.6" cy="392.4" r="4.3" fill="#ffffff" stroke="#000" stroke-width="1.1"/>
<circle cx="1287.7" cy="389.9" r="4.3" fill="#e6e6e6" stroke="#000" stroke-width="1.1"/>
<circle cx="1287.9" cy="389.2" r="4.3" fill="#d2d2d2" stroke="#000" stroke-width="1.1"/>
<circle cx="1288" cy="388.4" r="4.3" fill="#bababa" stroke="#000" stroke-width="1.1"/>
<circle cx="1287.9" cy="387.5" r="4.3" fill="#a0a0a0" stroke="#000" stroke-width="1.1"/>
<circle cx="1323.9" cy="238.1" r="4.3" fill="#00ff00" stroke="#000" stroke-width="1.1"/>
<circle cx="1386.8" cy="280.2" r="4.3" fill="#ffff00" stroke="#000" stroke-width="1.1"/>
<circle cx="1400.8" cy="294" r="4.3" fill="#e7c71f" stroke="#000" stroke-width="1.1"/>
<circle cx="1355" cy="293" r="4.3" fill="#9dbc40" stroke="#000" stroke-width="1.1"/>
<circle cx="1308.9" cy="307" r="4.3" fill="#469449" stroke="#000" stroke-width="1.1"/>
<circle cx="1319.9" cy="335.8" r="4.3" fill="#576c43" stroke="#000" stroke-width="1.1"/>
<circle cx="1412.9" cy="312.5" r="4.3" fill="#e0a32e" stroke="#000" stroke-width="1.1"/>
<circle cx="1433.9" cy="326.3" r="4.3" fill="#d67e2c" stroke="#000" stroke-width="1.1"/>
<circle cx="1504.8" cy="359.9" r="4.3" fill="#ff0000" stroke="#000" stroke-width="1.1"/>
<circle cx="1429.4" cy="376.9" r="4.3" fill="#af363c" stroke="#000" stroke-width="1.1"/>
<circle cx="1375.8" cy="385" r="4.3" fill="#c15a63" stroke="#000" stroke-width="1.1"/>
<circle cx="1345" cy="363.1" r="4.3" fill="#735244" stroke="#000" stroke-width="1.1"/>
<circle cx="1333.7" cy="368.4" r="4.3" fill="#c29682" stroke="#000" stroke-width="1.1"/>
<circle cx="1264.8" cy="375.4" r="4.3" fill="#67bdaa" stroke="#000" stroke-width="1.1"/>
<circle cx="1236" cy="399.5" r="4.3" fill="#00ffff" stroke="#000" stroke-width="1.1"/>
<circle cx="1224.9" cy="421.8" r="4.3" fill="#0885a1" stroke="#000" stroke-width="1.1"/>
<circle cx="1246" cy="421.8" r="4.3" fill="#627a9d" stroke="#000" stroke-width="1.1"/>
<circle cx="1253" cy="427.1" r="4.3" fill="#8580b1" stroke="#000" stroke-width="1.1"/>
<circle cx="1244" cy="441.4" r="4.3" fill="#000000" stroke="#000" stroke-width="1.1"/>
<circle cx="1261" cy="439.1" r="4.3" fill="#5e3c6c" stroke="#000" stroke-width="1.1"/>
<circle cx="1311.9" cy="421.8" r="4.3" fill="#bb5695" stroke="#000" stroke-width="1.1"/>
<circle cx="1221.9" cy="453.9" r="4.3" fill="#505ba6" stroke="#000" stroke-width="1.1"/>
<circle cx="1204.1" cy="476.2" r="4.3" fill="#383d96" stroke="#000" stroke-width="1.1"/>
<circle cx="1264" cy="470.7" r="4.3" fill="#ff00ff" stroke="#000" stroke-width="1.1"/>
<circle cx="1177.1" cy="511.8" r="4.3" fill="#0000ff" stroke="#000" stroke-width="1.1"/>
</svg>
</body></html>
